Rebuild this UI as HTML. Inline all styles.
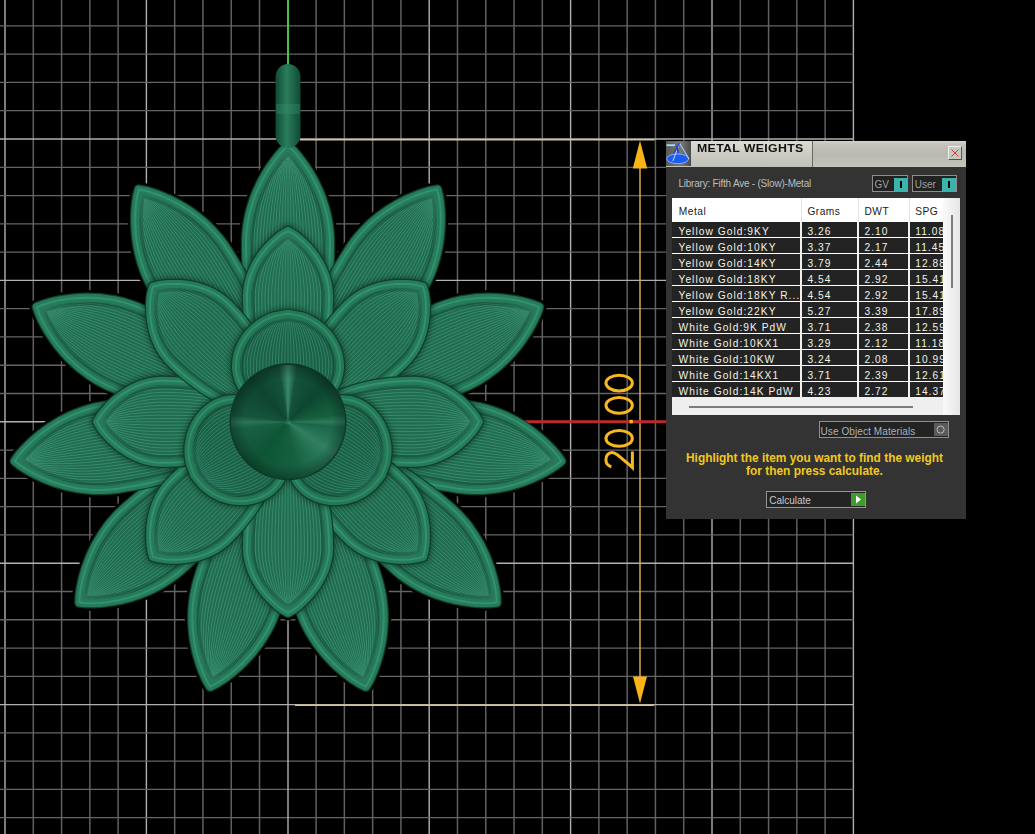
<!DOCTYPE html>
<html><head><meta charset="utf-8">
<style>
html,body{margin:0;padding:0;background:#000;width:1035px;height:834px;overflow:hidden;position:relative;font-family:"Liberation Sans",sans-serif;}
#scene{position:absolute;left:0;top:0;}
.dome{position:absolute;left:231px;top:364.8px;width:114px;height:114px;border-radius:50%;background:radial-gradient(circle at 50% 50%, rgba(120,200,160,0.35) 0, rgba(120,200,160,0) 4px, rgba(0,0,0,0) 44px, rgba(0,0,0,0.28) 57px),conic-gradient(from 0deg at 50% 50%, #3a8a6a 0deg, #15533b 10deg, #0d4630 45deg, #17603f 82deg, #2c7a5a 90deg, #1a6648 96deg, #2f7f60 125deg, #15603f 170deg, #0e5436 220deg, #185f43 262deg, #2a7356 270deg, #15543c 278deg, #0d4530 320deg, #14523a 350deg, #3a8a6a 360deg);}
.dlg{position:absolute;left:666px;top:141px;width:300px;height:377.5px;background:#333333;overflow:hidden;}
.dlg *{box-sizing:border-box;}
.tb{position:absolute;left:0;top:0;width:300px;height:25.5px;background:linear-gradient(#d4d4cc 0,#c4c4bc 3px,#b9b9b1 50%,#c3c3bb 100%);}
.ico{position:absolute;left:0;top:0;width:25px;height:25px;background:linear-gradient(90deg,#5a5a5a,#787878 60%,#4a4a4a);}
.ico svg{position:absolute;left:0;top:0}
.tab{position:absolute;left:25px;top:0;width:121.5px;height:25.5px;background:linear-gradient(#dcdcd4 0,#cfcfc7 40%,#c0c0b8 100%);border-right:1.5px solid #6a6a64;}
.ttl{position:absolute;left:5.5px;top:1.3px;font-weight:bold;font-size:11px;letter-spacing:0.3px;transform:scaleX(1.12);transform-origin:0 0;color:#111;line-height:13px}
.cls{position:absolute;left:282px;top:5px;width:14px;height:14px;background:#c8c8c0;border-top:1px solid #eee;border-left:1px solid #eee;border-right:1px solid #555;border-bottom:1px solid #555;}
.cls svg{position:absolute;left:-1px;top:-1px}
.lib{position:absolute;left:12.4px;top:36.5px;font-size:10px;color:#bdbdbd;line-height:12px;white-space:nowrap;letter-spacing:-0.22px}
.tg{position:absolute;border:1px solid #8e8e8e;background:#222;}
.tgt{position:absolute;left:1.5px;top:2.6px;font-size:10px;color:#a0a0a0;line-height:12px}
.teal{position:absolute;top:1.5px;width:13.2px;height:13.2px;background:#3cb4ae;}
.teal::after{content:"";position:absolute;left:5.5px;top:3px;width:2px;height:7px;background:#000;}
.tbl{position:absolute;left:6px;top:57px;width:287.5px;height:217.2px;background:#fff;}
.hdr{position:absolute;left:0;top:0;width:271px;height:24px;}
.hdr span{position:absolute;top:8px;font-size:10.2px;color:#1a1a1a;line-height:12px;letter-spacing:0.5px}
.h0{left:6.8px} .h1{left:135.4px} .h2{left:192.5px} .h3{left:243.2px}
.hdr::before{content:"";position:absolute;left:128.8px;top:0;width:1px;height:24px;background:#e4e4e4}
.hdr::after{content:"";position:absolute;left:185.7px;top:0;width:1px;height:24px;background:#e4e4e4}
.row{position:absolute;left:0;width:271px;height:14.8px;background:#232323;}
.row span{position:absolute;top:4px;font-size:10.2px;color:#f2f2ea;line-height:12px;letter-spacing:1.05px;white-space:nowrap}
.row .c0{left:6.5px} .row .c1{left:135.4px} .row .c2{left:192.5px} .row .c3{left:243.2px}
.row::before{content:"";position:absolute;left:128.3px;top:0;width:1.8px;height:14.8px;background:#f0f0f0}
.row::after{content:"";position:absolute;left:185.2px;top:0;width:1.8px;height:14.8px;background:#f0f0f0}
.c3{}
.row .sep{position:absolute;left:236.1px;top:0;width:1.8px;height:14.8px;background:#f0f0f0}
.hdr .sep{position:absolute;left:236.6px;top:0;width:1px;height:24px;background:#e4e4e4}
.vsb{position:absolute;left:271px;top:0;width:16.5px;height:217.2px;background:linear-gradient(90deg,#fafafa,#e6e6e6);}
.vsb::after{content:"";position:absolute;left:8px;top:17px;width:2px;height:73px;background:#7c7c7c}
.hsb{position:absolute;left:0;top:198.8px;width:271px;height:18.4px;background:#efefef;}
.hsb::after{content:"";position:absolute;left:16.5px;top:9.2px;width:224.5px;height:2px;background:#7c7c7c}
.uom{position:absolute;left:153px;top:280.3px;width:130px;height:16.5px;border:1px solid #8e8e8e;background:#232323;font-size:10px;color:#b0b0b0;line-height:12px;padding:3.5px 0 0 0.5px;white-space:nowrap;letter-spacing:0.1px}
.gbtn{position:absolute;left:114px;top:0.5px;width:13.5px;height:13.5px;background:#5a5a5a}
.gbtn svg{position:absolute;left:0;top:0}
.msg{position:absolute;left:-1.5px;top:311px;width:300px;text-align:center;font-weight:bold;font-size:11.9px;line-height:12.5px;color:#f2c81c;}
.calc{position:absolute;left:100.2px;top:350.3px;width:99.5px;height:16.7px;border:1px solid #959595;background:#232323;font-size:10px;color:#c8c8c8;line-height:12px;padding:2.5px 0 0 2px;letter-spacing:0px}
.gplay{position:absolute;left:84px;top:1px;width:13.5px;height:13px;background:#3f9c2a}
.gplay svg{position:absolute;left:0;top:0}
</style></head><body>
<svg id="scene" width="1035" height="834" viewBox="0 0 1035 834">
<defs><clipPath id="c1"><path d="M288.0,381.8 L276.9,376.9 L272.5,372.0 L269.1,367.1 L266.4,362.1 L264.1,357.2 L262.1,352.3 L260.3,347.4 L258.7,342.5 L257.2,337.6 L255.9,332.6 L254.7,327.7 L253.6,322.8 L252.6,317.9 L251.7,313.0 L250.9,308.1 L250.1,303.1 L249.4,298.2 L248.8,293.3 L248.3,288.4 L247.8,283.5 L247.4,278.6 L247.0,273.6 L246.7,268.7 L246.5,263.8 L246.3,258.9 L246.1,254.0 L246.0,249.1 L246.0,244.1 L246.1,239.2 L246.3,234.3 L246.8,229.4 L247.4,224.5 L248.3,219.6 L249.3,214.6 L250.5,209.7 L252.0,204.8 L253.6,199.9 L255.4,195.0 L257.5,190.1 L259.8,185.1 L262.2,180.2 L265.0,175.3 L267.9,170.4 L271.2,165.5 L274.7,160.6 L278.5,155.6 L282.8,150.7 L288.0,145.8 L288.0,145.8 L293.2,150.7 L297.5,155.6 L301.3,160.6 L304.8,165.5 L308.1,170.4 L311.0,175.3 L313.8,180.2 L316.2,185.1 L318.5,190.1 L320.6,195.0 L322.4,199.9 L324.0,204.8 L325.5,209.7 L326.7,214.6 L327.7,219.6 L328.6,224.5 L329.2,229.4 L329.7,234.3 L329.9,239.2 L330.0,244.1 L330.0,249.1 L329.9,254.0 L329.7,258.9 L329.5,263.8 L329.3,268.7 L329.0,273.6 L328.6,278.6 L328.2,283.5 L327.7,288.4 L327.2,293.3 L326.6,298.2 L325.9,303.1 L325.1,308.1 L324.3,313.0 L323.4,317.9 L322.4,322.8 L321.3,327.7 L320.1,332.6 L318.8,337.6 L317.3,342.5 L315.7,347.4 L313.9,352.3 L311.9,357.2 L309.6,362.1 L306.9,367.1 L303.5,372.0 L299.1,376.9 L288.0,381.8Z"/></clipPath><clipPath id="c2"><path d="M309.6,388.1 L302.9,378.0 L301.9,371.5 L301.7,365.5 L302.1,359.9 L302.8,354.6 L303.8,349.3 L304.9,344.2 L306.2,339.2 L307.7,334.3 L309.2,329.4 L310.8,324.6 L312.6,319.9 L314.4,315.2 L316.3,310.6 L318.3,306.0 L320.3,301.5 L322.4,297.0 L324.5,292.5 L326.7,288.1 L329.0,283.7 L331.3,279.3 L333.6,275.0 L336.0,270.7 L338.5,266.4 L341.0,262.2 L343.5,258.0 L346.1,253.8 L348.7,249.6 L351.4,245.5 L354.3,241.5 L357.4,237.6 L360.6,233.9 L363.9,230.2 L367.4,226.6 L371.1,223.1 L375.0,219.8 L379.0,216.5 L383.2,213.4 L387.6,210.3 L392.2,207.4 L396.9,204.6 L401.9,202.0 L407.0,199.4 L412.4,197.1 L418.0,194.8 L423.9,192.8 L430.2,190.9 L437.2,189.6 L437.2,189.6 L438.9,196.6 L439.9,203.0 L440.5,209.2 L440.8,215.3 L440.8,221.1 L440.6,226.9 L440.3,232.5 L439.7,238.0 L439.0,243.3 L438.0,248.6 L436.9,253.7 L435.6,258.7 L434.2,263.6 L432.6,268.4 L430.8,273.1 L428.8,277.7 L426.7,282.2 L424.4,286.6 L422.0,290.9 L419.4,295.0 L416.7,299.2 L414.0,303.3 L411.2,307.3 L408.4,311.3 L405.5,315.3 L402.6,319.3 L399.6,323.3 L396.6,327.2 L393.5,331.0 L390.4,334.9 L387.3,338.7 L384.0,342.5 L380.7,346.2 L377.4,349.9 L374.0,353.5 L370.5,357.1 L366.9,360.7 L363.2,364.1 L359.4,367.6 L355.6,370.9 L351.5,374.2 L347.4,377.3 L343.0,380.4 L338.4,383.3 L333.5,385.9 L328.0,388.3 L321.6,390.0 L309.6,388.1Z"/></clipPath><clipPath id="c3"><path d="M324.4,405.2 L324.2,393.0 L326.9,387.0 L330.0,381.9 L333.3,377.4 L336.8,373.2 L340.5,369.4 L344.2,365.7 L348.0,362.2 L351.8,358.8 L355.8,355.6 L359.7,352.4 L363.8,349.4 L367.8,346.4 L371.9,343.6 L376.0,340.8 L380.2,338.0 L384.4,335.4 L388.6,332.8 L392.9,330.2 L397.1,327.8 L401.4,325.3 L405.8,323.0 L410.1,320.6 L414.5,318.4 L418.9,316.2 L423.3,314.0 L427.7,311.9 L432.2,309.8 L436.7,307.8 L441.2,306.0 L445.9,304.4 L450.6,302.9 L455.5,301.6 L460.4,300.5 L465.4,299.6 L470.4,298.9 L475.6,298.3 L480.8,297.9 L486.1,297.8 L491.5,297.8 L497.1,298.0 L502.7,298.4 L508.4,299.1 L514.2,300.0 L520.1,301.1 L526.2,302.6 L532.4,304.5 L539.1,307.1 L539.1,307.1 L536.7,313.9 L534.1,319.9 L531.2,325.4 L528.2,330.6 L525.0,335.6 L521.8,340.4 L518.5,344.9 L515.0,349.2 L511.5,353.3 L507.9,357.2 L504.2,360.9 L500.4,364.4 L496.5,367.8 L492.5,370.9 L488.5,373.9 L484.4,376.7 L480.2,379.4 L475.9,381.8 L471.5,384.1 L467.1,386.2 L462.6,388.2 L458.1,390.2 L453.5,392.1 L449.0,394.0 L444.4,395.8 L439.8,397.5 L435.2,399.2 L430.5,400.9 L425.9,402.5 L421.2,404.1 L416.4,405.5 L411.7,407.0 L406.9,408.3 L402.1,409.6 L397.2,410.8 L392.3,412.0 L387.4,413.0 L382.4,414.0 L377.4,414.8 L372.3,415.5 L367.2,416.1 L362.0,416.5 L356.7,416.7 L351.2,416.6 L345.6,416.2 L339.8,415.2 L333.5,413.2 L324.4,405.2Z"/></clipPath><clipPath id="c4"><path d="M327.6,427.5 L334.0,417.2 L339.5,413.5 L344.9,410.9 L350.1,408.9 L355.3,407.3 L360.5,406.0 L365.6,405.0 L370.7,404.1 L375.8,403.3 L380.8,402.7 L385.9,402.2 L390.9,401.8 L395.9,401.6 L400.9,401.3 L405.9,401.2 L410.9,401.2 L415.8,401.2 L420.8,401.3 L425.7,401.5 L430.6,401.7 L435.6,402.0 L440.5,402.3 L445.4,402.7 L450.3,403.2 L455.2,403.7 L460.1,404.2 L465.0,404.8 L469.8,405.5 L474.7,406.3 L479.5,407.2 L484.3,408.4 L489.1,409.7 L493.8,411.3 L498.6,413.0 L503.3,414.9 L507.9,417.0 L512.6,419.3 L517.2,421.8 L521.7,424.6 L526.3,427.5 L530.8,430.7 L535.3,434.1 L539.7,437.7 L544.1,441.6 L548.5,445.8 L552.8,450.3 L557.1,455.2 L561.2,461.1 L561.2,461.1 L555.6,465.5 L550.1,469.1 L544.7,472.2 L539.3,475.0 L534.0,477.5 L528.7,479.7 L523.5,481.7 L518.2,483.4 L513.0,485.0 L507.9,486.3 L502.8,487.4 L497.7,488.4 L492.6,489.1 L487.6,489.6 L482.5,489.9 L477.6,490.0 L472.6,490.0 L467.7,489.7 L462.8,489.3 L457.9,488.7 L453.0,487.9 L448.2,487.1 L443.3,486.3 L438.5,485.4 L433.6,484.5 L428.8,483.5 L424.0,482.4 L419.2,481.3 L414.4,480.1 L409.6,478.9 L404.8,477.6 L400.1,476.2 L395.3,474.7 L390.6,473.2 L385.8,471.6 L381.1,469.9 L376.4,468.2 L371.7,466.3 L367.0,464.3 L362.4,462.1 L357.7,459.8 L353.1,457.3 L348.5,454.6 L344.0,451.7 L339.5,448.3 L335.1,444.3 L330.9,439.2 L327.6,427.5Z"/></clipPath><clipPath id="c5"><path d="M318.2,448.0 L329.2,442.8 L335.8,442.7 L341.7,443.4 L347.2,444.6 L352.5,446.0 L357.5,447.7 L362.4,449.6 L367.2,451.6 L371.8,453.7 L376.4,455.9 L380.9,458.2 L385.3,460.6 L389.7,463.1 L394.0,465.6 L398.3,468.2 L402.5,470.9 L406.7,473.6 L410.8,476.3 L414.8,479.2 L418.9,482.0 L422.9,484.9 L426.8,487.9 L430.7,490.8 L434.6,493.9 L438.5,496.9 L442.3,500.1 L446.0,503.2 L449.8,506.4 L453.4,509.7 L457.0,513.1 L460.4,516.7 L463.7,520.4 L466.9,524.2 L469.9,528.2 L472.8,532.4 L475.6,536.7 L478.2,541.1 L480.8,545.7 L483.1,550.5 L485.4,555.4 L487.4,560.5 L489.4,565.8 L491.2,571.3 L492.8,576.9 L494.2,582.8 L495.4,588.9 L496.3,595.4 L496.6,602.5 L496.6,602.5 L489.5,603.3 L482.9,603.3 L476.7,603.0 L470.7,602.4 L464.9,601.6 L459.2,600.6 L453.7,599.5 L448.4,598.1 L443.2,596.6 L438.1,595.0 L433.2,593.1 L428.4,591.1 L423.7,589.0 L419.2,586.7 L414.8,584.3 L410.6,581.7 L406.4,579.0 L402.4,576.1 L398.5,573.1 L394.8,569.9 L391.1,566.6 L387.4,563.4 L383.8,560.0 L380.2,556.7 L376.7,553.3 L373.1,549.8 L369.7,546.3 L366.2,542.8 L362.8,539.2 L359.5,535.6 L356.1,531.9 L352.9,528.1 L349.6,524.4 L346.5,520.5 L343.4,516.6 L340.3,512.6 L337.3,508.6 L334.4,504.5 L331.5,500.2 L328.7,495.9 L326.1,491.5 L323.6,486.9 L321.2,482.2 L319.0,477.2 L317.0,471.9 L315.5,466.2 L314.7,459.6 L318.2,448.0Z"/></clipPath><clipPath id="c6"><path d="M299.3,460.2 L311.3,461.8 L317.0,465.2 L321.5,469.0 L325.5,473.0 L329.1,477.0 L332.5,481.2 L335.6,485.4 L338.5,489.7 L341.3,494.0 L343.9,498.3 L346.5,502.7 L348.9,507.1 L351.2,511.5 L353.5,516.0 L355.7,520.5 L357.8,525.0 L359.8,529.5 L361.8,534.1 L363.7,538.6 L365.5,543.2 L367.3,547.8 L369.1,552.4 L370.7,557.0 L372.4,561.7 L373.9,566.4 L375.5,571.0 L376.9,575.7 L378.4,580.4 L379.7,585.2 L380.8,590.0 L381.8,594.8 L382.5,599.7 L383.1,604.7 L383.5,609.7 L383.7,614.7 L383.7,619.9 L383.5,625.0 L383.2,630.3 L382.6,635.6 L381.8,640.9 L380.8,646.3 L379.6,651.8 L378.1,657.4 L376.4,663.0 L374.4,668.7 L372.1,674.5 L369.4,680.4 L365.8,686.6 L365.8,686.6 L359.4,683.4 L353.9,679.9 L348.8,676.2 L344.1,672.5 L339.6,668.7 L335.3,664.8 L331.3,660.9 L327.6,656.8 L324.0,652.8 L320.7,648.6 L317.5,644.4 L314.6,640.2 L311.8,635.8 L309.2,631.5 L306.9,627.1 L304.7,622.6 L302.7,618.0 L300.8,613.4 L299.2,608.8 L297.8,604.1 L296.4,599.4 L295.1,594.6 L293.9,589.9 L292.7,585.1 L291.5,580.3 L290.4,575.5 L289.4,570.7 L288.4,565.9 L287.5,561.0 L286.6,556.1 L285.8,551.2 L285.1,546.3 L284.4,541.4 L283.8,536.5 L283.3,531.5 L282.9,526.5 L282.5,521.5 L282.3,516.4 L282.2,511.3 L282.2,506.2 L282.4,501.0 L282.7,495.8 L283.3,490.5 L284.1,485.1 L285.3,479.6 L287.1,474.0 L290.0,468.0 L299.3,460.2Z"/></clipPath><clipPath id="c7"><path d="M276.7,460.2 L286.0,468.0 L288.9,474.0 L290.7,479.6 L291.9,485.1 L292.7,490.5 L293.3,495.8 L293.6,501.0 L293.8,506.2 L293.8,511.3 L293.7,516.4 L293.5,521.5 L293.1,526.5 L292.7,531.5 L292.2,536.5 L291.6,541.4 L290.9,546.3 L290.2,551.2 L289.4,556.1 L288.5,561.0 L287.6,565.9 L286.6,570.7 L285.6,575.5 L284.5,580.3 L283.3,585.1 L282.1,589.9 L280.9,594.6 L279.6,599.4 L278.2,604.1 L276.8,608.8 L275.2,613.4 L273.3,618.0 L271.3,622.6 L269.1,627.1 L266.8,631.5 L264.2,635.8 L261.4,640.2 L258.5,644.4 L255.3,648.6 L252.0,652.8 L248.4,656.8 L244.7,660.9 L240.7,664.8 L236.4,668.7 L231.9,672.5 L227.2,676.2 L222.1,679.9 L216.6,683.4 L210.2,686.6 L210.2,686.6 L206.6,680.4 L203.9,674.5 L201.6,668.7 L199.6,663.0 L197.9,657.4 L196.4,651.8 L195.2,646.3 L194.2,640.9 L193.4,635.6 L192.8,630.3 L192.5,625.0 L192.3,619.9 L192.3,614.7 L192.5,609.7 L192.9,604.7 L193.5,599.7 L194.2,594.8 L195.2,590.0 L196.3,585.2 L197.6,580.4 L199.1,575.7 L200.5,571.0 L202.1,566.4 L203.6,561.7 L205.3,557.0 L206.9,552.4 L208.7,547.8 L210.5,543.2 L212.3,538.6 L214.2,534.1 L216.2,529.5 L218.2,525.0 L220.3,520.5 L222.5,516.0 L224.8,511.5 L227.1,507.1 L229.5,502.7 L232.1,498.3 L234.7,494.0 L237.5,489.7 L240.4,485.4 L243.5,481.2 L246.9,477.0 L250.5,473.0 L254.5,469.0 L259.0,465.2 L264.7,461.8 L276.7,460.2Z"/></clipPath><clipPath id="c8"><path d="M257.8,448.0 L261.3,459.6 L260.5,466.2 L259.0,471.9 L257.0,477.2 L254.8,482.2 L252.4,486.9 L249.9,491.5 L247.3,495.9 L244.5,500.2 L241.6,504.5 L238.7,508.6 L235.7,512.6 L232.6,516.6 L229.5,520.5 L226.4,524.4 L223.1,528.1 L219.9,531.9 L216.5,535.6 L213.2,539.2 L209.8,542.8 L206.3,546.3 L202.9,549.8 L199.3,553.3 L195.8,556.7 L192.2,560.0 L188.6,563.4 L184.9,566.6 L181.2,569.9 L177.5,573.1 L173.6,576.1 L169.6,579.0 L165.4,581.7 L161.2,584.3 L156.8,586.7 L152.3,589.0 L147.6,591.1 L142.8,593.1 L137.9,595.0 L132.8,596.6 L127.6,598.1 L122.3,599.5 L116.8,600.6 L111.1,601.6 L105.3,602.4 L99.3,603.0 L93.1,603.3 L86.5,603.3 L79.4,602.5 L79.4,602.5 L79.7,595.4 L80.6,588.9 L81.8,582.8 L83.2,576.9 L84.8,571.3 L86.6,565.8 L88.6,560.5 L90.6,555.4 L92.9,550.5 L95.2,545.7 L97.8,541.1 L100.4,536.7 L103.2,532.4 L106.1,528.2 L109.1,524.2 L112.3,520.4 L115.6,516.7 L119.0,513.1 L122.6,509.7 L126.2,506.4 L130.0,503.2 L133.7,500.1 L137.5,496.9 L141.4,493.9 L145.3,490.8 L149.2,487.9 L153.1,484.9 L157.1,482.0 L161.2,479.2 L165.2,476.3 L169.3,473.6 L173.5,470.9 L177.7,468.2 L182.0,465.6 L186.3,463.1 L190.7,460.6 L195.1,458.2 L199.6,455.9 L204.2,453.7 L208.8,451.6 L213.6,449.6 L218.5,447.7 L223.5,446.0 L228.8,444.6 L234.3,443.4 L240.2,442.7 L246.8,442.8 L257.8,448.0Z"/></clipPath><clipPath id="c9"><path d="M248.4,427.5 L245.1,439.2 L240.9,444.3 L236.5,448.3 L232.0,451.7 L227.5,454.6 L222.9,457.3 L218.3,459.8 L213.6,462.1 L209.0,464.3 L204.3,466.3 L199.6,468.2 L194.9,469.9 L190.2,471.6 L185.4,473.2 L180.7,474.7 L175.9,476.2 L171.2,477.6 L166.4,478.9 L161.6,480.1 L156.8,481.3 L152.0,482.4 L147.2,483.5 L142.4,484.5 L137.5,485.4 L132.7,486.3 L127.8,487.1 L123.0,487.9 L118.1,488.7 L113.2,489.3 L108.3,489.7 L103.4,490.0 L98.4,490.0 L93.5,489.9 L88.4,489.6 L83.4,489.1 L78.3,488.4 L73.2,487.4 L68.1,486.3 L63.0,485.0 L57.8,483.4 L52.5,481.7 L47.3,479.7 L42.0,477.5 L36.7,475.0 L31.3,472.2 L25.9,469.1 L20.4,465.5 L14.8,461.1 L14.8,461.1 L18.9,455.2 L23.2,450.3 L27.5,445.8 L31.9,441.6 L36.3,437.7 L40.7,434.1 L45.2,430.7 L49.7,427.5 L54.3,424.6 L58.8,421.8 L63.4,419.3 L68.1,417.0 L72.7,414.9 L77.4,413.0 L82.2,411.3 L86.9,409.7 L91.7,408.4 L96.5,407.2 L101.3,406.3 L106.2,405.5 L111.0,404.8 L115.9,404.2 L120.8,403.7 L125.7,403.2 L130.6,402.7 L135.5,402.3 L140.4,402.0 L145.4,401.7 L150.3,401.5 L155.2,401.3 L160.2,401.2 L165.1,401.2 L170.1,401.2 L175.1,401.3 L180.1,401.6 L185.1,401.8 L190.1,402.2 L195.2,402.7 L200.2,403.3 L205.3,404.1 L210.4,405.0 L215.5,406.0 L220.7,407.3 L225.9,408.9 L231.1,410.9 L236.5,413.5 L242.0,417.2 L248.4,427.5Z"/></clipPath><clipPath id="c10"><path d="M251.6,405.2 L242.5,413.2 L236.2,415.2 L230.4,416.2 L224.8,416.6 L219.3,416.7 L214.0,416.5 L208.8,416.1 L203.7,415.5 L198.6,414.8 L193.6,414.0 L188.6,413.0 L183.7,412.0 L178.8,410.8 L173.9,409.6 L169.1,408.3 L164.3,407.0 L159.6,405.5 L154.8,404.1 L150.1,402.5 L145.5,400.9 L140.8,399.2 L136.2,397.5 L131.6,395.8 L127.0,394.0 L122.5,392.1 L117.9,390.2 L113.4,388.2 L108.9,386.2 L104.5,384.1 L100.1,381.8 L95.8,379.4 L91.6,376.7 L87.5,373.9 L83.5,370.9 L79.5,367.8 L75.6,364.4 L71.8,360.9 L68.1,357.2 L64.5,353.3 L61.0,349.2 L57.5,344.9 L54.2,340.4 L51.0,335.6 L47.8,330.6 L44.8,325.4 L41.9,319.9 L39.3,313.9 L36.9,307.1 L36.9,307.1 L43.6,304.5 L49.8,302.6 L55.9,301.1 L61.8,300.0 L67.6,299.1 L73.3,298.4 L78.9,298.0 L84.5,297.8 L89.9,297.8 L95.2,297.9 L100.4,298.3 L105.6,298.9 L110.6,299.6 L115.6,300.5 L120.5,301.6 L125.4,302.9 L130.1,304.4 L134.8,306.0 L139.3,307.8 L143.8,309.8 L148.3,311.9 L152.7,314.0 L157.1,316.2 L161.5,318.4 L165.9,320.6 L170.2,323.0 L174.6,325.3 L178.9,327.8 L183.1,330.2 L187.4,332.8 L191.6,335.4 L195.8,338.0 L200.0,340.8 L204.1,343.6 L208.2,346.4 L212.2,349.4 L216.3,352.4 L220.2,355.6 L224.2,358.8 L228.0,362.2 L231.8,365.7 L235.5,369.4 L239.2,373.2 L242.7,377.4 L246.0,381.9 L249.1,387.0 L251.8,393.0 L251.6,405.2Z"/></clipPath><clipPath id="c11"><path d="M266.4,388.1 L254.4,390.0 L248.0,388.3 L242.5,385.9 L237.6,383.3 L233.0,380.4 L228.6,377.3 L224.5,374.2 L220.4,370.9 L216.6,367.6 L212.8,364.1 L209.1,360.7 L205.5,357.1 L202.0,353.5 L198.6,349.9 L195.3,346.2 L192.0,342.5 L188.7,338.7 L185.6,334.9 L182.5,331.0 L179.4,327.2 L176.4,323.3 L173.4,319.3 L170.5,315.3 L167.6,311.3 L164.8,307.3 L162.0,303.3 L159.3,299.2 L156.6,295.0 L154.0,290.9 L151.6,286.6 L149.3,282.2 L147.2,277.7 L145.2,273.1 L143.4,268.4 L141.8,263.6 L140.4,258.7 L139.1,253.7 L138.0,248.6 L137.0,243.3 L136.3,238.0 L135.7,232.5 L135.4,226.9 L135.2,221.1 L135.2,215.3 L135.5,209.2 L136.1,203.0 L137.1,196.6 L138.8,189.6 L138.8,189.6 L145.8,190.9 L152.1,192.8 L158.0,194.8 L163.6,197.1 L169.0,199.4 L174.1,202.0 L179.1,204.6 L183.8,207.4 L188.4,210.3 L192.8,213.4 L197.0,216.5 L201.0,219.8 L204.9,223.1 L208.6,226.6 L212.1,230.2 L215.4,233.9 L218.6,237.6 L221.7,241.5 L224.6,245.5 L227.3,249.6 L229.9,253.8 L232.5,258.0 L235.0,262.2 L237.5,266.4 L240.0,270.7 L242.4,275.0 L244.7,279.3 L247.0,283.7 L249.3,288.1 L251.5,292.5 L253.6,297.0 L255.7,301.5 L257.7,306.0 L259.7,310.6 L261.6,315.2 L263.4,319.9 L265.2,324.6 L266.8,329.4 L268.3,334.3 L269.8,339.2 L271.1,344.2 L272.2,349.3 L273.2,354.6 L273.9,359.9 L274.3,365.5 L274.1,371.5 L273.1,378.0 L266.4,388.1Z"/></clipPath><filter id="blur" x="-20%" y="-20%" width="140%" height="140%"><feGaussianBlur stdDeviation="3"/></filter><clipPath id="c12"><path d="M288.0,401.8 L279.9,398.2 L275.9,394.7 L272.7,391.1 L270.1,387.6 L267.7,384.0 L265.6,380.4 L263.7,376.9 L262.0,373.3 L260.4,369.7 L259.0,366.2 L257.7,362.6 L256.4,359.1 L255.3,355.5 L254.3,351.9 L253.3,348.4 L252.4,344.8 L251.6,341.2 L250.9,337.7 L250.2,334.1 L249.6,330.6 L249.1,327.0 L248.6,323.4 L248.2,319.9 L247.9,316.3 L247.6,312.7 L247.4,309.2 L247.2,305.6 L247.1,302.1 L247.0,298.5 L247.0,294.9 L247.2,291.4 L247.6,287.8 L248.2,284.2 L249.0,280.7 L250.0,277.1 L251.3,273.6 L252.7,270.0 L254.4,266.4 L256.3,262.9 L258.5,259.3 L260.8,255.7 L263.5,252.2 L266.4,248.6 L269.7,245.1 L273.3,241.5 L277.3,237.9 L281.9,234.4 L288.0,230.8 L288.0,230.8 L294.1,234.4 L298.7,237.9 L302.7,241.5 L306.3,245.1 L309.6,248.6 L312.5,252.2 L315.2,255.7 L317.5,259.3 L319.7,262.9 L321.6,266.4 L323.3,270.0 L324.7,273.6 L326.0,277.1 L327.0,280.7 L327.8,284.2 L328.4,287.8 L328.8,291.4 L329.0,294.9 L329.0,298.5 L328.9,302.1 L328.8,305.6 L328.6,309.2 L328.4,312.7 L328.1,316.3 L327.8,319.9 L327.4,323.4 L326.9,327.0 L326.4,330.6 L325.8,334.1 L325.1,337.7 L324.4,341.2 L323.6,344.8 L322.7,348.4 L321.7,351.9 L320.7,355.5 L319.6,359.1 L318.3,362.6 L317.0,366.2 L315.6,369.7 L314.0,373.3 L312.3,376.9 L310.4,380.4 L308.3,384.0 L305.9,387.6 L303.3,391.1 L300.1,394.7 L296.1,398.2 L288.0,401.8Z"/></clipPath><clipPath id="c13"><path d="M302.1,407.7 L299.0,399.4 L298.6,394.1 L298.9,389.3 L299.5,384.9 L300.4,380.7 L301.4,376.7 L302.6,372.9 L303.9,369.1 L305.3,365.5 L306.8,362.0 L308.4,358.5 L310.1,355.1 L311.8,351.8 L313.6,348.5 L315.4,345.3 L317.3,342.2 L319.2,339.1 L321.2,336.1 L323.3,333.1 L325.4,330.2 L327.5,327.3 L329.7,324.4 L332.0,321.6 L334.2,318.8 L336.5,316.1 L338.9,313.4 L341.3,310.8 L343.7,308.2 L346.2,305.6 L348.7,303.1 L351.4,300.7 L354.2,298.5 L357.1,296.4 L360.2,294.4 L363.5,292.6 L366.9,291.0 L370.4,289.5 L374.1,288.2 L378.0,287.0 L382.0,286.0 L386.2,285.2 L390.6,284.5 L395.2,284.1 L400.0,283.9 L405.1,283.9 L410.5,284.2 L416.2,285.0 L423.1,286.7 L423.1,286.7 L424.8,293.6 L425.6,299.3 L425.9,304.7 L425.9,309.8 L425.7,314.6 L425.3,319.2 L424.6,323.6 L423.8,327.8 L422.8,331.8 L421.6,335.7 L420.3,339.4 L418.8,342.9 L417.2,346.3 L415.4,349.6 L413.4,352.7 L411.3,355.6 L409.1,358.4 L406.7,361.1 L404.2,363.6 L401.6,366.1 L399.0,368.5 L396.4,370.9 L393.7,373.3 L391.0,375.6 L388.2,377.8 L385.4,380.1 L382.5,382.3 L379.6,384.4 L376.7,386.5 L373.7,388.6 L370.7,390.6 L367.6,392.5 L364.5,394.4 L361.3,396.2 L358.0,398.0 L354.7,399.7 L351.3,401.4 L347.8,403.0 L344.3,404.5 L340.7,405.9 L336.9,407.2 L333.1,408.4 L329.1,409.4 L324.9,410.3 L320.5,410.9 L315.7,411.2 L310.4,410.8 L302.1,407.7Z"/></clipPath><clipPath id="c14"><path d="M308.0,421.8 L311.6,413.7 L315.1,409.7 L318.7,406.5 L322.2,403.9 L325.8,401.5 L329.4,399.4 L332.9,397.5 L336.5,395.8 L340.1,394.2 L343.6,392.8 L347.2,391.5 L350.8,390.2 L354.3,389.1 L357.9,388.1 L361.4,387.1 L365.0,386.2 L368.6,385.4 L372.1,384.7 L375.7,384.0 L379.2,383.4 L382.8,382.9 L386.4,382.4 L389.9,382.0 L393.5,381.7 L397.1,381.4 L400.6,381.2 L404.2,381.0 L407.8,380.9 L411.3,380.8 L414.9,380.8 L418.4,381.0 L422.0,381.4 L425.6,382.0 L429.1,382.8 L432.7,383.8 L436.2,385.1 L439.8,386.5 L443.4,388.2 L446.9,390.1 L450.5,392.3 L454.1,394.6 L457.6,397.3 L461.2,400.2 L464.8,403.5 L468.3,407.1 L471.9,411.1 L475.4,415.7 L479.0,421.8 L479.0,421.8 L475.4,427.9 L471.9,432.5 L468.3,436.5 L464.8,440.1 L461.2,443.4 L457.6,446.3 L454.1,449.0 L450.5,451.3 L446.9,453.5 L443.4,455.4 L439.8,457.1 L436.2,458.5 L432.7,459.8 L429.1,460.8 L425.6,461.6 L422.0,462.2 L418.4,462.6 L414.9,462.8 L411.3,462.8 L407.8,462.7 L404.2,462.6 L400.6,462.4 L397.1,462.2 L393.5,461.9 L389.9,461.6 L386.4,461.2 L382.8,460.7 L379.2,460.2 L375.7,459.6 L372.1,458.9 L368.6,458.2 L365.0,457.4 L361.4,456.5 L357.9,455.5 L354.3,454.5 L350.8,453.4 L347.2,452.1 L343.6,450.8 L340.1,449.4 L336.5,447.8 L332.9,446.1 L329.4,444.2 L325.8,442.1 L322.2,439.7 L318.7,437.1 L315.1,433.9 L311.6,429.9 L308.0,421.8Z"/></clipPath><clipPath id="c15"><path d="M302.1,435.9 L310.4,432.8 L315.7,432.4 L320.5,432.7 L324.9,433.3 L329.1,434.2 L333.1,435.2 L336.9,436.4 L340.7,437.7 L344.3,439.1 L347.8,440.6 L351.3,442.2 L354.7,443.9 L358.0,445.6 L361.3,447.4 L364.5,449.2 L367.6,451.1 L370.7,453.0 L373.7,455.0 L376.7,457.1 L379.6,459.2 L382.5,461.3 L385.4,463.5 L388.2,465.8 L391.0,468.0 L393.7,470.3 L396.4,472.7 L399.0,475.1 L401.6,477.5 L404.2,480.0 L406.7,482.5 L409.1,485.2 L411.3,488.0 L413.4,490.9 L415.4,494.0 L417.2,497.3 L418.8,500.7 L420.3,504.2 L421.6,507.9 L422.8,511.8 L423.8,515.8 L424.6,520.0 L425.3,524.4 L425.7,529.0 L425.9,533.8 L425.9,538.9 L425.6,544.3 L424.8,550.0 L423.1,556.9 L423.1,556.9 L416.2,558.6 L410.5,559.4 L405.1,559.7 L400.0,559.7 L395.2,559.5 L390.6,559.1 L386.2,558.4 L382.0,557.6 L378.0,556.6 L374.1,555.4 L370.4,554.1 L366.9,552.6 L363.5,551.0 L360.2,549.2 L357.1,547.2 L354.2,545.1 L351.4,542.9 L348.7,540.5 L346.2,538.0 L343.7,535.4 L341.3,532.8 L338.9,530.2 L336.5,527.5 L334.2,524.8 L332.0,522.0 L329.7,519.2 L327.5,516.3 L325.4,513.4 L323.3,510.5 L321.2,507.5 L319.2,504.5 L317.3,501.4 L315.4,498.3 L313.6,495.1 L311.8,491.8 L310.1,488.5 L308.4,485.1 L306.8,481.6 L305.3,478.1 L303.9,474.5 L302.6,470.7 L301.4,466.9 L300.4,462.9 L299.5,458.7 L298.9,454.3 L298.6,449.5 L299.0,444.2 L302.1,435.9Z"/></clipPath><clipPath id="c16"><path d="M288.0,441.8 L296.1,445.4 L300.1,448.9 L303.3,452.5 L305.9,456.1 L308.3,459.6 L310.4,463.2 L312.3,466.7 L314.0,470.3 L315.6,473.9 L317.0,477.4 L318.3,481.0 L319.6,484.6 L320.7,488.1 L321.7,491.7 L322.7,495.2 L323.6,498.8 L324.4,502.4 L325.1,505.9 L325.8,509.5 L326.4,513.0 L326.9,516.6 L327.4,520.2 L327.8,523.7 L328.1,527.3 L328.4,530.9 L328.6,534.4 L328.8,538.0 L328.9,541.5 L329.0,545.1 L329.0,548.7 L328.8,552.2 L328.4,555.8 L327.8,559.4 L327.0,562.9 L326.0,566.5 L324.7,570.0 L323.3,573.6 L321.6,577.2 L319.7,580.7 L317.5,584.3 L315.2,587.9 L312.5,591.4 L309.6,595.0 L306.3,598.5 L302.7,602.1 L298.7,605.7 L294.1,609.2 L288.0,612.8 L288.0,612.8 L281.9,609.2 L277.3,605.7 L273.3,602.1 L269.7,598.5 L266.4,595.0 L263.5,591.4 L260.8,587.9 L258.5,584.3 L256.3,580.7 L254.4,577.2 L252.7,573.6 L251.3,570.0 L250.0,566.5 L249.0,562.9 L248.2,559.4 L247.6,555.8 L247.2,552.2 L247.0,548.7 L247.0,545.1 L247.1,541.5 L247.2,538.0 L247.4,534.4 L247.6,530.9 L247.9,527.3 L248.2,523.7 L248.6,520.2 L249.1,516.6 L249.6,513.0 L250.2,509.5 L250.9,505.9 L251.6,502.4 L252.4,498.8 L253.3,495.2 L254.3,491.7 L255.3,488.1 L256.4,484.6 L257.7,481.0 L259.0,477.4 L260.4,473.9 L262.0,470.3 L263.7,466.7 L265.6,463.2 L267.7,459.6 L270.1,456.1 L272.7,452.5 L275.9,448.9 L279.9,445.4 L288.0,441.8Z"/></clipPath><clipPath id="c17"><path d="M273.9,435.9 L277.0,444.2 L277.4,449.5 L277.1,454.3 L276.5,458.7 L275.6,462.9 L274.6,466.9 L273.4,470.7 L272.1,474.5 L270.7,478.1 L269.2,481.6 L267.6,485.1 L265.9,488.5 L264.2,491.8 L262.4,495.1 L260.6,498.3 L258.7,501.4 L256.8,504.5 L254.8,507.5 L252.7,510.5 L250.6,513.4 L248.5,516.3 L246.3,519.2 L244.0,522.0 L241.8,524.8 L239.5,527.5 L237.1,530.2 L234.7,532.8 L232.3,535.4 L229.8,538.0 L227.3,540.5 L224.6,542.9 L221.8,545.1 L218.9,547.2 L215.8,549.2 L212.5,551.0 L209.1,552.6 L205.6,554.1 L201.9,555.4 L198.0,556.6 L194.0,557.6 L189.8,558.4 L185.4,559.1 L180.8,559.5 L176.0,559.7 L170.9,559.7 L165.5,559.4 L159.8,558.6 L152.9,556.9 L152.9,556.9 L151.2,550.0 L150.4,544.3 L150.1,538.9 L150.1,533.8 L150.3,529.0 L150.7,524.4 L151.4,520.0 L152.2,515.8 L153.2,511.8 L154.4,507.9 L155.7,504.2 L157.2,500.7 L158.8,497.3 L160.6,494.0 L162.6,490.9 L164.7,488.0 L166.9,485.2 L169.3,482.5 L171.8,480.0 L174.4,477.5 L177.0,475.1 L179.6,472.7 L182.3,470.3 L185.0,468.0 L187.8,465.8 L190.6,463.5 L193.5,461.3 L196.4,459.2 L199.3,457.1 L202.3,455.0 L205.3,453.0 L208.4,451.1 L211.5,449.2 L214.7,447.4 L218.0,445.6 L221.3,443.9 L224.7,442.2 L228.2,440.6 L231.7,439.1 L235.3,437.7 L239.1,436.4 L242.9,435.2 L246.9,434.2 L251.1,433.3 L255.5,432.7 L260.3,432.4 L265.6,432.8 L273.9,435.9Z"/></clipPath><clipPath id="c18"><path d="M268.0,421.8 L264.4,429.9 L260.9,433.9 L257.3,437.1 L253.8,439.7 L250.2,442.1 L246.6,444.2 L243.1,446.1 L239.5,447.8 L235.9,449.4 L232.4,450.8 L228.8,452.1 L225.2,453.4 L221.7,454.5 L218.1,455.5 L214.6,456.5 L211.0,457.4 L207.4,458.2 L203.9,458.9 L200.3,459.6 L196.8,460.2 L193.2,460.7 L189.6,461.2 L186.1,461.6 L182.5,461.9 L178.9,462.2 L175.4,462.4 L171.8,462.6 L168.2,462.7 L164.7,462.8 L161.1,462.8 L157.6,462.6 L154.0,462.2 L150.4,461.6 L146.9,460.8 L143.3,459.8 L139.8,458.5 L136.2,457.1 L132.6,455.4 L129.1,453.5 L125.5,451.3 L121.9,449.0 L118.4,446.3 L114.8,443.4 L111.2,440.1 L107.7,436.5 L104.1,432.5 L100.6,427.9 L97.0,421.8 L97.0,421.8 L100.6,415.7 L104.1,411.1 L107.7,407.1 L111.2,403.5 L114.8,400.2 L118.4,397.3 L121.9,394.6 L125.5,392.3 L129.1,390.1 L132.6,388.2 L136.2,386.5 L139.8,385.1 L143.3,383.8 L146.9,382.8 L150.4,382.0 L154.0,381.4 L157.6,381.0 L161.1,380.8 L164.7,380.8 L168.2,380.9 L171.8,381.0 L175.4,381.2 L178.9,381.4 L182.5,381.7 L186.1,382.0 L189.6,382.4 L193.2,382.9 L196.8,383.4 L200.3,384.0 L203.9,384.7 L207.4,385.4 L211.0,386.2 L214.6,387.1 L218.1,388.1 L221.7,389.1 L225.2,390.2 L228.8,391.5 L232.4,392.8 L235.9,394.2 L239.5,395.8 L243.1,397.5 L246.6,399.4 L250.2,401.5 L253.8,403.9 L257.3,406.5 L260.9,409.7 L264.4,413.7 L268.0,421.8Z"/></clipPath><clipPath id="c19"><path d="M273.9,407.7 L265.6,410.8 L260.3,411.2 L255.5,410.9 L251.1,410.3 L246.9,409.4 L242.9,408.4 L239.1,407.2 L235.3,405.9 L231.7,404.5 L228.2,403.0 L224.7,401.4 L221.3,399.7 L218.0,398.0 L214.7,396.2 L211.5,394.4 L208.4,392.5 L205.3,390.6 L202.3,388.6 L199.3,386.5 L196.4,384.4 L193.5,382.3 L190.6,380.1 L187.8,377.8 L185.0,375.6 L182.3,373.3 L179.6,370.9 L177.0,368.5 L174.4,366.1 L171.8,363.6 L169.3,361.1 L166.9,358.4 L164.7,355.6 L162.6,352.7 L160.6,349.6 L158.8,346.3 L157.2,342.9 L155.7,339.4 L154.4,335.7 L153.2,331.8 L152.2,327.8 L151.4,323.6 L150.7,319.2 L150.3,314.6 L150.1,309.8 L150.1,304.7 L150.4,299.3 L151.2,293.6 L152.9,286.7 L152.9,286.7 L159.8,285.0 L165.5,284.2 L170.9,283.9 L176.0,283.9 L180.8,284.1 L185.4,284.5 L189.8,285.2 L194.0,286.0 L198.0,287.0 L201.9,288.2 L205.6,289.5 L209.1,291.0 L212.5,292.6 L215.8,294.4 L218.9,296.4 L221.8,298.5 L224.6,300.7 L227.3,303.1 L229.8,305.6 L232.3,308.2 L234.7,310.8 L237.1,313.4 L239.5,316.1 L241.8,318.8 L244.0,321.6 L246.3,324.4 L248.5,327.3 L250.6,330.2 L252.7,333.1 L254.8,336.1 L256.8,339.1 L258.7,342.2 L260.6,345.3 L262.4,348.5 L264.2,351.8 L265.9,355.1 L267.6,358.5 L269.2,362.0 L270.7,365.5 L272.1,369.1 L273.4,372.9 L274.6,376.7 L275.6,380.7 L276.5,384.9 L277.1,389.3 L277.4,394.1 L277.0,399.4 L273.9,407.7Z"/></clipPath><clipPath id="c20"><path d="M288.0,421.8 L281.1,419.6 L276.2,417.3 L272.0,415.1 L268.2,412.8 L264.8,410.6 L261.6,408.3 L258.7,406.1 L256.0,403.8 L253.6,401.6 L251.3,399.3 L249.2,397.1 L247.3,394.8 L245.5,392.6 L243.9,390.3 L242.5,388.1 L241.2,385.8 L240.0,383.6 L239.0,381.3 L238.2,379.1 L237.5,376.8 L236.9,374.6 L236.5,372.3 L236.2,370.1 L236.0,367.8 L236.0,365.6 L236.1,363.3 L236.3,361.1 L236.6,358.8 L237.0,356.6 L237.5,354.3 L238.2,352.1 L238.9,349.8 L239.8,347.6 L240.8,345.3 L241.9,343.1 L243.2,340.8 L244.6,338.6 L246.2,336.3 L248.0,334.1 L249.9,331.8 L252.1,329.6 L254.6,327.3 L257.4,325.1 L260.6,322.8 L264.3,320.6 L268.8,318.3 L274.7,316.1 L288.0,313.8 L288.0,313.8 L301.3,316.1 L307.2,318.3 L311.7,320.6 L315.4,322.8 L318.6,325.1 L321.4,327.3 L323.9,329.6 L326.1,331.8 L328.0,334.1 L329.8,336.3 L331.4,338.6 L332.8,340.8 L334.1,343.1 L335.2,345.3 L336.2,347.6 L337.1,349.8 L337.8,352.1 L338.5,354.3 L339.0,356.6 L339.4,358.8 L339.7,361.1 L339.9,363.3 L340.0,365.6 L340.0,367.8 L339.8,370.1 L339.5,372.3 L339.1,374.6 L338.5,376.8 L337.8,379.1 L337.0,381.3 L336.0,383.6 L334.8,385.8 L333.5,388.1 L332.1,390.3 L330.5,392.6 L328.7,394.8 L326.8,397.1 L324.7,399.3 L322.4,401.6 L320.0,403.8 L317.3,406.1 L314.4,408.3 L311.2,410.6 L307.8,412.8 L304.0,415.1 L299.8,417.3 L294.9,419.6 L288.0,421.8Z"/></clipPath><clipPath id="c21"><path d="M288.0,421.8 L293.4,417.0 L297.8,413.9 L301.8,411.3 L305.7,409.2 L309.3,407.3 L312.9,405.7 L316.3,404.3 L319.6,403.1 L322.8,402.1 L325.8,401.2 L328.8,400.6 L331.8,400.0 L334.6,399.6 L337.3,399.4 L340.0,399.2 L342.6,399.2 L345.1,399.4 L347.6,399.6 L349.9,400.0 L352.2,400.5 L354.5,401.2 L356.6,401.9 L358.7,402.8 L360.8,403.8 L362.7,404.9 L364.6,406.1 L366.5,407.4 L368.3,408.8 L370.0,410.3 L371.7,411.8 L373.3,413.5 L374.9,415.3 L376.4,417.2 L377.9,419.2 L379.2,421.3 L380.6,423.5 L381.8,425.8 L382.9,428.3 L384.0,431.0 L385.0,433.8 L385.8,436.9 L386.5,440.1 L387.1,443.6 L387.5,447.5 L387.6,451.9 L387.2,456.9 L386.2,463.2 L381.5,475.8 L381.5,475.8 L372.9,486.2 L368.0,490.2 L363.8,493.0 L360.0,495.1 L356.5,496.7 L353.1,498.0 L350.0,499.0 L346.9,499.8 L344.0,500.4 L341.1,500.8 L338.4,501.0 L335.7,501.1 L333.2,501.1 L330.6,500.9 L328.2,500.7 L325.8,500.3 L323.5,499.8 L321.2,499.3 L319.0,498.6 L316.9,497.8 L314.8,497.0 L312.7,496.0 L310.7,495.0 L308.8,493.8 L306.9,492.6 L305.1,491.2 L303.4,489.7 L301.7,488.1 L300.1,486.3 L298.6,484.5 L297.1,482.5 L295.8,480.4 L294.5,478.1 L293.2,475.7 L292.1,473.2 L291.0,470.6 L290.0,467.8 L289.1,464.9 L288.3,461.7 L287.6,458.5 L287.0,455.0 L286.5,451.4 L286.1,447.5 L285.9,443.4 L285.9,439.0 L286.0,434.2 L286.5,428.9 L288.0,421.8Z"/></clipPath><clipPath id="c22"><path d="M288.0,421.8 L289.5,428.9 L290.0,434.2 L290.1,439.0 L290.1,443.4 L289.9,447.5 L289.5,451.4 L289.0,455.0 L288.4,458.5 L287.7,461.7 L286.9,464.9 L286.0,467.8 L285.0,470.6 L283.9,473.2 L282.8,475.7 L281.5,478.1 L280.2,480.4 L278.9,482.5 L277.4,484.5 L275.9,486.3 L274.3,488.1 L272.6,489.7 L270.9,491.2 L269.1,492.6 L267.2,493.8 L265.3,495.0 L263.3,496.0 L261.2,497.0 L259.1,497.8 L257.0,498.6 L254.8,499.3 L252.5,499.8 L250.2,500.3 L247.8,500.7 L245.4,500.9 L242.8,501.1 L240.3,501.1 L237.6,501.0 L234.9,500.8 L232.0,500.4 L229.1,499.8 L226.0,499.0 L222.9,498.0 L219.5,496.7 L216.0,495.1 L212.2,493.0 L208.0,490.2 L203.1,486.2 L194.5,475.8 L194.5,475.8 L189.8,463.2 L188.8,456.9 L188.4,451.9 L188.5,447.5 L188.9,443.6 L189.5,440.1 L190.2,436.9 L191.0,433.8 L192.0,431.0 L193.1,428.3 L194.2,425.8 L195.4,423.5 L196.8,421.3 L198.1,419.2 L199.6,417.2 L201.1,415.3 L202.7,413.5 L204.3,411.8 L206.0,410.3 L207.7,408.8 L209.5,407.4 L211.4,406.1 L213.3,404.9 L215.2,403.8 L217.3,402.8 L219.4,401.9 L221.5,401.2 L223.8,400.5 L226.1,400.0 L228.4,399.6 L230.9,399.4 L233.4,399.2 L236.0,399.2 L238.7,399.4 L241.4,399.6 L244.2,400.0 L247.2,400.6 L250.2,401.2 L253.2,402.1 L256.4,403.1 L259.7,404.3 L263.1,405.7 L266.7,407.3 L270.3,409.2 L274.2,411.3 L278.2,413.9 L282.6,417.0 L288.0,421.8Z"/></clipPath><linearGradient id="dome" x1="0" y1="0" x2="0" y2="1"><stop offset="0" stop-color="#073524"/><stop offset="0.3" stop-color="#0f4b35"/><stop offset="0.47" stop-color="#1a6346"/><stop offset="0.5" stop-color="#2a7656"/><stop offset="0.53" stop-color="#15603f"/><stop offset="1" stop-color="#0b4e34"/></linearGradient><radialGradient id="domeR" cx="0.5" cy="0.5" r="0.5"><stop offset="0.8" stop-color="#000" stop-opacity="0"/><stop offset="1" stop-color="#000" stop-opacity="0.3"/></radialGradient><radialGradient id="spec" cx="0.5" cy="0.5" r="0.5"><stop offset="0" stop-color="#6fc0a0" stop-opacity="0.7"/><stop offset="1" stop-color="#6fc0a0" stop-opacity="0"/></radialGradient><linearGradient id="bail" x1="0" y1="0" x2="1" y2="0"><stop offset="0" stop-color="#0f4a34"/><stop offset="0.45" stop-color="#2a7d5c"/><stop offset="1" stop-color="#0f4a34"/></linearGradient></defs>
<line x1="5.00" y1="0" x2="5.00" y2="834" stroke="#b0b0b0" stroke-width="1.4"/>
<line x1="33.28" y1="0" x2="33.28" y2="834" stroke="#606060" stroke-width="1.5"/>
<line x1="61.56" y1="0" x2="61.56" y2="834" stroke="#606060" stroke-width="1.5"/>
<line x1="89.84" y1="0" x2="89.84" y2="834" stroke="#606060" stroke-width="1.5"/>
<line x1="118.12" y1="0" x2="118.12" y2="834" stroke="#606060" stroke-width="1.5"/>
<line x1="146.40" y1="0" x2="146.40" y2="834" stroke="#b0b0b0" stroke-width="1.4"/>
<line x1="174.68" y1="0" x2="174.68" y2="834" stroke="#606060" stroke-width="1.5"/>
<line x1="202.96" y1="0" x2="202.96" y2="834" stroke="#606060" stroke-width="1.5"/>
<line x1="231.24" y1="0" x2="231.24" y2="834" stroke="#606060" stroke-width="1.5"/>
<line x1="259.52" y1="0" x2="259.52" y2="834" stroke="#606060" stroke-width="1.5"/>
<line x1="316.08" y1="0" x2="316.08" y2="834" stroke="#606060" stroke-width="1.5"/>
<line x1="344.36" y1="0" x2="344.36" y2="834" stroke="#606060" stroke-width="1.5"/>
<line x1="372.64" y1="0" x2="372.64" y2="834" stroke="#606060" stroke-width="1.5"/>
<line x1="400.92" y1="0" x2="400.92" y2="834" stroke="#606060" stroke-width="1.5"/>
<line x1="429.20" y1="0" x2="429.20" y2="834" stroke="#b0b0b0" stroke-width="1.4"/>
<line x1="457.48" y1="0" x2="457.48" y2="834" stroke="#606060" stroke-width="1.5"/>
<line x1="485.76" y1="0" x2="485.76" y2="834" stroke="#606060" stroke-width="1.5"/>
<line x1="514.04" y1="0" x2="514.04" y2="834" stroke="#606060" stroke-width="1.5"/>
<line x1="542.32" y1="0" x2="542.32" y2="834" stroke="#606060" stroke-width="1.5"/>
<line x1="570.60" y1="0" x2="570.60" y2="834" stroke="#b0b0b0" stroke-width="1.4"/>
<line x1="598.88" y1="0" x2="598.88" y2="834" stroke="#606060" stroke-width="1.5"/>
<line x1="627.16" y1="0" x2="627.16" y2="834" stroke="#606060" stroke-width="1.5"/>
<line x1="655.44" y1="0" x2="655.44" y2="834" stroke="#606060" stroke-width="1.5"/>
<line x1="683.72" y1="0" x2="683.72" y2="834" stroke="#606060" stroke-width="1.5"/>
<line x1="712.00" y1="0" x2="712.00" y2="834" stroke="#b0b0b0" stroke-width="1.4"/>
<line x1="740.28" y1="0" x2="740.28" y2="834" stroke="#606060" stroke-width="1.5"/>
<line x1="768.56" y1="0" x2="768.56" y2="834" stroke="#606060" stroke-width="1.5"/>
<line x1="796.84" y1="0" x2="796.84" y2="834" stroke="#606060" stroke-width="1.5"/>
<line x1="825.12" y1="0" x2="825.12" y2="834" stroke="#606060" stroke-width="1.5"/>
<line x1="853.40" y1="0" x2="853.40" y2="834" stroke="#b0b0b0" stroke-width="1.4"/>
<line x1="0" y1="25.88" x2="853.4" y2="25.88" stroke="#646464" stroke-width="1.3"/>
<line x1="0" y1="54.16" x2="853.4" y2="54.16" stroke="#646464" stroke-width="1.3"/>
<line x1="0" y1="82.44" x2="853.4" y2="82.44" stroke="#646464" stroke-width="1.3"/>
<line x1="0" y1="110.72" x2="853.4" y2="110.72" stroke="#646464" stroke-width="1.3"/>
<line x1="0" y1="139.00" x2="853.4" y2="139.00" stroke="#b0b0b0" stroke-width="1.4"/>
<line x1="0" y1="167.28" x2="853.4" y2="167.28" stroke="#646464" stroke-width="1.3"/>
<line x1="0" y1="195.56" x2="853.4" y2="195.56" stroke="#646464" stroke-width="1.3"/>
<line x1="0" y1="223.84" x2="853.4" y2="223.84" stroke="#646464" stroke-width="1.3"/>
<line x1="0" y1="252.12" x2="853.4" y2="252.12" stroke="#646464" stroke-width="1.3"/>
<line x1="0" y1="280.40" x2="853.4" y2="280.40" stroke="#b0b0b0" stroke-width="1.4"/>
<line x1="0" y1="308.68" x2="853.4" y2="308.68" stroke="#646464" stroke-width="1.3"/>
<line x1="0" y1="336.96" x2="853.4" y2="336.96" stroke="#646464" stroke-width="1.3"/>
<line x1="0" y1="365.24" x2="853.4" y2="365.24" stroke="#646464" stroke-width="1.3"/>
<line x1="0" y1="393.52" x2="853.4" y2="393.52" stroke="#646464" stroke-width="1.3"/>
<line x1="0" y1="450.08" x2="853.4" y2="450.08" stroke="#646464" stroke-width="1.3"/>
<line x1="0" y1="478.36" x2="853.4" y2="478.36" stroke="#646464" stroke-width="1.3"/>
<line x1="0" y1="506.64" x2="853.4" y2="506.64" stroke="#646464" stroke-width="1.3"/>
<line x1="0" y1="534.92" x2="853.4" y2="534.92" stroke="#646464" stroke-width="1.3"/>
<line x1="0" y1="563.20" x2="853.4" y2="563.20" stroke="#b0b0b0" stroke-width="1.4"/>
<line x1="0" y1="591.48" x2="853.4" y2="591.48" stroke="#646464" stroke-width="1.3"/>
<line x1="0" y1="619.76" x2="853.4" y2="619.76" stroke="#646464" stroke-width="1.3"/>
<line x1="0" y1="648.04" x2="853.4" y2="648.04" stroke="#646464" stroke-width="1.3"/>
<line x1="0" y1="676.32" x2="853.4" y2="676.32" stroke="#646464" stroke-width="1.3"/>
<line x1="0" y1="704.60" x2="853.4" y2="704.60" stroke="#b0b0b0" stroke-width="1.4"/>
<line x1="0" y1="732.88" x2="853.4" y2="732.88" stroke="#646464" stroke-width="1.3"/>
<line x1="0" y1="761.16" x2="853.4" y2="761.16" stroke="#646464" stroke-width="1.3"/>
<line x1="0" y1="789.44" x2="853.4" y2="789.44" stroke="#646464" stroke-width="1.3"/>
<line x1="0" y1="817.72" x2="853.4" y2="817.72" stroke="#646464" stroke-width="1.3"/>
<line x1="288.0" y1="0" x2="288.0" y2="834" stroke="#b0b0b0" stroke-width="1.4"/>
<line x1="0" y1="421.8" x2="853.4" y2="421.8" stroke="#b0b0b0" stroke-width="1.4"/>
<line x1="288.0" y1="0" x2="288.0" y2="70" stroke="#3ad13a" stroke-width="1.6"/>

<line x1="300" y1="139.8" x2="654.5" y2="139.8" stroke="#dcc08c" stroke-width="1.6"/>
<line x1="295" y1="705.3" x2="654" y2="705.3" stroke="#dcc08c" stroke-width="1.6"/>
<line x1="640" y1="165" x2="640" y2="680" stroke="#d8a84c" stroke-width="1.5"/>
<polygon points="640,140.5 647.2,168.5 632.8,168.5" fill="#f8b418"/>
<polygon points="640,703.5 647,676.6 633,676.6" fill="#f8b418"/>
<g transform="translate(633.9,469.4) rotate(-90)" fill="none" stroke="#f8b820" stroke-width="3">
<path d="M2.6,-22.5 C3.5,-26.5 6.5,-28 9.8,-28 C13.6,-28 17,-25.5 17,-21.8 C17,-18.5 14,-15.5 1.8,-1.5 L18,-1.5"/>
<ellipse cx="31" cy="-14.75" rx="7.9" ry="13.2"/>
<ellipse cx="64.05" cy="-14.75" rx="7.9" ry="13.2"/>
<ellipse cx="86.35" cy="-14.75" rx="7.9" ry="13.2"/>
<rect x="46" y="-4.3" width="3.2" height="3.2" fill="#f8b820" stroke="none"/>
</g>
<path d="M288.0,381.8 L276.9,376.9 L272.5,372.0 L269.1,367.1 L266.4,362.1 L264.1,357.2 L262.1,352.3 L260.3,347.4 L258.7,342.5 L257.2,337.6 L255.9,332.6 L254.7,327.7 L253.6,322.8 L252.6,317.9 L251.7,313.0 L250.9,308.1 L250.1,303.1 L249.4,298.2 L248.8,293.3 L248.3,288.4 L247.8,283.5 L247.4,278.6 L247.0,273.6 L246.7,268.7 L246.5,263.8 L246.3,258.9 L246.1,254.0 L246.0,249.1 L246.0,244.1 L246.1,239.2 L246.3,234.3 L246.8,229.4 L247.4,224.5 L248.3,219.6 L249.3,214.6 L250.5,209.7 L252.0,204.8 L253.6,199.9 L255.4,195.0 L257.5,190.1 L259.8,185.1 L262.2,180.2 L265.0,175.3 L267.9,170.4 L271.2,165.5 L274.7,160.6 L278.5,155.6 L282.8,150.7 L288.0,145.8 L288.0,145.8 L293.2,150.7 L297.5,155.6 L301.3,160.6 L304.8,165.5 L308.1,170.4 L311.0,175.3 L313.8,180.2 L316.2,185.1 L318.5,190.1 L320.6,195.0 L322.4,199.9 L324.0,204.8 L325.5,209.7 L326.7,214.6 L327.7,219.6 L328.6,224.5 L329.2,229.4 L329.7,234.3 L329.9,239.2 L330.0,244.1 L330.0,249.1 L329.9,254.0 L329.7,258.9 L329.5,263.8 L329.3,268.7 L329.0,273.6 L328.6,278.6 L328.2,283.5 L327.7,288.4 L327.2,293.3 L326.6,298.2 L325.9,303.1 L325.1,308.1 L324.3,313.0 L323.4,317.9 L322.4,322.8 L321.3,327.7 L320.1,332.6 L318.8,337.6 L317.3,342.5 L315.7,347.4 L313.9,352.3 L311.9,357.2 L309.6,362.1 L306.9,367.1 L303.5,372.0 L299.1,376.9 L288.0,381.8Z" fill="#000" stroke="#000" stroke-width="15" stroke-linejoin="round"/><path d="M309.6,388.1 L302.9,378.0 L301.9,371.5 L301.7,365.5 L302.1,359.9 L302.8,354.6 L303.8,349.3 L304.9,344.2 L306.2,339.2 L307.7,334.3 L309.2,329.4 L310.8,324.6 L312.6,319.9 L314.4,315.2 L316.3,310.6 L318.3,306.0 L320.3,301.5 L322.4,297.0 L324.5,292.5 L326.7,288.1 L329.0,283.7 L331.3,279.3 L333.6,275.0 L336.0,270.7 L338.5,266.4 L341.0,262.2 L343.5,258.0 L346.1,253.8 L348.7,249.6 L351.4,245.5 L354.3,241.5 L357.4,237.6 L360.6,233.9 L363.9,230.2 L367.4,226.6 L371.1,223.1 L375.0,219.8 L379.0,216.5 L383.2,213.4 L387.6,210.3 L392.2,207.4 L396.9,204.6 L401.9,202.0 L407.0,199.4 L412.4,197.1 L418.0,194.8 L423.9,192.8 L430.2,190.9 L437.2,189.6 L437.2,189.6 L438.9,196.6 L439.9,203.0 L440.5,209.2 L440.8,215.3 L440.8,221.1 L440.6,226.9 L440.3,232.5 L439.7,238.0 L439.0,243.3 L438.0,248.6 L436.9,253.7 L435.6,258.7 L434.2,263.6 L432.6,268.4 L430.8,273.1 L428.8,277.7 L426.7,282.2 L424.4,286.6 L422.0,290.9 L419.4,295.0 L416.7,299.2 L414.0,303.3 L411.2,307.3 L408.4,311.3 L405.5,315.3 L402.6,319.3 L399.6,323.3 L396.6,327.2 L393.5,331.0 L390.4,334.9 L387.3,338.7 L384.0,342.5 L380.7,346.2 L377.4,349.9 L374.0,353.5 L370.5,357.1 L366.9,360.7 L363.2,364.1 L359.4,367.6 L355.6,370.9 L351.5,374.2 L347.4,377.3 L343.0,380.4 L338.4,383.3 L333.5,385.9 L328.0,388.3 L321.6,390.0 L309.6,388.1Z" fill="#000" stroke="#000" stroke-width="15" stroke-linejoin="round"/><path d="M324.4,405.2 L324.2,393.0 L326.9,387.0 L330.0,381.9 L333.3,377.4 L336.8,373.2 L340.5,369.4 L344.2,365.7 L348.0,362.2 L351.8,358.8 L355.8,355.6 L359.7,352.4 L363.8,349.4 L367.8,346.4 L371.9,343.6 L376.0,340.8 L380.2,338.0 L384.4,335.4 L388.6,332.8 L392.9,330.2 L397.1,327.8 L401.4,325.3 L405.8,323.0 L410.1,320.6 L414.5,318.4 L418.9,316.2 L423.3,314.0 L427.7,311.9 L432.2,309.8 L436.7,307.8 L441.2,306.0 L445.9,304.4 L450.6,302.9 L455.5,301.6 L460.4,300.5 L465.4,299.6 L470.4,298.9 L475.6,298.3 L480.8,297.9 L486.1,297.8 L491.5,297.8 L497.1,298.0 L502.7,298.4 L508.4,299.1 L514.2,300.0 L520.1,301.1 L526.2,302.6 L532.4,304.5 L539.1,307.1 L539.1,307.1 L536.7,313.9 L534.1,319.9 L531.2,325.4 L528.2,330.6 L525.0,335.6 L521.8,340.4 L518.5,344.9 L515.0,349.2 L511.5,353.3 L507.9,357.2 L504.2,360.9 L500.4,364.4 L496.5,367.8 L492.5,370.9 L488.5,373.9 L484.4,376.7 L480.2,379.4 L475.9,381.8 L471.5,384.1 L467.1,386.2 L462.6,388.2 L458.1,390.2 L453.5,392.1 L449.0,394.0 L444.4,395.8 L439.8,397.5 L435.2,399.2 L430.5,400.9 L425.9,402.5 L421.2,404.1 L416.4,405.5 L411.7,407.0 L406.9,408.3 L402.1,409.6 L397.2,410.8 L392.3,412.0 L387.4,413.0 L382.4,414.0 L377.4,414.8 L372.3,415.5 L367.2,416.1 L362.0,416.5 L356.7,416.7 L351.2,416.6 L345.6,416.2 L339.8,415.2 L333.5,413.2 L324.4,405.2Z" fill="#000" stroke="#000" stroke-width="15" stroke-linejoin="round"/><path d="M327.6,427.5 L334.0,417.2 L339.5,413.5 L344.9,410.9 L350.1,408.9 L355.3,407.3 L360.5,406.0 L365.6,405.0 L370.7,404.1 L375.8,403.3 L380.8,402.7 L385.9,402.2 L390.9,401.8 L395.9,401.6 L400.9,401.3 L405.9,401.2 L410.9,401.2 L415.8,401.2 L420.8,401.3 L425.7,401.5 L430.6,401.7 L435.6,402.0 L440.5,402.3 L445.4,402.7 L450.3,403.2 L455.2,403.7 L460.1,404.2 L465.0,404.8 L469.8,405.5 L474.7,406.3 L479.5,407.2 L484.3,408.4 L489.1,409.7 L493.8,411.3 L498.6,413.0 L503.3,414.9 L507.9,417.0 L512.6,419.3 L517.2,421.8 L521.7,424.6 L526.3,427.5 L530.8,430.7 L535.3,434.1 L539.7,437.7 L544.1,441.6 L548.5,445.8 L552.8,450.3 L557.1,455.2 L561.2,461.1 L561.2,461.1 L555.6,465.5 L550.1,469.1 L544.7,472.2 L539.3,475.0 L534.0,477.5 L528.7,479.7 L523.5,481.7 L518.2,483.4 L513.0,485.0 L507.9,486.3 L502.8,487.4 L497.7,488.4 L492.6,489.1 L487.6,489.6 L482.5,489.9 L477.6,490.0 L472.6,490.0 L467.7,489.7 L462.8,489.3 L457.9,488.7 L453.0,487.9 L448.2,487.1 L443.3,486.3 L438.5,485.4 L433.6,484.5 L428.8,483.5 L424.0,482.4 L419.2,481.3 L414.4,480.1 L409.6,478.9 L404.8,477.6 L400.1,476.2 L395.3,474.7 L390.6,473.2 L385.8,471.6 L381.1,469.9 L376.4,468.2 L371.7,466.3 L367.0,464.3 L362.4,462.1 L357.7,459.8 L353.1,457.3 L348.5,454.6 L344.0,451.7 L339.5,448.3 L335.1,444.3 L330.9,439.2 L327.6,427.5Z" fill="#000" stroke="#000" stroke-width="15" stroke-linejoin="round"/><path d="M318.2,448.0 L329.2,442.8 L335.8,442.7 L341.7,443.4 L347.2,444.6 L352.5,446.0 L357.5,447.7 L362.4,449.6 L367.2,451.6 L371.8,453.7 L376.4,455.9 L380.9,458.2 L385.3,460.6 L389.7,463.1 L394.0,465.6 L398.3,468.2 L402.5,470.9 L406.7,473.6 L410.8,476.3 L414.8,479.2 L418.9,482.0 L422.9,484.9 L426.8,487.9 L430.7,490.8 L434.6,493.9 L438.5,496.9 L442.3,500.1 L446.0,503.2 L449.8,506.4 L453.4,509.7 L457.0,513.1 L460.4,516.7 L463.7,520.4 L466.9,524.2 L469.9,528.2 L472.8,532.4 L475.6,536.7 L478.2,541.1 L480.8,545.7 L483.1,550.5 L485.4,555.4 L487.4,560.5 L489.4,565.8 L491.2,571.3 L492.8,576.9 L494.2,582.8 L495.4,588.9 L496.3,595.4 L496.6,602.5 L496.6,602.5 L489.5,603.3 L482.9,603.3 L476.7,603.0 L470.7,602.4 L464.9,601.6 L459.2,600.6 L453.7,599.5 L448.4,598.1 L443.2,596.6 L438.1,595.0 L433.2,593.1 L428.4,591.1 L423.7,589.0 L419.2,586.7 L414.8,584.3 L410.6,581.7 L406.4,579.0 L402.4,576.1 L398.5,573.1 L394.8,569.9 L391.1,566.6 L387.4,563.4 L383.8,560.0 L380.2,556.7 L376.7,553.3 L373.1,549.8 L369.7,546.3 L366.2,542.8 L362.8,539.2 L359.5,535.6 L356.1,531.9 L352.9,528.1 L349.6,524.4 L346.5,520.5 L343.4,516.6 L340.3,512.6 L337.3,508.6 L334.4,504.5 L331.5,500.2 L328.7,495.9 L326.1,491.5 L323.6,486.9 L321.2,482.2 L319.0,477.2 L317.0,471.9 L315.5,466.2 L314.7,459.6 L318.2,448.0Z" fill="#000" stroke="#000" stroke-width="15" stroke-linejoin="round"/><path d="M299.3,460.2 L311.3,461.8 L317.0,465.2 L321.5,469.0 L325.5,473.0 L329.1,477.0 L332.5,481.2 L335.6,485.4 L338.5,489.7 L341.3,494.0 L343.9,498.3 L346.5,502.7 L348.9,507.1 L351.2,511.5 L353.5,516.0 L355.7,520.5 L357.8,525.0 L359.8,529.5 L361.8,534.1 L363.7,538.6 L365.5,543.2 L367.3,547.8 L369.1,552.4 L370.7,557.0 L372.4,561.7 L373.9,566.4 L375.5,571.0 L376.9,575.7 L378.4,580.4 L379.7,585.2 L380.8,590.0 L381.8,594.8 L382.5,599.7 L383.1,604.7 L383.5,609.7 L383.7,614.7 L383.7,619.9 L383.5,625.0 L383.2,630.3 L382.6,635.6 L381.8,640.9 L380.8,646.3 L379.6,651.8 L378.1,657.4 L376.4,663.0 L374.4,668.7 L372.1,674.5 L369.4,680.4 L365.8,686.6 L365.8,686.6 L359.4,683.4 L353.9,679.9 L348.8,676.2 L344.1,672.5 L339.6,668.7 L335.3,664.8 L331.3,660.9 L327.6,656.8 L324.0,652.8 L320.7,648.6 L317.5,644.4 L314.6,640.2 L311.8,635.8 L309.2,631.5 L306.9,627.1 L304.7,622.6 L302.7,618.0 L300.8,613.4 L299.2,608.8 L297.8,604.1 L296.4,599.4 L295.1,594.6 L293.9,589.9 L292.7,585.1 L291.5,580.3 L290.4,575.5 L289.4,570.7 L288.4,565.9 L287.5,561.0 L286.6,556.1 L285.8,551.2 L285.1,546.3 L284.4,541.4 L283.8,536.5 L283.3,531.5 L282.9,526.5 L282.5,521.5 L282.3,516.4 L282.2,511.3 L282.2,506.2 L282.4,501.0 L282.7,495.8 L283.3,490.5 L284.1,485.1 L285.3,479.6 L287.1,474.0 L290.0,468.0 L299.3,460.2Z" fill="#000" stroke="#000" stroke-width="15" stroke-linejoin="round"/><path d="M276.7,460.2 L286.0,468.0 L288.9,474.0 L290.7,479.6 L291.9,485.1 L292.7,490.5 L293.3,495.8 L293.6,501.0 L293.8,506.2 L293.8,511.3 L293.7,516.4 L293.5,521.5 L293.1,526.5 L292.7,531.5 L292.2,536.5 L291.6,541.4 L290.9,546.3 L290.2,551.2 L289.4,556.1 L288.5,561.0 L287.6,565.9 L286.6,570.7 L285.6,575.5 L284.5,580.3 L283.3,585.1 L282.1,589.9 L280.9,594.6 L279.6,599.4 L278.2,604.1 L276.8,608.8 L275.2,613.4 L273.3,618.0 L271.3,622.6 L269.1,627.1 L266.8,631.5 L264.2,635.8 L261.4,640.2 L258.5,644.4 L255.3,648.6 L252.0,652.8 L248.4,656.8 L244.7,660.9 L240.7,664.8 L236.4,668.7 L231.9,672.5 L227.2,676.2 L222.1,679.9 L216.6,683.4 L210.2,686.6 L210.2,686.6 L206.6,680.4 L203.9,674.5 L201.6,668.7 L199.6,663.0 L197.9,657.4 L196.4,651.8 L195.2,646.3 L194.2,640.9 L193.4,635.6 L192.8,630.3 L192.5,625.0 L192.3,619.9 L192.3,614.7 L192.5,609.7 L192.9,604.7 L193.5,599.7 L194.2,594.8 L195.2,590.0 L196.3,585.2 L197.6,580.4 L199.1,575.7 L200.5,571.0 L202.1,566.4 L203.6,561.7 L205.3,557.0 L206.9,552.4 L208.7,547.8 L210.5,543.2 L212.3,538.6 L214.2,534.1 L216.2,529.5 L218.2,525.0 L220.3,520.5 L222.5,516.0 L224.8,511.5 L227.1,507.1 L229.5,502.7 L232.1,498.3 L234.7,494.0 L237.5,489.7 L240.4,485.4 L243.5,481.2 L246.9,477.0 L250.5,473.0 L254.5,469.0 L259.0,465.2 L264.7,461.8 L276.7,460.2Z" fill="#000" stroke="#000" stroke-width="15" stroke-linejoin="round"/><path d="M257.8,448.0 L261.3,459.6 L260.5,466.2 L259.0,471.9 L257.0,477.2 L254.8,482.2 L252.4,486.9 L249.9,491.5 L247.3,495.9 L244.5,500.2 L241.6,504.5 L238.7,508.6 L235.7,512.6 L232.6,516.6 L229.5,520.5 L226.4,524.4 L223.1,528.1 L219.9,531.9 L216.5,535.6 L213.2,539.2 L209.8,542.8 L206.3,546.3 L202.9,549.8 L199.3,553.3 L195.8,556.7 L192.2,560.0 L188.6,563.4 L184.9,566.6 L181.2,569.9 L177.5,573.1 L173.6,576.1 L169.6,579.0 L165.4,581.7 L161.2,584.3 L156.8,586.7 L152.3,589.0 L147.6,591.1 L142.8,593.1 L137.9,595.0 L132.8,596.6 L127.6,598.1 L122.3,599.5 L116.8,600.6 L111.1,601.6 L105.3,602.4 L99.3,603.0 L93.1,603.3 L86.5,603.3 L79.4,602.5 L79.4,602.5 L79.7,595.4 L80.6,588.9 L81.8,582.8 L83.2,576.9 L84.8,571.3 L86.6,565.8 L88.6,560.5 L90.6,555.4 L92.9,550.5 L95.2,545.7 L97.8,541.1 L100.4,536.7 L103.2,532.4 L106.1,528.2 L109.1,524.2 L112.3,520.4 L115.6,516.7 L119.0,513.1 L122.6,509.7 L126.2,506.4 L130.0,503.2 L133.7,500.1 L137.5,496.9 L141.4,493.9 L145.3,490.8 L149.2,487.9 L153.1,484.9 L157.1,482.0 L161.2,479.2 L165.2,476.3 L169.3,473.6 L173.5,470.9 L177.7,468.2 L182.0,465.6 L186.3,463.1 L190.7,460.6 L195.1,458.2 L199.6,455.9 L204.2,453.7 L208.8,451.6 L213.6,449.6 L218.5,447.7 L223.5,446.0 L228.8,444.6 L234.3,443.4 L240.2,442.7 L246.8,442.8 L257.8,448.0Z" fill="#000" stroke="#000" stroke-width="15" stroke-linejoin="round"/><path d="M248.4,427.5 L245.1,439.2 L240.9,444.3 L236.5,448.3 L232.0,451.7 L227.5,454.6 L222.9,457.3 L218.3,459.8 L213.6,462.1 L209.0,464.3 L204.3,466.3 L199.6,468.2 L194.9,469.9 L190.2,471.6 L185.4,473.2 L180.7,474.7 L175.9,476.2 L171.2,477.6 L166.4,478.9 L161.6,480.1 L156.8,481.3 L152.0,482.4 L147.2,483.5 L142.4,484.5 L137.5,485.4 L132.7,486.3 L127.8,487.1 L123.0,487.9 L118.1,488.7 L113.2,489.3 L108.3,489.7 L103.4,490.0 L98.4,490.0 L93.5,489.9 L88.4,489.6 L83.4,489.1 L78.3,488.4 L73.2,487.4 L68.1,486.3 L63.0,485.0 L57.8,483.4 L52.5,481.7 L47.3,479.7 L42.0,477.5 L36.7,475.0 L31.3,472.2 L25.9,469.1 L20.4,465.5 L14.8,461.1 L14.8,461.1 L18.9,455.2 L23.2,450.3 L27.5,445.8 L31.9,441.6 L36.3,437.7 L40.7,434.1 L45.2,430.7 L49.7,427.5 L54.3,424.6 L58.8,421.8 L63.4,419.3 L68.1,417.0 L72.7,414.9 L77.4,413.0 L82.2,411.3 L86.9,409.7 L91.7,408.4 L96.5,407.2 L101.3,406.3 L106.2,405.5 L111.0,404.8 L115.9,404.2 L120.8,403.7 L125.7,403.2 L130.6,402.7 L135.5,402.3 L140.4,402.0 L145.4,401.7 L150.3,401.5 L155.2,401.3 L160.2,401.2 L165.1,401.2 L170.1,401.2 L175.1,401.3 L180.1,401.6 L185.1,401.8 L190.1,402.2 L195.2,402.7 L200.2,403.3 L205.3,404.1 L210.4,405.0 L215.5,406.0 L220.7,407.3 L225.9,408.9 L231.1,410.9 L236.5,413.5 L242.0,417.2 L248.4,427.5Z" fill="#000" stroke="#000" stroke-width="15" stroke-linejoin="round"/><path d="M251.6,405.2 L242.5,413.2 L236.2,415.2 L230.4,416.2 L224.8,416.6 L219.3,416.7 L214.0,416.5 L208.8,416.1 L203.7,415.5 L198.6,414.8 L193.6,414.0 L188.6,413.0 L183.7,412.0 L178.8,410.8 L173.9,409.6 L169.1,408.3 L164.3,407.0 L159.6,405.5 L154.8,404.1 L150.1,402.5 L145.5,400.9 L140.8,399.2 L136.2,397.5 L131.6,395.8 L127.0,394.0 L122.5,392.1 L117.9,390.2 L113.4,388.2 L108.9,386.2 L104.5,384.1 L100.1,381.8 L95.8,379.4 L91.6,376.7 L87.5,373.9 L83.5,370.9 L79.5,367.8 L75.6,364.4 L71.8,360.9 L68.1,357.2 L64.5,353.3 L61.0,349.2 L57.5,344.9 L54.2,340.4 L51.0,335.6 L47.8,330.6 L44.8,325.4 L41.9,319.9 L39.3,313.9 L36.9,307.1 L36.9,307.1 L43.6,304.5 L49.8,302.6 L55.9,301.1 L61.8,300.0 L67.6,299.1 L73.3,298.4 L78.9,298.0 L84.5,297.8 L89.9,297.8 L95.2,297.9 L100.4,298.3 L105.6,298.9 L110.6,299.6 L115.6,300.5 L120.5,301.6 L125.4,302.9 L130.1,304.4 L134.8,306.0 L139.3,307.8 L143.8,309.8 L148.3,311.9 L152.7,314.0 L157.1,316.2 L161.5,318.4 L165.9,320.6 L170.2,323.0 L174.6,325.3 L178.9,327.8 L183.1,330.2 L187.4,332.8 L191.6,335.4 L195.8,338.0 L200.0,340.8 L204.1,343.6 L208.2,346.4 L212.2,349.4 L216.3,352.4 L220.2,355.6 L224.2,358.8 L228.0,362.2 L231.8,365.7 L235.5,369.4 L239.2,373.2 L242.7,377.4 L246.0,381.9 L249.1,387.0 L251.8,393.0 L251.6,405.2Z" fill="#000" stroke="#000" stroke-width="15" stroke-linejoin="round"/><path d="M266.4,388.1 L254.4,390.0 L248.0,388.3 L242.5,385.9 L237.6,383.3 L233.0,380.4 L228.6,377.3 L224.5,374.2 L220.4,370.9 L216.6,367.6 L212.8,364.1 L209.1,360.7 L205.5,357.1 L202.0,353.5 L198.6,349.9 L195.3,346.2 L192.0,342.5 L188.7,338.7 L185.6,334.9 L182.5,331.0 L179.4,327.2 L176.4,323.3 L173.4,319.3 L170.5,315.3 L167.6,311.3 L164.8,307.3 L162.0,303.3 L159.3,299.2 L156.6,295.0 L154.0,290.9 L151.6,286.6 L149.3,282.2 L147.2,277.7 L145.2,273.1 L143.4,268.4 L141.8,263.6 L140.4,258.7 L139.1,253.7 L138.0,248.6 L137.0,243.3 L136.3,238.0 L135.7,232.5 L135.4,226.9 L135.2,221.1 L135.2,215.3 L135.5,209.2 L136.1,203.0 L137.1,196.6 L138.8,189.6 L138.8,189.6 L145.8,190.9 L152.1,192.8 L158.0,194.8 L163.6,197.1 L169.0,199.4 L174.1,202.0 L179.1,204.6 L183.8,207.4 L188.4,210.3 L192.8,213.4 L197.0,216.5 L201.0,219.8 L204.9,223.1 L208.6,226.6 L212.1,230.2 L215.4,233.9 L218.6,237.6 L221.7,241.5 L224.6,245.5 L227.3,249.6 L229.9,253.8 L232.5,258.0 L235.0,262.2 L237.5,266.4 L240.0,270.7 L242.4,275.0 L244.7,279.3 L247.0,283.7 L249.3,288.1 L251.5,292.5 L253.6,297.0 L255.7,301.5 L257.7,306.0 L259.7,310.6 L261.6,315.2 L263.4,319.9 L265.2,324.6 L266.8,329.4 L268.3,334.3 L269.8,339.2 L271.1,344.2 L272.2,349.3 L273.2,354.6 L273.9,359.9 L274.3,365.5 L274.1,371.5 L273.1,378.0 L266.4,388.1Z" fill="#000" stroke="#000" stroke-width="15" stroke-linejoin="round"/><path d="M288.0,401.8 L279.9,398.2 L275.9,394.7 L272.7,391.1 L270.1,387.6 L267.7,384.0 L265.6,380.4 L263.7,376.9 L262.0,373.3 L260.4,369.7 L259.0,366.2 L257.7,362.6 L256.4,359.1 L255.3,355.5 L254.3,351.9 L253.3,348.4 L252.4,344.8 L251.6,341.2 L250.9,337.7 L250.2,334.1 L249.6,330.6 L249.1,327.0 L248.6,323.4 L248.2,319.9 L247.9,316.3 L247.6,312.7 L247.4,309.2 L247.2,305.6 L247.1,302.1 L247.0,298.5 L247.0,294.9 L247.2,291.4 L247.6,287.8 L248.2,284.2 L249.0,280.7 L250.0,277.1 L251.3,273.6 L252.7,270.0 L254.4,266.4 L256.3,262.9 L258.5,259.3 L260.8,255.7 L263.5,252.2 L266.4,248.6 L269.7,245.1 L273.3,241.5 L277.3,237.9 L281.9,234.4 L288.0,230.8 L288.0,230.8 L294.1,234.4 L298.7,237.9 L302.7,241.5 L306.3,245.1 L309.6,248.6 L312.5,252.2 L315.2,255.7 L317.5,259.3 L319.7,262.9 L321.6,266.4 L323.3,270.0 L324.7,273.6 L326.0,277.1 L327.0,280.7 L327.8,284.2 L328.4,287.8 L328.8,291.4 L329.0,294.9 L329.0,298.5 L328.9,302.1 L328.8,305.6 L328.6,309.2 L328.4,312.7 L328.1,316.3 L327.8,319.9 L327.4,323.4 L326.9,327.0 L326.4,330.6 L325.8,334.1 L325.1,337.7 L324.4,341.2 L323.6,344.8 L322.7,348.4 L321.7,351.9 L320.7,355.5 L319.6,359.1 L318.3,362.6 L317.0,366.2 L315.6,369.7 L314.0,373.3 L312.3,376.9 L310.4,380.4 L308.3,384.0 L305.9,387.6 L303.3,391.1 L300.1,394.7 L296.1,398.2 L288.0,401.8Z" fill="#000" stroke="#000" stroke-width="15" stroke-linejoin="round"/><path d="M302.1,407.7 L299.0,399.4 L298.6,394.1 L298.9,389.3 L299.5,384.9 L300.4,380.7 L301.4,376.7 L302.6,372.9 L303.9,369.1 L305.3,365.5 L306.8,362.0 L308.4,358.5 L310.1,355.1 L311.8,351.8 L313.6,348.5 L315.4,345.3 L317.3,342.2 L319.2,339.1 L321.2,336.1 L323.3,333.1 L325.4,330.2 L327.5,327.3 L329.7,324.4 L332.0,321.6 L334.2,318.8 L336.5,316.1 L338.9,313.4 L341.3,310.8 L343.7,308.2 L346.2,305.6 L348.7,303.1 L351.4,300.7 L354.2,298.5 L357.1,296.4 L360.2,294.4 L363.5,292.6 L366.9,291.0 L370.4,289.5 L374.1,288.2 L378.0,287.0 L382.0,286.0 L386.2,285.2 L390.6,284.5 L395.2,284.1 L400.0,283.9 L405.1,283.9 L410.5,284.2 L416.2,285.0 L423.1,286.7 L423.1,286.7 L424.8,293.6 L425.6,299.3 L425.9,304.7 L425.9,309.8 L425.7,314.6 L425.3,319.2 L424.6,323.6 L423.8,327.8 L422.8,331.8 L421.6,335.7 L420.3,339.4 L418.8,342.9 L417.2,346.3 L415.4,349.6 L413.4,352.7 L411.3,355.6 L409.1,358.4 L406.7,361.1 L404.2,363.6 L401.6,366.1 L399.0,368.5 L396.4,370.9 L393.7,373.3 L391.0,375.6 L388.2,377.8 L385.4,380.1 L382.5,382.3 L379.6,384.4 L376.7,386.5 L373.7,388.6 L370.7,390.6 L367.6,392.5 L364.5,394.4 L361.3,396.2 L358.0,398.0 L354.7,399.7 L351.3,401.4 L347.8,403.0 L344.3,404.5 L340.7,405.9 L336.9,407.2 L333.1,408.4 L329.1,409.4 L324.9,410.3 L320.5,410.9 L315.7,411.2 L310.4,410.8 L302.1,407.7Z" fill="#000" stroke="#000" stroke-width="15" stroke-linejoin="round"/><path d="M308.0,421.8 L311.6,413.7 L315.1,409.7 L318.7,406.5 L322.2,403.9 L325.8,401.5 L329.4,399.4 L332.9,397.5 L336.5,395.8 L340.1,394.2 L343.6,392.8 L347.2,391.5 L350.8,390.2 L354.3,389.1 L357.9,388.1 L361.4,387.1 L365.0,386.2 L368.6,385.4 L372.1,384.7 L375.7,384.0 L379.2,383.4 L382.8,382.9 L386.4,382.4 L389.9,382.0 L393.5,381.7 L397.1,381.4 L400.6,381.2 L404.2,381.0 L407.8,380.9 L411.3,380.8 L414.9,380.8 L418.4,381.0 L422.0,381.4 L425.6,382.0 L429.1,382.8 L432.7,383.8 L436.2,385.1 L439.8,386.5 L443.4,388.2 L446.9,390.1 L450.5,392.3 L454.1,394.6 L457.6,397.3 L461.2,400.2 L464.8,403.5 L468.3,407.1 L471.9,411.1 L475.4,415.7 L479.0,421.8 L479.0,421.8 L475.4,427.9 L471.9,432.5 L468.3,436.5 L464.8,440.1 L461.2,443.4 L457.6,446.3 L454.1,449.0 L450.5,451.3 L446.9,453.5 L443.4,455.4 L439.8,457.1 L436.2,458.5 L432.7,459.8 L429.1,460.8 L425.6,461.6 L422.0,462.2 L418.4,462.6 L414.9,462.8 L411.3,462.8 L407.8,462.7 L404.2,462.6 L400.6,462.4 L397.1,462.2 L393.5,461.9 L389.9,461.6 L386.4,461.2 L382.8,460.7 L379.2,460.2 L375.7,459.6 L372.1,458.9 L368.6,458.2 L365.0,457.4 L361.4,456.5 L357.9,455.5 L354.3,454.5 L350.8,453.4 L347.2,452.1 L343.6,450.8 L340.1,449.4 L336.5,447.8 L332.9,446.1 L329.4,444.2 L325.8,442.1 L322.2,439.7 L318.7,437.1 L315.1,433.9 L311.6,429.9 L308.0,421.8Z" fill="#000" stroke="#000" stroke-width="15" stroke-linejoin="round"/><path d="M302.1,435.9 L310.4,432.8 L315.7,432.4 L320.5,432.7 L324.9,433.3 L329.1,434.2 L333.1,435.2 L336.9,436.4 L340.7,437.7 L344.3,439.1 L347.8,440.6 L351.3,442.2 L354.7,443.9 L358.0,445.6 L361.3,447.4 L364.5,449.2 L367.6,451.1 L370.7,453.0 L373.7,455.0 L376.7,457.1 L379.6,459.2 L382.5,461.3 L385.4,463.5 L388.2,465.8 L391.0,468.0 L393.7,470.3 L396.4,472.7 L399.0,475.1 L401.6,477.5 L404.2,480.0 L406.7,482.5 L409.1,485.2 L411.3,488.0 L413.4,490.9 L415.4,494.0 L417.2,497.3 L418.8,500.7 L420.3,504.2 L421.6,507.9 L422.8,511.8 L423.8,515.8 L424.6,520.0 L425.3,524.4 L425.7,529.0 L425.9,533.8 L425.9,538.9 L425.6,544.3 L424.8,550.0 L423.1,556.9 L423.1,556.9 L416.2,558.6 L410.5,559.4 L405.1,559.7 L400.0,559.7 L395.2,559.5 L390.6,559.1 L386.2,558.4 L382.0,557.6 L378.0,556.6 L374.1,555.4 L370.4,554.1 L366.9,552.6 L363.5,551.0 L360.2,549.2 L357.1,547.2 L354.2,545.1 L351.4,542.9 L348.7,540.5 L346.2,538.0 L343.7,535.4 L341.3,532.8 L338.9,530.2 L336.5,527.5 L334.2,524.8 L332.0,522.0 L329.7,519.2 L327.5,516.3 L325.4,513.4 L323.3,510.5 L321.2,507.5 L319.2,504.5 L317.3,501.4 L315.4,498.3 L313.6,495.1 L311.8,491.8 L310.1,488.5 L308.4,485.1 L306.8,481.6 L305.3,478.1 L303.9,474.5 L302.6,470.7 L301.4,466.9 L300.4,462.9 L299.5,458.7 L298.9,454.3 L298.6,449.5 L299.0,444.2 L302.1,435.9Z" fill="#000" stroke="#000" stroke-width="15" stroke-linejoin="round"/><path d="M288.0,441.8 L296.1,445.4 L300.1,448.9 L303.3,452.5 L305.9,456.1 L308.3,459.6 L310.4,463.2 L312.3,466.7 L314.0,470.3 L315.6,473.9 L317.0,477.4 L318.3,481.0 L319.6,484.6 L320.7,488.1 L321.7,491.7 L322.7,495.2 L323.6,498.8 L324.4,502.4 L325.1,505.9 L325.8,509.5 L326.4,513.0 L326.9,516.6 L327.4,520.2 L327.8,523.7 L328.1,527.3 L328.4,530.9 L328.6,534.4 L328.8,538.0 L328.9,541.5 L329.0,545.1 L329.0,548.7 L328.8,552.2 L328.4,555.8 L327.8,559.4 L327.0,562.9 L326.0,566.5 L324.7,570.0 L323.3,573.6 L321.6,577.2 L319.7,580.7 L317.5,584.3 L315.2,587.9 L312.5,591.4 L309.6,595.0 L306.3,598.5 L302.7,602.1 L298.7,605.7 L294.1,609.2 L288.0,612.8 L288.0,612.8 L281.9,609.2 L277.3,605.7 L273.3,602.1 L269.7,598.5 L266.4,595.0 L263.5,591.4 L260.8,587.9 L258.5,584.3 L256.3,580.7 L254.4,577.2 L252.7,573.6 L251.3,570.0 L250.0,566.5 L249.0,562.9 L248.2,559.4 L247.6,555.8 L247.2,552.2 L247.0,548.7 L247.0,545.1 L247.1,541.5 L247.2,538.0 L247.4,534.4 L247.6,530.9 L247.9,527.3 L248.2,523.7 L248.6,520.2 L249.1,516.6 L249.6,513.0 L250.2,509.5 L250.9,505.9 L251.6,502.4 L252.4,498.8 L253.3,495.2 L254.3,491.7 L255.3,488.1 L256.4,484.6 L257.7,481.0 L259.0,477.4 L260.4,473.9 L262.0,470.3 L263.7,466.7 L265.6,463.2 L267.7,459.6 L270.1,456.1 L272.7,452.5 L275.9,448.9 L279.9,445.4 L288.0,441.8Z" fill="#000" stroke="#000" stroke-width="15" stroke-linejoin="round"/><path d="M273.9,435.9 L277.0,444.2 L277.4,449.5 L277.1,454.3 L276.5,458.7 L275.6,462.9 L274.6,466.9 L273.4,470.7 L272.1,474.5 L270.7,478.1 L269.2,481.6 L267.6,485.1 L265.9,488.5 L264.2,491.8 L262.4,495.1 L260.6,498.3 L258.7,501.4 L256.8,504.5 L254.8,507.5 L252.7,510.5 L250.6,513.4 L248.5,516.3 L246.3,519.2 L244.0,522.0 L241.8,524.8 L239.5,527.5 L237.1,530.2 L234.7,532.8 L232.3,535.4 L229.8,538.0 L227.3,540.5 L224.6,542.9 L221.8,545.1 L218.9,547.2 L215.8,549.2 L212.5,551.0 L209.1,552.6 L205.6,554.1 L201.9,555.4 L198.0,556.6 L194.0,557.6 L189.8,558.4 L185.4,559.1 L180.8,559.5 L176.0,559.7 L170.9,559.7 L165.5,559.4 L159.8,558.6 L152.9,556.9 L152.9,556.9 L151.2,550.0 L150.4,544.3 L150.1,538.9 L150.1,533.8 L150.3,529.0 L150.7,524.4 L151.4,520.0 L152.2,515.8 L153.2,511.8 L154.4,507.9 L155.7,504.2 L157.2,500.7 L158.8,497.3 L160.6,494.0 L162.6,490.9 L164.7,488.0 L166.9,485.2 L169.3,482.5 L171.8,480.0 L174.4,477.5 L177.0,475.1 L179.6,472.7 L182.3,470.3 L185.0,468.0 L187.8,465.8 L190.6,463.5 L193.5,461.3 L196.4,459.2 L199.3,457.1 L202.3,455.0 L205.3,453.0 L208.4,451.1 L211.5,449.2 L214.7,447.4 L218.0,445.6 L221.3,443.9 L224.7,442.2 L228.2,440.6 L231.7,439.1 L235.3,437.7 L239.1,436.4 L242.9,435.2 L246.9,434.2 L251.1,433.3 L255.5,432.7 L260.3,432.4 L265.6,432.8 L273.9,435.9Z" fill="#000" stroke="#000" stroke-width="15" stroke-linejoin="round"/><path d="M268.0,421.8 L264.4,429.9 L260.9,433.9 L257.3,437.1 L253.8,439.7 L250.2,442.1 L246.6,444.2 L243.1,446.1 L239.5,447.8 L235.9,449.4 L232.4,450.8 L228.8,452.1 L225.2,453.4 L221.7,454.5 L218.1,455.5 L214.6,456.5 L211.0,457.4 L207.4,458.2 L203.9,458.9 L200.3,459.6 L196.8,460.2 L193.2,460.7 L189.6,461.2 L186.1,461.6 L182.5,461.9 L178.9,462.2 L175.4,462.4 L171.8,462.6 L168.2,462.7 L164.7,462.8 L161.1,462.8 L157.6,462.6 L154.0,462.2 L150.4,461.6 L146.9,460.8 L143.3,459.8 L139.8,458.5 L136.2,457.1 L132.6,455.4 L129.1,453.5 L125.5,451.3 L121.9,449.0 L118.4,446.3 L114.8,443.4 L111.2,440.1 L107.7,436.5 L104.1,432.5 L100.6,427.9 L97.0,421.8 L97.0,421.8 L100.6,415.7 L104.1,411.1 L107.7,407.1 L111.2,403.5 L114.8,400.2 L118.4,397.3 L121.9,394.6 L125.5,392.3 L129.1,390.1 L132.6,388.2 L136.2,386.5 L139.8,385.1 L143.3,383.8 L146.9,382.8 L150.4,382.0 L154.0,381.4 L157.6,381.0 L161.1,380.8 L164.7,380.8 L168.2,380.9 L171.8,381.0 L175.4,381.2 L178.9,381.4 L182.5,381.7 L186.1,382.0 L189.6,382.4 L193.2,382.9 L196.8,383.4 L200.3,384.0 L203.9,384.7 L207.4,385.4 L211.0,386.2 L214.6,387.1 L218.1,388.1 L221.7,389.1 L225.2,390.2 L228.8,391.5 L232.4,392.8 L235.9,394.2 L239.5,395.8 L243.1,397.5 L246.6,399.4 L250.2,401.5 L253.8,403.9 L257.3,406.5 L260.9,409.7 L264.4,413.7 L268.0,421.8Z" fill="#000" stroke="#000" stroke-width="15" stroke-linejoin="round"/><path d="M273.9,407.7 L265.6,410.8 L260.3,411.2 L255.5,410.9 L251.1,410.3 L246.9,409.4 L242.9,408.4 L239.1,407.2 L235.3,405.9 L231.7,404.5 L228.2,403.0 L224.7,401.4 L221.3,399.7 L218.0,398.0 L214.7,396.2 L211.5,394.4 L208.4,392.5 L205.3,390.6 L202.3,388.6 L199.3,386.5 L196.4,384.4 L193.5,382.3 L190.6,380.1 L187.8,377.8 L185.0,375.6 L182.3,373.3 L179.6,370.9 L177.0,368.5 L174.4,366.1 L171.8,363.6 L169.3,361.1 L166.9,358.4 L164.7,355.6 L162.6,352.7 L160.6,349.6 L158.8,346.3 L157.2,342.9 L155.7,339.4 L154.4,335.7 L153.2,331.8 L152.2,327.8 L151.4,323.6 L150.7,319.2 L150.3,314.6 L150.1,309.8 L150.1,304.7 L150.4,299.3 L151.2,293.6 L152.9,286.7 L152.9,286.7 L159.8,285.0 L165.5,284.2 L170.9,283.9 L176.0,283.9 L180.8,284.1 L185.4,284.5 L189.8,285.2 L194.0,286.0 L198.0,287.0 L201.9,288.2 L205.6,289.5 L209.1,291.0 L212.5,292.6 L215.8,294.4 L218.9,296.4 L221.8,298.5 L224.6,300.7 L227.3,303.1 L229.8,305.6 L232.3,308.2 L234.7,310.8 L237.1,313.4 L239.5,316.1 L241.8,318.8 L244.0,321.6 L246.3,324.4 L248.5,327.3 L250.6,330.2 L252.7,333.1 L254.8,336.1 L256.8,339.1 L258.7,342.2 L260.6,345.3 L262.4,348.5 L264.2,351.8 L265.9,355.1 L267.6,358.5 L269.2,362.0 L270.7,365.5 L272.1,369.1 L273.4,372.9 L274.6,376.7 L275.6,380.7 L276.5,384.9 L277.1,389.3 L277.4,394.1 L277.0,399.4 L273.9,407.7Z" fill="#000" stroke="#000" stroke-width="15" stroke-linejoin="round"/>
<line x1="290" y1="421.8" x2="666" y2="421.8" stroke="#bb2a2a" stroke-width="2.9"/>
<rect x="629.6" y="419.8" width="3.2" height="3.2" fill="#f8b820"/>
<path d="M288.0,381.8 L276.9,376.9 L272.5,372.0 L269.1,367.1 L266.4,362.1 L264.1,357.2 L262.1,352.3 L260.3,347.4 L258.7,342.5 L257.2,337.6 L255.9,332.6 L254.7,327.7 L253.6,322.8 L252.6,317.9 L251.7,313.0 L250.9,308.1 L250.1,303.1 L249.4,298.2 L248.8,293.3 L248.3,288.4 L247.8,283.5 L247.4,278.6 L247.0,273.6 L246.7,268.7 L246.5,263.8 L246.3,258.9 L246.1,254.0 L246.0,249.1 L246.0,244.1 L246.1,239.2 L246.3,234.3 L246.8,229.4 L247.4,224.5 L248.3,219.6 L249.3,214.6 L250.5,209.7 L252.0,204.8 L253.6,199.9 L255.4,195.0 L257.5,190.1 L259.8,185.1 L262.2,180.2 L265.0,175.3 L267.9,170.4 L271.2,165.5 L274.7,160.6 L278.5,155.6 L282.8,150.7 L288.0,145.8 L288.0,145.8 L293.2,150.7 L297.5,155.6 L301.3,160.6 L304.8,165.5 L308.1,170.4 L311.0,175.3 L313.8,180.2 L316.2,185.1 L318.5,190.1 L320.6,195.0 L322.4,199.9 L324.0,204.8 L325.5,209.7 L326.7,214.6 L327.7,219.6 L328.6,224.5 L329.2,229.4 L329.7,234.3 L329.9,239.2 L330.0,244.1 L330.0,249.1 L329.9,254.0 L329.7,258.9 L329.5,263.8 L329.3,268.7 L329.0,273.6 L328.6,278.6 L328.2,283.5 L327.7,288.4 L327.2,293.3 L326.6,298.2 L325.9,303.1 L325.1,308.1 L324.3,313.0 L323.4,317.9 L322.4,322.8 L321.3,327.7 L320.1,332.6 L318.8,337.6 L317.3,342.5 L315.7,347.4 L313.9,352.3 L311.9,357.2 L309.6,362.1 L306.9,367.1 L303.5,372.0 L299.1,376.9 L288.0,381.8Z" fill="none" stroke="#0f3f2c" stroke-width="10.5" stroke-linejoin="round"/>
<path d="M288.0,381.8 L276.9,376.9 L272.5,372.0 L269.1,367.1 L266.4,362.1 L264.1,357.2 L262.1,352.3 L260.3,347.4 L258.7,342.5 L257.2,337.6 L255.9,332.6 L254.7,327.7 L253.6,322.8 L252.6,317.9 L251.7,313.0 L250.9,308.1 L250.1,303.1 L249.4,298.2 L248.8,293.3 L248.3,288.4 L247.8,283.5 L247.4,278.6 L247.0,273.6 L246.7,268.7 L246.5,263.8 L246.3,258.9 L246.1,254.0 L246.0,249.1 L246.0,244.1 L246.1,239.2 L246.3,234.3 L246.8,229.4 L247.4,224.5 L248.3,219.6 L249.3,214.6 L250.5,209.7 L252.0,204.8 L253.6,199.9 L255.4,195.0 L257.5,190.1 L259.8,185.1 L262.2,180.2 L265.0,175.3 L267.9,170.4 L271.2,165.5 L274.7,160.6 L278.5,155.6 L282.8,150.7 L288.0,145.8 L288.0,145.8 L293.2,150.7 L297.5,155.6 L301.3,160.6 L304.8,165.5 L308.1,170.4 L311.0,175.3 L313.8,180.2 L316.2,185.1 L318.5,190.1 L320.6,195.0 L322.4,199.9 L324.0,204.8 L325.5,209.7 L326.7,214.6 L327.7,219.6 L328.6,224.5 L329.2,229.4 L329.7,234.3 L329.9,239.2 L330.0,244.1 L330.0,249.1 L329.9,254.0 L329.7,258.9 L329.5,263.8 L329.3,268.7 L329.0,273.6 L328.6,278.6 L328.2,283.5 L327.7,288.4 L327.2,293.3 L326.6,298.2 L325.9,303.1 L325.1,308.1 L324.3,313.0 L323.4,317.9 L322.4,322.8 L321.3,327.7 L320.1,332.6 L318.8,337.6 L317.3,342.5 L315.7,347.4 L313.9,352.3 L311.9,357.2 L309.6,362.1 L306.9,367.1 L303.5,372.0 L299.1,376.9 L288.0,381.8Z" fill="#216c4f"/>
<path d="M288.0,381.8 L269.8,367.1 L263.0,352.3 L258.4,337.6 L254.9,322.8 L252.2,308.1 L250.3,293.3 L248.9,278.6 L248.0,263.8 L247.6,249.1 L247.9,234.3 L249.7,219.6 L253.3,204.8 L258.6,190.1 L265.8,175.3 L275.2,160.6 L288.0,145.8 L288.0,145.8 M288.0,381.8 L271.2,367.1 L265.0,352.3 L260.6,337.6 L257.4,322.8 L255.0,308.1 L253.2,293.3 L251.9,278.6 L251.1,263.8 L250.7,249.1 L251.0,234.3 L252.7,219.6 L256.0,204.8 L260.9,190.1 L267.5,175.3 L276.1,160.6 L288.0,145.8 L288.0,145.8 M288.0,381.8 L272.6,367.1 L266.9,352.3 L262.9,337.6 L260.0,322.8 L257.7,308.1 L256.1,293.3 L254.9,278.6 L254.2,263.8 L253.8,249.1 L254.0,234.3 L255.6,219.6 L258.6,204.8 L263.1,190.1 L269.2,175.3 L277.1,160.6 L288.0,145.8 L288.0,145.8 M288.0,381.8 L274.0,367.1 L268.8,352.3 L265.2,337.6 L262.5,322.8 L260.5,308.1 L259.0,293.3 L257.9,278.6 L257.2,263.8 L256.9,249.1 L257.1,234.3 L258.6,219.6 L261.3,204.8 L265.4,190.1 L270.9,175.3 L278.1,160.6 L288.0,145.8 L288.0,145.8 M288.0,381.8 L275.4,367.1 L270.7,352.3 L267.5,337.6 L265.1,322.8 L263.2,308.1 L261.9,293.3 L260.9,278.6 L260.3,263.8 L260.0,249.1 L260.2,234.3 L261.5,219.6 L264.0,204.8 L267.7,190.1 L272.6,175.3 L279.1,160.6 L288.0,145.8 L288.0,145.8 M288.0,381.8 L276.8,367.1 L272.6,352.3 L269.8,337.6 L267.6,322.8 L266.0,308.1 L264.8,293.3 L263.9,278.6 L263.4,263.8 L263.1,249.1 L263.3,234.3 L264.5,219.6 L266.6,204.8 L269.9,190.1 L274.3,175.3 L280.1,160.6 L288.0,145.8 L288.0,145.8 M288.0,381.8 L278.2,367.1 L274.6,352.3 L272.0,337.6 L270.2,322.8 L268.7,308.1 L267.7,293.3 L266.9,278.6 L266.5,263.8 L266.2,249.1 L266.4,234.3 L267.4,219.6 L269.3,204.8 L272.2,190.1 L276.1,175.3 L281.1,160.6 L288.0,145.8 L288.0,145.8 M288.0,381.8 L279.6,367.1 L276.5,352.3 L274.3,337.6 L272.7,322.8 L271.5,308.1 L270.6,293.3 L269.9,278.6 L269.5,263.8 L269.3,249.1 L269.5,234.3 L270.3,219.6 L272.0,204.8 L274.4,190.1 L277.8,175.3 L282.1,160.6 L288.0,145.8 L288.0,145.8 M288.0,381.8 L281.0,367.1 L278.4,352.3 L276.6,337.6 L275.3,322.8 L274.2,308.1 L273.5,293.3 L273.0,278.6 L272.6,263.8 L272.5,249.1 L272.6,234.3 L273.3,219.6 L274.7,204.8 L276.7,190.1 L279.5,175.3 L283.1,160.6 L288.0,145.8 L288.0,145.8 M288.0,381.8 L282.4,367.1 L280.3,352.3 L278.9,337.6 L277.8,322.8 L277.0,308.1 L276.4,293.3 L276.0,278.6 L275.7,263.8 L275.6,249.1 L275.7,234.3 L276.2,219.6 L277.3,204.8 L279.0,190.1 L281.2,175.3 L284.0,160.6 L288.0,145.8 L288.0,145.8 M288.0,381.8 L283.8,367.1 L282.2,352.3 L281.2,337.6 L280.4,322.8 L279.7,308.1 L279.3,293.3 L279.0,278.6 L278.8,263.8 L278.7,249.1 L278.7,234.3 L279.2,219.6 L280.0,204.8 L281.2,190.1 L282.9,175.3 L285.0,160.6 L288.0,145.8 L288.0,145.8 M288.0,381.8 L285.2,367.1 L284.2,352.3 L283.4,337.6 L282.9,322.8 L282.5,308.1 L282.2,293.3 L282.0,278.6 L281.8,263.8 L281.8,249.1 L281.8,234.3 L282.1,219.6 L282.7,204.8 L283.5,190.1 L284.6,175.3 L286.0,160.6 L288.0,145.8 L288.0,145.8 M288.0,381.8 L286.6,367.1 L286.1,352.3 L285.7,337.6 L285.5,322.8 L285.2,308.1 L285.1,293.3 L285.0,278.6 L284.9,263.8 L284.9,249.1 L284.9,234.3 L285.1,219.6 L285.3,204.8 L285.7,190.1 L286.3,175.3 L287.0,160.6 L288.0,145.8 L288.0,145.8 M288.0,381.8 L288.0,367.1 L288.0,352.3 L288.0,337.6 L288.0,322.8 L288.0,308.1 L288.0,293.3 L288.0,278.6 L288.0,263.8 L288.0,249.1 L288.0,234.3 L288.0,219.6 L288.0,204.8 L288.0,190.1 L288.0,175.3 L288.0,160.6 L288.0,145.8 L288.0,145.8 M288.0,381.8 L289.4,367.1 L289.9,352.3 L290.3,337.6 L290.5,322.8 L290.8,308.1 L290.9,293.3 L291.0,278.6 L291.1,263.8 L291.1,249.1 L291.1,234.3 L290.9,219.6 L290.7,204.8 L290.3,190.1 L289.7,175.3 L289.0,160.6 L288.0,145.8 L288.0,145.8 M288.0,381.8 L290.8,367.1 L291.8,352.3 L292.6,337.6 L293.1,322.8 L293.5,308.1 L293.8,293.3 L294.0,278.6 L294.2,263.8 L294.2,249.1 L294.2,234.3 L293.9,219.6 L293.3,204.8 L292.5,190.1 L291.4,175.3 L290.0,160.6 L288.0,145.8 L288.0,145.8 M288.0,381.8 L292.2,367.1 L293.8,352.3 L294.8,337.6 L295.6,322.8 L296.3,308.1 L296.7,293.3 L297.0,278.6 L297.2,263.8 L297.3,249.1 L297.3,234.3 L296.8,219.6 L296.0,204.8 L294.8,190.1 L293.1,175.3 L291.0,160.6 L288.0,145.8 L288.0,145.8 M288.0,381.8 L293.6,367.1 L295.7,352.3 L297.1,337.6 L298.2,322.8 L299.0,308.1 L299.6,293.3 L300.0,278.6 L300.3,263.8 L300.4,249.1 L300.3,234.3 L299.8,219.6 L298.7,204.8 L297.0,190.1 L294.8,175.3 L292.0,160.6 L288.0,145.8 L288.0,145.8 M288.0,381.8 L295.0,367.1 L297.6,352.3 L299.4,337.6 L300.7,322.8 L301.8,308.1 L302.5,293.3 L303.0,278.6 L303.4,263.8 L303.5,249.1 L303.4,234.3 L302.7,219.6 L301.3,204.8 L299.3,190.1 L296.5,175.3 L292.9,160.6 L288.0,145.8 L288.0,145.8 M288.0,381.8 L296.4,367.1 L299.5,352.3 L301.7,337.6 L303.3,322.8 L304.5,308.1 L305.4,293.3 L306.1,278.6 L306.5,263.8 L306.7,249.1 L306.5,234.3 L305.7,219.6 L304.0,204.8 L301.6,190.1 L298.2,175.3 L293.9,160.6 L288.0,145.8 L288.0,145.8 M288.0,381.8 L297.8,367.1 L301.4,352.3 L304.0,337.6 L305.8,322.8 L307.3,308.1 L308.3,293.3 L309.1,278.6 L309.5,263.8 L309.8,249.1 L309.6,234.3 L308.6,219.6 L306.7,204.8 L303.8,190.1 L299.9,175.3 L294.9,160.6 L288.0,145.8 L288.0,145.8 M288.0,381.8 L299.2,367.1 L303.4,352.3 L306.2,337.6 L308.4,322.8 L310.0,308.1 L311.2,293.3 L312.1,278.6 L312.6,263.8 L312.9,249.1 L312.7,234.3 L311.5,219.6 L309.4,204.8 L306.1,190.1 L301.7,175.3 L295.9,160.6 L288.0,145.8 L288.0,145.8 M288.0,381.8 L300.6,367.1 L305.3,352.3 L308.5,337.6 L310.9,322.8 L312.8,308.1 L314.1,293.3 L315.1,278.6 L315.7,263.8 L316.0,249.1 L315.8,234.3 L314.5,219.6 L312.0,204.8 L308.3,190.1 L303.4,175.3 L296.9,160.6 L288.0,145.8 L288.0,145.8 M288.0,381.8 L302.0,367.1 L307.2,352.3 L310.8,337.6 L313.5,322.8 L315.5,308.1 L317.0,293.3 L318.1,278.6 L318.8,263.8 L319.1,249.1 L318.9,234.3 L317.4,219.6 L314.7,204.8 L310.6,190.1 L305.1,175.3 L297.9,160.6 L288.0,145.8 L288.0,145.8 M288.0,381.8 L303.4,367.1 L309.1,352.3 L313.1,337.6 L316.0,322.8 L318.3,308.1 L319.9,293.3 L321.1,278.6 L321.8,263.8 L322.2,249.1 L322.0,234.3 L320.4,219.6 L317.4,204.8 L312.9,190.1 L306.8,175.3 L298.9,160.6 L288.0,145.8 L288.0,145.8 M288.0,381.8 L304.8,367.1 L311.0,352.3 L315.4,337.6 L318.6,322.8 L321.0,308.1 L322.8,293.3 L324.1,278.6 L324.9,263.8 L325.3,249.1 L325.0,234.3 L323.3,219.6 L320.0,204.8 L315.1,190.1 L308.5,175.3 L299.9,160.6 L288.0,145.8 L288.0,145.8 M288.0,381.8 L306.2,367.1 L313.0,352.3 L317.6,337.6 L321.1,322.8 L323.8,308.1 L325.7,293.3 L327.1,278.6 L328.0,263.8 L328.4,249.1 L328.1,234.3 L326.3,219.6 L322.7,204.8 L317.4,190.1 L310.2,175.3 L300.8,160.6 L288.0,145.8 L288.0,145.8" clip-path="url(#c1)" fill="none" stroke="#4aa686" stroke-width="0.7" stroke-opacity="0.8"/>
<path d="M288.0,381.8 L276.9,376.9 L272.5,372.0 L269.1,367.1 L266.4,362.1 L264.1,357.2 L262.1,352.3 L260.3,347.4 L258.7,342.5 L257.2,337.6 L255.9,332.6 L254.7,327.7 L253.6,322.8 L252.6,317.9 L251.7,313.0 L250.9,308.1 L250.1,303.1 L249.4,298.2 L248.8,293.3 L248.3,288.4 L247.8,283.5 L247.4,278.6 L247.0,273.6 L246.7,268.7 L246.5,263.8 L246.3,258.9 L246.1,254.0 L246.0,249.1 L246.0,244.1 L246.1,239.2 L246.3,234.3 L246.8,229.4 L247.4,224.5 L248.3,219.6 L249.3,214.6 L250.5,209.7 L252.0,204.8 L253.6,199.9 L255.4,195.0 L257.5,190.1 L259.8,185.1 L262.2,180.2 L265.0,175.3 L267.9,170.4 L271.2,165.5 L274.7,160.6 L278.5,155.6 L282.8,150.7 L288.0,145.8 L288.0,145.8 L293.2,150.7 L297.5,155.6 L301.3,160.6 L304.8,165.5 L308.1,170.4 L311.0,175.3 L313.8,180.2 L316.2,185.1 L318.5,190.1 L320.6,195.0 L322.4,199.9 L324.0,204.8 L325.5,209.7 L326.7,214.6 L327.7,219.6 L328.6,224.5 L329.2,229.4 L329.7,234.3 L329.9,239.2 L330.0,244.1 L330.0,249.1 L329.9,254.0 L329.7,258.9 L329.5,263.8 L329.3,268.7 L329.0,273.6 L328.6,278.6 L328.2,283.5 L327.7,288.4 L327.2,293.3 L326.6,298.2 L325.9,303.1 L325.1,308.1 L324.3,313.0 L323.4,317.9 L322.4,322.8 L321.3,327.7 L320.1,332.6 L318.8,337.6 L317.3,342.5 L315.7,347.4 L313.9,352.3 L311.9,357.2 L309.6,362.1 L306.9,367.1 L303.5,372.0 L299.1,376.9 L288.0,381.8Z" clip-path="url(#c1)" fill="none" stroke="#0c3a28" stroke-width="15" stroke-opacity="0.35" stroke-linejoin="round"/>
<path d="M288.0,381.8 L276.9,376.9 L272.5,372.0 L269.1,367.1 L266.4,362.1 L264.1,357.2 L262.1,352.3 L260.3,347.4 L258.7,342.5 L257.2,337.6 L255.9,332.6 L254.7,327.7 L253.6,322.8 L252.6,317.9 L251.7,313.0 L250.9,308.1 L250.1,303.1 L249.4,298.2 L248.8,293.3 L248.3,288.4 L247.8,283.5 L247.4,278.6 L247.0,273.6 L246.7,268.7 L246.5,263.8 L246.3,258.9 L246.1,254.0 L246.0,249.1 L246.0,244.1 L246.1,239.2 L246.3,234.3 L246.8,229.4 L247.4,224.5 L248.3,219.6 L249.3,214.6 L250.5,209.7 L252.0,204.8 L253.6,199.9 L255.4,195.0 L257.5,190.1 L259.8,185.1 L262.2,180.2 L265.0,175.3 L267.9,170.4 L271.2,165.5 L274.7,160.6 L278.5,155.6 L282.8,150.7 L288.0,145.8 L288.0,145.8 L293.2,150.7 L297.5,155.6 L301.3,160.6 L304.8,165.5 L308.1,170.4 L311.0,175.3 L313.8,180.2 L316.2,185.1 L318.5,190.1 L320.6,195.0 L322.4,199.9 L324.0,204.8 L325.5,209.7 L326.7,214.6 L327.7,219.6 L328.6,224.5 L329.2,229.4 L329.7,234.3 L329.9,239.2 L330.0,244.1 L330.0,249.1 L329.9,254.0 L329.7,258.9 L329.5,263.8 L329.3,268.7 L329.0,273.6 L328.6,278.6 L328.2,283.5 L327.7,288.4 L327.2,293.3 L326.6,298.2 L325.9,303.1 L325.1,308.1 L324.3,313.0 L323.4,317.9 L322.4,322.8 L321.3,327.7 L320.1,332.6 L318.8,337.6 L317.3,342.5 L315.7,347.4 L313.9,352.3 L311.9,357.2 L309.6,362.1 L306.9,367.1 L303.5,372.0 L299.1,376.9 L288.0,381.8Z" fill="none" stroke="#257c5b" stroke-width="8" stroke-linejoin="round"/>
<path d="M288.0,381.8 L276.9,376.9 L272.5,372.0 L269.1,367.1 L266.4,362.1 L264.1,357.2 L262.1,352.3 L260.3,347.4 L258.7,342.5 L257.2,337.6 L255.9,332.6 L254.7,327.7 L253.6,322.8 L252.6,317.9 L251.7,313.0 L250.9,308.1 L250.1,303.1 L249.4,298.2 L248.8,293.3 L248.3,288.4 L247.8,283.5 L247.4,278.6 L247.0,273.6 L246.7,268.7 L246.5,263.8 L246.3,258.9 L246.1,254.0 L246.0,249.1 L246.0,244.1 L246.1,239.2 L246.3,234.3 L246.8,229.4 L247.4,224.5 L248.3,219.6 L249.3,214.6 L250.5,209.7 L252.0,204.8 L253.6,199.9 L255.4,195.0 L257.5,190.1 L259.8,185.1 L262.2,180.2 L265.0,175.3 L267.9,170.4 L271.2,165.5 L274.7,160.6 L278.5,155.6 L282.8,150.7 L288.0,145.8 L288.0,145.8 L293.2,150.7 L297.5,155.6 L301.3,160.6 L304.8,165.5 L308.1,170.4 L311.0,175.3 L313.8,180.2 L316.2,185.1 L318.5,190.1 L320.6,195.0 L322.4,199.9 L324.0,204.8 L325.5,209.7 L326.7,214.6 L327.7,219.6 L328.6,224.5 L329.2,229.4 L329.7,234.3 L329.9,239.2 L330.0,244.1 L330.0,249.1 L329.9,254.0 L329.7,258.9 L329.5,263.8 L329.3,268.7 L329.0,273.6 L328.6,278.6 L328.2,283.5 L327.7,288.4 L327.2,293.3 L326.6,298.2 L325.9,303.1 L325.1,308.1 L324.3,313.0 L323.4,317.9 L322.4,322.8 L321.3,327.7 L320.1,332.6 L318.8,337.6 L317.3,342.5 L315.7,347.4 L313.9,352.3 L311.9,357.2 L309.6,362.1 L306.9,367.1 L303.5,372.0 L299.1,376.9 L288.0,381.8Z" fill="none" stroke="#42a07c" stroke-width="2" stroke-linejoin="round" opacity="0.55"/>
<path d="M309.6,388.1 L302.9,378.0 L301.9,371.5 L301.7,365.5 L302.1,359.9 L302.8,354.6 L303.8,349.3 L304.9,344.2 L306.2,339.2 L307.7,334.3 L309.2,329.4 L310.8,324.6 L312.6,319.9 L314.4,315.2 L316.3,310.6 L318.3,306.0 L320.3,301.5 L322.4,297.0 L324.5,292.5 L326.7,288.1 L329.0,283.7 L331.3,279.3 L333.6,275.0 L336.0,270.7 L338.5,266.4 L341.0,262.2 L343.5,258.0 L346.1,253.8 L348.7,249.6 L351.4,245.5 L354.3,241.5 L357.4,237.6 L360.6,233.9 L363.9,230.2 L367.4,226.6 L371.1,223.1 L375.0,219.8 L379.0,216.5 L383.2,213.4 L387.6,210.3 L392.2,207.4 L396.9,204.6 L401.9,202.0 L407.0,199.4 L412.4,197.1 L418.0,194.8 L423.9,192.8 L430.2,190.9 L437.2,189.6 L437.2,189.6 L438.9,196.6 L439.9,203.0 L440.5,209.2 L440.8,215.3 L440.8,221.1 L440.6,226.9 L440.3,232.5 L439.7,238.0 L439.0,243.3 L438.0,248.6 L436.9,253.7 L435.6,258.7 L434.2,263.6 L432.6,268.4 L430.8,273.1 L428.8,277.7 L426.7,282.2 L424.4,286.6 L422.0,290.9 L419.4,295.0 L416.7,299.2 L414.0,303.3 L411.2,307.3 L408.4,311.3 L405.5,315.3 L402.6,319.3 L399.6,323.3 L396.6,327.2 L393.5,331.0 L390.4,334.9 L387.3,338.7 L384.0,342.5 L380.7,346.2 L377.4,349.9 L374.0,353.5 L370.5,357.1 L366.9,360.7 L363.2,364.1 L359.4,367.6 L355.6,370.9 L351.5,374.2 L347.4,377.3 L343.0,380.4 L338.4,383.3 L333.5,385.9 L328.0,388.3 L321.6,390.0 L309.6,388.1Z" fill="none" stroke="#0f3f2c" stroke-width="10.5" stroke-linejoin="round"/>
<path d="M309.6,388.1 L302.9,378.0 L301.9,371.5 L301.7,365.5 L302.1,359.9 L302.8,354.6 L303.8,349.3 L304.9,344.2 L306.2,339.2 L307.7,334.3 L309.2,329.4 L310.8,324.6 L312.6,319.9 L314.4,315.2 L316.3,310.6 L318.3,306.0 L320.3,301.5 L322.4,297.0 L324.5,292.5 L326.7,288.1 L329.0,283.7 L331.3,279.3 L333.6,275.0 L336.0,270.7 L338.5,266.4 L341.0,262.2 L343.5,258.0 L346.1,253.8 L348.7,249.6 L351.4,245.5 L354.3,241.5 L357.4,237.6 L360.6,233.9 L363.9,230.2 L367.4,226.6 L371.1,223.1 L375.0,219.8 L379.0,216.5 L383.2,213.4 L387.6,210.3 L392.2,207.4 L396.9,204.6 L401.9,202.0 L407.0,199.4 L412.4,197.1 L418.0,194.8 L423.9,192.8 L430.2,190.9 L437.2,189.6 L437.2,189.6 L438.9,196.6 L439.9,203.0 L440.5,209.2 L440.8,215.3 L440.8,221.1 L440.6,226.9 L440.3,232.5 L439.7,238.0 L439.0,243.3 L438.0,248.6 L436.9,253.7 L435.6,258.7 L434.2,263.6 L432.6,268.4 L430.8,273.1 L428.8,277.7 L426.7,282.2 L424.4,286.6 L422.0,290.9 L419.4,295.0 L416.7,299.2 L414.0,303.3 L411.2,307.3 L408.4,311.3 L405.5,315.3 L402.6,319.3 L399.6,323.3 L396.6,327.2 L393.5,331.0 L390.4,334.9 L387.3,338.7 L384.0,342.5 L380.7,346.2 L377.4,349.9 L374.0,353.5 L370.5,357.1 L366.9,360.7 L363.2,364.1 L359.4,367.6 L355.6,370.9 L351.5,374.2 L347.4,377.3 L343.0,380.4 L338.4,383.3 L333.5,385.9 L328.0,388.3 L321.6,390.0 L309.6,388.1Z" fill="#216c4f"/>
<path d="M309.6,388.1 L302.3,365.9 L304.6,349.8 L308.6,334.9 L313.7,320.6 L319.4,306.8 L325.7,293.3 L332.5,280.1 L339.8,267.3 L347.4,254.6 L355.6,242.4 L365.2,231.0 L376.1,220.5 L388.6,211.0 L402.6,202.4 L418.4,195.1 L437.2,189.6 L437.2,189.6 M309.6,388.1 L303.5,366.7 L306.2,350.9 L310.5,336.1 L315.8,322.0 L321.7,308.3 L328.2,294.9 L335.1,281.8 L342.4,268.9 L350.0,256.3 L358.2,244.0 L367.6,232.6 L378.4,221.9 L390.5,212.2 L404.0,203.4 L419.3,195.6 L437.2,189.6 L437.2,189.6 M309.6,388.1 L304.7,367.4 L307.8,351.9 L312.4,337.4 L317.9,323.4 L324.0,309.7 L330.6,296.4 L337.6,283.4 L344.9,270.6 L352.6,258.0 L360.8,245.7 L370.1,234.2 L380.6,223.4 L392.4,213.4 L405.5,204.3 L420.1,196.1 L437.2,189.6 L437.2,189.6 M309.6,388.1 L305.8,368.2 L309.4,353.0 L314.4,338.6 L320.1,324.7 L326.4,311.2 L333.1,298.0 L340.1,285.0 L347.5,272.2 L355.2,259.7 L363.4,247.4 L372.6,235.7 L382.9,224.8 L394.3,214.6 L406.9,205.2 L420.9,196.7 L437.2,189.6 L437.2,189.6 M309.6,388.1 L307.0,368.9 L311.0,354.0 L316.3,339.8 L322.2,326.1 L328.7,312.7 L335.5,299.6 L342.7,286.6 L350.1,273.9 L357.9,261.3 L366.0,249.0 L375.1,237.3 L385.1,226.3 L396.2,215.8 L408.3,206.1 L421.8,197.2 L437.2,189.6 L437.2,189.6 M309.6,388.1 L308.2,369.7 L312.7,355.0 L318.2,341.1 L324.4,327.5 L331.0,314.2 L337.9,301.1 L345.2,288.3 L352.7,275.6 L360.5,263.0 L368.6,250.7 L377.5,238.9 L387.4,227.7 L398.1,217.1 L409.8,207.0 L422.6,197.8 L437.2,189.6 L437.2,189.6 M309.6,388.1 L309.4,370.5 L314.3,356.1 L320.1,342.3 L326.5,328.9 L333.3,315.7 L340.4,302.7 L347.7,289.9 L355.3,277.2 L363.1,264.7 L371.2,252.4 L380.0,240.5 L389.6,229.1 L400.0,218.3 L411.2,208.0 L423.4,198.3 L437.2,189.6 L437.2,189.6 M309.6,388.1 L310.5,371.2 L315.9,357.1 L322.0,343.5 L328.7,330.2 L335.6,317.2 L342.8,304.3 L350.3,291.5 L357.9,278.9 L365.7,266.4 L373.8,254.1 L382.5,242.1 L391.8,230.6 L401.9,219.5 L412.7,208.9 L424.3,198.8 L437.2,189.6 L437.2,189.6 M309.6,388.1 L311.7,372.0 L317.5,358.1 L324.0,344.8 L330.8,331.6 L337.9,318.7 L345.3,305.9 L352.8,293.2 L360.5,280.6 L368.3,268.1 L376.4,255.7 L385.0,243.7 L394.1,232.0 L403.8,220.7 L414.1,209.8 L425.1,199.4 L437.2,189.6 L437.2,189.6 M309.6,388.1 L312.9,372.7 L319.1,359.2 L325.9,346.0 L332.9,333.0 L340.2,320.2 L347.7,307.4 L355.3,294.8 L363.1,282.2 L370.9,269.8 L379.0,257.4 L387.4,245.3 L396.3,233.5 L405.7,222.0 L415.5,210.7 L425.9,199.9 L437.2,189.6 L437.2,189.6 M309.6,388.1 L314.1,373.5 L320.7,360.2 L327.8,347.2 L335.1,334.4 L342.6,321.6 L350.1,309.0 L357.9,296.4 L365.7,283.9 L373.6,271.4 L381.6,259.1 L389.9,246.9 L398.6,234.9 L407.6,223.2 L417.0,211.7 L426.8,200.4 L437.2,189.6 L437.2,189.6 M309.6,388.1 L315.2,374.2 L322.3,361.3 L329.7,348.5 L337.2,335.8 L344.9,323.1 L352.6,310.6 L360.4,298.0 L368.2,285.6 L376.2,273.1 L384.2,260.7 L392.4,248.5 L400.8,236.4 L409.5,224.4 L418.4,212.6 L427.6,201.0 L437.2,189.6 L437.2,189.6 M309.6,388.1 L316.4,375.0 L324.0,362.3 L331.6,349.7 L339.4,337.1 L347.2,324.6 L355.0,312.1 L362.9,299.7 L370.8,287.2 L378.8,274.8 L386.8,262.4 L394.9,250.1 L403.1,237.8 L411.4,225.6 L419.8,213.5 L428.4,201.5 L437.2,189.6 L437.2,189.6 M309.6,388.1 L317.6,375.7 L325.6,363.3 L333.5,350.9 L341.5,338.5 L349.5,326.1 L357.5,313.7 L365.4,301.3 L373.4,288.9 L381.4,276.5 L389.4,264.1 L397.3,251.7 L405.3,239.2 L413.3,226.8 L421.3,214.4 L429.2,202.0 L437.2,189.6 L437.2,189.6 M309.6,388.1 L318.8,376.5 L327.2,364.4 L335.5,352.2 L343.7,339.9 L351.8,327.6 L359.9,315.3 L368.0,302.9 L376.0,290.5 L384.0,278.2 L392.0,265.7 L399.8,253.2 L407.6,240.7 L415.2,228.1 L422.7,215.4 L430.1,202.6 L437.2,189.6 L437.2,189.6 M309.6,388.1 L320.0,377.3 L328.8,365.4 L337.4,353.4 L345.8,341.3 L354.1,329.1 L362.4,316.8 L370.5,304.5 L378.6,292.2 L386.6,279.8 L394.6,267.4 L402.3,254.8 L409.8,242.1 L417.1,229.3 L424.1,216.3 L430.9,203.1 L437.2,189.6 L437.2,189.6 M309.6,388.1 L321.1,378.0 L330.4,366.4 L339.3,354.6 L348.0,342.6 L356.4,330.6 L364.8,318.4 L373.0,306.2 L381.2,293.9 L389.2,281.5 L397.2,269.1 L404.8,256.4 L412.1,243.6 L419.0,230.5 L425.6,217.2 L431.7,203.6 L437.2,189.6 L437.2,189.6 M309.6,388.1 L322.3,378.8 L332.0,367.5 L341.2,355.9 L350.1,344.0 L358.8,332.1 L367.2,320.0 L375.6,307.8 L383.8,295.5 L391.9,283.2 L399.8,270.7 L407.2,258.0 L414.3,245.0 L420.9,231.7 L427.0,218.1 L432.6,204.2 L437.2,189.6 L437.2,189.6 M309.6,388.1 L323.5,379.5 L333.7,368.5 L343.1,357.1 L352.2,345.4 L361.1,333.5 L369.7,321.5 L378.1,309.4 L386.4,297.2 L394.5,284.9 L402.4,272.4 L409.7,259.6 L416.5,246.5 L422.8,232.9 L428.4,219.0 L433.4,204.7 L437.2,189.6 L437.2,189.6 M309.6,388.1 L324.7,380.3 L335.3,369.6 L345.1,358.3 L354.4,346.8 L363.4,335.0 L372.1,323.1 L380.6,311.1 L389.0,298.9 L397.1,286.6 L405.0,274.1 L412.2,261.2 L418.8,247.9 L424.7,234.2 L429.9,220.0 L434.2,205.2 L437.2,189.6 L437.2,189.6 M309.6,388.1 L325.8,381.0 L336.9,370.6 L347.0,359.6 L356.5,348.2 L365.7,336.5 L374.6,324.7 L383.2,312.7 L391.5,300.5 L399.7,288.2 L407.5,275.7 L414.7,262.8 L421.0,249.4 L426.6,235.4 L431.3,220.9 L435.1,205.8 L437.2,189.6 L437.2,189.6 M309.6,388.1 L327.0,381.8 L338.5,371.6 L348.9,360.8 L358.7,349.5 L368.0,338.0 L377.0,326.2 L385.7,314.3 L394.1,302.2 L402.3,289.9 L410.1,277.4 L417.2,264.4 L423.3,250.8 L428.5,236.6 L432.8,221.8 L435.9,206.3 L437.2,189.6 L437.2,189.6 M309.6,388.1 L328.2,382.5 L340.1,372.7 L350.8,362.0 L360.8,350.9 L370.3,339.5 L379.4,327.8 L388.2,315.9 L396.7,303.9 L404.9,291.6 L412.7,279.1 L419.6,266.0 L425.5,252.2 L430.4,237.8 L434.2,222.7 L436.7,206.8 L437.2,189.6 L437.2,189.6 M309.6,388.1 L329.4,383.3 L341.7,373.7 L352.7,363.3 L363.0,352.3 L372.6,341.0 L381.9,329.4 L390.8,317.6 L399.3,305.5 L407.5,293.3 L415.3,280.8 L422.1,267.6 L427.8,253.7 L432.3,239.1 L435.6,223.7 L437.5,207.4 L437.2,189.6 L437.2,189.6 M309.6,388.1 L330.5,384.1 L343.3,374.8 L354.7,364.5 L365.1,353.7 L375.0,342.5 L384.3,331.0 L393.3,319.2 L401.9,307.2 L410.2,295.0 L417.9,282.4 L424.6,269.2 L430.0,255.1 L434.2,240.3 L437.1,224.6 L438.4,207.9 L437.2,189.6 L437.2,189.6 M309.6,388.1 L331.7,384.8 L345.0,375.8 L356.6,365.7 L367.2,355.0 L377.3,344.0 L386.8,332.5 L395.8,320.8 L404.5,308.8 L412.8,296.6 L420.5,284.1 L427.1,270.8 L432.3,256.6 L436.1,241.5 L438.5,225.5 L439.2,208.4 L437.2,189.6 L437.2,189.6 M309.6,388.1 L332.9,385.6 L346.6,376.8 L358.5,367.0 L369.4,356.4 L379.6,345.4 L389.2,334.1 L398.4,322.4 L407.1,310.5 L415.4,298.3 L423.1,285.8 L429.5,272.3 L434.5,258.0 L438.0,242.7 L439.9,226.4 L440.0,209.0 L437.2,189.6 L437.2,189.6" clip-path="url(#c2)" fill="none" stroke="#4aa686" stroke-width="0.7" stroke-opacity="0.8"/>
<path d="M309.6,388.1 L302.9,378.0 L301.9,371.5 L301.7,365.5 L302.1,359.9 L302.8,354.6 L303.8,349.3 L304.9,344.2 L306.2,339.2 L307.7,334.3 L309.2,329.4 L310.8,324.6 L312.6,319.9 L314.4,315.2 L316.3,310.6 L318.3,306.0 L320.3,301.5 L322.4,297.0 L324.5,292.5 L326.7,288.1 L329.0,283.7 L331.3,279.3 L333.6,275.0 L336.0,270.7 L338.5,266.4 L341.0,262.2 L343.5,258.0 L346.1,253.8 L348.7,249.6 L351.4,245.5 L354.3,241.5 L357.4,237.6 L360.6,233.9 L363.9,230.2 L367.4,226.6 L371.1,223.1 L375.0,219.8 L379.0,216.5 L383.2,213.4 L387.6,210.3 L392.2,207.4 L396.9,204.6 L401.9,202.0 L407.0,199.4 L412.4,197.1 L418.0,194.8 L423.9,192.8 L430.2,190.9 L437.2,189.6 L437.2,189.6 L438.9,196.6 L439.9,203.0 L440.5,209.2 L440.8,215.3 L440.8,221.1 L440.6,226.9 L440.3,232.5 L439.7,238.0 L439.0,243.3 L438.0,248.6 L436.9,253.7 L435.6,258.7 L434.2,263.6 L432.6,268.4 L430.8,273.1 L428.8,277.7 L426.7,282.2 L424.4,286.6 L422.0,290.9 L419.4,295.0 L416.7,299.2 L414.0,303.3 L411.2,307.3 L408.4,311.3 L405.5,315.3 L402.6,319.3 L399.6,323.3 L396.6,327.2 L393.5,331.0 L390.4,334.9 L387.3,338.7 L384.0,342.5 L380.7,346.2 L377.4,349.9 L374.0,353.5 L370.5,357.1 L366.9,360.7 L363.2,364.1 L359.4,367.6 L355.6,370.9 L351.5,374.2 L347.4,377.3 L343.0,380.4 L338.4,383.3 L333.5,385.9 L328.0,388.3 L321.6,390.0 L309.6,388.1Z" clip-path="url(#c2)" fill="none" stroke="#0c3a28" stroke-width="15" stroke-opacity="0.35" stroke-linejoin="round"/>
<path d="M309.6,388.1 L302.9,378.0 L301.9,371.5 L301.7,365.5 L302.1,359.9 L302.8,354.6 L303.8,349.3 L304.9,344.2 L306.2,339.2 L307.7,334.3 L309.2,329.4 L310.8,324.6 L312.6,319.9 L314.4,315.2 L316.3,310.6 L318.3,306.0 L320.3,301.5 L322.4,297.0 L324.5,292.5 L326.7,288.1 L329.0,283.7 L331.3,279.3 L333.6,275.0 L336.0,270.7 L338.5,266.4 L341.0,262.2 L343.5,258.0 L346.1,253.8 L348.7,249.6 L351.4,245.5 L354.3,241.5 L357.4,237.6 L360.6,233.9 L363.9,230.2 L367.4,226.6 L371.1,223.1 L375.0,219.8 L379.0,216.5 L383.2,213.4 L387.6,210.3 L392.2,207.4 L396.9,204.6 L401.9,202.0 L407.0,199.4 L412.4,197.1 L418.0,194.8 L423.9,192.8 L430.2,190.9 L437.2,189.6 L437.2,189.6 L438.9,196.6 L439.9,203.0 L440.5,209.2 L440.8,215.3 L440.8,221.1 L440.6,226.9 L440.3,232.5 L439.7,238.0 L439.0,243.3 L438.0,248.6 L436.9,253.7 L435.6,258.7 L434.2,263.6 L432.6,268.4 L430.8,273.1 L428.8,277.7 L426.7,282.2 L424.4,286.6 L422.0,290.9 L419.4,295.0 L416.7,299.2 L414.0,303.3 L411.2,307.3 L408.4,311.3 L405.5,315.3 L402.6,319.3 L399.6,323.3 L396.6,327.2 L393.5,331.0 L390.4,334.9 L387.3,338.7 L384.0,342.5 L380.7,346.2 L377.4,349.9 L374.0,353.5 L370.5,357.1 L366.9,360.7 L363.2,364.1 L359.4,367.6 L355.6,370.9 L351.5,374.2 L347.4,377.3 L343.0,380.4 L338.4,383.3 L333.5,385.9 L328.0,388.3 L321.6,390.0 L309.6,388.1Z" fill="none" stroke="#257c5b" stroke-width="8" stroke-linejoin="round"/>
<path d="M309.6,388.1 L302.9,378.0 L301.9,371.5 L301.7,365.5 L302.1,359.9 L302.8,354.6 L303.8,349.3 L304.9,344.2 L306.2,339.2 L307.7,334.3 L309.2,329.4 L310.8,324.6 L312.6,319.9 L314.4,315.2 L316.3,310.6 L318.3,306.0 L320.3,301.5 L322.4,297.0 L324.5,292.5 L326.7,288.1 L329.0,283.7 L331.3,279.3 L333.6,275.0 L336.0,270.7 L338.5,266.4 L341.0,262.2 L343.5,258.0 L346.1,253.8 L348.7,249.6 L351.4,245.5 L354.3,241.5 L357.4,237.6 L360.6,233.9 L363.9,230.2 L367.4,226.6 L371.1,223.1 L375.0,219.8 L379.0,216.5 L383.2,213.4 L387.6,210.3 L392.2,207.4 L396.9,204.6 L401.9,202.0 L407.0,199.4 L412.4,197.1 L418.0,194.8 L423.9,192.8 L430.2,190.9 L437.2,189.6 L437.2,189.6 L438.9,196.6 L439.9,203.0 L440.5,209.2 L440.8,215.3 L440.8,221.1 L440.6,226.9 L440.3,232.5 L439.7,238.0 L439.0,243.3 L438.0,248.6 L436.9,253.7 L435.6,258.7 L434.2,263.6 L432.6,268.4 L430.8,273.1 L428.8,277.7 L426.7,282.2 L424.4,286.6 L422.0,290.9 L419.4,295.0 L416.7,299.2 L414.0,303.3 L411.2,307.3 L408.4,311.3 L405.5,315.3 L402.6,319.3 L399.6,323.3 L396.6,327.2 L393.5,331.0 L390.4,334.9 L387.3,338.7 L384.0,342.5 L380.7,346.2 L377.4,349.9 L374.0,353.5 L370.5,357.1 L366.9,360.7 L363.2,364.1 L359.4,367.6 L355.6,370.9 L351.5,374.2 L347.4,377.3 L343.0,380.4 L338.4,383.3 L333.5,385.9 L328.0,388.3 L321.6,390.0 L309.6,388.1Z" fill="none" stroke="#42a07c" stroke-width="2" stroke-linejoin="round" opacity="0.55"/>
<path d="M324.4,405.2 L324.2,393.0 L326.9,387.0 L330.0,381.9 L333.3,377.4 L336.8,373.2 L340.5,369.4 L344.2,365.7 L348.0,362.2 L351.8,358.8 L355.8,355.6 L359.7,352.4 L363.8,349.4 L367.8,346.4 L371.9,343.6 L376.0,340.8 L380.2,338.0 L384.4,335.4 L388.6,332.8 L392.9,330.2 L397.1,327.8 L401.4,325.3 L405.8,323.0 L410.1,320.6 L414.5,318.4 L418.9,316.2 L423.3,314.0 L427.7,311.9 L432.2,309.8 L436.7,307.8 L441.2,306.0 L445.9,304.4 L450.6,302.9 L455.5,301.6 L460.4,300.5 L465.4,299.6 L470.4,298.9 L475.6,298.3 L480.8,297.9 L486.1,297.8 L491.5,297.8 L497.1,298.0 L502.7,298.4 L508.4,299.1 L514.2,300.0 L520.1,301.1 L526.2,302.6 L532.4,304.5 L539.1,307.1 L539.1,307.1 L536.7,313.9 L534.1,319.9 L531.2,325.4 L528.2,330.6 L525.0,335.6 L521.8,340.4 L518.5,344.9 L515.0,349.2 L511.5,353.3 L507.9,357.2 L504.2,360.9 L500.4,364.4 L496.5,367.8 L492.5,370.9 L488.5,373.9 L484.4,376.7 L480.2,379.4 L475.9,381.8 L471.5,384.1 L467.1,386.2 L462.6,388.2 L458.1,390.2 L453.5,392.1 L449.0,394.0 L444.4,395.8 L439.8,397.5 L435.2,399.2 L430.5,400.9 L425.9,402.5 L421.2,404.1 L416.4,405.5 L411.7,407.0 L406.9,408.3 L402.1,409.6 L397.2,410.8 L392.3,412.0 L387.4,413.0 L382.4,414.0 L377.4,414.8 L372.3,415.5 L367.2,416.1 L362.0,416.5 L356.7,416.7 L351.2,416.6 L345.6,416.2 L339.8,415.2 L333.5,413.2 L324.4,405.2Z" fill="none" stroke="#0f3f2c" stroke-width="10.5" stroke-linejoin="round"/>
<path d="M324.4,405.2 L324.2,393.0 L326.9,387.0 L330.0,381.9 L333.3,377.4 L336.8,373.2 L340.5,369.4 L344.2,365.7 L348.0,362.2 L351.8,358.8 L355.8,355.6 L359.7,352.4 L363.8,349.4 L367.8,346.4 L371.9,343.6 L376.0,340.8 L380.2,338.0 L384.4,335.4 L388.6,332.8 L392.9,330.2 L397.1,327.8 L401.4,325.3 L405.8,323.0 L410.1,320.6 L414.5,318.4 L418.9,316.2 L423.3,314.0 L427.7,311.9 L432.2,309.8 L436.7,307.8 L441.2,306.0 L445.9,304.4 L450.6,302.9 L455.5,301.6 L460.4,300.5 L465.4,299.6 L470.4,298.9 L475.6,298.3 L480.8,297.9 L486.1,297.8 L491.5,297.8 L497.1,298.0 L502.7,298.4 L508.4,299.1 L514.2,300.0 L520.1,301.1 L526.2,302.6 L532.4,304.5 L539.1,307.1 L539.1,307.1 L536.7,313.9 L534.1,319.9 L531.2,325.4 L528.2,330.6 L525.0,335.6 L521.8,340.4 L518.5,344.9 L515.0,349.2 L511.5,353.3 L507.9,357.2 L504.2,360.9 L500.4,364.4 L496.5,367.8 L492.5,370.9 L488.5,373.9 L484.4,376.7 L480.2,379.4 L475.9,381.8 L471.5,384.1 L467.1,386.2 L462.6,388.2 L458.1,390.2 L453.5,392.1 L449.0,394.0 L444.4,395.8 L439.8,397.5 L435.2,399.2 L430.5,400.9 L425.9,402.5 L421.2,404.1 L416.4,405.5 L411.7,407.0 L406.9,408.3 L402.1,409.6 L397.2,410.8 L392.3,412.0 L387.4,413.0 L382.4,414.0 L377.4,414.8 L372.3,415.5 L367.2,416.1 L362.0,416.5 L356.7,416.7 L351.2,416.6 L345.6,416.2 L339.8,415.2 L333.5,413.2 L324.4,405.2Z" fill="#216c4f"/>
<path d="M324.4,405.2 L330.3,382.5 L340.9,370.2 L352.3,359.8 L364.3,350.5 L376.6,342.0 L389.2,334.1 L402.1,326.7 L415.1,319.8 L428.4,313.3 L441.9,307.4 L456.1,303.0 L471.0,300.1 L486.6,298.8 L503.0,299.2 L520.3,301.6 L539.1,307.1 L539.1,307.1 M324.4,405.2 L330.8,383.8 L341.6,372.0 L353.3,361.9 L365.4,352.9 L377.8,344.5 L390.4,336.7 L403.3,329.4 L416.4,322.6 L429.6,316.1 L443.2,310.2 L457.3,305.7 L472.1,302.5 L487.5,300.9 L503.7,300.8 L520.7,302.5 L539.1,307.1 L539.1,307.1 M324.4,405.2 L331.4,385.1 L342.4,373.7 L354.2,364.0 L366.4,355.2 L378.9,347.0 L391.6,339.4 L404.6,332.2 L417.7,325.4 L430.9,318.9 L444.5,313.0 L458.5,308.3 L473.2,304.9 L488.5,302.9 L504.4,302.3 L521.1,303.4 L539.1,307.1 L539.1,307.1 M324.4,405.2 L332.0,386.3 L343.2,375.5 L355.2,366.1 L367.5,357.5 L380.0,349.5 L392.8,342.0 L405.8,334.9 L418.9,328.2 L432.2,321.8 L445.7,315.8 L459.7,311.0 L474.3,307.4 L489.4,305.0 L505.1,303.9 L521.5,304.3 L539.1,307.1 L539.1,307.1 M324.4,405.2 L332.6,387.6 L344.0,377.2 L356.1,368.1 L368.5,359.8 L381.2,352.0 L394.0,344.7 L407.1,337.7 L420.2,331.0 L433.5,324.6 L447.0,318.6 L461.0,313.7 L475.4,309.8 L490.4,307.0 L505.8,305.4 L521.9,305.2 L539.1,307.1 L539.1,307.1 M324.4,405.2 L333.2,388.9 L344.8,379.0 L357.1,370.2 L369.6,362.1 L382.3,354.5 L395.2,347.3 L408.3,340.4 L421.5,333.8 L434.8,327.4 L448.3,321.4 L462.2,316.4 L476.5,312.2 L491.3,309.1 L506.6,307.0 L522.4,306.1 L539.1,307.1 L539.1,307.1 M324.4,405.2 L333.7,390.2 L345.6,380.7 L358.0,372.3 L370.6,364.4 L383.5,357.0 L396.4,349.9 L409.6,343.1 L422.8,336.6 L436.1,330.2 L449.6,324.3 L463.4,319.0 L477.6,314.7 L492.2,311.1 L507.3,308.5 L522.8,307.0 L539.1,307.1 L539.1,307.1 M324.4,405.2 L334.3,391.4 L346.4,382.4 L359.0,374.4 L371.7,366.8 L384.6,359.5 L397.7,352.6 L410.8,345.9 L424.1,339.4 L437.4,333.1 L450.9,327.1 L464.6,321.7 L478.7,317.1 L493.2,313.2 L508.0,310.1 L523.2,307.9 L539.1,307.1 L539.1,307.1 M324.4,405.2 L334.9,392.7 L347.2,384.2 L359.9,376.4 L372.8,369.1 L385.8,362.0 L398.9,355.2 L412.1,348.6 L425.3,342.2 L438.7,335.9 L452.1,329.9 L465.9,324.4 L479.8,319.5 L494.1,315.2 L508.7,311.6 L523.6,308.8 L539.1,307.1 L539.1,307.1 M324.4,405.2 L335.5,394.0 L348.0,385.9 L360.8,378.5 L373.8,371.4 L386.9,364.5 L400.1,357.9 L413.3,351.3 L426.6,345.0 L440.0,338.7 L453.4,332.7 L467.1,327.1 L481.0,321.9 L495.1,317.3 L509.4,313.2 L524.0,309.7 L539.1,307.1 L539.1,307.1 M324.4,405.2 L336.1,395.2 L348.8,387.7 L361.8,380.6 L374.9,373.7 L388.0,367.0 L401.3,360.5 L414.6,354.1 L427.9,347.8 L441.3,341.6 L454.7,335.5 L468.3,329.8 L482.1,324.4 L496.0,319.4 L510.1,314.7 L524.4,310.6 L539.1,307.1 L539.1,307.1 M324.4,405.2 L336.6,396.5 L349.6,389.4 L362.7,382.7 L375.9,376.0 L389.2,369.5 L402.5,363.1 L415.8,356.8 L429.2,350.6 L442.6,344.4 L456.0,338.3 L469.5,332.4 L483.2,326.8 L496.9,321.4 L510.8,316.3 L524.8,311.5 L539.1,307.1 L539.1,307.1 M324.4,405.2 L337.2,397.8 L350.4,391.2 L363.7,384.7 L377.0,378.4 L390.3,372.0 L403.7,365.8 L417.1,359.6 L430.4,353.4 L443.8,347.2 L457.3,341.1 L470.8,335.1 L484.3,329.2 L497.9,323.5 L511.5,317.8 L525.2,312.4 L539.1,307.1 L539.1,307.1 M324.4,405.2 L337.8,399.1 L351.2,392.9 L364.6,386.8 L378.1,380.7 L391.5,374.5 L404.9,368.4 L418.3,362.3 L431.7,356.2 L445.1,350.0 L458.6,343.9 L472.0,337.8 L485.4,331.7 L498.8,325.5 L512.2,319.4 L525.6,313.3 L539.1,307.1 L539.1,307.1 M324.4,405.2 L338.4,400.3 L352.0,394.7 L365.6,388.9 L379.1,383.0 L392.6,377.0 L406.1,371.1 L419.6,365.0 L433.0,359.0 L446.4,352.9 L459.8,346.7 L473.2,340.5 L486.5,334.1 L499.7,327.6 L512.9,321.0 L526.1,314.2 L539.1,307.1 L539.1,307.1 M324.4,405.2 L339.0,401.6 L352.8,396.4 L366.5,390.9 L380.2,385.3 L393.8,379.6 L407.3,373.7 L420.8,367.8 L434.3,361.8 L447.7,355.7 L461.1,349.5 L474.4,343.1 L487.6,336.5 L500.7,329.6 L513.6,322.5 L526.5,315.1 L539.1,307.1 L539.1,307.1 M324.4,405.2 L339.5,402.9 L353.6,398.2 L367.5,393.0 L381.2,387.6 L394.9,382.1 L408.5,376.3 L422.1,370.5 L435.6,364.6 L449.0,358.5 L462.4,352.3 L475.6,345.8 L488.7,338.9 L501.6,331.7 L514.4,324.1 L526.9,316.0 L539.1,307.1 L539.1,307.1 M324.4,405.2 L340.1,404.1 L354.4,399.9 L368.4,395.1 L382.3,389.9 L396.0,384.6 L409.7,379.0 L423.3,373.2 L436.8,367.4 L450.3,361.3 L463.7,355.1 L476.9,348.5 L489.8,341.4 L502.6,333.8 L515.1,325.6 L527.3,316.9 L539.1,307.1 L539.1,307.1 M324.4,405.2 L340.7,405.4 L355.2,401.7 L369.4,397.2 L383.3,392.3 L397.2,387.1 L410.9,381.6 L424.6,376.0 L438.1,370.2 L451.6,364.2 L465.0,357.9 L478.1,351.2 L490.9,343.8 L503.5,335.8 L515.8,327.2 L527.7,317.8 L539.1,307.1 L539.1,307.1 M324.4,405.2 L341.3,406.7 L356.0,403.4 L370.3,399.2 L384.4,394.6 L398.3,389.6 L412.1,384.3 L425.8,378.7 L439.4,373.0 L452.9,367.0 L466.2,360.8 L479.3,353.8 L492.0,346.2 L504.4,337.9 L516.5,328.7 L528.1,318.7 L539.1,307.1 L539.1,307.1 M324.4,405.2 L341.9,408.0 L356.8,405.2 L371.3,401.3 L385.5,396.9 L399.5,392.1 L413.3,386.9 L427.1,381.5 L440.7,375.8 L454.2,369.8 L467.5,363.6 L480.5,356.5 L493.2,348.7 L505.4,339.9 L517.2,330.3 L528.5,319.6 L539.1,307.1 L539.1,307.1 M324.4,405.2 L342.4,409.2 L357.6,406.9 L372.2,403.4 L386.5,399.2 L400.6,394.6 L414.5,389.5 L428.3,384.2 L441.9,378.6 L455.5,372.7 L468.8,366.4 L481.8,359.2 L494.3,351.1 L506.3,342.0 L517.9,331.8 L528.9,320.5 L539.1,307.1 L539.1,307.1 M324.4,405.2 L343.0,410.5 L358.4,408.6 L373.2,405.5 L387.6,401.5 L401.8,397.1 L415.7,392.2 L429.6,386.9 L443.2,381.4 L456.8,375.5 L470.1,369.2 L483.0,361.9 L495.4,353.5 L507.3,344.0 L518.6,333.4 L529.3,321.4 L539.1,307.1 L539.1,307.1 M324.4,405.2 L343.6,411.8 L359.2,410.4 L374.1,407.5 L388.6,403.9 L402.9,399.6 L416.9,394.8 L430.8,389.7 L444.5,384.2 L458.1,378.3 L471.4,372.0 L484.2,364.6 L496.5,355.9 L508.2,346.1 L519.3,334.9 L529.7,322.3 L539.1,307.1 L539.1,307.1 M324.4,405.2 L344.2,413.0 L360.0,412.1 L375.1,409.6 L389.7,406.2 L404.0,402.1 L418.1,397.5 L432.1,392.4 L445.8,387.0 L459.3,381.1 L472.7,374.8 L485.4,367.2 L497.6,358.4 L509.1,348.1 L520.0,336.5 L530.2,323.2 L539.1,307.1 L539.1,307.1 M324.4,405.2 L344.8,414.3 L360.8,413.9 L376.0,411.7 L390.8,408.5 L405.2,404.6 L419.4,400.1 L433.3,395.1 L447.1,389.8 L460.6,384.0 L473.9,377.6 L486.6,369.9 L498.7,360.8 L510.1,350.2 L520.7,338.0 L530.6,324.1 L539.1,307.1 L539.1,307.1 M324.4,405.2 L345.3,415.6 L361.6,415.6 L377.0,413.8 L391.8,410.8 L406.3,407.1 L420.6,402.7 L434.6,397.9 L448.3,392.6 L461.9,386.8 L475.2,380.4 L487.9,372.6 L499.8,363.2 L511.0,352.3 L521.4,339.6 L531.0,325.0 L539.1,307.1 L539.1,307.1" clip-path="url(#c3)" fill="none" stroke="#4aa686" stroke-width="0.7" stroke-opacity="0.8"/>
<path d="M324.4,405.2 L324.2,393.0 L326.9,387.0 L330.0,381.9 L333.3,377.4 L336.8,373.2 L340.5,369.4 L344.2,365.7 L348.0,362.2 L351.8,358.8 L355.8,355.6 L359.7,352.4 L363.8,349.4 L367.8,346.4 L371.9,343.6 L376.0,340.8 L380.2,338.0 L384.4,335.4 L388.6,332.8 L392.9,330.2 L397.1,327.8 L401.4,325.3 L405.8,323.0 L410.1,320.6 L414.5,318.4 L418.9,316.2 L423.3,314.0 L427.7,311.9 L432.2,309.8 L436.7,307.8 L441.2,306.0 L445.9,304.4 L450.6,302.9 L455.5,301.6 L460.4,300.5 L465.4,299.6 L470.4,298.9 L475.6,298.3 L480.8,297.9 L486.1,297.8 L491.5,297.8 L497.1,298.0 L502.7,298.4 L508.4,299.1 L514.2,300.0 L520.1,301.1 L526.2,302.6 L532.4,304.5 L539.1,307.1 L539.1,307.1 L536.7,313.9 L534.1,319.9 L531.2,325.4 L528.2,330.6 L525.0,335.6 L521.8,340.4 L518.5,344.9 L515.0,349.2 L511.5,353.3 L507.9,357.2 L504.2,360.9 L500.4,364.4 L496.5,367.8 L492.5,370.9 L488.5,373.9 L484.4,376.7 L480.2,379.4 L475.9,381.8 L471.5,384.1 L467.1,386.2 L462.6,388.2 L458.1,390.2 L453.5,392.1 L449.0,394.0 L444.4,395.8 L439.8,397.5 L435.2,399.2 L430.5,400.9 L425.9,402.5 L421.2,404.1 L416.4,405.5 L411.7,407.0 L406.9,408.3 L402.1,409.6 L397.2,410.8 L392.3,412.0 L387.4,413.0 L382.4,414.0 L377.4,414.8 L372.3,415.5 L367.2,416.1 L362.0,416.5 L356.7,416.7 L351.2,416.6 L345.6,416.2 L339.8,415.2 L333.5,413.2 L324.4,405.2Z" clip-path="url(#c3)" fill="none" stroke="#0c3a28" stroke-width="15" stroke-opacity="0.35" stroke-linejoin="round"/>
<path d="M324.4,405.2 L324.2,393.0 L326.9,387.0 L330.0,381.9 L333.3,377.4 L336.8,373.2 L340.5,369.4 L344.2,365.7 L348.0,362.2 L351.8,358.8 L355.8,355.6 L359.7,352.4 L363.8,349.4 L367.8,346.4 L371.9,343.6 L376.0,340.8 L380.2,338.0 L384.4,335.4 L388.6,332.8 L392.9,330.2 L397.1,327.8 L401.4,325.3 L405.8,323.0 L410.1,320.6 L414.5,318.4 L418.9,316.2 L423.3,314.0 L427.7,311.9 L432.2,309.8 L436.7,307.8 L441.2,306.0 L445.9,304.4 L450.6,302.9 L455.5,301.6 L460.4,300.5 L465.4,299.6 L470.4,298.9 L475.6,298.3 L480.8,297.9 L486.1,297.8 L491.5,297.8 L497.1,298.0 L502.7,298.4 L508.4,299.1 L514.2,300.0 L520.1,301.1 L526.2,302.6 L532.4,304.5 L539.1,307.1 L539.1,307.1 L536.7,313.9 L534.1,319.9 L531.2,325.4 L528.2,330.6 L525.0,335.6 L521.8,340.4 L518.5,344.9 L515.0,349.2 L511.5,353.3 L507.9,357.2 L504.2,360.9 L500.4,364.4 L496.5,367.8 L492.5,370.9 L488.5,373.9 L484.4,376.7 L480.2,379.4 L475.9,381.8 L471.5,384.1 L467.1,386.2 L462.6,388.2 L458.1,390.2 L453.5,392.1 L449.0,394.0 L444.4,395.8 L439.8,397.5 L435.2,399.2 L430.5,400.9 L425.9,402.5 L421.2,404.1 L416.4,405.5 L411.7,407.0 L406.9,408.3 L402.1,409.6 L397.2,410.8 L392.3,412.0 L387.4,413.0 L382.4,414.0 L377.4,414.8 L372.3,415.5 L367.2,416.1 L362.0,416.5 L356.7,416.7 L351.2,416.6 L345.6,416.2 L339.8,415.2 L333.5,413.2 L324.4,405.2Z" fill="none" stroke="#257c5b" stroke-width="8" stroke-linejoin="round"/>
<path d="M324.4,405.2 L324.2,393.0 L326.9,387.0 L330.0,381.9 L333.3,377.4 L336.8,373.2 L340.5,369.4 L344.2,365.7 L348.0,362.2 L351.8,358.8 L355.8,355.6 L359.7,352.4 L363.8,349.4 L367.8,346.4 L371.9,343.6 L376.0,340.8 L380.2,338.0 L384.4,335.4 L388.6,332.8 L392.9,330.2 L397.1,327.8 L401.4,325.3 L405.8,323.0 L410.1,320.6 L414.5,318.4 L418.9,316.2 L423.3,314.0 L427.7,311.9 L432.2,309.8 L436.7,307.8 L441.2,306.0 L445.9,304.4 L450.6,302.9 L455.5,301.6 L460.4,300.5 L465.4,299.6 L470.4,298.9 L475.6,298.3 L480.8,297.9 L486.1,297.8 L491.5,297.8 L497.1,298.0 L502.7,298.4 L508.4,299.1 L514.2,300.0 L520.1,301.1 L526.2,302.6 L532.4,304.5 L539.1,307.1 L539.1,307.1 L536.7,313.9 L534.1,319.9 L531.2,325.4 L528.2,330.6 L525.0,335.6 L521.8,340.4 L518.5,344.9 L515.0,349.2 L511.5,353.3 L507.9,357.2 L504.2,360.9 L500.4,364.4 L496.5,367.8 L492.5,370.9 L488.5,373.9 L484.4,376.7 L480.2,379.4 L475.9,381.8 L471.5,384.1 L467.1,386.2 L462.6,388.2 L458.1,390.2 L453.5,392.1 L449.0,394.0 L444.4,395.8 L439.8,397.5 L435.2,399.2 L430.5,400.9 L425.9,402.5 L421.2,404.1 L416.4,405.5 L411.7,407.0 L406.9,408.3 L402.1,409.6 L397.2,410.8 L392.3,412.0 L387.4,413.0 L382.4,414.0 L377.4,414.8 L372.3,415.5 L367.2,416.1 L362.0,416.5 L356.7,416.7 L351.2,416.6 L345.6,416.2 L339.8,415.2 L333.5,413.2 L324.4,405.2Z" fill="none" stroke="#42a07c" stroke-width="2" stroke-linejoin="round" opacity="0.55"/>
<path d="M327.6,427.5 L334.0,417.2 L339.5,413.5 L344.9,410.9 L350.1,408.9 L355.3,407.3 L360.5,406.0 L365.6,405.0 L370.7,404.1 L375.8,403.3 L380.8,402.7 L385.9,402.2 L390.9,401.8 L395.9,401.6 L400.9,401.3 L405.9,401.2 L410.9,401.2 L415.8,401.2 L420.8,401.3 L425.7,401.5 L430.6,401.7 L435.6,402.0 L440.5,402.3 L445.4,402.7 L450.3,403.2 L455.2,403.7 L460.1,404.2 L465.0,404.8 L469.8,405.5 L474.7,406.3 L479.5,407.2 L484.3,408.4 L489.1,409.7 L493.8,411.3 L498.6,413.0 L503.3,414.9 L507.9,417.0 L512.6,419.3 L517.2,421.8 L521.7,424.6 L526.3,427.5 L530.8,430.7 L535.3,434.1 L539.7,437.7 L544.1,441.6 L548.5,445.8 L552.8,450.3 L557.1,455.2 L561.2,461.1 L561.2,461.1 L555.6,465.5 L550.1,469.1 L544.7,472.2 L539.3,475.0 L534.0,477.5 L528.7,479.7 L523.5,481.7 L518.2,483.4 L513.0,485.0 L507.9,486.3 L502.8,487.4 L497.7,488.4 L492.6,489.1 L487.6,489.6 L482.5,489.9 L477.6,490.0 L472.6,490.0 L467.7,489.7 L462.8,489.3 L457.9,488.7 L453.0,487.9 L448.2,487.1 L443.3,486.3 L438.5,485.4 L433.6,484.5 L428.8,483.5 L424.0,482.4 L419.2,481.3 L414.4,480.1 L409.6,478.9 L404.8,477.6 L400.1,476.2 L395.3,474.7 L390.6,473.2 L385.8,471.6 L381.1,469.9 L376.4,468.2 L371.7,466.3 L367.0,464.3 L362.4,462.1 L357.7,459.8 L353.1,457.3 L348.5,454.6 L344.0,451.7 L339.5,448.3 L335.1,444.3 L330.9,439.2 L327.6,427.5Z" fill="none" stroke="#0f3f2c" stroke-width="10.5" stroke-linejoin="round"/>
<path d="M327.6,427.5 L334.0,417.2 L339.5,413.5 L344.9,410.9 L350.1,408.9 L355.3,407.3 L360.5,406.0 L365.6,405.0 L370.7,404.1 L375.8,403.3 L380.8,402.7 L385.9,402.2 L390.9,401.8 L395.9,401.6 L400.9,401.3 L405.9,401.2 L410.9,401.2 L415.8,401.2 L420.8,401.3 L425.7,401.5 L430.6,401.7 L435.6,402.0 L440.5,402.3 L445.4,402.7 L450.3,403.2 L455.2,403.7 L460.1,404.2 L465.0,404.8 L469.8,405.5 L474.7,406.3 L479.5,407.2 L484.3,408.4 L489.1,409.7 L493.8,411.3 L498.6,413.0 L503.3,414.9 L507.9,417.0 L512.6,419.3 L517.2,421.8 L521.7,424.6 L526.3,427.5 L530.8,430.7 L535.3,434.1 L539.7,437.7 L544.1,441.6 L548.5,445.8 L552.8,450.3 L557.1,455.2 L561.2,461.1 L561.2,461.1 L555.6,465.5 L550.1,469.1 L544.7,472.2 L539.3,475.0 L534.0,477.5 L528.7,479.7 L523.5,481.7 L518.2,483.4 L513.0,485.0 L507.9,486.3 L502.8,487.4 L497.7,488.4 L492.6,489.1 L487.6,489.6 L482.5,489.9 L477.6,490.0 L472.6,490.0 L467.7,489.7 L462.8,489.3 L457.9,488.7 L453.0,487.9 L448.2,487.1 L443.3,486.3 L438.5,485.4 L433.6,484.5 L428.8,483.5 L424.0,482.4 L419.2,481.3 L414.4,480.1 L409.6,478.9 L404.8,477.6 L400.1,476.2 L395.3,474.7 L390.6,473.2 L385.8,471.6 L381.1,469.9 L376.4,468.2 L371.7,466.3 L367.0,464.3 L362.4,462.1 L357.7,459.8 L353.1,457.3 L348.5,454.6 L344.0,451.7 L339.5,448.3 L335.1,444.3 L330.9,439.2 L327.6,427.5Z" fill="#216c4f"/>
<path d="M327.6,427.5 L344.8,411.6 L360.3,407.0 L375.6,404.4 L390.7,403.1 L405.7,402.6 L420.6,402.7 L435.4,403.5 L450.1,404.7 L464.7,406.4 L479.3,408.8 L493.6,412.7 L507.7,418.3 L521.6,425.7 L535.1,434.9 L548.4,446.3 L561.2,461.1 L561.2,461.1 M327.6,427.5 L344.6,413.0 L360.1,408.9 L375.3,406.7 L390.3,405.6 L405.3,405.3 L420.1,405.6 L434.9,406.4 L449.6,407.7 L464.3,409.5 L478.9,411.8 L493.2,415.6 L507.4,421.0 L521.3,427.9 L534.9,436.6 L548.3,447.3 L561.2,461.1 L561.2,461.1 M327.6,427.5 L344.4,414.4 L359.8,410.8 L375.0,409.0 L390.0,408.1 L404.9,408.0 L419.7,408.5 L434.5,409.4 L449.2,410.8 L463.9,412.5 L478.4,414.9 L492.8,418.5 L507.0,423.6 L520.9,430.2 L534.7,438.3 L548.1,448.2 L561.2,461.1 L561.2,461.1 M327.6,427.5 L344.2,415.8 L359.5,412.7 L374.6,411.2 L389.6,410.7 L404.5,410.8 L419.3,411.4 L434.1,412.4 L448.8,413.8 L463.4,415.6 L478.0,417.9 L492.4,421.4 L506.6,426.3 L520.6,432.4 L534.4,440.0 L548.0,449.2 L561.2,461.1 L561.2,461.1 M327.6,427.5 L344.0,417.1 L359.3,414.6 L374.3,413.5 L389.3,413.2 L404.1,413.5 L418.9,414.2 L433.6,415.4 L448.3,416.9 L463.0,418.7 L477.5,421.0 L492.0,424.4 L506.2,428.9 L520.3,434.6 L534.2,441.7 L547.9,450.2 L561.2,461.1 L561.2,461.1 M327.6,427.5 L343.8,418.5 L359.0,416.5 L374.0,415.7 L388.9,415.7 L403.7,416.2 L418.5,417.1 L433.2,418.4 L447.9,419.9 L462.5,421.8 L477.1,424.0 L491.5,427.3 L505.8,431.5 L520.0,436.9 L533.9,443.4 L547.7,451.2 L561.2,461.1 L561.2,461.1 M327.6,427.5 L343.6,419.9 L358.7,418.4 L373.7,418.0 L388.5,418.2 L403.3,418.9 L418.1,420.0 L432.8,421.3 L447.5,423.0 L462.1,424.8 L476.7,427.1 L491.1,430.2 L505.5,434.2 L519.6,439.1 L533.7,445.1 L547.6,452.1 L561.2,461.1 L561.2,461.1 M327.6,427.5 L343.4,421.3 L358.4,420.3 L373.3,420.2 L388.2,420.8 L402.9,421.7 L417.7,422.9 L432.4,424.3 L447.0,426.0 L461.6,427.9 L476.2,430.2 L490.7,433.1 L505.1,436.8 L519.3,441.4 L533.4,446.7 L547.4,453.1 L561.2,461.1 L561.2,461.1 M327.6,427.5 L343.2,422.7 L358.2,422.2 L373.0,422.5 L387.8,423.3 L402.5,424.4 L417.3,425.7 L431.9,427.3 L446.6,429.1 L461.2,431.0 L475.8,433.2 L490.3,436.0 L504.7,439.5 L519.0,443.6 L533.2,448.4 L547.3,454.1 L561.2,461.1 L561.2,461.1 M327.6,427.5 L343.0,424.1 L357.9,424.1 L372.7,424.8 L387.4,425.8 L402.2,427.1 L416.8,428.6 L431.5,430.3 L446.1,432.1 L460.8,434.1 L475.3,436.3 L489.9,438.9 L504.3,442.1 L518.7,445.8 L533.0,450.1 L547.2,455.1 L561.2,461.1 L561.2,461.1 M327.6,427.5 L342.8,425.4 L357.6,426.0 L372.4,427.0 L387.1,428.3 L401.8,429.8 L416.4,431.5 L431.1,433.3 L445.7,435.1 L460.3,437.2 L474.9,439.3 L489.4,441.8 L503.9,444.8 L518.4,448.1 L532.7,451.8 L547.0,456.0 L561.2,461.1 L561.2,461.1 M327.6,427.5 L342.6,426.8 L357.3,427.9 L372.0,429.3 L386.7,430.8 L401.4,432.5 L416.0,434.3 L430.6,436.2 L445.3,438.2 L459.9,440.2 L474.5,442.4 L489.0,444.8 L503.6,447.4 L518.0,450.3 L532.5,453.5 L546.9,457.0 L561.2,461.1 L561.2,461.1 M327.6,427.5 L342.4,428.2 L357.1,429.8 L371.7,431.5 L386.4,433.4 L401.0,435.3 L415.6,437.2 L430.2,439.2 L444.8,441.2 L459.4,443.3 L474.0,445.4 L488.6,447.7 L503.2,450.0 L517.7,452.5 L532.2,455.2 L546.7,458.0 L561.2,461.1 L561.2,461.1 M327.6,427.5 L342.2,429.6 L356.8,431.7 L371.4,433.8 L386.0,435.9 L400.6,438.0 L415.2,440.1 L429.8,442.2 L444.4,444.3 L459.0,446.4 L473.6,448.5 L488.2,450.6 L502.8,452.7 L517.4,454.8 L532.0,456.9 L546.6,459.0 L561.2,461.1 L561.2,461.1 M327.6,427.5 L342.0,431.0 L356.5,433.6 L371.1,436.0 L385.6,438.4 L400.2,440.7 L414.8,443.0 L429.4,445.2 L444.0,447.3 L458.5,449.5 L473.2,451.5 L487.8,453.5 L502.4,455.3 L517.1,457.0 L531.7,458.6 L546.5,460.0 L561.2,461.1 L561.2,461.1 M327.6,427.5 L341.8,432.4 L356.2,435.5 L370.7,438.3 L385.3,440.9 L399.8,443.4 L414.4,445.8 L428.9,448.1 L443.5,450.4 L458.1,452.5 L472.7,454.6 L487.4,456.4 L502.0,458.0 L516.7,459.3 L531.5,460.3 L546.3,460.9 L561.2,461.1 L561.2,461.1 M327.6,427.5 L341.6,433.7 L356.0,437.4 L370.4,440.6 L384.9,443.5 L399.4,446.2 L414.0,448.7 L428.5,451.1 L443.1,453.4 L457.7,455.6 L472.3,457.7 L486.9,459.3 L501.7,460.6 L516.4,461.5 L531.3,461.9 L546.2,461.9 L561.2,461.1 L561.2,461.1 M327.6,427.5 L341.4,435.1 L355.7,439.3 L370.1,442.8 L384.5,446.0 L399.0,448.9 L413.5,451.6 L428.1,454.1 L442.6,456.5 L457.2,458.7 L471.8,460.7 L486.5,462.2 L501.3,463.3 L516.1,463.7 L531.0,463.6 L546.0,462.9 L561.2,461.1 L561.2,461.1 M327.6,427.5 L341.2,436.5 L355.4,441.2 L369.8,445.1 L384.2,448.5 L398.6,451.6 L413.1,454.4 L427.7,457.1 L442.2,459.5 L456.8,461.8 L471.4,463.8 L486.1,465.2 L500.9,465.9 L515.8,466.0 L530.8,465.3 L545.9,463.9 L561.2,461.1 L561.2,461.1 M327.6,427.5 L341.0,437.9 L355.2,443.1 L369.4,447.3 L383.8,451.0 L398.2,454.3 L412.7,457.3 L427.2,460.1 L441.8,462.6 L456.3,464.8 L471.0,466.8 L485.7,468.1 L500.5,468.5 L515.5,468.2 L530.5,467.0 L545.7,464.8 L561.2,461.1 L561.2,461.1 M327.6,427.5 L340.8,439.3 L354.9,445.0 L369.1,449.6 L383.5,453.5 L397.9,457.0 L412.3,460.2 L426.8,463.0 L441.3,465.6 L455.9,467.9 L470.5,469.9 L485.3,471.0 L500.1,471.2 L515.1,470.4 L530.3,468.7 L545.6,465.8 L561.2,461.1 L561.2,461.1 M327.6,427.5 L340.6,440.7 L354.6,446.9 L368.8,451.8 L383.1,456.1 L397.5,459.8 L411.9,463.1 L426.4,466.0 L440.9,468.7 L455.5,471.0 L470.1,472.9 L484.8,473.9 L499.8,473.8 L514.8,472.7 L530.0,470.4 L545.5,466.8 L561.2,461.1 L561.2,461.1 M327.6,427.5 L340.4,442.0 L354.3,448.8 L368.5,454.1 L382.7,458.6 L397.1,462.5 L411.5,465.9 L425.9,469.0 L440.5,471.7 L455.0,474.1 L469.6,476.0 L484.4,476.8 L499.4,476.5 L514.5,474.9 L529.8,472.1 L545.3,467.8 L561.2,461.1 L561.2,461.1 M327.6,427.5 L340.2,443.4 L354.1,450.7 L368.1,456.4 L382.4,461.1 L396.7,465.2 L411.1,468.8 L425.5,472.0 L440.0,474.7 L454.6,477.2 L469.2,479.0 L484.0,479.7 L499.0,479.1 L514.2,477.2 L529.6,473.8 L545.2,468.8 L561.2,461.1 L561.2,461.1 M327.6,427.5 L340.0,444.8 L353.8,452.6 L367.8,458.6 L382.0,463.6 L396.3,467.9 L410.6,471.7 L425.1,474.9 L439.6,477.8 L454.1,480.2 L468.8,482.1 L483.6,482.6 L498.6,481.7 L513.9,479.4 L529.3,475.5 L545.0,469.7 L561.2,461.1 L561.2,461.1 M327.6,427.5 L339.8,446.2 L353.5,454.5 L367.5,460.9 L381.6,466.2 L395.9,470.7 L410.2,474.6 L424.7,477.9 L439.1,480.8 L453.7,483.3 L468.3,485.1 L483.2,485.5 L498.2,484.4 L513.5,481.6 L529.1,477.2 L544.9,470.7 L561.2,461.1 L561.2,461.1 M327.6,427.5 L339.6,447.6 L353.2,456.4 L367.2,463.1 L381.3,468.7 L395.5,473.4 L409.8,477.4 L424.2,480.9 L438.7,483.9 L453.2,486.4 L467.9,488.2 L482.7,488.5 L497.9,487.0 L513.2,483.9 L528.8,478.8 L544.8,471.7 L561.2,461.1 L561.2,461.1" clip-path="url(#c4)" fill="none" stroke="#4aa686" stroke-width="0.7" stroke-opacity="0.8"/>
<path d="M327.6,427.5 L334.0,417.2 L339.5,413.5 L344.9,410.9 L350.1,408.9 L355.3,407.3 L360.5,406.0 L365.6,405.0 L370.7,404.1 L375.8,403.3 L380.8,402.7 L385.9,402.2 L390.9,401.8 L395.9,401.6 L400.9,401.3 L405.9,401.2 L410.9,401.2 L415.8,401.2 L420.8,401.3 L425.7,401.5 L430.6,401.7 L435.6,402.0 L440.5,402.3 L445.4,402.7 L450.3,403.2 L455.2,403.7 L460.1,404.2 L465.0,404.8 L469.8,405.5 L474.7,406.3 L479.5,407.2 L484.3,408.4 L489.1,409.7 L493.8,411.3 L498.6,413.0 L503.3,414.9 L507.9,417.0 L512.6,419.3 L517.2,421.8 L521.7,424.6 L526.3,427.5 L530.8,430.7 L535.3,434.1 L539.7,437.7 L544.1,441.6 L548.5,445.8 L552.8,450.3 L557.1,455.2 L561.2,461.1 L561.2,461.1 L555.6,465.5 L550.1,469.1 L544.7,472.2 L539.3,475.0 L534.0,477.5 L528.7,479.7 L523.5,481.7 L518.2,483.4 L513.0,485.0 L507.9,486.3 L502.8,487.4 L497.7,488.4 L492.6,489.1 L487.6,489.6 L482.5,489.9 L477.6,490.0 L472.6,490.0 L467.7,489.7 L462.8,489.3 L457.9,488.7 L453.0,487.9 L448.2,487.1 L443.3,486.3 L438.5,485.4 L433.6,484.5 L428.8,483.5 L424.0,482.4 L419.2,481.3 L414.4,480.1 L409.6,478.9 L404.8,477.6 L400.1,476.2 L395.3,474.7 L390.6,473.2 L385.8,471.6 L381.1,469.9 L376.4,468.2 L371.7,466.3 L367.0,464.3 L362.4,462.1 L357.7,459.8 L353.1,457.3 L348.5,454.6 L344.0,451.7 L339.5,448.3 L335.1,444.3 L330.9,439.2 L327.6,427.5Z" clip-path="url(#c4)" fill="none" stroke="#0c3a28" stroke-width="15" stroke-opacity="0.35" stroke-linejoin="round"/>
<path d="M327.6,427.5 L334.0,417.2 L339.5,413.5 L344.9,410.9 L350.1,408.9 L355.3,407.3 L360.5,406.0 L365.6,405.0 L370.7,404.1 L375.8,403.3 L380.8,402.7 L385.9,402.2 L390.9,401.8 L395.9,401.6 L400.9,401.3 L405.9,401.2 L410.9,401.2 L415.8,401.2 L420.8,401.3 L425.7,401.5 L430.6,401.7 L435.6,402.0 L440.5,402.3 L445.4,402.7 L450.3,403.2 L455.2,403.7 L460.1,404.2 L465.0,404.8 L469.8,405.5 L474.7,406.3 L479.5,407.2 L484.3,408.4 L489.1,409.7 L493.8,411.3 L498.6,413.0 L503.3,414.9 L507.9,417.0 L512.6,419.3 L517.2,421.8 L521.7,424.6 L526.3,427.5 L530.8,430.7 L535.3,434.1 L539.7,437.7 L544.1,441.6 L548.5,445.8 L552.8,450.3 L557.1,455.2 L561.2,461.1 L561.2,461.1 L555.6,465.5 L550.1,469.1 L544.7,472.2 L539.3,475.0 L534.0,477.5 L528.7,479.7 L523.5,481.7 L518.2,483.4 L513.0,485.0 L507.9,486.3 L502.8,487.4 L497.7,488.4 L492.6,489.1 L487.6,489.6 L482.5,489.9 L477.6,490.0 L472.6,490.0 L467.7,489.7 L462.8,489.3 L457.9,488.7 L453.0,487.9 L448.2,487.1 L443.3,486.3 L438.5,485.4 L433.6,484.5 L428.8,483.5 L424.0,482.4 L419.2,481.3 L414.4,480.1 L409.6,478.9 L404.8,477.6 L400.1,476.2 L395.3,474.7 L390.6,473.2 L385.8,471.6 L381.1,469.9 L376.4,468.2 L371.7,466.3 L367.0,464.3 L362.4,462.1 L357.7,459.8 L353.1,457.3 L348.5,454.6 L344.0,451.7 L339.5,448.3 L335.1,444.3 L330.9,439.2 L327.6,427.5Z" fill="none" stroke="#257c5b" stroke-width="8" stroke-linejoin="round"/>
<path d="M327.6,427.5 L334.0,417.2 L339.5,413.5 L344.9,410.9 L350.1,408.9 L355.3,407.3 L360.5,406.0 L365.6,405.0 L370.7,404.1 L375.8,403.3 L380.8,402.7 L385.9,402.2 L390.9,401.8 L395.9,401.6 L400.9,401.3 L405.9,401.2 L410.9,401.2 L415.8,401.2 L420.8,401.3 L425.7,401.5 L430.6,401.7 L435.6,402.0 L440.5,402.3 L445.4,402.7 L450.3,403.2 L455.2,403.7 L460.1,404.2 L465.0,404.8 L469.8,405.5 L474.7,406.3 L479.5,407.2 L484.3,408.4 L489.1,409.7 L493.8,411.3 L498.6,413.0 L503.3,414.9 L507.9,417.0 L512.6,419.3 L517.2,421.8 L521.7,424.6 L526.3,427.5 L530.8,430.7 L535.3,434.1 L539.7,437.7 L544.1,441.6 L548.5,445.8 L552.8,450.3 L557.1,455.2 L561.2,461.1 L561.2,461.1 L555.6,465.5 L550.1,469.1 L544.7,472.2 L539.3,475.0 L534.0,477.5 L528.7,479.7 L523.5,481.7 L518.2,483.4 L513.0,485.0 L507.9,486.3 L502.8,487.4 L497.7,488.4 L492.6,489.1 L487.6,489.6 L482.5,489.9 L477.6,490.0 L472.6,490.0 L467.7,489.7 L462.8,489.3 L457.9,488.7 L453.0,487.9 L448.2,487.1 L443.3,486.3 L438.5,485.4 L433.6,484.5 L428.8,483.5 L424.0,482.4 L419.2,481.3 L414.4,480.1 L409.6,478.9 L404.8,477.6 L400.1,476.2 L395.3,474.7 L390.6,473.2 L385.8,471.6 L381.1,469.9 L376.4,468.2 L371.7,466.3 L367.0,464.3 L362.4,462.1 L357.7,459.8 L353.1,457.3 L348.5,454.6 L344.0,451.7 L339.5,448.3 L335.1,444.3 L330.9,439.2 L327.6,427.5Z" fill="none" stroke="#42a07c" stroke-width="2" stroke-linejoin="round" opacity="0.55"/>
<path d="M318.2,448.0 L329.2,442.8 L335.8,442.7 L341.7,443.4 L347.2,444.6 L352.5,446.0 L357.5,447.7 L362.4,449.6 L367.2,451.6 L371.8,453.7 L376.4,455.9 L380.9,458.2 L385.3,460.6 L389.7,463.1 L394.0,465.6 L398.3,468.2 L402.5,470.9 L406.7,473.6 L410.8,476.3 L414.8,479.2 L418.9,482.0 L422.9,484.9 L426.8,487.9 L430.7,490.8 L434.6,493.9 L438.5,496.9 L442.3,500.1 L446.0,503.2 L449.8,506.4 L453.4,509.7 L457.0,513.1 L460.4,516.7 L463.7,520.4 L466.9,524.2 L469.9,528.2 L472.8,532.4 L475.6,536.7 L478.2,541.1 L480.8,545.7 L483.1,550.5 L485.4,555.4 L487.4,560.5 L489.4,565.8 L491.2,571.3 L492.8,576.9 L494.2,582.8 L495.4,588.9 L496.3,595.4 L496.6,602.5 L496.6,602.5 L489.5,603.3 L482.9,603.3 L476.7,603.0 L470.7,602.4 L464.9,601.6 L459.2,600.6 L453.7,599.5 L448.4,598.1 L443.2,596.6 L438.1,595.0 L433.2,593.1 L428.4,591.1 L423.7,589.0 L419.2,586.7 L414.8,584.3 L410.6,581.7 L406.4,579.0 L402.4,576.1 L398.5,573.1 L394.8,569.9 L391.1,566.6 L387.4,563.4 L383.8,560.0 L380.2,556.7 L376.7,553.3 L373.1,549.8 L369.7,546.3 L366.2,542.8 L362.8,539.2 L359.5,535.6 L356.1,531.9 L352.9,528.1 L349.6,524.4 L346.5,520.5 L343.4,516.6 L340.3,512.6 L337.3,508.6 L334.4,504.5 L331.5,500.2 L328.7,495.9 L326.1,491.5 L323.6,486.9 L321.2,482.2 L319.0,477.2 L317.0,471.9 L315.5,466.2 L314.7,459.6 L318.2,448.0Z" fill="none" stroke="#0f3f2c" stroke-width="10.5" stroke-linejoin="round"/>
<path d="M318.2,448.0 L329.2,442.8 L335.8,442.7 L341.7,443.4 L347.2,444.6 L352.5,446.0 L357.5,447.7 L362.4,449.6 L367.2,451.6 L371.8,453.7 L376.4,455.9 L380.9,458.2 L385.3,460.6 L389.7,463.1 L394.0,465.6 L398.3,468.2 L402.5,470.9 L406.7,473.6 L410.8,476.3 L414.8,479.2 L418.9,482.0 L422.9,484.9 L426.8,487.9 L430.7,490.8 L434.6,493.9 L438.5,496.9 L442.3,500.1 L446.0,503.2 L449.8,506.4 L453.4,509.7 L457.0,513.1 L460.4,516.7 L463.7,520.4 L466.9,524.2 L469.9,528.2 L472.8,532.4 L475.6,536.7 L478.2,541.1 L480.8,545.7 L483.1,550.5 L485.4,555.4 L487.4,560.5 L489.4,565.8 L491.2,571.3 L492.8,576.9 L494.2,582.8 L495.4,588.9 L496.3,595.4 L496.6,602.5 L496.6,602.5 L489.5,603.3 L482.9,603.3 L476.7,603.0 L470.7,602.4 L464.9,601.6 L459.2,600.6 L453.7,599.5 L448.4,598.1 L443.2,596.6 L438.1,595.0 L433.2,593.1 L428.4,591.1 L423.7,589.0 L419.2,586.7 L414.8,584.3 L410.6,581.7 L406.4,579.0 L402.4,576.1 L398.5,573.1 L394.8,569.9 L391.1,566.6 L387.4,563.4 L383.8,560.0 L380.2,556.7 L376.7,553.3 L373.1,549.8 L369.7,546.3 L366.2,542.8 L362.8,539.2 L359.5,535.6 L356.1,531.9 L352.9,528.1 L349.6,524.4 L346.5,520.5 L343.4,516.6 L340.3,512.6 L337.3,508.6 L334.4,504.5 L331.5,500.2 L328.7,495.9 L326.1,491.5 L323.6,486.9 L321.2,482.2 L319.0,477.2 L317.0,471.9 L315.5,466.2 L314.7,459.6 L318.2,448.0Z" fill="#216c4f"/>
<path d="M318.2,448.0 L341.3,443.9 L356.9,448.4 L371.1,454.6 L384.5,461.6 L397.4,469.3 L409.8,477.4 L421.9,486.0 L433.6,495.0 L445.0,504.4 L456.0,514.3 L465.9,525.3 L474.7,537.7 L482.4,551.4 L488.8,566.5 L493.8,583.2 L496.6,602.5 L496.6,602.5 M318.2,448.0 L340.4,445.0 L355.6,449.9 L369.6,456.3 L382.8,463.5 L395.6,471.3 L407.9,479.6 L419.9,488.3 L431.6,497.4 L443.0,506.7 L454.0,516.6 L464.0,527.6 L473.0,539.7 L480.9,553.1 L487.7,567.7 L493.2,583.9 L496.6,602.5 L496.6,602.5 M318.2,448.0 L339.4,446.0 L354.4,451.4 L368.1,458.0 L381.2,465.4 L393.8,473.4 L406.0,481.8 L417.9,490.6 L429.6,499.7 L440.9,509.1 L451.9,518.9 L462.1,529.8 L471.2,541.7 L479.4,554.8 L486.6,569.0 L492.6,584.7 L496.6,602.5 L496.6,602.5 M318.2,448.0 L338.5,447.1 L353.1,452.8 L366.6,459.7 L379.5,467.4 L392.0,475.5 L404.1,484.0 L416.0,492.9 L427.6,502.0 L438.9,511.4 L449.9,521.3 L460.1,532.0 L469.5,543.7 L477.9,556.5 L485.5,570.3 L491.9,585.4 L496.6,602.5 L496.6,602.5 M318.2,448.0 L337.6,448.1 L351.8,454.3 L365.1,461.5 L377.8,469.3 L390.2,477.6 L402.2,486.2 L414.0,495.1 L425.5,504.3 L436.9,513.8 L447.9,523.6 L458.2,534.2 L467.7,545.7 L476.5,558.2 L484.4,571.6 L491.3,586.2 L496.6,602.5 L496.6,602.5 M318.2,448.0 L336.7,449.2 L350.6,455.7 L363.6,463.2 L376.2,471.2 L388.4,479.7 L400.3,488.4 L412.0,497.4 L423.5,506.7 L434.8,516.1 L445.9,525.9 L456.3,536.4 L466.0,547.8 L475.0,559.9 L483.2,572.9 L490.6,586.9 L496.6,602.5 L496.6,602.5 M318.2,448.0 L335.8,450.3 L349.3,457.2 L362.1,464.9 L374.5,473.2 L386.6,481.7 L398.4,490.6 L410.1,499.7 L421.5,509.0 L432.8,518.5 L443.9,528.3 L454.3,538.7 L464.2,549.8 L473.5,561.6 L482.1,574.2 L490.0,587.7 L496.6,602.5 L496.6,602.5 M318.2,448.0 L334.9,451.3 L348.1,458.6 L360.6,466.6 L372.8,475.1 L384.8,483.8 L396.5,492.8 L408.1,502.0 L419.5,511.3 L430.8,520.8 L441.8,530.6 L452.4,540.9 L462.5,551.8 L472.0,563.3 L481.0,575.5 L489.3,588.4 L496.6,602.5 L496.6,602.5 M318.2,448.0 L334.0,452.4 L346.8,460.1 L359.1,468.4 L371.2,477.0 L383.0,485.9 L394.6,495.0 L406.1,504.2 L417.5,513.6 L428.7,523.2 L439.8,532.9 L450.5,543.1 L460.7,553.8 L470.5,565.0 L479.9,576.8 L488.7,589.2 L496.6,602.5 L496.6,602.5 M318.2,448.0 L333.0,453.4 L345.6,461.5 L357.6,470.1 L369.5,478.9 L381.2,488.0 L392.7,497.2 L404.1,506.5 L415.5,516.0 L426.7,525.5 L437.8,535.3 L448.6,545.3 L459.0,555.8 L469.1,566.7 L478.8,578.1 L488.0,589.9 L496.6,602.5 L496.6,602.5 M318.2,448.0 L332.1,454.5 L344.3,463.0 L356.2,471.8 L367.8,480.9 L379.4,490.1 L390.8,499.4 L402.2,508.8 L413.5,518.3 L424.7,527.9 L435.8,537.6 L446.6,547.6 L457.2,557.9 L467.6,568.4 L477.6,579.4 L487.4,590.6 L496.6,602.5 L496.6,602.5 M318.2,448.0 L331.2,455.5 L343.0,464.4 L354.7,473.5 L366.2,482.8 L377.6,492.1 L388.9,501.6 L400.2,511.1 L411.4,520.6 L422.6,530.2 L433.7,539.9 L444.7,549.8 L455.5,559.9 L466.1,570.1 L476.5,580.6 L486.7,591.4 L496.6,602.5 L496.6,602.5 M318.2,448.0 L330.3,456.6 L341.8,465.9 L353.2,475.2 L364.5,484.7 L375.8,494.2 L387.0,503.8 L398.2,513.3 L409.4,522.9 L420.6,532.6 L431.7,542.3 L442.8,552.0 L453.7,561.9 L464.6,571.9 L475.4,581.9 L486.1,592.1 L496.6,602.5 L496.6,602.5 M318.2,448.0 L329.4,457.7 L340.5,467.3 L351.7,477.0 L362.8,486.6 L374.0,496.3 L385.1,505.9 L396.3,515.6 L407.4,525.3 L418.6,534.9 L429.7,544.6 L440.9,554.2 L452.0,563.9 L463.1,573.6 L474.3,583.2 L485.4,592.9 L496.6,602.5 L496.6,602.5 M318.2,448.0 L328.5,458.7 L339.3,468.8 L350.2,478.7 L361.2,488.6 L372.2,498.4 L383.2,508.1 L394.3,517.9 L405.4,527.6 L416.5,537.3 L427.7,546.9 L438.9,556.5 L450.2,565.9 L461.7,575.3 L473.2,584.5 L484.8,593.6 L496.6,602.5 L496.6,602.5 M318.2,448.0 L327.5,459.8 L338.0,470.2 L348.7,480.4 L359.5,490.5 L370.4,500.4 L381.3,510.3 L392.3,520.2 L403.4,529.9 L414.5,539.6 L425.7,549.3 L437.0,558.7 L448.5,567.9 L460.2,577.0 L472.1,585.8 L484.1,594.4 L496.6,602.5 L496.6,602.5 M318.2,448.0 L326.6,460.8 L336.8,471.7 L347.2,482.1 L357.8,492.4 L368.6,502.5 L379.4,512.5 L390.3,522.4 L401.4,532.2 L412.4,542.0 L423.6,551.6 L435.1,560.9 L446.8,570.0 L458.7,578.7 L470.9,587.1 L483.5,595.1 L496.6,602.5 L496.6,602.5 M318.2,448.0 L325.7,461.9 L335.5,473.1 L345.7,483.9 L356.1,494.3 L366.8,504.6 L377.5,514.7 L388.4,524.7 L399.3,534.6 L410.4,544.3 L421.6,553.9 L433.1,563.1 L445.0,572.0 L457.2,580.4 L469.8,588.4 L482.9,595.9 L496.6,602.5 L496.6,602.5 M318.2,448.0 L324.8,462.9 L334.2,474.6 L344.2,485.6 L354.5,496.3 L365.0,506.7 L375.6,516.9 L386.4,527.0 L397.3,536.9 L408.4,546.7 L419.6,556.3 L431.2,565.4 L443.3,574.0 L455.7,582.1 L468.7,589.7 L482.2,596.6 L496.6,602.5 L496.6,602.5 M318.2,448.0 L323.9,464.0 L333.0,476.0 L342.7,487.3 L352.8,498.2 L363.2,508.8 L373.7,519.1 L384.4,529.3 L395.3,539.2 L406.3,549.0 L417.6,558.6 L429.3,567.6 L441.5,576.0 L454.3,583.8 L467.6,591.0 L481.6,597.4 L496.6,602.5 L496.6,602.5 M318.2,448.0 L323.0,465.0 L331.7,477.5 L341.2,489.0 L351.1,500.1 L361.4,510.8 L371.8,521.3 L382.5,531.5 L393.3,541.5 L404.3,551.4 L415.6,560.9 L427.4,569.8 L439.8,578.0 L452.8,585.5 L466.5,592.3 L480.9,598.1 L496.6,602.5 L496.6,602.5 M318.2,448.0 L322.1,466.1 L330.5,478.9 L339.7,490.8 L349.5,502.0 L359.6,512.9 L369.9,523.5 L380.5,533.8 L391.3,543.9 L402.3,553.7 L413.5,563.2 L425.4,572.0 L438.0,580.0 L451.3,587.2 L465.4,593.5 L480.3,598.9 L496.6,602.5 L496.6,602.5 M318.2,448.0 L321.1,467.2 L329.2,480.4 L338.2,492.5 L347.8,504.0 L357.8,515.0 L368.0,525.7 L378.5,536.1 L389.3,546.2 L400.2,556.1 L411.5,565.6 L423.5,574.3 L436.3,582.1 L449.8,588.9 L464.2,594.8 L479.6,599.6 L496.6,602.5 L496.6,602.5 M318.2,448.0 L320.2,468.2 L328.0,481.8 L336.7,494.2 L346.1,505.9 L356.0,517.1 L366.1,527.9 L376.6,538.4 L387.3,548.5 L398.2,558.4 L409.5,567.9 L421.6,576.5 L434.5,584.1 L448.3,590.6 L463.1,596.1 L479.0,600.3 L496.6,602.5 L496.6,602.5 M318.2,448.0 L319.3,469.3 L326.7,483.3 L335.2,495.9 L344.5,507.8 L354.2,519.2 L364.2,530.1 L374.6,540.6 L385.2,550.8 L396.2,560.8 L407.5,570.2 L419.6,578.7 L432.8,586.1 L446.9,592.4 L462.0,597.4 L478.3,601.1 L496.6,602.5 L496.6,602.5 M318.2,448.0 L318.4,470.3 L325.4,484.7 L333.8,497.7 L342.8,509.7 L352.3,521.2 L362.3,532.3 L372.6,542.9 L383.2,553.2 L394.1,563.1 L405.4,572.6 L417.7,580.9 L431.0,588.1 L445.4,594.1 L460.9,598.7 L477.7,601.8 L496.6,602.5 L496.6,602.5 M318.2,448.0 L317.5,471.4 L324.2,486.2 L332.3,499.4 L341.1,511.7 L350.5,523.3 L360.4,534.5 L370.6,545.2 L381.2,555.5 L392.1,565.5 L403.4,574.9 L415.8,583.2 L429.3,590.1 L443.9,595.8 L459.8,600.0 L477.0,602.6 L496.6,602.5 L496.6,602.5" clip-path="url(#c5)" fill="none" stroke="#4aa686" stroke-width="0.7" stroke-opacity="0.8"/>
<path d="M318.2,448.0 L329.2,442.8 L335.8,442.7 L341.7,443.4 L347.2,444.6 L352.5,446.0 L357.5,447.7 L362.4,449.6 L367.2,451.6 L371.8,453.7 L376.4,455.9 L380.9,458.2 L385.3,460.6 L389.7,463.1 L394.0,465.6 L398.3,468.2 L402.5,470.9 L406.7,473.6 L410.8,476.3 L414.8,479.2 L418.9,482.0 L422.9,484.9 L426.8,487.9 L430.7,490.8 L434.6,493.9 L438.5,496.9 L442.3,500.1 L446.0,503.2 L449.8,506.4 L453.4,509.7 L457.0,513.1 L460.4,516.7 L463.7,520.4 L466.9,524.2 L469.9,528.2 L472.8,532.4 L475.6,536.7 L478.2,541.1 L480.8,545.7 L483.1,550.5 L485.4,555.4 L487.4,560.5 L489.4,565.8 L491.2,571.3 L492.8,576.9 L494.2,582.8 L495.4,588.9 L496.3,595.4 L496.6,602.5 L496.6,602.5 L489.5,603.3 L482.9,603.3 L476.7,603.0 L470.7,602.4 L464.9,601.6 L459.2,600.6 L453.7,599.5 L448.4,598.1 L443.2,596.6 L438.1,595.0 L433.2,593.1 L428.4,591.1 L423.7,589.0 L419.2,586.7 L414.8,584.3 L410.6,581.7 L406.4,579.0 L402.4,576.1 L398.5,573.1 L394.8,569.9 L391.1,566.6 L387.4,563.4 L383.8,560.0 L380.2,556.7 L376.7,553.3 L373.1,549.8 L369.7,546.3 L366.2,542.8 L362.8,539.2 L359.5,535.6 L356.1,531.9 L352.9,528.1 L349.6,524.4 L346.5,520.5 L343.4,516.6 L340.3,512.6 L337.3,508.6 L334.4,504.5 L331.5,500.2 L328.7,495.9 L326.1,491.5 L323.6,486.9 L321.2,482.2 L319.0,477.2 L317.0,471.9 L315.5,466.2 L314.7,459.6 L318.2,448.0Z" clip-path="url(#c5)" fill="none" stroke="#0c3a28" stroke-width="15" stroke-opacity="0.35" stroke-linejoin="round"/>
<path d="M318.2,448.0 L329.2,442.8 L335.8,442.7 L341.7,443.4 L347.2,444.6 L352.5,446.0 L357.5,447.7 L362.4,449.6 L367.2,451.6 L371.8,453.7 L376.4,455.9 L380.9,458.2 L385.3,460.6 L389.7,463.1 L394.0,465.6 L398.3,468.2 L402.5,470.9 L406.7,473.6 L410.8,476.3 L414.8,479.2 L418.9,482.0 L422.9,484.9 L426.8,487.9 L430.7,490.8 L434.6,493.9 L438.5,496.9 L442.3,500.1 L446.0,503.2 L449.8,506.4 L453.4,509.7 L457.0,513.1 L460.4,516.7 L463.7,520.4 L466.9,524.2 L469.9,528.2 L472.8,532.4 L475.6,536.7 L478.2,541.1 L480.8,545.7 L483.1,550.5 L485.4,555.4 L487.4,560.5 L489.4,565.8 L491.2,571.3 L492.8,576.9 L494.2,582.8 L495.4,588.9 L496.3,595.4 L496.6,602.5 L496.6,602.5 L489.5,603.3 L482.9,603.3 L476.7,603.0 L470.7,602.4 L464.9,601.6 L459.2,600.6 L453.7,599.5 L448.4,598.1 L443.2,596.6 L438.1,595.0 L433.2,593.1 L428.4,591.1 L423.7,589.0 L419.2,586.7 L414.8,584.3 L410.6,581.7 L406.4,579.0 L402.4,576.1 L398.5,573.1 L394.8,569.9 L391.1,566.6 L387.4,563.4 L383.8,560.0 L380.2,556.7 L376.7,553.3 L373.1,549.8 L369.7,546.3 L366.2,542.8 L362.8,539.2 L359.5,535.6 L356.1,531.9 L352.9,528.1 L349.6,524.4 L346.5,520.5 L343.4,516.6 L340.3,512.6 L337.3,508.6 L334.4,504.5 L331.5,500.2 L328.7,495.9 L326.1,491.5 L323.6,486.9 L321.2,482.2 L319.0,477.2 L317.0,471.9 L315.5,466.2 L314.7,459.6 L318.2,448.0Z" fill="none" stroke="#257c5b" stroke-width="8" stroke-linejoin="round"/>
<path d="M318.2,448.0 L329.2,442.8 L335.8,442.7 L341.7,443.4 L347.2,444.6 L352.5,446.0 L357.5,447.7 L362.4,449.6 L367.2,451.6 L371.8,453.7 L376.4,455.9 L380.9,458.2 L385.3,460.6 L389.7,463.1 L394.0,465.6 L398.3,468.2 L402.5,470.9 L406.7,473.6 L410.8,476.3 L414.8,479.2 L418.9,482.0 L422.9,484.9 L426.8,487.9 L430.7,490.8 L434.6,493.9 L438.5,496.9 L442.3,500.1 L446.0,503.2 L449.8,506.4 L453.4,509.7 L457.0,513.1 L460.4,516.7 L463.7,520.4 L466.9,524.2 L469.9,528.2 L472.8,532.4 L475.6,536.7 L478.2,541.1 L480.8,545.7 L483.1,550.5 L485.4,555.4 L487.4,560.5 L489.4,565.8 L491.2,571.3 L492.8,576.9 L494.2,582.8 L495.4,588.9 L496.3,595.4 L496.6,602.5 L496.6,602.5 L489.5,603.3 L482.9,603.3 L476.7,603.0 L470.7,602.4 L464.9,601.6 L459.2,600.6 L453.7,599.5 L448.4,598.1 L443.2,596.6 L438.1,595.0 L433.2,593.1 L428.4,591.1 L423.7,589.0 L419.2,586.7 L414.8,584.3 L410.6,581.7 L406.4,579.0 L402.4,576.1 L398.5,573.1 L394.8,569.9 L391.1,566.6 L387.4,563.4 L383.8,560.0 L380.2,556.7 L376.7,553.3 L373.1,549.8 L369.7,546.3 L366.2,542.8 L362.8,539.2 L359.5,535.6 L356.1,531.9 L352.9,528.1 L349.6,524.4 L346.5,520.5 L343.4,516.6 L340.3,512.6 L337.3,508.6 L334.4,504.5 L331.5,500.2 L328.7,495.9 L326.1,491.5 L323.6,486.9 L321.2,482.2 L319.0,477.2 L317.0,471.9 L315.5,466.2 L314.7,459.6 L318.2,448.0Z" fill="none" stroke="#42a07c" stroke-width="2" stroke-linejoin="round" opacity="0.55"/>
<path d="M299.3,460.2 L311.3,461.8 L317.0,465.2 L321.5,469.0 L325.5,473.0 L329.1,477.0 L332.5,481.2 L335.6,485.4 L338.5,489.7 L341.3,494.0 L343.9,498.3 L346.5,502.7 L348.9,507.1 L351.2,511.5 L353.5,516.0 L355.7,520.5 L357.8,525.0 L359.8,529.5 L361.8,534.1 L363.7,538.6 L365.5,543.2 L367.3,547.8 L369.1,552.4 L370.7,557.0 L372.4,561.7 L373.9,566.4 L375.5,571.0 L376.9,575.7 L378.4,580.4 L379.7,585.2 L380.8,590.0 L381.8,594.8 L382.5,599.7 L383.1,604.7 L383.5,609.7 L383.7,614.7 L383.7,619.9 L383.5,625.0 L383.2,630.3 L382.6,635.6 L381.8,640.9 L380.8,646.3 L379.6,651.8 L378.1,657.4 L376.4,663.0 L374.4,668.7 L372.1,674.5 L369.4,680.4 L365.8,686.6 L365.8,686.6 L359.4,683.4 L353.9,679.9 L348.8,676.2 L344.1,672.5 L339.6,668.7 L335.3,664.8 L331.3,660.9 L327.6,656.8 L324.0,652.8 L320.7,648.6 L317.5,644.4 L314.6,640.2 L311.8,635.8 L309.2,631.5 L306.9,627.1 L304.7,622.6 L302.7,618.0 L300.8,613.4 L299.2,608.8 L297.8,604.1 L296.4,599.4 L295.1,594.6 L293.9,589.9 L292.7,585.1 L291.5,580.3 L290.4,575.5 L289.4,570.7 L288.4,565.9 L287.5,561.0 L286.6,556.1 L285.8,551.2 L285.1,546.3 L284.4,541.4 L283.8,536.5 L283.3,531.5 L282.9,526.5 L282.5,521.5 L282.3,516.4 L282.2,511.3 L282.2,506.2 L282.4,501.0 L282.7,495.8 L283.3,490.5 L284.1,485.1 L285.3,479.6 L287.1,474.0 L290.0,468.0 L299.3,460.2Z" fill="none" stroke="#0f3f2c" stroke-width="10.5" stroke-linejoin="round"/>
<path d="M299.3,460.2 L311.3,461.8 L317.0,465.2 L321.5,469.0 L325.5,473.0 L329.1,477.0 L332.5,481.2 L335.6,485.4 L338.5,489.7 L341.3,494.0 L343.9,498.3 L346.5,502.7 L348.9,507.1 L351.2,511.5 L353.5,516.0 L355.7,520.5 L357.8,525.0 L359.8,529.5 L361.8,534.1 L363.7,538.6 L365.5,543.2 L367.3,547.8 L369.1,552.4 L370.7,557.0 L372.4,561.7 L373.9,566.4 L375.5,571.0 L376.9,575.7 L378.4,580.4 L379.7,585.2 L380.8,590.0 L381.8,594.8 L382.5,599.7 L383.1,604.7 L383.5,609.7 L383.7,614.7 L383.7,619.9 L383.5,625.0 L383.2,630.3 L382.6,635.6 L381.8,640.9 L380.8,646.3 L379.6,651.8 L378.1,657.4 L376.4,663.0 L374.4,668.7 L372.1,674.5 L369.4,680.4 L365.8,686.6 L365.8,686.6 L359.4,683.4 L353.9,679.9 L348.8,676.2 L344.1,672.5 L339.6,668.7 L335.3,664.8 L331.3,660.9 L327.6,656.8 L324.0,652.8 L320.7,648.6 L317.5,644.4 L314.6,640.2 L311.8,635.8 L309.2,631.5 L306.9,627.1 L304.7,622.6 L302.7,618.0 L300.8,613.4 L299.2,608.8 L297.8,604.1 L296.4,599.4 L295.1,594.6 L293.9,589.9 L292.7,585.1 L291.5,580.3 L290.4,575.5 L289.4,570.7 L288.4,565.9 L287.5,561.0 L286.6,556.1 L285.8,551.2 L285.1,546.3 L284.4,541.4 L283.8,536.5 L283.3,531.5 L282.9,526.5 L282.5,521.5 L282.3,516.4 L282.2,511.3 L282.2,506.2 L282.4,501.0 L282.7,495.8 L283.3,490.5 L284.1,485.1 L285.3,479.6 L287.1,474.0 L290.0,468.0 L299.3,460.2Z" fill="#216c4f"/>
<path d="M299.3,460.2 L320.9,469.2 L331.5,481.5 L340.2,494.3 L347.7,507.5 L354.4,520.9 L360.4,534.5 L365.9,548.2 L370.9,562.1 L375.4,576.2 L379.3,590.4 L381.7,605.1 L382.4,620.2 L381.5,635.9 L378.7,652.1 L373.9,668.9 L365.8,686.6 L365.8,686.6 M299.3,460.2 L319.5,469.6 L329.7,482.0 L338.0,494.9 L345.2,508.2 L351.7,521.6 L357.6,535.3 L363.0,549.1 L367.9,563.0 L372.5,577.0 L376.4,591.3 L378.9,605.9 L379.9,621.0 L379.3,636.5 L377.1,652.5 L373.0,669.1 L365.8,686.6 L365.8,686.6 M299.3,460.2 L318.2,470.0 L327.8,482.5 L335.8,495.6 L342.8,508.9 L349.1,522.4 L354.8,536.1 L360.1,549.9 L365.0,563.9 L369.5,577.9 L373.4,592.1 L376.0,606.7 L377.3,621.7 L377.1,637.2 L375.5,653.0 L372.0,669.4 L365.8,686.6 L365.8,686.6 M299.3,460.2 L316.8,470.4 L326.0,483.1 L333.6,496.2 L340.3,509.6 L346.4,523.2 L352.0,536.9 L357.2,550.8 L362.0,564.7 L366.5,578.8 L370.4,593.0 L373.2,607.6 L374.7,622.5 L375.0,637.8 L373.8,653.5 L371.1,669.7 L365.8,686.6 L365.8,686.6 M299.3,460.2 L315.5,470.8 L324.2,483.6 L331.4,496.9 L337.9,510.3 L343.8,524.0 L349.3,537.7 L354.3,551.6 L359.1,565.6 L363.5,579.7 L367.5,593.9 L370.4,608.4 L372.2,623.2 L372.8,638.4 L372.2,654.0 L370.1,670.0 L365.8,686.6 L365.8,686.6 M299.3,460.2 L314.2,471.2 L322.3,484.2 L329.2,497.5 L335.5,511.0 L341.2,524.7 L346.5,538.6 L351.5,552.5 L356.1,566.5 L360.5,580.5 L364.5,594.7 L367.6,609.2 L369.6,624.0 L370.6,639.1 L370.5,654.5 L369.2,670.2 L365.8,686.6 L365.8,686.6 M299.3,460.2 L312.8,471.6 L320.5,484.7 L327.1,498.1 L333.0,511.8 L338.5,525.5 L343.7,539.4 L348.6,553.3 L353.2,567.3 L357.5,581.4 L361.6,595.6 L364.7,610.1 L367.1,624.7 L368.5,639.7 L368.9,654.9 L368.2,670.5 L365.8,686.6 L365.8,686.6 M299.3,460.2 L311.5,472.0 L318.6,485.2 L324.9,498.8 L330.6,512.5 L335.9,526.3 L340.9,540.2 L345.7,554.2 L350.2,568.2 L354.6,582.3 L358.6,596.5 L361.9,610.9 L364.5,625.5 L366.3,640.3 L367.3,655.4 L367.3,670.8 L365.8,686.6 L365.8,686.6 M299.3,460.2 L310.1,472.4 L316.8,485.8 L322.7,499.4 L328.1,513.2 L333.2,527.1 L338.1,541.0 L342.8,555.0 L347.3,569.1 L351.6,583.2 L355.6,597.4 L359.1,611.7 L361.9,626.2 L364.1,641.0 L365.6,655.9 L366.3,671.1 L365.8,686.6 L365.8,686.6 M299.3,460.2 L308.8,472.8 L314.9,486.3 L320.5,500.1 L325.7,513.9 L330.6,527.8 L335.3,541.8 L339.9,555.9 L344.3,569.9 L348.6,584.0 L352.7,598.2 L356.3,612.5 L359.4,627.0 L362.0,641.6 L364.0,656.4 L365.4,671.4 L365.8,686.6 L365.8,686.6 M299.3,460.2 L307.4,473.2 L313.1,486.9 L318.3,500.7 L323.2,514.6 L328.0,528.6 L332.6,542.6 L337.0,556.7 L341.4,570.8 L345.6,584.9 L349.7,599.1 L353.5,613.4 L356.8,627.8 L359.8,642.3 L362.4,656.9 L364.4,671.6 L365.8,686.6 L365.8,686.6 M299.3,460.2 L306.1,473.5 L311.3,487.4 L316.1,501.4 L320.8,515.4 L325.3,529.4 L329.8,543.5 L334.1,557.6 L338.4,571.7 L342.6,585.8 L346.7,600.0 L350.6,614.2 L354.3,628.5 L357.6,642.9 L360.7,657.4 L363.5,671.9 L365.8,686.6 L365.8,686.6 M299.3,460.2 L304.8,473.9 L309.4,487.9 L313.9,502.0 L318.3,516.1 L322.7,530.2 L327.0,544.3 L331.2,558.4 L335.5,572.5 L339.7,586.7 L343.8,600.8 L347.8,615.0 L351.7,629.3 L355.5,643.5 L359.1,657.8 L362.6,672.2 L365.8,686.6 L365.8,686.6 M299.3,460.2 L303.4,474.3 L307.6,488.5 L311.7,502.6 L315.9,516.8 L320.0,530.9 L324.2,545.1 L328.4,559.2 L332.5,573.4 L336.7,587.6 L340.8,601.7 L345.0,615.9 L349.1,630.0 L353.3,644.2 L357.4,658.3 L361.6,672.5 L365.8,686.6 L365.8,686.6 M299.3,460.2 L302.1,474.7 L305.7,489.0 L309.5,503.3 L313.4,517.5 L317.4,531.7 L321.4,545.9 L325.5,560.1 L329.6,574.3 L333.7,588.4 L337.9,602.6 L342.2,616.7 L346.6,630.8 L351.1,644.8 L355.8,658.8 L360.7,672.7 L365.8,686.6 L365.8,686.6 M299.3,460.2 L300.7,475.1 L303.9,489.6 L307.4,503.9 L311.0,518.2 L314.8,532.5 L318.6,546.7 L322.6,560.9 L326.6,575.1 L330.7,589.3 L334.9,603.4 L339.3,617.5 L344.0,631.5 L349.0,645.4 L354.2,659.3 L359.7,673.0 L365.8,686.6 L365.8,686.6 M299.3,460.2 L299.4,475.5 L302.1,490.1 L305.2,504.6 L308.6,518.9 L312.1,533.3 L315.8,547.5 L319.7,561.8 L323.7,576.0 L327.7,590.2 L331.9,604.3 L336.5,618.3 L341.5,632.3 L346.8,646.1 L352.5,659.8 L358.8,673.3 L365.8,686.6 L365.8,686.6 M299.3,460.2 L298.1,475.9 L300.2,490.6 L303.0,505.2 L306.1,519.7 L309.5,534.0 L313.1,548.4 L316.8,562.6 L320.7,576.9 L324.7,591.1 L329.0,605.2 L333.7,619.2 L338.9,633.0 L344.6,646.7 L350.9,660.2 L357.8,673.6 L365.8,686.6 L365.8,686.6 M299.3,460.2 L296.7,476.3 L298.4,491.2 L300.8,505.8 L303.7,520.4 L306.9,534.8 L310.3,549.2 L313.9,563.5 L317.8,577.7 L321.8,591.9 L326.0,606.1 L330.9,620.0 L336.3,633.8 L342.4,647.3 L349.3,660.7 L356.9,673.9 L365.8,686.6 L365.8,686.6 M299.3,460.2 L295.4,476.7 L296.5,491.7 L298.6,506.5 L301.2,521.1 L304.2,535.6 L307.5,550.0 L311.0,564.3 L314.8,578.6 L318.8,592.8 L323.1,606.9 L328.0,620.8 L333.8,634.5 L340.3,648.0 L347.6,661.2 L355.9,674.1 L365.8,686.6 L365.8,686.6 M299.3,460.2 L294.0,477.1 L294.7,492.3 L296.4,507.1 L298.8,521.8 L301.6,536.4 L304.7,550.8 L308.1,565.2 L311.8,579.5 L315.8,593.7 L320.1,607.8 L325.2,621.7 L331.2,635.3 L338.1,648.6 L346.0,661.7 L355.0,674.4 L365.8,686.6 L365.8,686.6 M299.3,460.2 L292.7,477.5 L292.8,492.8 L294.2,507.8 L296.3,522.5 L298.9,537.1 L301.9,551.6 L305.3,566.0 L308.9,580.3 L312.8,594.6 L317.1,608.7 L322.4,622.5 L328.6,636.0 L335.9,649.3 L344.3,662.2 L354.0,674.7 L365.8,686.6 L365.8,686.6 M299.3,460.2 L291.4,477.9 L291.0,493.4 L292.0,508.4 L293.9,523.3 L296.3,537.9 L299.1,552.5 L302.4,566.9 L305.9,581.2 L309.8,595.4 L314.2,609.5 L319.6,623.3 L326.1,636.8 L333.8,649.9 L342.7,662.6 L353.1,675.0 L365.8,686.6 L365.8,686.6 M299.3,460.2 L290.0,478.3 L289.2,493.9 L289.9,509.1 L291.4,524.0 L293.7,538.7 L296.4,553.3 L299.5,567.7 L303.0,582.1 L306.8,596.3 L311.2,610.4 L316.7,624.1 L323.5,637.5 L331.6,650.5 L341.1,663.1 L352.1,675.2 L365.8,686.6 L365.8,686.6 M299.3,460.2 L288.7,478.7 L287.3,494.4 L287.7,509.7 L289.0,524.7 L291.0,539.5 L293.6,554.1 L296.6,568.6 L300.0,582.9 L303.9,597.2 L308.2,611.3 L313.9,625.0 L321.0,638.3 L329.4,651.2 L339.4,663.6 L351.2,675.5 L365.8,686.6 L365.8,686.6 M299.3,460.2 L287.3,479.1 L285.5,495.0 L285.5,510.3 L286.6,525.4 L288.4,540.2 L290.8,554.9 L293.7,569.4 L297.1,583.8 L300.9,598.1 L305.3,612.1 L311.1,625.8 L318.4,639.0 L327.3,651.8 L337.8,664.1 L350.2,675.8 L365.8,686.6 L365.8,686.6 M299.3,460.2 L286.0,479.5 L283.6,495.5 L283.3,511.0 L284.1,526.1 L285.7,541.0 L288.0,555.7 L290.8,570.3 L294.1,584.7 L297.9,598.9 L302.3,613.0 L308.3,626.6 L315.8,639.8 L325.1,652.4 L336.2,664.6 L349.3,676.1 L365.8,686.6 L365.8,686.6" clip-path="url(#c6)" fill="none" stroke="#4aa686" stroke-width="0.7" stroke-opacity="0.8"/>
<path d="M299.3,460.2 L311.3,461.8 L317.0,465.2 L321.5,469.0 L325.5,473.0 L329.1,477.0 L332.5,481.2 L335.6,485.4 L338.5,489.7 L341.3,494.0 L343.9,498.3 L346.5,502.7 L348.9,507.1 L351.2,511.5 L353.5,516.0 L355.7,520.5 L357.8,525.0 L359.8,529.5 L361.8,534.1 L363.7,538.6 L365.5,543.2 L367.3,547.8 L369.1,552.4 L370.7,557.0 L372.4,561.7 L373.9,566.4 L375.5,571.0 L376.9,575.7 L378.4,580.4 L379.7,585.2 L380.8,590.0 L381.8,594.8 L382.5,599.7 L383.1,604.7 L383.5,609.7 L383.7,614.7 L383.7,619.9 L383.5,625.0 L383.2,630.3 L382.6,635.6 L381.8,640.9 L380.8,646.3 L379.6,651.8 L378.1,657.4 L376.4,663.0 L374.4,668.7 L372.1,674.5 L369.4,680.4 L365.8,686.6 L365.8,686.6 L359.4,683.4 L353.9,679.9 L348.8,676.2 L344.1,672.5 L339.6,668.7 L335.3,664.8 L331.3,660.9 L327.6,656.8 L324.0,652.8 L320.7,648.6 L317.5,644.4 L314.6,640.2 L311.8,635.8 L309.2,631.5 L306.9,627.1 L304.7,622.6 L302.7,618.0 L300.8,613.4 L299.2,608.8 L297.8,604.1 L296.4,599.4 L295.1,594.6 L293.9,589.9 L292.7,585.1 L291.5,580.3 L290.4,575.5 L289.4,570.7 L288.4,565.9 L287.5,561.0 L286.6,556.1 L285.8,551.2 L285.1,546.3 L284.4,541.4 L283.8,536.5 L283.3,531.5 L282.9,526.5 L282.5,521.5 L282.3,516.4 L282.2,511.3 L282.2,506.2 L282.4,501.0 L282.7,495.8 L283.3,490.5 L284.1,485.1 L285.3,479.6 L287.1,474.0 L290.0,468.0 L299.3,460.2Z" clip-path="url(#c6)" fill="none" stroke="#0c3a28" stroke-width="15" stroke-opacity="0.35" stroke-linejoin="round"/>
<path d="M299.3,460.2 L311.3,461.8 L317.0,465.2 L321.5,469.0 L325.5,473.0 L329.1,477.0 L332.5,481.2 L335.6,485.4 L338.5,489.7 L341.3,494.0 L343.9,498.3 L346.5,502.7 L348.9,507.1 L351.2,511.5 L353.5,516.0 L355.7,520.5 L357.8,525.0 L359.8,529.5 L361.8,534.1 L363.7,538.6 L365.5,543.2 L367.3,547.8 L369.1,552.4 L370.7,557.0 L372.4,561.7 L373.9,566.4 L375.5,571.0 L376.9,575.7 L378.4,580.4 L379.7,585.2 L380.8,590.0 L381.8,594.8 L382.5,599.7 L383.1,604.7 L383.5,609.7 L383.7,614.7 L383.7,619.9 L383.5,625.0 L383.2,630.3 L382.6,635.6 L381.8,640.9 L380.8,646.3 L379.6,651.8 L378.1,657.4 L376.4,663.0 L374.4,668.7 L372.1,674.5 L369.4,680.4 L365.8,686.6 L365.8,686.6 L359.4,683.4 L353.9,679.9 L348.8,676.2 L344.1,672.5 L339.6,668.7 L335.3,664.8 L331.3,660.9 L327.6,656.8 L324.0,652.8 L320.7,648.6 L317.5,644.4 L314.6,640.2 L311.8,635.8 L309.2,631.5 L306.9,627.1 L304.7,622.6 L302.7,618.0 L300.8,613.4 L299.2,608.8 L297.8,604.1 L296.4,599.4 L295.1,594.6 L293.9,589.9 L292.7,585.1 L291.5,580.3 L290.4,575.5 L289.4,570.7 L288.4,565.9 L287.5,561.0 L286.6,556.1 L285.8,551.2 L285.1,546.3 L284.4,541.4 L283.8,536.5 L283.3,531.5 L282.9,526.5 L282.5,521.5 L282.3,516.4 L282.2,511.3 L282.2,506.2 L282.4,501.0 L282.7,495.8 L283.3,490.5 L284.1,485.1 L285.3,479.6 L287.1,474.0 L290.0,468.0 L299.3,460.2Z" fill="none" stroke="#257c5b" stroke-width="8" stroke-linejoin="round"/>
<path d="M299.3,460.2 L311.3,461.8 L317.0,465.2 L321.5,469.0 L325.5,473.0 L329.1,477.0 L332.5,481.2 L335.6,485.4 L338.5,489.7 L341.3,494.0 L343.9,498.3 L346.5,502.7 L348.9,507.1 L351.2,511.5 L353.5,516.0 L355.7,520.5 L357.8,525.0 L359.8,529.5 L361.8,534.1 L363.7,538.6 L365.5,543.2 L367.3,547.8 L369.1,552.4 L370.7,557.0 L372.4,561.7 L373.9,566.4 L375.5,571.0 L376.9,575.7 L378.4,580.4 L379.7,585.2 L380.8,590.0 L381.8,594.8 L382.5,599.7 L383.1,604.7 L383.5,609.7 L383.7,614.7 L383.7,619.9 L383.5,625.0 L383.2,630.3 L382.6,635.6 L381.8,640.9 L380.8,646.3 L379.6,651.8 L378.1,657.4 L376.4,663.0 L374.4,668.7 L372.1,674.5 L369.4,680.4 L365.8,686.6 L365.8,686.6 L359.4,683.4 L353.9,679.9 L348.8,676.2 L344.1,672.5 L339.6,668.7 L335.3,664.8 L331.3,660.9 L327.6,656.8 L324.0,652.8 L320.7,648.6 L317.5,644.4 L314.6,640.2 L311.8,635.8 L309.2,631.5 L306.9,627.1 L304.7,622.6 L302.7,618.0 L300.8,613.4 L299.2,608.8 L297.8,604.1 L296.4,599.4 L295.1,594.6 L293.9,589.9 L292.7,585.1 L291.5,580.3 L290.4,575.5 L289.4,570.7 L288.4,565.9 L287.5,561.0 L286.6,556.1 L285.8,551.2 L285.1,546.3 L284.4,541.4 L283.8,536.5 L283.3,531.5 L282.9,526.5 L282.5,521.5 L282.3,516.4 L282.2,511.3 L282.2,506.2 L282.4,501.0 L282.7,495.8 L283.3,490.5 L284.1,485.1 L285.3,479.6 L287.1,474.0 L290.0,468.0 L299.3,460.2Z" fill="none" stroke="#42a07c" stroke-width="2" stroke-linejoin="round" opacity="0.55"/>
<path d="M276.7,460.2 L286.0,468.0 L288.9,474.0 L290.7,479.6 L291.9,485.1 L292.7,490.5 L293.3,495.8 L293.6,501.0 L293.8,506.2 L293.8,511.3 L293.7,516.4 L293.5,521.5 L293.1,526.5 L292.7,531.5 L292.2,536.5 L291.6,541.4 L290.9,546.3 L290.2,551.2 L289.4,556.1 L288.5,561.0 L287.6,565.9 L286.6,570.7 L285.6,575.5 L284.5,580.3 L283.3,585.1 L282.1,589.9 L280.9,594.6 L279.6,599.4 L278.2,604.1 L276.8,608.8 L275.2,613.4 L273.3,618.0 L271.3,622.6 L269.1,627.1 L266.8,631.5 L264.2,635.8 L261.4,640.2 L258.5,644.4 L255.3,648.6 L252.0,652.8 L248.4,656.8 L244.7,660.9 L240.7,664.8 L236.4,668.7 L231.9,672.5 L227.2,676.2 L222.1,679.9 L216.6,683.4 L210.2,686.6 L210.2,686.6 L206.6,680.4 L203.9,674.5 L201.6,668.7 L199.6,663.0 L197.9,657.4 L196.4,651.8 L195.2,646.3 L194.2,640.9 L193.4,635.6 L192.8,630.3 L192.5,625.0 L192.3,619.9 L192.3,614.7 L192.5,609.7 L192.9,604.7 L193.5,599.7 L194.2,594.8 L195.2,590.0 L196.3,585.2 L197.6,580.4 L199.1,575.7 L200.5,571.0 L202.1,566.4 L203.6,561.7 L205.3,557.0 L206.9,552.4 L208.7,547.8 L210.5,543.2 L212.3,538.6 L214.2,534.1 L216.2,529.5 L218.2,525.0 L220.3,520.5 L222.5,516.0 L224.8,511.5 L227.1,507.1 L229.5,502.7 L232.1,498.3 L234.7,494.0 L237.5,489.7 L240.4,485.4 L243.5,481.2 L246.9,477.0 L250.5,473.0 L254.5,469.0 L259.0,465.2 L264.7,461.8 L276.7,460.2Z" fill="none" stroke="#0f3f2c" stroke-width="10.5" stroke-linejoin="round"/>
<path d="M276.7,460.2 L286.0,468.0 L288.9,474.0 L290.7,479.6 L291.9,485.1 L292.7,490.5 L293.3,495.8 L293.6,501.0 L293.8,506.2 L293.8,511.3 L293.7,516.4 L293.5,521.5 L293.1,526.5 L292.7,531.5 L292.2,536.5 L291.6,541.4 L290.9,546.3 L290.2,551.2 L289.4,556.1 L288.5,561.0 L287.6,565.9 L286.6,570.7 L285.6,575.5 L284.5,580.3 L283.3,585.1 L282.1,589.9 L280.9,594.6 L279.6,599.4 L278.2,604.1 L276.8,608.8 L275.2,613.4 L273.3,618.0 L271.3,622.6 L269.1,627.1 L266.8,631.5 L264.2,635.8 L261.4,640.2 L258.5,644.4 L255.3,648.6 L252.0,652.8 L248.4,656.8 L244.7,660.9 L240.7,664.8 L236.4,668.7 L231.9,672.5 L227.2,676.2 L222.1,679.9 L216.6,683.4 L210.2,686.6 L210.2,686.6 L206.6,680.4 L203.9,674.5 L201.6,668.7 L199.6,663.0 L197.9,657.4 L196.4,651.8 L195.2,646.3 L194.2,640.9 L193.4,635.6 L192.8,630.3 L192.5,625.0 L192.3,619.9 L192.3,614.7 L192.5,609.7 L192.9,604.7 L193.5,599.7 L194.2,594.8 L195.2,590.0 L196.3,585.2 L197.6,580.4 L199.1,575.7 L200.5,571.0 L202.1,566.4 L203.6,561.7 L205.3,557.0 L206.9,552.4 L208.7,547.8 L210.5,543.2 L212.3,538.6 L214.2,534.1 L216.2,529.5 L218.2,525.0 L220.3,520.5 L222.5,516.0 L224.8,511.5 L227.1,507.1 L229.5,502.7 L232.1,498.3 L234.7,494.0 L237.5,489.7 L240.4,485.4 L243.5,481.2 L246.9,477.0 L250.5,473.0 L254.5,469.0 L259.0,465.2 L264.7,461.8 L276.7,460.2Z" fill="#216c4f"/>
<path d="M276.7,460.2 L290.0,479.5 L292.4,495.5 L292.7,511.0 L291.9,526.1 L290.3,541.0 L288.0,555.7 L285.2,570.3 L281.9,584.7 L278.1,598.9 L273.7,613.0 L267.7,626.6 L260.2,639.8 L250.9,652.4 L239.8,664.6 L226.7,676.1 L210.2,686.6 L210.2,686.6 M276.7,460.2 L288.7,479.1 L290.5,495.0 L290.5,510.3 L289.4,525.4 L287.6,540.2 L285.2,554.9 L282.3,569.4 L278.9,583.8 L275.1,598.1 L270.7,612.1 L264.9,625.8 L257.6,639.0 L248.7,651.8 L238.2,664.1 L225.8,675.8 L210.2,686.6 L210.2,686.6 M276.7,460.2 L287.3,478.7 L288.7,494.4 L288.3,509.7 L287.0,524.7 L285.0,539.5 L282.4,554.1 L279.4,568.6 L276.0,582.9 L272.1,597.2 L267.8,611.3 L262.1,625.0 L255.0,638.3 L246.6,651.2 L236.6,663.6 L224.8,675.5 L210.2,686.6 L210.2,686.6 M276.7,460.2 L286.0,478.3 L286.8,493.9 L286.1,509.1 L284.6,524.0 L282.3,538.7 L279.6,553.3 L276.5,567.7 L273.0,582.1 L269.2,596.3 L264.8,610.4 L259.3,624.1 L252.5,637.5 L244.4,650.5 L234.9,663.1 L223.9,675.2 L210.2,686.6 L210.2,686.6 M276.7,460.2 L284.6,477.9 L285.0,493.4 L284.0,508.4 L282.1,523.3 L279.7,537.9 L276.9,552.5 L273.6,566.9 L270.1,581.2 L266.2,595.4 L261.8,609.5 L256.4,623.3 L249.9,636.8 L242.2,649.9 L233.3,662.6 L222.9,675.0 L210.2,686.6 L210.2,686.6 M276.7,460.2 L283.3,477.5 L283.2,492.8 L281.8,507.8 L279.7,522.5 L277.1,537.1 L274.1,551.6 L270.7,566.0 L267.1,580.3 L263.2,594.6 L258.9,608.7 L253.6,622.5 L247.4,636.0 L240.1,649.3 L231.7,662.2 L222.0,674.7 L210.2,686.6 L210.2,686.6 M276.7,460.2 L282.0,477.1 L281.3,492.3 L279.6,507.1 L277.2,521.8 L274.4,536.4 L271.3,550.8 L267.9,565.2 L264.2,579.5 L260.2,593.7 L255.9,607.8 L250.8,621.7 L244.8,635.3 L237.9,648.6 L230.0,661.7 L221.0,674.4 L210.2,686.6 L210.2,686.6 M276.7,460.2 L280.6,476.7 L279.5,491.7 L277.4,506.5 L274.8,521.1 L271.8,535.6 L268.5,550.0 L265.0,564.3 L261.2,578.6 L257.2,592.8 L252.9,606.9 L248.0,620.8 L242.2,634.5 L235.7,648.0 L228.4,661.2 L220.1,674.1 L210.2,686.6 L210.2,686.6 M276.7,460.2 L279.3,476.3 L277.6,491.2 L275.2,505.8 L272.3,520.4 L269.1,534.8 L265.7,549.2 L262.1,563.5 L258.2,577.7 L254.2,591.9 L250.0,606.1 L245.1,620.0 L239.7,633.8 L233.6,647.3 L226.7,660.7 L219.1,673.9 L210.2,686.6 L210.2,686.6 M276.7,460.2 L277.9,475.9 L275.8,490.6 L273.0,505.2 L269.9,519.7 L266.5,534.0 L262.9,548.4 L259.2,562.6 L255.3,576.9 L251.3,591.1 L247.0,605.2 L242.3,619.2 L237.1,633.0 L231.4,646.7 L225.1,660.2 L218.2,673.6 L210.2,686.6 L210.2,686.6 M276.7,460.2 L276.6,475.5 L273.9,490.1 L270.8,504.6 L267.4,518.9 L263.9,533.3 L260.2,547.5 L256.3,561.8 L252.3,576.0 L248.3,590.2 L244.1,604.3 L239.5,618.3 L234.5,632.3 L229.2,646.1 L223.5,659.8 L217.2,673.3 L210.2,686.6 L210.2,686.6 M276.7,460.2 L275.3,475.1 L272.1,489.6 L268.6,503.9 L265.0,518.2 L261.2,532.5 L257.4,546.7 L253.4,560.9 L249.4,575.1 L245.3,589.3 L241.1,603.4 L236.7,617.5 L232.0,631.5 L227.0,645.4 L221.8,659.3 L216.3,673.0 L210.2,686.6 L210.2,686.6 M276.7,460.2 L273.9,474.7 L270.3,489.0 L266.5,503.3 L262.6,517.5 L258.6,531.7 L254.6,545.9 L250.5,560.1 L246.4,574.3 L242.3,588.4 L238.1,602.6 L233.8,616.7 L229.4,630.8 L224.9,644.8 L220.2,658.8 L215.3,672.7 L210.2,686.6 L210.2,686.6 M276.7,460.2 L272.6,474.3 L268.4,488.5 L264.3,502.6 L260.1,516.8 L256.0,530.9 L251.8,545.1 L247.6,559.2 L243.5,573.4 L239.3,587.6 L235.2,601.7 L231.0,615.9 L226.9,630.0 L222.7,644.2 L218.6,658.3 L214.4,672.5 L210.2,686.6 L210.2,686.6 M276.7,460.2 L271.2,473.9 L266.6,487.9 L262.1,502.0 L257.7,516.1 L253.3,530.2 L249.0,544.3 L244.8,558.4 L240.5,572.5 L236.3,586.7 L232.2,600.8 L228.2,615.0 L224.3,629.3 L220.5,643.5 L216.9,657.8 L213.4,672.2 L210.2,686.6 L210.2,686.6 M276.7,460.2 L269.9,473.5 L264.7,487.4 L259.9,501.4 L255.2,515.4 L250.7,529.4 L246.2,543.5 L241.9,557.6 L237.6,571.7 L233.4,585.8 L229.3,600.0 L225.4,614.2 L221.7,628.5 L218.4,642.9 L215.3,657.4 L212.5,671.9 L210.2,686.6 L210.2,686.6 M276.7,460.2 L268.6,473.2 L262.9,486.9 L257.7,500.7 L252.8,514.6 L248.0,528.6 L243.4,542.6 L239.0,556.7 L234.6,570.8 L230.4,584.9 L226.3,599.1 L222.5,613.4 L219.2,627.8 L216.2,642.3 L213.6,656.9 L211.6,671.6 L210.2,686.6 L210.2,686.6 M276.7,460.2 L267.2,472.8 L261.1,486.3 L255.5,500.1 L250.3,513.9 L245.4,527.8 L240.7,541.8 L236.1,555.9 L231.7,569.9 L227.4,584.0 L223.3,598.2 L219.7,612.5 L216.6,627.0 L214.0,641.6 L212.0,656.4 L210.6,671.4 L210.2,686.6 L210.2,686.6 M276.7,460.2 L265.9,472.4 L259.2,485.8 L253.3,499.4 L247.9,513.2 L242.8,527.1 L237.9,541.0 L233.2,555.0 L228.7,569.1 L224.4,583.2 L220.4,597.4 L216.9,611.7 L214.1,626.2 L211.9,641.0 L210.4,655.9 L209.7,671.1 L210.2,686.6 L210.2,686.6 M276.7,460.2 L264.5,472.0 L257.4,485.2 L251.1,498.8 L245.4,512.5 L240.1,526.3 L235.1,540.2 L230.3,554.2 L225.8,568.2 L221.4,582.3 L217.4,596.5 L214.1,610.9 L211.5,625.5 L209.7,640.3 L208.7,655.4 L208.7,670.8 L210.2,686.6 L210.2,686.6 M276.7,460.2 L263.2,471.6 L255.5,484.7 L248.9,498.1 L243.0,511.8 L237.5,525.5 L232.3,539.4 L227.4,553.3 L222.8,567.3 L218.5,581.4 L214.4,595.6 L211.3,610.1 L208.9,624.7 L207.5,639.7 L207.1,654.9 L207.8,670.5 L210.2,686.6 L210.2,686.6 M276.7,460.2 L261.8,471.2 L253.7,484.2 L246.8,497.5 L240.5,511.0 L234.8,524.7 L229.5,538.6 L224.5,552.5 L219.9,566.5 L215.5,580.5 L211.5,594.7 L208.4,609.2 L206.4,624.0 L205.4,639.1 L205.5,654.5 L206.8,670.2 L210.2,686.6 L210.2,686.6 M276.7,460.2 L260.5,470.8 L251.8,483.6 L244.6,496.9 L238.1,510.3 L232.2,524.0 L226.7,537.7 L221.7,551.6 L216.9,565.6 L212.5,579.7 L208.5,593.9 L205.6,608.4 L203.8,623.2 L203.2,638.4 L203.8,654.0 L205.9,670.0 L210.2,686.6 L210.2,686.6 M276.7,460.2 L259.2,470.4 L250.0,483.1 L242.4,496.2 L235.7,509.6 L229.6,523.2 L224.0,536.9 L218.8,550.8 L214.0,564.7 L209.5,578.8 L205.6,593.0 L202.8,607.6 L201.3,622.5 L201.0,637.8 L202.2,653.5 L204.9,669.7 L210.2,686.6 L210.2,686.6 M276.7,460.2 L257.8,470.0 L248.2,482.5 L240.2,495.6 L233.2,508.9 L226.9,522.4 L221.2,536.1 L215.9,549.9 L211.0,563.9 L206.5,577.9 L202.6,592.1 L200.0,606.7 L198.7,621.7 L198.9,637.2 L200.5,653.0 L204.0,669.4 L210.2,686.6 L210.2,686.6 M276.7,460.2 L256.5,469.6 L246.3,482.0 L238.0,494.9 L230.8,508.2 L224.3,521.6 L218.4,535.3 L213.0,549.1 L208.1,563.0 L203.5,577.0 L199.6,591.3 L197.1,605.9 L196.1,621.0 L196.7,636.5 L198.9,652.5 L203.0,669.1 L210.2,686.6 L210.2,686.6 M276.7,460.2 L255.1,469.2 L244.5,481.5 L235.8,494.3 L228.3,507.5 L221.6,520.9 L215.6,534.5 L210.1,548.2 L205.1,562.1 L200.6,576.2 L196.7,590.4 L194.3,605.1 L193.6,620.2 L194.5,635.9 L197.3,652.1 L202.1,668.9 L210.2,686.6 L210.2,686.6" clip-path="url(#c7)" fill="none" stroke="#4aa686" stroke-width="0.7" stroke-opacity="0.8"/>
<path d="M276.7,460.2 L286.0,468.0 L288.9,474.0 L290.7,479.6 L291.9,485.1 L292.7,490.5 L293.3,495.8 L293.6,501.0 L293.8,506.2 L293.8,511.3 L293.7,516.4 L293.5,521.5 L293.1,526.5 L292.7,531.5 L292.2,536.5 L291.6,541.4 L290.9,546.3 L290.2,551.2 L289.4,556.1 L288.5,561.0 L287.6,565.9 L286.6,570.7 L285.6,575.5 L284.5,580.3 L283.3,585.1 L282.1,589.9 L280.9,594.6 L279.6,599.4 L278.2,604.1 L276.8,608.8 L275.2,613.4 L273.3,618.0 L271.3,622.6 L269.1,627.1 L266.8,631.5 L264.2,635.8 L261.4,640.2 L258.5,644.4 L255.3,648.6 L252.0,652.8 L248.4,656.8 L244.7,660.9 L240.7,664.8 L236.4,668.7 L231.9,672.5 L227.2,676.2 L222.1,679.9 L216.6,683.4 L210.2,686.6 L210.2,686.6 L206.6,680.4 L203.9,674.5 L201.6,668.7 L199.6,663.0 L197.9,657.4 L196.4,651.8 L195.2,646.3 L194.2,640.9 L193.4,635.6 L192.8,630.3 L192.5,625.0 L192.3,619.9 L192.3,614.7 L192.5,609.7 L192.9,604.7 L193.5,599.7 L194.2,594.8 L195.2,590.0 L196.3,585.2 L197.6,580.4 L199.1,575.7 L200.5,571.0 L202.1,566.4 L203.6,561.7 L205.3,557.0 L206.9,552.4 L208.7,547.8 L210.5,543.2 L212.3,538.6 L214.2,534.1 L216.2,529.5 L218.2,525.0 L220.3,520.5 L222.5,516.0 L224.8,511.5 L227.1,507.1 L229.5,502.7 L232.1,498.3 L234.7,494.0 L237.5,489.7 L240.4,485.4 L243.5,481.2 L246.9,477.0 L250.5,473.0 L254.5,469.0 L259.0,465.2 L264.7,461.8 L276.7,460.2Z" clip-path="url(#c7)" fill="none" stroke="#0c3a28" stroke-width="15" stroke-opacity="0.35" stroke-linejoin="round"/>
<path d="M276.7,460.2 L286.0,468.0 L288.9,474.0 L290.7,479.6 L291.9,485.1 L292.7,490.5 L293.3,495.8 L293.6,501.0 L293.8,506.2 L293.8,511.3 L293.7,516.4 L293.5,521.5 L293.1,526.5 L292.7,531.5 L292.2,536.5 L291.6,541.4 L290.9,546.3 L290.2,551.2 L289.4,556.1 L288.5,561.0 L287.6,565.9 L286.6,570.7 L285.6,575.5 L284.5,580.3 L283.3,585.1 L282.1,589.9 L280.9,594.6 L279.6,599.4 L278.2,604.1 L276.8,608.8 L275.2,613.4 L273.3,618.0 L271.3,622.6 L269.1,627.1 L266.8,631.5 L264.2,635.8 L261.4,640.2 L258.5,644.4 L255.3,648.6 L252.0,652.8 L248.4,656.8 L244.7,660.9 L240.7,664.8 L236.4,668.7 L231.9,672.5 L227.2,676.2 L222.1,679.9 L216.6,683.4 L210.2,686.6 L210.2,686.6 L206.6,680.4 L203.9,674.5 L201.6,668.7 L199.6,663.0 L197.9,657.4 L196.4,651.8 L195.2,646.3 L194.2,640.9 L193.4,635.6 L192.8,630.3 L192.5,625.0 L192.3,619.9 L192.3,614.7 L192.5,609.7 L192.9,604.7 L193.5,599.7 L194.2,594.8 L195.2,590.0 L196.3,585.2 L197.6,580.4 L199.1,575.7 L200.5,571.0 L202.1,566.4 L203.6,561.7 L205.3,557.0 L206.9,552.4 L208.7,547.8 L210.5,543.2 L212.3,538.6 L214.2,534.1 L216.2,529.5 L218.2,525.0 L220.3,520.5 L222.5,516.0 L224.8,511.5 L227.1,507.1 L229.5,502.7 L232.1,498.3 L234.7,494.0 L237.5,489.7 L240.4,485.4 L243.5,481.2 L246.9,477.0 L250.5,473.0 L254.5,469.0 L259.0,465.2 L264.7,461.8 L276.7,460.2Z" fill="none" stroke="#257c5b" stroke-width="8" stroke-linejoin="round"/>
<path d="M276.7,460.2 L286.0,468.0 L288.9,474.0 L290.7,479.6 L291.9,485.1 L292.7,490.5 L293.3,495.8 L293.6,501.0 L293.8,506.2 L293.8,511.3 L293.7,516.4 L293.5,521.5 L293.1,526.5 L292.7,531.5 L292.2,536.5 L291.6,541.4 L290.9,546.3 L290.2,551.2 L289.4,556.1 L288.5,561.0 L287.6,565.9 L286.6,570.7 L285.6,575.5 L284.5,580.3 L283.3,585.1 L282.1,589.9 L280.9,594.6 L279.6,599.4 L278.2,604.1 L276.8,608.8 L275.2,613.4 L273.3,618.0 L271.3,622.6 L269.1,627.1 L266.8,631.5 L264.2,635.8 L261.4,640.2 L258.5,644.4 L255.3,648.6 L252.0,652.8 L248.4,656.8 L244.7,660.9 L240.7,664.8 L236.4,668.7 L231.9,672.5 L227.2,676.2 L222.1,679.9 L216.6,683.4 L210.2,686.6 L210.2,686.6 L206.6,680.4 L203.9,674.5 L201.6,668.7 L199.6,663.0 L197.9,657.4 L196.4,651.8 L195.2,646.3 L194.2,640.9 L193.4,635.6 L192.8,630.3 L192.5,625.0 L192.3,619.9 L192.3,614.7 L192.5,609.7 L192.9,604.7 L193.5,599.7 L194.2,594.8 L195.2,590.0 L196.3,585.2 L197.6,580.4 L199.1,575.7 L200.5,571.0 L202.1,566.4 L203.6,561.7 L205.3,557.0 L206.9,552.4 L208.7,547.8 L210.5,543.2 L212.3,538.6 L214.2,534.1 L216.2,529.5 L218.2,525.0 L220.3,520.5 L222.5,516.0 L224.8,511.5 L227.1,507.1 L229.5,502.7 L232.1,498.3 L234.7,494.0 L237.5,489.7 L240.4,485.4 L243.5,481.2 L246.9,477.0 L250.5,473.0 L254.5,469.0 L259.0,465.2 L264.7,461.8 L276.7,460.2Z" fill="none" stroke="#42a07c" stroke-width="2" stroke-linejoin="round" opacity="0.55"/>
<path d="M257.8,448.0 L261.3,459.6 L260.5,466.2 L259.0,471.9 L257.0,477.2 L254.8,482.2 L252.4,486.9 L249.9,491.5 L247.3,495.9 L244.5,500.2 L241.6,504.5 L238.7,508.6 L235.7,512.6 L232.6,516.6 L229.5,520.5 L226.4,524.4 L223.1,528.1 L219.9,531.9 L216.5,535.6 L213.2,539.2 L209.8,542.8 L206.3,546.3 L202.9,549.8 L199.3,553.3 L195.8,556.7 L192.2,560.0 L188.6,563.4 L184.9,566.6 L181.2,569.9 L177.5,573.1 L173.6,576.1 L169.6,579.0 L165.4,581.7 L161.2,584.3 L156.8,586.7 L152.3,589.0 L147.6,591.1 L142.8,593.1 L137.9,595.0 L132.8,596.6 L127.6,598.1 L122.3,599.5 L116.8,600.6 L111.1,601.6 L105.3,602.4 L99.3,603.0 L93.1,603.3 L86.5,603.3 L79.4,602.5 L79.4,602.5 L79.7,595.4 L80.6,588.9 L81.8,582.8 L83.2,576.9 L84.8,571.3 L86.6,565.8 L88.6,560.5 L90.6,555.4 L92.9,550.5 L95.2,545.7 L97.8,541.1 L100.4,536.7 L103.2,532.4 L106.1,528.2 L109.1,524.2 L112.3,520.4 L115.6,516.7 L119.0,513.1 L122.6,509.7 L126.2,506.4 L130.0,503.2 L133.7,500.1 L137.5,496.9 L141.4,493.9 L145.3,490.8 L149.2,487.9 L153.1,484.9 L157.1,482.0 L161.2,479.2 L165.2,476.3 L169.3,473.6 L173.5,470.9 L177.7,468.2 L182.0,465.6 L186.3,463.1 L190.7,460.6 L195.1,458.2 L199.6,455.9 L204.2,453.7 L208.8,451.6 L213.6,449.6 L218.5,447.7 L223.5,446.0 L228.8,444.6 L234.3,443.4 L240.2,442.7 L246.8,442.8 L257.8,448.0Z" fill="none" stroke="#0f3f2c" stroke-width="10.5" stroke-linejoin="round"/>
<path d="M257.8,448.0 L261.3,459.6 L260.5,466.2 L259.0,471.9 L257.0,477.2 L254.8,482.2 L252.4,486.9 L249.9,491.5 L247.3,495.9 L244.5,500.2 L241.6,504.5 L238.7,508.6 L235.7,512.6 L232.6,516.6 L229.5,520.5 L226.4,524.4 L223.1,528.1 L219.9,531.9 L216.5,535.6 L213.2,539.2 L209.8,542.8 L206.3,546.3 L202.9,549.8 L199.3,553.3 L195.8,556.7 L192.2,560.0 L188.6,563.4 L184.9,566.6 L181.2,569.9 L177.5,573.1 L173.6,576.1 L169.6,579.0 L165.4,581.7 L161.2,584.3 L156.8,586.7 L152.3,589.0 L147.6,591.1 L142.8,593.1 L137.9,595.0 L132.8,596.6 L127.6,598.1 L122.3,599.5 L116.8,600.6 L111.1,601.6 L105.3,602.4 L99.3,603.0 L93.1,603.3 L86.5,603.3 L79.4,602.5 L79.4,602.5 L79.7,595.4 L80.6,588.9 L81.8,582.8 L83.2,576.9 L84.8,571.3 L86.6,565.8 L88.6,560.5 L90.6,555.4 L92.9,550.5 L95.2,545.7 L97.8,541.1 L100.4,536.7 L103.2,532.4 L106.1,528.2 L109.1,524.2 L112.3,520.4 L115.6,516.7 L119.0,513.1 L122.6,509.7 L126.2,506.4 L130.0,503.2 L133.7,500.1 L137.5,496.9 L141.4,493.9 L145.3,490.8 L149.2,487.9 L153.1,484.9 L157.1,482.0 L161.2,479.2 L165.2,476.3 L169.3,473.6 L173.5,470.9 L177.7,468.2 L182.0,465.6 L186.3,463.1 L190.7,460.6 L195.1,458.2 L199.6,455.9 L204.2,453.7 L208.8,451.6 L213.6,449.6 L218.5,447.7 L223.5,446.0 L228.8,444.6 L234.3,443.4 L240.2,442.7 L246.8,442.8 L257.8,448.0Z" fill="#216c4f"/>
<path d="M257.8,448.0 L258.5,471.4 L251.8,486.2 L243.7,499.4 L234.9,511.7 L225.5,523.3 L215.6,534.5 L205.4,545.2 L194.8,555.5 L183.9,565.5 L172.6,574.9 L160.2,583.2 L146.7,590.1 L132.1,595.8 L116.2,600.0 L99.0,602.6 L79.4,602.5 L79.4,602.5 M257.8,448.0 L257.6,470.3 L250.6,484.7 L242.2,497.7 L233.2,509.7 L223.7,521.2 L213.7,532.3 L203.4,542.9 L192.8,553.2 L181.9,563.1 L170.6,572.6 L158.3,580.9 L145.0,588.1 L130.6,594.1 L115.1,598.7 L98.3,601.8 L79.4,602.5 L79.4,602.5 M257.8,448.0 L256.7,469.3 L249.3,483.3 L240.8,495.9 L231.5,507.8 L221.8,519.2 L211.8,530.1 L201.4,540.6 L190.8,550.8 L179.8,560.8 L168.5,570.2 L156.4,578.7 L143.2,586.1 L129.1,592.4 L114.0,597.4 L97.7,601.1 L79.4,602.5 L79.4,602.5 M257.8,448.0 L255.8,468.2 L248.0,481.8 L239.3,494.2 L229.9,505.9 L220.0,517.1 L209.9,527.9 L199.4,538.4 L188.7,548.5 L177.8,558.4 L166.5,567.9 L154.4,576.5 L141.5,584.1 L127.7,590.6 L112.9,596.1 L97.0,600.3 L79.4,602.5 L79.4,602.5 M257.8,448.0 L254.9,467.2 L246.8,480.4 L237.8,492.5 L228.2,504.0 L218.2,515.0 L208.0,525.7 L197.5,536.1 L186.7,546.2 L175.8,556.1 L164.5,565.6 L152.5,574.3 L139.7,582.1 L126.2,588.9 L111.8,594.8 L96.4,599.6 L79.4,602.5 L79.4,602.5 M257.8,448.0 L253.9,466.1 L245.5,478.9 L236.3,490.8 L226.5,502.0 L216.4,512.9 L206.1,523.5 L195.5,533.8 L184.7,543.9 L173.7,553.7 L162.5,563.2 L150.6,572.0 L138.0,580.0 L124.7,587.2 L110.6,593.5 L95.7,598.9 L79.4,602.5 L79.4,602.5 M257.8,448.0 L253.0,465.0 L244.3,477.5 L234.8,489.0 L224.9,500.1 L214.6,510.8 L204.2,521.3 L193.5,531.5 L182.7,541.5 L171.7,551.4 L160.4,560.9 L148.6,569.8 L136.2,578.0 L123.2,585.5 L109.5,592.3 L95.1,598.1 L79.4,602.5 L79.4,602.5 M257.8,448.0 L252.1,464.0 L243.0,476.0 L233.3,487.3 L223.2,498.2 L212.8,508.8 L202.3,519.1 L191.6,529.3 L180.7,539.2 L169.7,549.0 L158.4,558.6 L146.7,567.6 L134.5,576.0 L121.7,583.8 L108.4,591.0 L94.4,597.4 L79.4,602.5 L79.4,602.5 M257.8,448.0 L251.2,462.9 L241.8,474.6 L231.8,485.6 L221.5,496.3 L211.0,506.7 L200.4,516.9 L189.6,527.0 L178.7,536.9 L167.6,546.7 L156.4,556.3 L144.8,565.4 L132.7,574.0 L120.3,582.1 L107.3,589.7 L93.8,596.6 L79.4,602.5 L79.4,602.5 M257.8,448.0 L250.3,461.9 L240.5,473.1 L230.3,483.9 L219.9,494.3 L209.2,504.6 L198.5,514.7 L187.6,524.7 L176.7,534.6 L165.6,544.3 L154.4,553.9 L142.9,563.1 L131.0,572.0 L118.8,580.4 L106.2,588.4 L93.1,595.9 L79.4,602.5 L79.4,602.5 M257.8,448.0 L249.4,460.8 L239.2,471.7 L228.8,482.1 L218.2,492.4 L207.4,502.5 L196.6,512.5 L185.7,522.4 L174.6,532.2 L163.6,542.0 L152.4,551.6 L140.9,560.9 L129.2,570.0 L117.3,578.7 L105.1,587.1 L92.5,595.1 L79.4,602.5 L79.4,602.5 M257.8,448.0 L248.5,459.8 L238.0,470.2 L227.3,480.4 L216.5,490.5 L205.6,500.4 L194.7,510.3 L183.7,520.2 L172.6,529.9 L161.5,539.6 L150.3,549.3 L139.0,558.7 L127.5,567.9 L115.8,577.0 L103.9,585.8 L91.9,594.4 L79.4,602.5 L79.4,602.5 M257.8,448.0 L247.5,458.7 L236.7,468.8 L225.8,478.7 L214.8,488.6 L203.8,498.4 L192.8,508.1 L181.7,517.9 L170.6,527.6 L159.5,537.3 L148.3,546.9 L137.1,556.5 L125.8,565.9 L114.3,575.3 L102.8,584.5 L91.2,593.6 L79.4,602.5 L79.4,602.5 M257.8,448.0 L246.6,457.7 L235.5,467.3 L224.3,477.0 L213.2,486.6 L202.0,496.3 L190.9,505.9 L179.7,515.6 L168.6,525.3 L157.4,534.9 L146.3,544.6 L135.1,554.2 L124.0,563.9 L112.9,573.6 L101.7,583.2 L90.6,592.9 L79.4,602.5 L79.4,602.5 M257.8,448.0 L245.7,456.6 L234.2,465.9 L222.8,475.2 L211.5,484.7 L200.2,494.2 L189.0,503.8 L177.8,513.3 L166.6,522.9 L155.4,532.6 L144.3,542.3 L133.2,552.0 L122.3,561.9 L111.4,571.9 L100.6,581.9 L89.9,592.1 L79.4,602.5 L79.4,602.5 M257.8,448.0 L244.8,455.5 L233.0,464.4 L221.3,473.5 L209.8,482.8 L198.4,492.1 L187.1,501.6 L175.8,511.1 L164.6,520.6 L153.4,530.2 L142.3,539.9 L131.3,549.8 L120.5,559.9 L109.9,570.1 L99.5,580.6 L89.3,591.4 L79.4,602.5 L79.4,602.5 M257.8,448.0 L243.9,454.5 L231.7,463.0 L219.8,471.8 L208.2,480.9 L196.6,490.1 L185.2,499.4 L173.8,508.8 L162.5,518.3 L151.3,527.9 L140.2,537.6 L129.4,547.6 L118.8,557.9 L108.4,568.4 L98.4,579.4 L88.6,590.6 L79.4,602.5 L79.4,602.5 M257.8,448.0 L243.0,453.4 L230.4,461.5 L218.4,470.1 L206.5,478.9 L194.8,488.0 L183.3,497.2 L171.9,506.5 L160.5,516.0 L149.3,525.5 L138.2,535.3 L127.4,545.3 L117.0,555.8 L106.9,566.7 L97.2,578.1 L88.0,589.9 L79.4,602.5 L79.4,602.5 M257.8,448.0 L242.0,452.4 L229.2,460.1 L216.9,468.4 L204.8,477.0 L193.0,485.9 L181.4,495.0 L169.9,504.2 L158.5,513.6 L147.3,523.2 L136.2,532.9 L125.5,543.1 L115.3,553.8 L105.5,565.0 L96.1,576.8 L87.3,589.2 L79.4,602.5 L79.4,602.5 M257.8,448.0 L241.1,451.3 L227.9,458.6 L215.4,466.6 L203.2,475.1 L191.2,483.8 L179.5,492.8 L167.9,502.0 L156.5,511.3 L145.2,520.8 L134.2,530.6 L123.6,540.9 L113.5,551.8 L104.0,563.3 L95.0,575.5 L86.7,588.4 L79.4,602.5 L79.4,602.5 M257.8,448.0 L240.2,450.3 L226.7,457.2 L213.9,464.9 L201.5,473.2 L189.4,481.7 L177.6,490.6 L165.9,499.7 L154.5,509.0 L143.2,518.5 L132.1,528.3 L121.7,538.7 L111.8,549.8 L102.5,561.6 L93.9,574.2 L86.0,587.7 L79.4,602.5 L79.4,602.5 M257.8,448.0 L239.3,449.2 L225.4,455.7 L212.4,463.2 L199.8,471.2 L187.6,479.7 L175.7,488.4 L164.0,497.4 L152.5,506.7 L141.2,516.1 L130.1,525.9 L119.7,536.4 L110.0,547.8 L101.0,559.9 L92.8,572.9 L85.4,586.9 L79.4,602.5 L79.4,602.5 M257.8,448.0 L238.4,448.1 L224.2,454.3 L210.9,461.5 L198.2,469.3 L185.8,477.6 L173.8,486.2 L162.0,495.1 L150.5,504.3 L139.1,513.8 L128.1,523.6 L117.8,534.2 L108.3,545.7 L99.5,558.2 L91.6,571.6 L84.7,586.2 L79.4,602.5 L79.4,602.5 M257.8,448.0 L237.5,447.1 L222.9,452.8 L209.4,459.7 L196.5,467.4 L184.0,475.5 L171.9,484.0 L160.0,492.9 L148.4,502.0 L137.1,511.4 L126.1,521.3 L115.9,532.0 L106.5,543.7 L98.1,556.5 L90.5,570.3 L84.1,585.4 L79.4,602.5 L79.4,602.5 M257.8,448.0 L236.6,446.0 L221.6,451.4 L207.9,458.0 L194.8,465.4 L182.2,473.4 L170.0,481.8 L158.1,490.6 L146.4,499.7 L135.1,509.1 L124.1,518.9 L113.9,529.8 L104.8,541.7 L96.6,554.8 L89.4,569.0 L83.4,584.7 L79.4,602.5 L79.4,602.5 M257.8,448.0 L235.6,445.0 L220.4,449.9 L206.4,456.3 L193.2,463.5 L180.4,471.3 L168.1,479.6 L156.1,488.3 L144.4,497.4 L133.0,506.7 L122.0,516.6 L112.0,527.6 L103.0,539.7 L95.1,553.1 L88.3,567.7 L82.8,583.9 L79.4,602.5 L79.4,602.5 M257.8,448.0 L234.7,443.9 L219.1,448.4 L204.9,454.6 L191.5,461.6 L178.6,469.3 L166.2,477.4 L154.1,486.0 L142.4,495.0 L131.0,504.4 L120.0,514.3 L110.1,525.3 L101.3,537.7 L93.6,551.4 L87.2,566.5 L82.2,583.2 L79.4,602.5 L79.4,602.5" clip-path="url(#c8)" fill="none" stroke="#4aa686" stroke-width="0.7" stroke-opacity="0.8"/>
<path d="M257.8,448.0 L261.3,459.6 L260.5,466.2 L259.0,471.9 L257.0,477.2 L254.8,482.2 L252.4,486.9 L249.9,491.5 L247.3,495.9 L244.5,500.2 L241.6,504.5 L238.7,508.6 L235.7,512.6 L232.6,516.6 L229.5,520.5 L226.4,524.4 L223.1,528.1 L219.9,531.9 L216.5,535.6 L213.2,539.2 L209.8,542.8 L206.3,546.3 L202.9,549.8 L199.3,553.3 L195.8,556.7 L192.2,560.0 L188.6,563.4 L184.9,566.6 L181.2,569.9 L177.5,573.1 L173.6,576.1 L169.6,579.0 L165.4,581.7 L161.2,584.3 L156.8,586.7 L152.3,589.0 L147.6,591.1 L142.8,593.1 L137.9,595.0 L132.8,596.6 L127.6,598.1 L122.3,599.5 L116.8,600.6 L111.1,601.6 L105.3,602.4 L99.3,603.0 L93.1,603.3 L86.5,603.3 L79.4,602.5 L79.4,602.5 L79.7,595.4 L80.6,588.9 L81.8,582.8 L83.2,576.9 L84.8,571.3 L86.6,565.8 L88.6,560.5 L90.6,555.4 L92.9,550.5 L95.2,545.7 L97.8,541.1 L100.4,536.7 L103.2,532.4 L106.1,528.2 L109.1,524.2 L112.3,520.4 L115.6,516.7 L119.0,513.1 L122.6,509.7 L126.2,506.4 L130.0,503.2 L133.7,500.1 L137.5,496.9 L141.4,493.9 L145.3,490.8 L149.2,487.9 L153.1,484.9 L157.1,482.0 L161.2,479.2 L165.2,476.3 L169.3,473.6 L173.5,470.9 L177.7,468.2 L182.0,465.6 L186.3,463.1 L190.7,460.6 L195.1,458.2 L199.6,455.9 L204.2,453.7 L208.8,451.6 L213.6,449.6 L218.5,447.7 L223.5,446.0 L228.8,444.6 L234.3,443.4 L240.2,442.7 L246.8,442.8 L257.8,448.0Z" clip-path="url(#c8)" fill="none" stroke="#0c3a28" stroke-width="15" stroke-opacity="0.35" stroke-linejoin="round"/>
<path d="M257.8,448.0 L261.3,459.6 L260.5,466.2 L259.0,471.9 L257.0,477.2 L254.8,482.2 L252.4,486.9 L249.9,491.5 L247.3,495.9 L244.5,500.2 L241.6,504.5 L238.7,508.6 L235.7,512.6 L232.6,516.6 L229.5,520.5 L226.4,524.4 L223.1,528.1 L219.9,531.9 L216.5,535.6 L213.2,539.2 L209.8,542.8 L206.3,546.3 L202.9,549.8 L199.3,553.3 L195.8,556.7 L192.2,560.0 L188.6,563.4 L184.9,566.6 L181.2,569.9 L177.5,573.1 L173.6,576.1 L169.6,579.0 L165.4,581.7 L161.2,584.3 L156.8,586.7 L152.3,589.0 L147.6,591.1 L142.8,593.1 L137.9,595.0 L132.8,596.6 L127.6,598.1 L122.3,599.5 L116.8,600.6 L111.1,601.6 L105.3,602.4 L99.3,603.0 L93.1,603.3 L86.5,603.3 L79.4,602.5 L79.4,602.5 L79.7,595.4 L80.6,588.9 L81.8,582.8 L83.2,576.9 L84.8,571.3 L86.6,565.8 L88.6,560.5 L90.6,555.4 L92.9,550.5 L95.2,545.7 L97.8,541.1 L100.4,536.7 L103.2,532.4 L106.1,528.2 L109.1,524.2 L112.3,520.4 L115.6,516.7 L119.0,513.1 L122.6,509.7 L126.2,506.4 L130.0,503.2 L133.7,500.1 L137.5,496.9 L141.4,493.9 L145.3,490.8 L149.2,487.9 L153.1,484.9 L157.1,482.0 L161.2,479.2 L165.2,476.3 L169.3,473.6 L173.5,470.9 L177.7,468.2 L182.0,465.6 L186.3,463.1 L190.7,460.6 L195.1,458.2 L199.6,455.9 L204.2,453.7 L208.8,451.6 L213.6,449.6 L218.5,447.7 L223.5,446.0 L228.8,444.6 L234.3,443.4 L240.2,442.7 L246.8,442.8 L257.8,448.0Z" fill="none" stroke="#257c5b" stroke-width="8" stroke-linejoin="round"/>
<path d="M257.8,448.0 L261.3,459.6 L260.5,466.2 L259.0,471.9 L257.0,477.2 L254.8,482.2 L252.4,486.9 L249.9,491.5 L247.3,495.9 L244.5,500.2 L241.6,504.5 L238.7,508.6 L235.7,512.6 L232.6,516.6 L229.5,520.5 L226.4,524.4 L223.1,528.1 L219.9,531.9 L216.5,535.6 L213.2,539.2 L209.8,542.8 L206.3,546.3 L202.9,549.8 L199.3,553.3 L195.8,556.7 L192.2,560.0 L188.6,563.4 L184.9,566.6 L181.2,569.9 L177.5,573.1 L173.6,576.1 L169.6,579.0 L165.4,581.7 L161.2,584.3 L156.8,586.7 L152.3,589.0 L147.6,591.1 L142.8,593.1 L137.9,595.0 L132.8,596.6 L127.6,598.1 L122.3,599.5 L116.8,600.6 L111.1,601.6 L105.3,602.4 L99.3,603.0 L93.1,603.3 L86.5,603.3 L79.4,602.5 L79.4,602.5 L79.7,595.4 L80.6,588.9 L81.8,582.8 L83.2,576.9 L84.8,571.3 L86.6,565.8 L88.6,560.5 L90.6,555.4 L92.9,550.5 L95.2,545.7 L97.8,541.1 L100.4,536.7 L103.2,532.4 L106.1,528.2 L109.1,524.2 L112.3,520.4 L115.6,516.7 L119.0,513.1 L122.6,509.7 L126.2,506.4 L130.0,503.2 L133.7,500.1 L137.5,496.9 L141.4,493.9 L145.3,490.8 L149.2,487.9 L153.1,484.9 L157.1,482.0 L161.2,479.2 L165.2,476.3 L169.3,473.6 L173.5,470.9 L177.7,468.2 L182.0,465.6 L186.3,463.1 L190.7,460.6 L195.1,458.2 L199.6,455.9 L204.2,453.7 L208.8,451.6 L213.6,449.6 L218.5,447.7 L223.5,446.0 L228.8,444.6 L234.3,443.4 L240.2,442.7 L246.8,442.8 L257.8,448.0Z" fill="none" stroke="#42a07c" stroke-width="2" stroke-linejoin="round" opacity="0.55"/>
<path d="M248.4,427.5 L245.1,439.2 L240.9,444.3 L236.5,448.3 L232.0,451.7 L227.5,454.6 L222.9,457.3 L218.3,459.8 L213.6,462.1 L209.0,464.3 L204.3,466.3 L199.6,468.2 L194.9,469.9 L190.2,471.6 L185.4,473.2 L180.7,474.7 L175.9,476.2 L171.2,477.6 L166.4,478.9 L161.6,480.1 L156.8,481.3 L152.0,482.4 L147.2,483.5 L142.4,484.5 L137.5,485.4 L132.7,486.3 L127.8,487.1 L123.0,487.9 L118.1,488.7 L113.2,489.3 L108.3,489.7 L103.4,490.0 L98.4,490.0 L93.5,489.9 L88.4,489.6 L83.4,489.1 L78.3,488.4 L73.2,487.4 L68.1,486.3 L63.0,485.0 L57.8,483.4 L52.5,481.7 L47.3,479.7 L42.0,477.5 L36.7,475.0 L31.3,472.2 L25.9,469.1 L20.4,465.5 L14.8,461.1 L14.8,461.1 L18.9,455.2 L23.2,450.3 L27.5,445.8 L31.9,441.6 L36.3,437.7 L40.7,434.1 L45.2,430.7 L49.7,427.5 L54.3,424.6 L58.8,421.8 L63.4,419.3 L68.1,417.0 L72.7,414.9 L77.4,413.0 L82.2,411.3 L86.9,409.7 L91.7,408.4 L96.5,407.2 L101.3,406.3 L106.2,405.5 L111.0,404.8 L115.9,404.2 L120.8,403.7 L125.7,403.2 L130.6,402.7 L135.5,402.3 L140.4,402.0 L145.4,401.7 L150.3,401.5 L155.2,401.3 L160.2,401.2 L165.1,401.2 L170.1,401.2 L175.1,401.3 L180.1,401.6 L185.1,401.8 L190.1,402.2 L195.2,402.7 L200.2,403.3 L205.3,404.1 L210.4,405.0 L215.5,406.0 L220.7,407.3 L225.9,408.9 L231.1,410.9 L236.5,413.5 L242.0,417.2 L248.4,427.5Z" fill="none" stroke="#0f3f2c" stroke-width="10.5" stroke-linejoin="round"/>
<path d="M248.4,427.5 L245.1,439.2 L240.9,444.3 L236.5,448.3 L232.0,451.7 L227.5,454.6 L222.9,457.3 L218.3,459.8 L213.6,462.1 L209.0,464.3 L204.3,466.3 L199.6,468.2 L194.9,469.9 L190.2,471.6 L185.4,473.2 L180.7,474.7 L175.9,476.2 L171.2,477.6 L166.4,478.9 L161.6,480.1 L156.8,481.3 L152.0,482.4 L147.2,483.5 L142.4,484.5 L137.5,485.4 L132.7,486.3 L127.8,487.1 L123.0,487.9 L118.1,488.7 L113.2,489.3 L108.3,489.7 L103.4,490.0 L98.4,490.0 L93.5,489.9 L88.4,489.6 L83.4,489.1 L78.3,488.4 L73.2,487.4 L68.1,486.3 L63.0,485.0 L57.8,483.4 L52.5,481.7 L47.3,479.7 L42.0,477.5 L36.7,475.0 L31.3,472.2 L25.9,469.1 L20.4,465.5 L14.8,461.1 L14.8,461.1 L18.9,455.2 L23.2,450.3 L27.5,445.8 L31.9,441.6 L36.3,437.7 L40.7,434.1 L45.2,430.7 L49.7,427.5 L54.3,424.6 L58.8,421.8 L63.4,419.3 L68.1,417.0 L72.7,414.9 L77.4,413.0 L82.2,411.3 L86.9,409.7 L91.7,408.4 L96.5,407.2 L101.3,406.3 L106.2,405.5 L111.0,404.8 L115.9,404.2 L120.8,403.7 L125.7,403.2 L130.6,402.7 L135.5,402.3 L140.4,402.0 L145.4,401.7 L150.3,401.5 L155.2,401.3 L160.2,401.2 L165.1,401.2 L170.1,401.2 L175.1,401.3 L180.1,401.6 L185.1,401.8 L190.1,402.2 L195.2,402.7 L200.2,403.3 L205.3,404.1 L210.4,405.0 L215.5,406.0 L220.7,407.3 L225.9,408.9 L231.1,410.9 L236.5,413.5 L242.0,417.2 L248.4,427.5Z" fill="#216c4f"/>
<path d="M248.4,427.5 L236.4,447.6 L222.8,456.4 L208.8,463.1 L194.7,468.7 L180.5,473.4 L166.2,477.4 L151.8,480.9 L137.3,483.9 L122.8,486.4 L108.1,488.2 L93.3,488.5 L78.1,487.0 L62.8,483.9 L47.2,478.8 L31.2,471.7 L14.8,461.1 L14.8,461.1 M248.4,427.5 L236.2,446.2 L222.5,454.5 L208.5,460.9 L194.4,466.2 L180.1,470.7 L165.8,474.6 L151.3,477.9 L136.9,480.8 L122.3,483.3 L107.7,485.1 L92.8,485.5 L77.8,484.4 L62.5,481.6 L46.9,477.2 L31.1,470.7 L14.8,461.1 L14.8,461.1 M248.4,427.5 L236.0,444.8 L222.2,452.6 L208.2,458.6 L194.0,463.6 L179.7,467.9 L165.4,471.7 L150.9,474.9 L136.4,477.8 L121.9,480.2 L107.2,482.1 L92.4,482.6 L77.4,481.7 L62.1,479.4 L46.7,475.5 L31.0,469.7 L14.8,461.1 L14.8,461.1 M248.4,427.5 L235.8,443.4 L221.9,450.7 L207.9,456.4 L193.6,461.1 L179.3,465.2 L164.9,468.8 L150.5,472.0 L136.0,474.7 L121.4,477.2 L106.8,479.0 L92.0,479.7 L77.0,479.1 L61.8,477.2 L46.4,473.8 L30.8,468.8 L14.8,461.1 L14.8,461.1 M248.4,427.5 L235.6,442.0 L221.7,448.8 L207.5,454.1 L193.3,458.6 L178.9,462.5 L164.5,465.9 L150.1,469.0 L135.5,471.7 L121.0,474.1 L106.4,476.0 L91.6,476.8 L76.6,476.5 L61.5,474.9 L46.2,472.1 L30.7,467.8 L14.8,461.1 L14.8,461.1 M248.4,427.5 L235.4,440.7 L221.4,446.9 L207.2,451.8 L192.9,456.1 L178.5,459.8 L164.1,463.1 L149.6,466.0 L135.1,468.7 L120.5,471.0 L105.9,472.9 L91.2,473.9 L76.2,473.8 L61.2,472.7 L46.0,470.4 L30.5,466.8 L14.8,461.1 L14.8,461.1 M248.4,427.5 L235.2,439.3 L221.1,445.0 L206.9,449.6 L192.5,453.5 L178.1,457.0 L163.7,460.2 L149.2,463.0 L134.7,465.6 L120.1,467.9 L105.5,469.9 L90.7,471.0 L75.9,471.2 L60.9,470.4 L45.7,468.7 L30.4,465.8 L14.8,461.1 L14.8,461.1 M248.4,427.5 L235.0,437.9 L220.8,443.1 L206.6,447.3 L192.2,451.0 L177.8,454.3 L163.3,457.3 L148.8,460.1 L134.2,462.6 L119.7,464.8 L105.0,466.8 L90.3,468.1 L75.5,468.5 L60.5,468.2 L45.5,467.0 L30.3,464.8 L14.8,461.1 L14.8,461.1 M248.4,427.5 L234.8,436.5 L220.6,441.2 L206.2,445.1 L191.8,448.5 L177.4,451.6 L162.9,454.4 L148.3,457.1 L133.8,459.5 L119.2,461.8 L104.6,463.8 L89.9,465.2 L75.1,465.9 L60.2,466.0 L45.2,465.3 L30.1,463.9 L14.8,461.1 L14.8,461.1 M248.4,427.5 L234.6,435.1 L220.3,439.3 L205.9,442.8 L191.5,446.0 L177.0,448.9 L162.5,451.6 L147.9,454.1 L133.4,456.5 L118.8,458.7 L104.2,460.7 L89.5,462.2 L74.7,463.3 L59.9,463.7 L45.0,463.6 L30.0,462.9 L14.8,461.1 L14.8,461.1 M248.4,427.5 L234.4,433.7 L220.0,437.4 L205.6,440.6 L191.1,443.5 L176.6,446.2 L162.0,448.7 L147.5,451.1 L132.9,453.4 L118.3,455.6 L103.7,457.7 L89.1,459.3 L74.3,460.6 L59.6,461.5 L44.7,461.9 L29.8,461.9 L14.8,461.1 L14.8,461.1 M248.4,427.5 L234.2,432.4 L219.8,435.5 L205.3,438.3 L190.7,440.9 L176.2,443.4 L161.6,445.8 L147.1,448.1 L132.5,450.4 L117.9,452.5 L103.3,454.6 L88.6,456.4 L74.0,458.0 L59.3,459.3 L44.5,460.3 L29.7,460.9 L14.8,461.1 L14.8,461.1 M248.4,427.5 L234.0,431.0 L219.5,433.6 L204.9,436.0 L190.4,438.4 L175.8,440.7 L161.2,443.0 L146.6,445.2 L132.0,447.3 L117.5,449.5 L102.8,451.5 L88.2,453.5 L73.6,455.3 L58.9,457.0 L44.3,458.6 L29.5,460.0 L14.8,461.1 L14.8,461.1 M248.4,427.5 L233.8,429.6 L219.2,431.7 L204.6,433.8 L190.0,435.9 L175.4,438.0 L160.8,440.1 L146.2,442.2 L131.6,444.3 L117.0,446.4 L102.4,448.5 L87.8,450.6 L73.2,452.7 L58.6,454.8 L44.0,456.9 L29.4,459.0 L14.8,461.1 L14.8,461.1 M248.4,427.5 L233.6,428.2 L218.9,429.8 L204.3,431.5 L189.6,433.4 L175.0,435.3 L160.4,437.2 L145.8,439.2 L131.2,441.2 L116.6,443.3 L102.0,445.4 L87.4,447.7 L72.8,450.0 L58.3,452.5 L43.8,455.2 L29.3,458.0 L14.8,461.1 L14.8,461.1 M248.4,427.5 L233.4,426.8 L218.7,427.9 L204.0,429.3 L189.3,430.8 L174.6,432.5 L160.0,434.3 L145.4,436.2 L130.7,438.2 L116.1,440.2 L101.5,442.4 L87.0,444.8 L72.4,447.4 L58.0,450.3 L43.5,453.5 L29.1,457.0 L14.8,461.1 L14.8,461.1 M248.4,427.5 L233.2,425.4 L218.4,426.0 L203.6,427.0 L188.9,428.3 L174.2,429.8 L159.6,431.5 L144.9,433.3 L130.3,435.1 L115.7,437.2 L101.1,439.3 L86.6,441.8 L72.1,444.8 L57.6,448.1 L43.3,451.8 L29.0,456.0 L14.8,461.1 L14.8,461.1 M248.4,427.5 L233.0,424.1 L218.1,424.1 L203.3,424.8 L188.6,425.8 L173.8,427.1 L159.2,428.6 L144.5,430.3 L129.9,432.1 L115.2,434.1 L100.7,436.3 L86.1,438.9 L71.7,442.1 L57.3,445.8 L43.0,450.1 L28.8,455.1 L14.8,461.1 L14.8,461.1 M248.4,427.5 L232.8,422.7 L217.8,422.2 L203.0,422.5 L188.2,423.3 L173.5,424.4 L158.7,425.7 L144.1,427.3 L129.4,429.1 L114.8,431.0 L100.2,433.2 L85.7,436.0 L71.3,439.5 L57.0,443.6 L42.8,448.4 L28.7,454.1 L14.8,461.1 L14.8,461.1 M248.4,427.5 L232.6,421.3 L217.6,420.3 L202.7,420.2 L187.8,420.8 L173.1,421.7 L158.3,422.9 L143.6,424.3 L129.0,426.0 L114.4,427.9 L99.8,430.2 L85.3,433.1 L70.9,436.8 L56.7,441.4 L42.6,446.7 L28.6,453.1 L14.8,461.1 L14.8,461.1 M248.4,427.5 L232.4,419.9 L217.3,418.4 L202.3,418.0 L187.5,418.2 L172.7,418.9 L157.9,420.0 L143.2,421.3 L128.5,423.0 L113.9,424.8 L99.3,427.1 L84.9,430.2 L70.5,434.2 L56.4,439.1 L42.3,445.1 L28.4,452.1 L14.8,461.1 L14.8,461.1 M248.4,427.5 L232.2,418.5 L217.0,416.5 L202.0,415.7 L187.1,415.7 L172.3,416.2 L157.5,417.1 L142.8,418.4 L128.1,419.9 L113.5,421.8 L98.9,424.0 L84.5,427.3 L70.2,431.5 L56.0,436.9 L42.1,443.4 L28.3,451.2 L14.8,461.1 L14.8,461.1 M248.4,427.5 L232.0,417.1 L216.7,414.6 L201.7,413.5 L186.7,413.2 L171.9,413.5 L157.1,414.2 L142.4,415.4 L127.7,416.9 L113.0,418.7 L98.5,421.0 L84.0,424.4 L69.8,428.9 L55.7,434.6 L41.8,441.7 L28.1,450.2 L14.8,461.1 L14.8,461.1 M248.4,427.5 L231.8,415.8 L216.5,412.7 L201.4,411.2 L186.4,410.7 L171.5,410.8 L156.7,411.4 L141.9,412.4 L127.2,413.8 L112.6,415.6 L98.0,417.9 L83.6,421.4 L69.4,426.3 L55.4,432.4 L41.6,440.0 L28.0,449.2 L14.8,461.1 L14.8,461.1 M248.4,427.5 L231.6,414.4 L216.2,410.8 L201.0,409.0 L186.0,408.1 L171.1,408.0 L156.3,408.5 L141.5,409.4 L126.8,410.8 L112.1,412.5 L97.6,414.9 L83.2,418.5 L69.0,423.6 L55.1,430.2 L41.3,438.3 L27.9,448.2 L14.8,461.1 L14.8,461.1 M248.4,427.5 L231.4,413.0 L215.9,408.9 L200.7,406.7 L185.7,405.6 L170.7,405.3 L155.9,405.6 L141.1,406.4 L126.4,407.7 L111.7,409.5 L97.1,411.8 L82.8,415.6 L68.6,421.0 L54.7,427.9 L41.1,436.6 L27.7,447.3 L14.8,461.1 L14.8,461.1 M248.4,427.5 L231.2,411.6 L215.7,407.0 L200.4,404.4 L185.3,403.1 L170.3,402.6 L155.4,402.7 L140.6,403.5 L125.9,404.7 L111.3,406.4 L96.7,408.8 L82.4,412.7 L68.3,418.3 L54.4,425.7 L40.9,434.9 L27.6,446.3 L14.8,461.1 L14.8,461.1" clip-path="url(#c9)" fill="none" stroke="#4aa686" stroke-width="0.7" stroke-opacity="0.8"/>
<path d="M248.4,427.5 L245.1,439.2 L240.9,444.3 L236.5,448.3 L232.0,451.7 L227.5,454.6 L222.9,457.3 L218.3,459.8 L213.6,462.1 L209.0,464.3 L204.3,466.3 L199.6,468.2 L194.9,469.9 L190.2,471.6 L185.4,473.2 L180.7,474.7 L175.9,476.2 L171.2,477.6 L166.4,478.9 L161.6,480.1 L156.8,481.3 L152.0,482.4 L147.2,483.5 L142.4,484.5 L137.5,485.4 L132.7,486.3 L127.8,487.1 L123.0,487.9 L118.1,488.7 L113.2,489.3 L108.3,489.7 L103.4,490.0 L98.4,490.0 L93.5,489.9 L88.4,489.6 L83.4,489.1 L78.3,488.4 L73.2,487.4 L68.1,486.3 L63.0,485.0 L57.8,483.4 L52.5,481.7 L47.3,479.7 L42.0,477.5 L36.7,475.0 L31.3,472.2 L25.9,469.1 L20.4,465.5 L14.8,461.1 L14.8,461.1 L18.9,455.2 L23.2,450.3 L27.5,445.8 L31.9,441.6 L36.3,437.7 L40.7,434.1 L45.2,430.7 L49.7,427.5 L54.3,424.6 L58.8,421.8 L63.4,419.3 L68.1,417.0 L72.7,414.9 L77.4,413.0 L82.2,411.3 L86.9,409.7 L91.7,408.4 L96.5,407.2 L101.3,406.3 L106.2,405.5 L111.0,404.8 L115.9,404.2 L120.8,403.7 L125.7,403.2 L130.6,402.7 L135.5,402.3 L140.4,402.0 L145.4,401.7 L150.3,401.5 L155.2,401.3 L160.2,401.2 L165.1,401.2 L170.1,401.2 L175.1,401.3 L180.1,401.6 L185.1,401.8 L190.1,402.2 L195.2,402.7 L200.2,403.3 L205.3,404.1 L210.4,405.0 L215.5,406.0 L220.7,407.3 L225.9,408.9 L231.1,410.9 L236.5,413.5 L242.0,417.2 L248.4,427.5Z" clip-path="url(#c9)" fill="none" stroke="#0c3a28" stroke-width="15" stroke-opacity="0.35" stroke-linejoin="round"/>
<path d="M248.4,427.5 L245.1,439.2 L240.9,444.3 L236.5,448.3 L232.0,451.7 L227.5,454.6 L222.9,457.3 L218.3,459.8 L213.6,462.1 L209.0,464.3 L204.3,466.3 L199.6,468.2 L194.9,469.9 L190.2,471.6 L185.4,473.2 L180.7,474.7 L175.9,476.2 L171.2,477.6 L166.4,478.9 L161.6,480.1 L156.8,481.3 L152.0,482.4 L147.2,483.5 L142.4,484.5 L137.5,485.4 L132.7,486.3 L127.8,487.1 L123.0,487.9 L118.1,488.7 L113.2,489.3 L108.3,489.7 L103.4,490.0 L98.4,490.0 L93.5,489.9 L88.4,489.6 L83.4,489.1 L78.3,488.4 L73.2,487.4 L68.1,486.3 L63.0,485.0 L57.8,483.4 L52.5,481.7 L47.3,479.7 L42.0,477.5 L36.7,475.0 L31.3,472.2 L25.9,469.1 L20.4,465.5 L14.8,461.1 L14.8,461.1 L18.9,455.2 L23.2,450.3 L27.5,445.8 L31.9,441.6 L36.3,437.7 L40.7,434.1 L45.2,430.7 L49.7,427.5 L54.3,424.6 L58.8,421.8 L63.4,419.3 L68.1,417.0 L72.7,414.9 L77.4,413.0 L82.2,411.3 L86.9,409.7 L91.7,408.4 L96.5,407.2 L101.3,406.3 L106.2,405.5 L111.0,404.8 L115.9,404.2 L120.8,403.7 L125.7,403.2 L130.6,402.7 L135.5,402.3 L140.4,402.0 L145.4,401.7 L150.3,401.5 L155.2,401.3 L160.2,401.2 L165.1,401.2 L170.1,401.2 L175.1,401.3 L180.1,401.6 L185.1,401.8 L190.1,402.2 L195.2,402.7 L200.2,403.3 L205.3,404.1 L210.4,405.0 L215.5,406.0 L220.7,407.3 L225.9,408.9 L231.1,410.9 L236.5,413.5 L242.0,417.2 L248.4,427.5Z" fill="none" stroke="#257c5b" stroke-width="8" stroke-linejoin="round"/>
<path d="M248.4,427.5 L245.1,439.2 L240.9,444.3 L236.5,448.3 L232.0,451.7 L227.5,454.6 L222.9,457.3 L218.3,459.8 L213.6,462.1 L209.0,464.3 L204.3,466.3 L199.6,468.2 L194.9,469.9 L190.2,471.6 L185.4,473.2 L180.7,474.7 L175.9,476.2 L171.2,477.6 L166.4,478.9 L161.6,480.1 L156.8,481.3 L152.0,482.4 L147.2,483.5 L142.4,484.5 L137.5,485.4 L132.7,486.3 L127.8,487.1 L123.0,487.9 L118.1,488.7 L113.2,489.3 L108.3,489.7 L103.4,490.0 L98.4,490.0 L93.5,489.9 L88.4,489.6 L83.4,489.1 L78.3,488.4 L73.2,487.4 L68.1,486.3 L63.0,485.0 L57.8,483.4 L52.5,481.7 L47.3,479.7 L42.0,477.5 L36.7,475.0 L31.3,472.2 L25.9,469.1 L20.4,465.5 L14.8,461.1 L14.8,461.1 L18.9,455.2 L23.2,450.3 L27.5,445.8 L31.9,441.6 L36.3,437.7 L40.7,434.1 L45.2,430.7 L49.7,427.5 L54.3,424.6 L58.8,421.8 L63.4,419.3 L68.1,417.0 L72.7,414.9 L77.4,413.0 L82.2,411.3 L86.9,409.7 L91.7,408.4 L96.5,407.2 L101.3,406.3 L106.2,405.5 L111.0,404.8 L115.9,404.2 L120.8,403.7 L125.7,403.2 L130.6,402.7 L135.5,402.3 L140.4,402.0 L145.4,401.7 L150.3,401.5 L155.2,401.3 L160.2,401.2 L165.1,401.2 L170.1,401.2 L175.1,401.3 L180.1,401.6 L185.1,401.8 L190.1,402.2 L195.2,402.7 L200.2,403.3 L205.3,404.1 L210.4,405.0 L215.5,406.0 L220.7,407.3 L225.9,408.9 L231.1,410.9 L236.5,413.5 L242.0,417.2 L248.4,427.5Z" fill="none" stroke="#42a07c" stroke-width="2" stroke-linejoin="round" opacity="0.55"/>
<path d="M251.6,405.2 L242.5,413.2 L236.2,415.2 L230.4,416.2 L224.8,416.6 L219.3,416.7 L214.0,416.5 L208.8,416.1 L203.7,415.5 L198.6,414.8 L193.6,414.0 L188.6,413.0 L183.7,412.0 L178.8,410.8 L173.9,409.6 L169.1,408.3 L164.3,407.0 L159.6,405.5 L154.8,404.1 L150.1,402.5 L145.5,400.9 L140.8,399.2 L136.2,397.5 L131.6,395.8 L127.0,394.0 L122.5,392.1 L117.9,390.2 L113.4,388.2 L108.9,386.2 L104.5,384.1 L100.1,381.8 L95.8,379.4 L91.6,376.7 L87.5,373.9 L83.5,370.9 L79.5,367.8 L75.6,364.4 L71.8,360.9 L68.1,357.2 L64.5,353.3 L61.0,349.2 L57.5,344.9 L54.2,340.4 L51.0,335.6 L47.8,330.6 L44.8,325.4 L41.9,319.9 L39.3,313.9 L36.9,307.1 L36.9,307.1 L43.6,304.5 L49.8,302.6 L55.9,301.1 L61.8,300.0 L67.6,299.1 L73.3,298.4 L78.9,298.0 L84.5,297.8 L89.9,297.8 L95.2,297.9 L100.4,298.3 L105.6,298.9 L110.6,299.6 L115.6,300.5 L120.5,301.6 L125.4,302.9 L130.1,304.4 L134.8,306.0 L139.3,307.8 L143.8,309.8 L148.3,311.9 L152.7,314.0 L157.1,316.2 L161.5,318.4 L165.9,320.6 L170.2,323.0 L174.6,325.3 L178.9,327.8 L183.1,330.2 L187.4,332.8 L191.6,335.4 L195.8,338.0 L200.0,340.8 L204.1,343.6 L208.2,346.4 L212.2,349.4 L216.3,352.4 L220.2,355.6 L224.2,358.8 L228.0,362.2 L231.8,365.7 L235.5,369.4 L239.2,373.2 L242.7,377.4 L246.0,381.9 L249.1,387.0 L251.8,393.0 L251.6,405.2Z" fill="none" stroke="#0f3f2c" stroke-width="10.5" stroke-linejoin="round"/>
<path d="M251.6,405.2 L242.5,413.2 L236.2,415.2 L230.4,416.2 L224.8,416.6 L219.3,416.7 L214.0,416.5 L208.8,416.1 L203.7,415.5 L198.6,414.8 L193.6,414.0 L188.6,413.0 L183.7,412.0 L178.8,410.8 L173.9,409.6 L169.1,408.3 L164.3,407.0 L159.6,405.5 L154.8,404.1 L150.1,402.5 L145.5,400.9 L140.8,399.2 L136.2,397.5 L131.6,395.8 L127.0,394.0 L122.5,392.1 L117.9,390.2 L113.4,388.2 L108.9,386.2 L104.5,384.1 L100.1,381.8 L95.8,379.4 L91.6,376.7 L87.5,373.9 L83.5,370.9 L79.5,367.8 L75.6,364.4 L71.8,360.9 L68.1,357.2 L64.5,353.3 L61.0,349.2 L57.5,344.9 L54.2,340.4 L51.0,335.6 L47.8,330.6 L44.8,325.4 L41.9,319.9 L39.3,313.9 L36.9,307.1 L36.9,307.1 L43.6,304.5 L49.8,302.6 L55.9,301.1 L61.8,300.0 L67.6,299.1 L73.3,298.4 L78.9,298.0 L84.5,297.8 L89.9,297.8 L95.2,297.9 L100.4,298.3 L105.6,298.9 L110.6,299.6 L115.6,300.5 L120.5,301.6 L125.4,302.9 L130.1,304.4 L134.8,306.0 L139.3,307.8 L143.8,309.8 L148.3,311.9 L152.7,314.0 L157.1,316.2 L161.5,318.4 L165.9,320.6 L170.2,323.0 L174.6,325.3 L178.9,327.8 L183.1,330.2 L187.4,332.8 L191.6,335.4 L195.8,338.0 L200.0,340.8 L204.1,343.6 L208.2,346.4 L212.2,349.4 L216.3,352.4 L220.2,355.6 L224.2,358.8 L228.0,362.2 L231.8,365.7 L235.5,369.4 L239.2,373.2 L242.7,377.4 L246.0,381.9 L249.1,387.0 L251.8,393.0 L251.6,405.2Z" fill="#216c4f"/>
<path d="M251.6,405.2 L230.7,415.6 L214.4,415.6 L199.0,413.8 L184.2,410.8 L169.7,407.1 L155.4,402.7 L141.4,397.9 L127.7,392.6 L114.1,386.8 L100.8,380.4 L88.1,372.6 L76.2,363.2 L65.0,352.3 L54.6,339.6 L45.0,325.0 L36.9,307.1 L36.9,307.1 M251.6,405.2 L231.2,414.3 L215.2,413.9 L200.0,411.7 L185.2,408.5 L170.8,404.6 L156.6,400.1 L142.7,395.1 L128.9,389.8 L115.4,384.0 L102.1,377.6 L89.4,369.9 L77.3,360.8 L65.9,350.2 L55.3,338.0 L45.4,324.1 L36.9,307.1 L36.9,307.1 M251.6,405.2 L231.8,413.0 L216.0,412.1 L200.9,409.6 L186.3,406.2 L172.0,402.1 L157.9,397.5 L143.9,392.4 L130.2,387.0 L116.7,381.1 L103.3,374.8 L90.6,367.2 L78.4,358.4 L66.9,348.1 L56.0,336.5 L45.8,323.2 L36.9,307.1 L36.9,307.1 M251.6,405.2 L232.4,411.8 L216.8,410.4 L201.9,407.5 L187.4,403.9 L173.1,399.6 L159.1,394.8 L145.2,389.7 L131.5,384.2 L117.9,378.3 L104.6,372.0 L91.8,364.6 L79.5,355.9 L67.8,346.1 L56.7,334.9 L46.3,322.3 L36.9,307.1 L36.9,307.1 M251.6,405.2 L233.0,410.5 L217.6,408.6 L202.8,405.5 L188.4,401.5 L174.2,397.1 L160.3,392.2 L146.4,386.9 L132.8,381.4 L119.2,375.5 L105.9,369.2 L93.0,361.9 L80.6,353.5 L68.7,344.0 L57.4,333.4 L46.7,321.4 L36.9,307.1 L36.9,307.1 M251.6,405.2 L233.6,409.2 L218.4,406.9 L203.8,403.4 L189.5,399.2 L175.4,394.6 L161.5,389.5 L147.7,384.2 L134.1,378.6 L120.5,372.7 L107.2,366.4 L94.2,359.2 L81.7,351.1 L69.7,342.0 L58.1,331.8 L47.1,320.5 L36.9,307.1 L36.9,307.1 M251.6,405.2 L234.1,408.0 L219.2,405.2 L204.7,401.3 L190.5,396.9 L176.5,392.1 L162.7,386.9 L148.9,381.5 L135.3,375.8 L121.8,369.8 L108.5,363.6 L95.5,356.5 L82.8,348.7 L70.6,339.9 L58.8,330.3 L47.5,319.6 L36.9,307.1 L36.9,307.1 M251.6,405.2 L234.7,406.7 L220.0,403.4 L205.7,399.2 L191.6,394.6 L177.7,389.6 L163.9,384.3 L150.2,378.7 L136.6,373.0 L123.1,367.0 L109.8,360.8 L96.7,353.8 L84.0,346.2 L71.6,337.9 L59.5,328.7 L47.9,318.7 L36.9,307.1 L36.9,307.1 M251.6,405.2 L235.3,405.4 L220.8,401.7 L206.6,397.2 L192.7,392.3 L178.8,387.1 L165.1,381.6 L151.4,376.0 L137.9,370.2 L124.4,364.2 L111.0,357.9 L97.9,351.2 L85.1,343.8 L72.5,335.8 L60.2,327.2 L48.3,317.8 L36.9,307.1 L36.9,307.1 M251.6,405.2 L235.9,404.1 L221.6,399.9 L207.6,395.1 L193.7,389.9 L180.0,384.6 L166.3,379.0 L152.7,373.2 L139.2,367.4 L125.7,361.3 L112.3,355.1 L99.1,348.5 L86.2,341.4 L73.4,333.8 L60.9,325.6 L48.7,316.9 L36.9,307.1 L36.9,307.1 M251.6,405.2 L236.5,402.9 L222.4,398.2 L208.5,393.0 L194.8,387.6 L181.1,382.1 L167.5,376.3 L153.9,370.5 L140.4,364.6 L127.0,358.5 L113.6,352.3 L100.4,345.8 L87.3,338.9 L74.4,331.7 L61.6,324.1 L49.1,316.0 L36.9,307.1 L36.9,307.1 M251.6,405.2 L237.0,401.6 L223.2,396.4 L209.5,390.9 L195.8,385.3 L182.2,379.6 L168.7,373.7 L155.2,367.8 L141.7,361.8 L128.3,355.7 L114.9,349.5 L101.6,343.1 L88.4,336.5 L75.3,329.6 L62.4,322.5 L49.5,315.1 L36.9,307.1 L36.9,307.1 M251.6,405.2 L237.6,400.3 L224.0,394.7 L210.4,388.9 L196.9,383.0 L183.4,377.0 L169.9,371.1 L156.4,365.0 L143.0,359.0 L129.6,352.9 L116.2,346.7 L102.8,340.5 L89.5,334.1 L76.3,327.6 L63.1,321.0 L49.9,314.2 L36.9,307.1 L36.9,307.1 M251.6,405.2 L238.2,399.1 L224.8,392.9 L211.4,386.8 L197.9,380.7 L184.5,374.5 L171.1,368.4 L157.7,362.3 L144.3,356.2 L130.9,350.0 L117.4,343.9 L104.0,337.8 L90.6,331.7 L77.2,325.5 L63.8,319.4 L50.4,313.3 L36.9,307.1 L36.9,307.1 M251.6,405.2 L238.8,397.8 L225.6,391.2 L212.3,384.7 L199.0,378.4 L185.7,372.0 L172.3,365.8 L158.9,359.6 L145.6,353.4 L132.2,347.2 L118.7,341.1 L105.2,335.1 L91.7,329.2 L78.1,323.5 L64.5,317.8 L50.8,312.4 L36.9,307.1 L36.9,307.1 M251.6,405.2 L239.4,396.5 L226.4,389.4 L213.3,382.7 L200.1,376.0 L186.8,369.5 L173.5,363.1 L160.2,356.8 L146.8,350.6 L133.4,344.4 L120.0,338.3 L106.5,332.4 L92.8,326.8 L79.1,321.4 L65.2,316.3 L51.2,311.5 L36.9,307.1 L36.9,307.1 M251.6,405.2 L239.9,395.2 L227.2,387.7 L214.2,380.6 L201.1,373.7 L188.0,367.0 L174.7,360.5 L161.4,354.1 L148.1,347.8 L134.7,341.6 L121.3,335.5 L107.7,329.8 L93.9,324.4 L80.0,319.4 L65.9,314.7 L51.6,310.6 L36.9,307.1 L36.9,307.1 M251.6,405.2 L240.5,394.0 L228.0,385.9 L215.2,378.5 L202.2,371.4 L189.1,364.5 L175.9,357.9 L162.7,351.3 L149.4,345.0 L136.0,338.7 L122.6,332.7 L108.9,327.1 L95.0,321.9 L80.9,317.3 L66.6,313.2 L52.0,309.7 L36.9,307.1 L36.9,307.1 M251.6,405.2 L241.1,392.7 L228.8,384.2 L216.1,376.4 L203.2,369.1 L190.2,362.0 L177.1,355.2 L163.9,348.6 L150.7,342.2 L137.3,335.9 L123.9,329.9 L110.1,324.4 L96.2,319.5 L81.9,315.2 L67.3,311.6 L52.4,308.8 L36.9,307.1 L36.9,307.1 M251.6,405.2 L241.7,391.4 L229.6,382.4 L217.0,374.4 L204.3,366.8 L191.4,359.5 L178.3,352.6 L165.2,345.9 L151.9,339.4 L138.6,333.1 L125.1,327.1 L111.4,321.7 L97.3,317.1 L82.8,313.2 L68.0,310.1 L52.8,307.9 L36.9,307.1 L36.9,307.1 M251.6,405.2 L242.3,390.2 L230.4,380.7 L218.0,372.3 L205.4,364.4 L192.5,357.0 L179.6,349.9 L166.4,343.1 L153.2,336.6 L139.9,330.2 L126.4,324.3 L112.6,319.0 L98.4,314.7 L83.8,311.1 L68.7,308.5 L53.2,307.0 L36.9,307.1 L36.9,307.1 M251.6,405.2 L242.8,388.9 L231.2,379.0 L218.9,370.2 L206.4,362.1 L193.7,354.5 L180.8,347.3 L167.7,340.4 L154.5,333.8 L141.2,327.4 L127.7,321.4 L113.8,316.4 L99.5,312.2 L84.7,309.1 L69.4,307.0 L53.6,306.1 L36.9,307.1 L36.9,307.1 M251.6,405.2 L243.4,387.6 L232.0,377.2 L219.9,368.1 L207.5,359.8 L194.8,352.0 L182.0,344.7 L168.9,337.7 L155.8,331.0 L142.5,324.6 L129.0,318.6 L115.0,313.7 L100.6,309.8 L85.6,307.0 L70.2,305.4 L54.1,305.2 L36.9,307.1 L36.9,307.1 M251.6,405.2 L244.0,386.3 L232.8,375.5 L220.8,366.1 L208.5,357.5 L196.0,349.5 L183.2,342.0 L170.2,334.9 L157.1,328.2 L143.8,321.8 L130.3,315.8 L116.3,311.0 L101.7,307.4 L86.6,305.0 L70.9,303.9 L54.5,304.3 L36.9,307.1 L36.9,307.1 M251.6,405.2 L244.6,385.1 L233.6,373.7 L221.8,364.0 L209.6,355.2 L197.1,347.0 L184.4,339.4 L171.4,332.2 L158.3,325.4 L145.1,318.9 L131.5,313.0 L117.5,308.3 L102.8,304.9 L87.5,302.9 L71.6,302.3 L54.9,303.4 L36.9,307.1 L36.9,307.1 M251.6,405.2 L245.2,383.8 L234.4,372.0 L222.7,361.9 L210.6,352.9 L198.2,344.5 L185.6,336.7 L172.7,329.4 L159.6,322.6 L146.4,316.1 L132.8,310.2 L118.7,305.7 L103.9,302.5 L88.5,300.9 L72.3,300.8 L55.3,302.5 L36.9,307.1 L36.9,307.1 M251.6,405.2 L245.7,382.5 L235.1,370.2 L223.7,359.8 L211.7,350.5 L199.4,342.0 L186.8,334.1 L173.9,326.7 L160.9,319.8 L147.6,313.3 L134.1,307.4 L119.9,303.0 L105.0,300.1 L89.4,298.8 L73.0,299.2 L55.7,301.6 L36.9,307.1 L36.9,307.1" clip-path="url(#c10)" fill="none" stroke="#4aa686" stroke-width="0.7" stroke-opacity="0.8"/>
<path d="M251.6,405.2 L242.5,413.2 L236.2,415.2 L230.4,416.2 L224.8,416.6 L219.3,416.7 L214.0,416.5 L208.8,416.1 L203.7,415.5 L198.6,414.8 L193.6,414.0 L188.6,413.0 L183.7,412.0 L178.8,410.8 L173.9,409.6 L169.1,408.3 L164.3,407.0 L159.6,405.5 L154.8,404.1 L150.1,402.5 L145.5,400.9 L140.8,399.2 L136.2,397.5 L131.6,395.8 L127.0,394.0 L122.5,392.1 L117.9,390.2 L113.4,388.2 L108.9,386.2 L104.5,384.1 L100.1,381.8 L95.8,379.4 L91.6,376.7 L87.5,373.9 L83.5,370.9 L79.5,367.8 L75.6,364.4 L71.8,360.9 L68.1,357.2 L64.5,353.3 L61.0,349.2 L57.5,344.9 L54.2,340.4 L51.0,335.6 L47.8,330.6 L44.8,325.4 L41.9,319.9 L39.3,313.9 L36.9,307.1 L36.9,307.1 L43.6,304.5 L49.8,302.6 L55.9,301.1 L61.8,300.0 L67.6,299.1 L73.3,298.4 L78.9,298.0 L84.5,297.8 L89.9,297.8 L95.2,297.9 L100.4,298.3 L105.6,298.9 L110.6,299.6 L115.6,300.5 L120.5,301.6 L125.4,302.9 L130.1,304.4 L134.8,306.0 L139.3,307.8 L143.8,309.8 L148.3,311.9 L152.7,314.0 L157.1,316.2 L161.5,318.4 L165.9,320.6 L170.2,323.0 L174.6,325.3 L178.9,327.8 L183.1,330.2 L187.4,332.8 L191.6,335.4 L195.8,338.0 L200.0,340.8 L204.1,343.6 L208.2,346.4 L212.2,349.4 L216.3,352.4 L220.2,355.6 L224.2,358.8 L228.0,362.2 L231.8,365.7 L235.5,369.4 L239.2,373.2 L242.7,377.4 L246.0,381.9 L249.1,387.0 L251.8,393.0 L251.6,405.2Z" clip-path="url(#c10)" fill="none" stroke="#0c3a28" stroke-width="15" stroke-opacity="0.35" stroke-linejoin="round"/>
<path d="M251.6,405.2 L242.5,413.2 L236.2,415.2 L230.4,416.2 L224.8,416.6 L219.3,416.7 L214.0,416.5 L208.8,416.1 L203.7,415.5 L198.6,414.8 L193.6,414.0 L188.6,413.0 L183.7,412.0 L178.8,410.8 L173.9,409.6 L169.1,408.3 L164.3,407.0 L159.6,405.5 L154.8,404.1 L150.1,402.5 L145.5,400.9 L140.8,399.2 L136.2,397.5 L131.6,395.8 L127.0,394.0 L122.5,392.1 L117.9,390.2 L113.4,388.2 L108.9,386.2 L104.5,384.1 L100.1,381.8 L95.8,379.4 L91.6,376.7 L87.5,373.9 L83.5,370.9 L79.5,367.8 L75.6,364.4 L71.8,360.9 L68.1,357.2 L64.5,353.3 L61.0,349.2 L57.5,344.9 L54.2,340.4 L51.0,335.6 L47.8,330.6 L44.8,325.4 L41.9,319.9 L39.3,313.9 L36.9,307.1 L36.9,307.1 L43.6,304.5 L49.8,302.6 L55.9,301.1 L61.8,300.0 L67.6,299.1 L73.3,298.4 L78.9,298.0 L84.5,297.8 L89.9,297.8 L95.2,297.9 L100.4,298.3 L105.6,298.9 L110.6,299.6 L115.6,300.5 L120.5,301.6 L125.4,302.9 L130.1,304.4 L134.8,306.0 L139.3,307.8 L143.8,309.8 L148.3,311.9 L152.7,314.0 L157.1,316.2 L161.5,318.4 L165.9,320.6 L170.2,323.0 L174.6,325.3 L178.9,327.8 L183.1,330.2 L187.4,332.8 L191.6,335.4 L195.8,338.0 L200.0,340.8 L204.1,343.6 L208.2,346.4 L212.2,349.4 L216.3,352.4 L220.2,355.6 L224.2,358.8 L228.0,362.2 L231.8,365.7 L235.5,369.4 L239.2,373.2 L242.7,377.4 L246.0,381.9 L249.1,387.0 L251.8,393.0 L251.6,405.2Z" fill="none" stroke="#257c5b" stroke-width="8" stroke-linejoin="round"/>
<path d="M251.6,405.2 L242.5,413.2 L236.2,415.2 L230.4,416.2 L224.8,416.6 L219.3,416.7 L214.0,416.5 L208.8,416.1 L203.7,415.5 L198.6,414.8 L193.6,414.0 L188.6,413.0 L183.7,412.0 L178.8,410.8 L173.9,409.6 L169.1,408.3 L164.3,407.0 L159.6,405.5 L154.8,404.1 L150.1,402.5 L145.5,400.9 L140.8,399.2 L136.2,397.5 L131.6,395.8 L127.0,394.0 L122.5,392.1 L117.9,390.2 L113.4,388.2 L108.9,386.2 L104.5,384.1 L100.1,381.8 L95.8,379.4 L91.6,376.7 L87.5,373.9 L83.5,370.9 L79.5,367.8 L75.6,364.4 L71.8,360.9 L68.1,357.2 L64.5,353.3 L61.0,349.2 L57.5,344.9 L54.2,340.4 L51.0,335.6 L47.8,330.6 L44.8,325.4 L41.9,319.9 L39.3,313.9 L36.9,307.1 L36.9,307.1 L43.6,304.5 L49.8,302.6 L55.9,301.1 L61.8,300.0 L67.6,299.1 L73.3,298.4 L78.9,298.0 L84.5,297.8 L89.9,297.8 L95.2,297.9 L100.4,298.3 L105.6,298.9 L110.6,299.6 L115.6,300.5 L120.5,301.6 L125.4,302.9 L130.1,304.4 L134.8,306.0 L139.3,307.8 L143.8,309.8 L148.3,311.9 L152.7,314.0 L157.1,316.2 L161.5,318.4 L165.9,320.6 L170.2,323.0 L174.6,325.3 L178.9,327.8 L183.1,330.2 L187.4,332.8 L191.6,335.4 L195.8,338.0 L200.0,340.8 L204.1,343.6 L208.2,346.4 L212.2,349.4 L216.3,352.4 L220.2,355.6 L224.2,358.8 L228.0,362.2 L231.8,365.7 L235.5,369.4 L239.2,373.2 L242.7,377.4 L246.0,381.9 L249.1,387.0 L251.8,393.0 L251.6,405.2Z" fill="none" stroke="#42a07c" stroke-width="2" stroke-linejoin="round" opacity="0.55"/>
<path d="M266.4,388.1 L254.4,390.0 L248.0,388.3 L242.5,385.9 L237.6,383.3 L233.0,380.4 L228.6,377.3 L224.5,374.2 L220.4,370.9 L216.6,367.6 L212.8,364.1 L209.1,360.7 L205.5,357.1 L202.0,353.5 L198.6,349.9 L195.3,346.2 L192.0,342.5 L188.7,338.7 L185.6,334.9 L182.5,331.0 L179.4,327.2 L176.4,323.3 L173.4,319.3 L170.5,315.3 L167.6,311.3 L164.8,307.3 L162.0,303.3 L159.3,299.2 L156.6,295.0 L154.0,290.9 L151.6,286.6 L149.3,282.2 L147.2,277.7 L145.2,273.1 L143.4,268.4 L141.8,263.6 L140.4,258.7 L139.1,253.7 L138.0,248.6 L137.0,243.3 L136.3,238.0 L135.7,232.5 L135.4,226.9 L135.2,221.1 L135.2,215.3 L135.5,209.2 L136.1,203.0 L137.1,196.6 L138.8,189.6 L138.8,189.6 L145.8,190.9 L152.1,192.8 L158.0,194.8 L163.6,197.1 L169.0,199.4 L174.1,202.0 L179.1,204.6 L183.8,207.4 L188.4,210.3 L192.8,213.4 L197.0,216.5 L201.0,219.8 L204.9,223.1 L208.6,226.6 L212.1,230.2 L215.4,233.9 L218.6,237.6 L221.7,241.5 L224.6,245.5 L227.3,249.6 L229.9,253.8 L232.5,258.0 L235.0,262.2 L237.5,266.4 L240.0,270.7 L242.4,275.0 L244.7,279.3 L247.0,283.7 L249.3,288.1 L251.5,292.5 L253.6,297.0 L255.7,301.5 L257.7,306.0 L259.7,310.6 L261.6,315.2 L263.4,319.9 L265.2,324.6 L266.8,329.4 L268.3,334.3 L269.8,339.2 L271.1,344.2 L272.2,349.3 L273.2,354.6 L273.9,359.9 L274.3,365.5 L274.1,371.5 L273.1,378.0 L266.4,388.1Z" fill="none" stroke="#0f3f2c" stroke-width="10.5" stroke-linejoin="round"/>
<path d="M266.4,388.1 L254.4,390.0 L248.0,388.3 L242.5,385.9 L237.6,383.3 L233.0,380.4 L228.6,377.3 L224.5,374.2 L220.4,370.9 L216.6,367.6 L212.8,364.1 L209.1,360.7 L205.5,357.1 L202.0,353.5 L198.6,349.9 L195.3,346.2 L192.0,342.5 L188.7,338.7 L185.6,334.9 L182.5,331.0 L179.4,327.2 L176.4,323.3 L173.4,319.3 L170.5,315.3 L167.6,311.3 L164.8,307.3 L162.0,303.3 L159.3,299.2 L156.6,295.0 L154.0,290.9 L151.6,286.6 L149.3,282.2 L147.2,277.7 L145.2,273.1 L143.4,268.4 L141.8,263.6 L140.4,258.7 L139.1,253.7 L138.0,248.6 L137.0,243.3 L136.3,238.0 L135.7,232.5 L135.4,226.9 L135.2,221.1 L135.2,215.3 L135.5,209.2 L136.1,203.0 L137.1,196.6 L138.8,189.6 L138.8,189.6 L145.8,190.9 L152.1,192.8 L158.0,194.8 L163.6,197.1 L169.0,199.4 L174.1,202.0 L179.1,204.6 L183.8,207.4 L188.4,210.3 L192.8,213.4 L197.0,216.5 L201.0,219.8 L204.9,223.1 L208.6,226.6 L212.1,230.2 L215.4,233.9 L218.6,237.6 L221.7,241.5 L224.6,245.5 L227.3,249.6 L229.9,253.8 L232.5,258.0 L235.0,262.2 L237.5,266.4 L240.0,270.7 L242.4,275.0 L244.7,279.3 L247.0,283.7 L249.3,288.1 L251.5,292.5 L253.6,297.0 L255.7,301.5 L257.7,306.0 L259.7,310.6 L261.6,315.2 L263.4,319.9 L265.2,324.6 L266.8,329.4 L268.3,334.3 L269.8,339.2 L271.1,344.2 L272.2,349.3 L273.2,354.6 L273.9,359.9 L274.3,365.5 L274.1,371.5 L273.1,378.0 L266.4,388.1Z" fill="#216c4f"/>
<path d="M266.4,388.1 L243.1,385.6 L229.4,376.8 L217.5,367.0 L206.6,356.4 L196.4,345.4 L186.8,334.1 L177.6,322.4 L168.9,310.5 L160.6,298.3 L152.9,285.8 L146.5,272.3 L141.5,258.0 L138.0,242.7 L136.1,226.4 L136.0,209.0 L138.8,189.6 L138.8,189.6 M266.4,388.1 L244.3,384.8 L231.0,375.8 L219.4,365.7 L208.8,355.0 L198.7,344.0 L189.2,332.5 L180.2,320.8 L171.5,308.8 L163.2,296.6 L155.5,284.1 L148.9,270.8 L143.7,256.6 L139.9,241.5 L137.5,225.5 L136.8,208.4 L138.8,189.6 L138.8,189.6 M266.4,388.1 L245.5,384.1 L232.7,374.8 L221.3,364.5 L210.9,353.7 L201.0,342.5 L191.7,331.0 L182.7,319.2 L174.1,307.2 L165.8,295.0 L158.1,282.4 L151.4,269.2 L146.0,255.1 L141.8,240.3 L138.9,224.6 L137.6,207.9 L138.8,189.6 L138.8,189.6 M266.4,388.1 L246.6,383.3 L234.3,373.7 L223.3,363.3 L213.0,352.3 L203.4,341.0 L194.1,329.4 L185.2,317.6 L176.7,305.5 L168.5,293.3 L160.7,280.8 L153.9,267.6 L148.2,253.7 L143.7,239.1 L140.4,223.7 L138.5,207.4 L138.8,189.6 L138.8,189.6 M266.4,388.1 L247.8,382.5 L235.9,372.7 L225.2,362.0 L215.2,350.9 L205.7,339.5 L196.6,327.8 L187.8,315.9 L179.3,303.9 L171.1,291.6 L163.3,279.1 L156.4,266.0 L150.5,252.2 L145.6,237.8 L141.8,222.7 L139.3,206.8 L138.8,189.6 L138.8,189.6 M266.4,388.1 L249.0,381.8 L237.5,371.6 L227.1,360.8 L217.3,349.5 L208.0,338.0 L199.0,326.2 L190.3,314.3 L181.9,302.2 L173.7,289.9 L165.9,277.4 L158.8,264.4 L152.7,250.8 L147.5,236.6 L143.2,221.8 L140.1,206.3 L138.8,189.6 L138.8,189.6 M266.4,388.1 L250.2,381.0 L239.1,370.6 L229.0,359.6 L219.5,348.2 L210.3,336.5 L201.4,324.7 L192.8,312.7 L184.5,300.5 L176.3,288.2 L168.5,275.7 L161.3,262.8 L155.0,249.4 L149.4,235.4 L144.7,220.9 L140.9,205.8 L138.8,189.6 L138.8,189.6 M266.4,388.1 L251.3,380.3 L240.7,369.6 L230.9,358.3 L221.6,346.8 L212.6,335.0 L203.9,323.1 L195.4,311.1 L187.0,298.9 L178.9,286.6 L171.0,274.1 L163.8,261.2 L157.2,247.9 L151.3,234.2 L146.1,220.0 L141.8,205.2 L138.8,189.6 L138.8,189.6 M266.4,388.1 L252.5,379.5 L242.3,368.5 L232.9,357.1 L223.8,345.4 L214.9,333.5 L206.3,321.5 L197.9,309.4 L189.6,297.2 L181.5,284.9 L173.6,272.4 L166.3,259.6 L159.5,246.5 L153.2,232.9 L147.6,219.0 L142.6,204.7 L138.8,189.6 L138.8,189.6 M266.4,388.1 L253.7,378.8 L244.0,367.5 L234.8,355.9 L225.9,344.0 L217.2,332.1 L208.8,320.0 L200.4,307.8 L192.2,295.5 L184.1,283.2 L176.2,270.7 L168.8,258.0 L161.7,245.0 L155.1,231.7 L149.0,218.1 L143.4,204.2 L138.8,189.6 L138.8,189.6 M266.4,388.1 L254.9,378.0 L245.6,366.4 L236.7,354.6 L228.0,342.6 L219.6,330.6 L211.2,318.4 L203.0,306.2 L194.8,293.9 L186.8,281.5 L178.8,269.1 L171.2,256.4 L163.9,243.6 L157.0,230.5 L150.4,217.2 L144.3,203.6 L138.8,189.6 L138.8,189.6 M266.4,388.1 L256.0,377.3 L247.2,365.4 L238.6,353.4 L230.2,341.3 L221.9,329.1 L213.6,316.8 L205.5,304.5 L197.4,292.2 L189.4,279.8 L181.4,267.4 L173.7,254.8 L166.2,242.1 L158.9,229.3 L151.9,216.3 L145.1,203.1 L138.8,189.6 L138.8,189.6 M266.4,388.1 L257.2,376.5 L248.8,364.4 L240.5,352.2 L232.3,339.9 L224.2,327.6 L216.1,315.3 L208.0,302.9 L200.0,290.5 L192.0,278.2 L184.0,265.7 L176.2,253.2 L168.4,240.7 L160.8,228.1 L153.3,215.4 L145.9,202.6 L138.8,189.6 L138.8,189.6 M266.4,388.1 L258.4,375.7 L250.4,363.3 L242.5,350.9 L234.5,338.5 L226.5,326.1 L218.5,313.7 L210.6,301.3 L202.6,288.9 L194.6,276.5 L186.6,264.1 L178.7,251.7 L170.7,239.2 L162.7,226.8 L154.7,214.4 L146.8,202.0 L138.8,189.6 L138.8,189.6 M266.4,388.1 L259.6,375.0 L252.0,362.3 L244.4,349.7 L236.6,337.1 L228.8,324.6 L221.0,312.1 L213.1,299.7 L205.2,287.2 L197.2,274.8 L189.2,262.4 L181.1,250.1 L172.9,237.8 L164.6,225.6 L156.2,213.5 L147.6,201.5 L138.8,189.6 L138.8,189.6 M266.4,388.1 L260.8,374.2 L253.7,361.3 L246.3,348.5 L238.8,335.8 L231.1,323.1 L223.4,310.6 L215.6,298.0 L207.8,285.6 L199.8,273.1 L191.8,260.7 L183.6,248.5 L175.2,236.4 L166.5,224.4 L157.6,212.6 L148.4,201.0 L138.8,189.6 L138.8,189.6 M266.4,388.1 L261.9,373.5 L255.3,360.2 L248.2,347.2 L240.9,334.4 L233.4,321.6 L225.9,309.0 L218.1,296.4 L210.3,283.9 L202.4,271.4 L194.4,259.1 L186.1,246.9 L177.4,234.9 L168.4,223.2 L159.0,211.7 L149.2,200.4 L138.8,189.6 L138.8,189.6 M266.4,388.1 L263.1,372.7 L256.9,359.2 L250.1,346.0 L243.1,333.0 L235.8,320.2 L228.3,307.4 L220.7,294.8 L212.9,282.2 L205.1,269.8 L197.0,257.4 L188.6,245.3 L179.7,233.5 L170.3,222.0 L160.5,210.7 L150.1,199.9 L138.8,189.6 L138.8,189.6 M266.4,388.1 L264.3,372.0 L258.5,358.1 L252.0,344.8 L245.2,331.6 L238.1,318.7 L230.7,305.9 L223.2,293.2 L215.5,280.6 L207.7,268.1 L199.6,255.7 L191.0,243.7 L181.9,232.0 L172.2,220.7 L161.9,209.8 L150.9,199.4 L138.8,189.6 L138.8,189.6 M266.4,388.1 L265.5,371.2 L260.1,357.1 L254.0,343.5 L247.3,330.2 L240.4,317.2 L233.2,304.3 L225.7,291.5 L218.1,278.9 L210.3,266.4 L202.2,254.1 L193.5,242.1 L184.2,230.6 L174.1,219.5 L163.3,208.9 L151.7,198.8 L138.8,189.6 L138.8,189.6 M266.4,388.1 L266.6,370.5 L261.7,356.1 L255.9,342.3 L249.5,328.9 L242.7,315.7 L235.6,302.7 L228.3,289.9 L220.7,277.2 L212.9,264.7 L204.8,252.4 L196.0,240.5 L186.4,229.1 L176.0,218.3 L164.8,208.0 L152.6,198.3 L138.8,189.6 L138.8,189.6 M266.4,388.1 L267.8,369.7 L263.3,355.0 L257.8,341.1 L251.6,327.5 L245.0,314.2 L238.1,301.1 L230.8,288.3 L223.3,275.6 L215.5,263.0 L207.4,250.7 L198.5,238.9 L188.6,227.7 L177.9,217.1 L166.2,207.0 L153.4,197.8 L138.8,189.6 L138.8,189.6 M266.4,388.1 L269.0,368.9 L265.0,354.0 L259.7,339.8 L253.8,326.1 L247.3,312.7 L240.5,299.6 L233.3,286.6 L225.9,273.9 L218.1,261.3 L210.0,249.0 L200.9,237.3 L190.9,226.3 L179.8,215.8 L167.7,206.1 L154.2,197.2 L138.8,189.6 L138.8,189.6 M266.4,388.1 L270.2,368.2 L266.6,353.0 L261.6,338.6 L255.9,324.7 L249.6,311.2 L242.9,298.0 L235.9,285.0 L228.5,272.2 L220.8,259.7 L212.6,247.4 L203.4,235.7 L193.1,224.8 L181.7,214.6 L169.1,205.2 L155.1,196.7 L138.8,189.6 L138.8,189.6 M266.4,388.1 L271.3,367.4 L268.2,351.9 L263.6,337.4 L258.1,323.4 L252.0,309.7 L245.4,296.4 L238.4,283.4 L231.1,270.6 L223.4,258.0 L215.2,245.7 L205.9,234.2 L195.4,223.4 L183.6,213.4 L170.5,204.3 L155.9,196.1 L138.8,189.6 L138.8,189.6 M266.4,388.1 L272.5,366.7 L269.8,350.9 L265.5,336.1 L260.2,322.0 L254.3,308.3 L247.8,294.9 L240.9,281.8 L233.6,268.9 L226.0,256.3 L217.8,244.0 L208.4,232.6 L197.6,221.9 L185.5,212.2 L172.0,203.4 L156.7,195.6 L138.8,189.6 L138.8,189.6 M266.4,388.1 L273.7,365.9 L271.4,349.8 L267.4,334.9 L262.3,320.6 L256.6,306.8 L250.3,293.3 L243.5,280.1 L236.2,267.3 L228.6,254.6 L220.4,242.4 L210.8,231.0 L199.9,220.5 L187.4,211.0 L173.4,202.4 L157.6,195.1 L138.8,189.6 L138.8,189.6" clip-path="url(#c11)" fill="none" stroke="#4aa686" stroke-width="0.7" stroke-opacity="0.8"/>
<path d="M266.4,388.1 L254.4,390.0 L248.0,388.3 L242.5,385.9 L237.6,383.3 L233.0,380.4 L228.6,377.3 L224.5,374.2 L220.4,370.9 L216.6,367.6 L212.8,364.1 L209.1,360.7 L205.5,357.1 L202.0,353.5 L198.6,349.9 L195.3,346.2 L192.0,342.5 L188.7,338.7 L185.6,334.9 L182.5,331.0 L179.4,327.2 L176.4,323.3 L173.4,319.3 L170.5,315.3 L167.6,311.3 L164.8,307.3 L162.0,303.3 L159.3,299.2 L156.6,295.0 L154.0,290.9 L151.6,286.6 L149.3,282.2 L147.2,277.7 L145.2,273.1 L143.4,268.4 L141.8,263.6 L140.4,258.7 L139.1,253.7 L138.0,248.6 L137.0,243.3 L136.3,238.0 L135.7,232.5 L135.4,226.9 L135.2,221.1 L135.2,215.3 L135.5,209.2 L136.1,203.0 L137.1,196.6 L138.8,189.6 L138.8,189.6 L145.8,190.9 L152.1,192.8 L158.0,194.8 L163.6,197.1 L169.0,199.4 L174.1,202.0 L179.1,204.6 L183.8,207.4 L188.4,210.3 L192.8,213.4 L197.0,216.5 L201.0,219.8 L204.9,223.1 L208.6,226.6 L212.1,230.2 L215.4,233.9 L218.6,237.6 L221.7,241.5 L224.6,245.5 L227.3,249.6 L229.9,253.8 L232.5,258.0 L235.0,262.2 L237.5,266.4 L240.0,270.7 L242.4,275.0 L244.7,279.3 L247.0,283.7 L249.3,288.1 L251.5,292.5 L253.6,297.0 L255.7,301.5 L257.7,306.0 L259.7,310.6 L261.6,315.2 L263.4,319.9 L265.2,324.6 L266.8,329.4 L268.3,334.3 L269.8,339.2 L271.1,344.2 L272.2,349.3 L273.2,354.6 L273.9,359.9 L274.3,365.5 L274.1,371.5 L273.1,378.0 L266.4,388.1Z" clip-path="url(#c11)" fill="none" stroke="#0c3a28" stroke-width="15" stroke-opacity="0.35" stroke-linejoin="round"/>
<path d="M266.4,388.1 L254.4,390.0 L248.0,388.3 L242.5,385.9 L237.6,383.3 L233.0,380.4 L228.6,377.3 L224.5,374.2 L220.4,370.9 L216.6,367.6 L212.8,364.1 L209.1,360.7 L205.5,357.1 L202.0,353.5 L198.6,349.9 L195.3,346.2 L192.0,342.5 L188.7,338.7 L185.6,334.9 L182.5,331.0 L179.4,327.2 L176.4,323.3 L173.4,319.3 L170.5,315.3 L167.6,311.3 L164.8,307.3 L162.0,303.3 L159.3,299.2 L156.6,295.0 L154.0,290.9 L151.6,286.6 L149.3,282.2 L147.2,277.7 L145.2,273.1 L143.4,268.4 L141.8,263.6 L140.4,258.7 L139.1,253.7 L138.0,248.6 L137.0,243.3 L136.3,238.0 L135.7,232.5 L135.4,226.9 L135.2,221.1 L135.2,215.3 L135.5,209.2 L136.1,203.0 L137.1,196.6 L138.8,189.6 L138.8,189.6 L145.8,190.9 L152.1,192.8 L158.0,194.8 L163.6,197.1 L169.0,199.4 L174.1,202.0 L179.1,204.6 L183.8,207.4 L188.4,210.3 L192.8,213.4 L197.0,216.5 L201.0,219.8 L204.9,223.1 L208.6,226.6 L212.1,230.2 L215.4,233.9 L218.6,237.6 L221.7,241.5 L224.6,245.5 L227.3,249.6 L229.9,253.8 L232.5,258.0 L235.0,262.2 L237.5,266.4 L240.0,270.7 L242.4,275.0 L244.7,279.3 L247.0,283.7 L249.3,288.1 L251.5,292.5 L253.6,297.0 L255.7,301.5 L257.7,306.0 L259.7,310.6 L261.6,315.2 L263.4,319.9 L265.2,324.6 L266.8,329.4 L268.3,334.3 L269.8,339.2 L271.1,344.2 L272.2,349.3 L273.2,354.6 L273.9,359.9 L274.3,365.5 L274.1,371.5 L273.1,378.0 L266.4,388.1Z" fill="none" stroke="#257c5b" stroke-width="8" stroke-linejoin="round"/>
<path d="M266.4,388.1 L254.4,390.0 L248.0,388.3 L242.5,385.9 L237.6,383.3 L233.0,380.4 L228.6,377.3 L224.5,374.2 L220.4,370.9 L216.6,367.6 L212.8,364.1 L209.1,360.7 L205.5,357.1 L202.0,353.5 L198.6,349.9 L195.3,346.2 L192.0,342.5 L188.7,338.7 L185.6,334.9 L182.5,331.0 L179.4,327.2 L176.4,323.3 L173.4,319.3 L170.5,315.3 L167.6,311.3 L164.8,307.3 L162.0,303.3 L159.3,299.2 L156.6,295.0 L154.0,290.9 L151.6,286.6 L149.3,282.2 L147.2,277.7 L145.2,273.1 L143.4,268.4 L141.8,263.6 L140.4,258.7 L139.1,253.7 L138.0,248.6 L137.0,243.3 L136.3,238.0 L135.7,232.5 L135.4,226.9 L135.2,221.1 L135.2,215.3 L135.5,209.2 L136.1,203.0 L137.1,196.6 L138.8,189.6 L138.8,189.6 L145.8,190.9 L152.1,192.8 L158.0,194.8 L163.6,197.1 L169.0,199.4 L174.1,202.0 L179.1,204.6 L183.8,207.4 L188.4,210.3 L192.8,213.4 L197.0,216.5 L201.0,219.8 L204.9,223.1 L208.6,226.6 L212.1,230.2 L215.4,233.9 L218.6,237.6 L221.7,241.5 L224.6,245.5 L227.3,249.6 L229.9,253.8 L232.5,258.0 L235.0,262.2 L237.5,266.4 L240.0,270.7 L242.4,275.0 L244.7,279.3 L247.0,283.7 L249.3,288.1 L251.5,292.5 L253.6,297.0 L255.7,301.5 L257.7,306.0 L259.7,310.6 L261.6,315.2 L263.4,319.9 L265.2,324.6 L266.8,329.4 L268.3,334.3 L269.8,339.2 L271.1,344.2 L272.2,349.3 L273.2,354.6 L273.9,359.9 L274.3,365.5 L274.1,371.5 L273.1,378.0 L266.4,388.1Z" fill="none" stroke="#42a07c" stroke-width="2" stroke-linejoin="round" opacity="0.55"/>
<g filter="url(#blur)" opacity="0.45"><path d="M288.0,401.8 L279.9,398.2 L275.9,394.7 L272.7,391.1 L270.1,387.6 L267.7,384.0 L265.6,380.4 L263.7,376.9 L262.0,373.3 L260.4,369.7 L259.0,366.2 L257.7,362.6 L256.4,359.1 L255.3,355.5 L254.3,351.9 L253.3,348.4 L252.4,344.8 L251.6,341.2 L250.9,337.7 L250.2,334.1 L249.6,330.6 L249.1,327.0 L248.6,323.4 L248.2,319.9 L247.9,316.3 L247.6,312.7 L247.4,309.2 L247.2,305.6 L247.1,302.1 L247.0,298.5 L247.0,294.9 L247.2,291.4 L247.6,287.8 L248.2,284.2 L249.0,280.7 L250.0,277.1 L251.3,273.6 L252.7,270.0 L254.4,266.4 L256.3,262.9 L258.5,259.3 L260.8,255.7 L263.5,252.2 L266.4,248.6 L269.7,245.1 L273.3,241.5 L277.3,237.9 L281.9,234.4 L288.0,230.8 L288.0,230.8 L294.1,234.4 L298.7,237.9 L302.7,241.5 L306.3,245.1 L309.6,248.6 L312.5,252.2 L315.2,255.7 L317.5,259.3 L319.7,262.9 L321.6,266.4 L323.3,270.0 L324.7,273.6 L326.0,277.1 L327.0,280.7 L327.8,284.2 L328.4,287.8 L328.8,291.4 L329.0,294.9 L329.0,298.5 L328.9,302.1 L328.8,305.6 L328.6,309.2 L328.4,312.7 L328.1,316.3 L327.8,319.9 L327.4,323.4 L326.9,327.0 L326.4,330.6 L325.8,334.1 L325.1,337.7 L324.4,341.2 L323.6,344.8 L322.7,348.4 L321.7,351.9 L320.7,355.5 L319.6,359.1 L318.3,362.6 L317.0,366.2 L315.6,369.7 L314.0,373.3 L312.3,376.9 L310.4,380.4 L308.3,384.0 L305.9,387.6 L303.3,391.1 L300.1,394.7 L296.1,398.2 L288.0,401.8Z" fill="#000" stroke="#000" stroke-width="12"/><path d="M302.1,407.7 L299.0,399.4 L298.6,394.1 L298.9,389.3 L299.5,384.9 L300.4,380.7 L301.4,376.7 L302.6,372.9 L303.9,369.1 L305.3,365.5 L306.8,362.0 L308.4,358.5 L310.1,355.1 L311.8,351.8 L313.6,348.5 L315.4,345.3 L317.3,342.2 L319.2,339.1 L321.2,336.1 L323.3,333.1 L325.4,330.2 L327.5,327.3 L329.7,324.4 L332.0,321.6 L334.2,318.8 L336.5,316.1 L338.9,313.4 L341.3,310.8 L343.7,308.2 L346.2,305.6 L348.7,303.1 L351.4,300.7 L354.2,298.5 L357.1,296.4 L360.2,294.4 L363.5,292.6 L366.9,291.0 L370.4,289.5 L374.1,288.2 L378.0,287.0 L382.0,286.0 L386.2,285.2 L390.6,284.5 L395.2,284.1 L400.0,283.9 L405.1,283.9 L410.5,284.2 L416.2,285.0 L423.1,286.7 L423.1,286.7 L424.8,293.6 L425.6,299.3 L425.9,304.7 L425.9,309.8 L425.7,314.6 L425.3,319.2 L424.6,323.6 L423.8,327.8 L422.8,331.8 L421.6,335.7 L420.3,339.4 L418.8,342.9 L417.2,346.3 L415.4,349.6 L413.4,352.7 L411.3,355.6 L409.1,358.4 L406.7,361.1 L404.2,363.6 L401.6,366.1 L399.0,368.5 L396.4,370.9 L393.7,373.3 L391.0,375.6 L388.2,377.8 L385.4,380.1 L382.5,382.3 L379.6,384.4 L376.7,386.5 L373.7,388.6 L370.7,390.6 L367.6,392.5 L364.5,394.4 L361.3,396.2 L358.0,398.0 L354.7,399.7 L351.3,401.4 L347.8,403.0 L344.3,404.5 L340.7,405.9 L336.9,407.2 L333.1,408.4 L329.1,409.4 L324.9,410.3 L320.5,410.9 L315.7,411.2 L310.4,410.8 L302.1,407.7Z" fill="#000" stroke="#000" stroke-width="12"/><path d="M308.0,421.8 L311.6,413.7 L315.1,409.7 L318.7,406.5 L322.2,403.9 L325.8,401.5 L329.4,399.4 L332.9,397.5 L336.5,395.8 L340.1,394.2 L343.6,392.8 L347.2,391.5 L350.8,390.2 L354.3,389.1 L357.9,388.1 L361.4,387.1 L365.0,386.2 L368.6,385.4 L372.1,384.7 L375.7,384.0 L379.2,383.4 L382.8,382.9 L386.4,382.4 L389.9,382.0 L393.5,381.7 L397.1,381.4 L400.6,381.2 L404.2,381.0 L407.8,380.9 L411.3,380.8 L414.9,380.8 L418.4,381.0 L422.0,381.4 L425.6,382.0 L429.1,382.8 L432.7,383.8 L436.2,385.1 L439.8,386.5 L443.4,388.2 L446.9,390.1 L450.5,392.3 L454.1,394.6 L457.6,397.3 L461.2,400.2 L464.8,403.5 L468.3,407.1 L471.9,411.1 L475.4,415.7 L479.0,421.8 L479.0,421.8 L475.4,427.9 L471.9,432.5 L468.3,436.5 L464.8,440.1 L461.2,443.4 L457.6,446.3 L454.1,449.0 L450.5,451.3 L446.9,453.5 L443.4,455.4 L439.8,457.1 L436.2,458.5 L432.7,459.8 L429.1,460.8 L425.6,461.6 L422.0,462.2 L418.4,462.6 L414.9,462.8 L411.3,462.8 L407.8,462.7 L404.2,462.6 L400.6,462.4 L397.1,462.2 L393.5,461.9 L389.9,461.6 L386.4,461.2 L382.8,460.7 L379.2,460.2 L375.7,459.6 L372.1,458.9 L368.6,458.2 L365.0,457.4 L361.4,456.5 L357.9,455.5 L354.3,454.5 L350.8,453.4 L347.2,452.1 L343.6,450.8 L340.1,449.4 L336.5,447.8 L332.9,446.1 L329.4,444.2 L325.8,442.1 L322.2,439.7 L318.7,437.1 L315.1,433.9 L311.6,429.9 L308.0,421.8Z" fill="#000" stroke="#000" stroke-width="12"/><path d="M302.1,435.9 L310.4,432.8 L315.7,432.4 L320.5,432.7 L324.9,433.3 L329.1,434.2 L333.1,435.2 L336.9,436.4 L340.7,437.7 L344.3,439.1 L347.8,440.6 L351.3,442.2 L354.7,443.9 L358.0,445.6 L361.3,447.4 L364.5,449.2 L367.6,451.1 L370.7,453.0 L373.7,455.0 L376.7,457.1 L379.6,459.2 L382.5,461.3 L385.4,463.5 L388.2,465.8 L391.0,468.0 L393.7,470.3 L396.4,472.7 L399.0,475.1 L401.6,477.5 L404.2,480.0 L406.7,482.5 L409.1,485.2 L411.3,488.0 L413.4,490.9 L415.4,494.0 L417.2,497.3 L418.8,500.7 L420.3,504.2 L421.6,507.9 L422.8,511.8 L423.8,515.8 L424.6,520.0 L425.3,524.4 L425.7,529.0 L425.9,533.8 L425.9,538.9 L425.6,544.3 L424.8,550.0 L423.1,556.9 L423.1,556.9 L416.2,558.6 L410.5,559.4 L405.1,559.7 L400.0,559.7 L395.2,559.5 L390.6,559.1 L386.2,558.4 L382.0,557.6 L378.0,556.6 L374.1,555.4 L370.4,554.1 L366.9,552.6 L363.5,551.0 L360.2,549.2 L357.1,547.2 L354.2,545.1 L351.4,542.9 L348.7,540.5 L346.2,538.0 L343.7,535.4 L341.3,532.8 L338.9,530.2 L336.5,527.5 L334.2,524.8 L332.0,522.0 L329.7,519.2 L327.5,516.3 L325.4,513.4 L323.3,510.5 L321.2,507.5 L319.2,504.5 L317.3,501.4 L315.4,498.3 L313.6,495.1 L311.8,491.8 L310.1,488.5 L308.4,485.1 L306.8,481.6 L305.3,478.1 L303.9,474.5 L302.6,470.7 L301.4,466.9 L300.4,462.9 L299.5,458.7 L298.9,454.3 L298.6,449.5 L299.0,444.2 L302.1,435.9Z" fill="#000" stroke="#000" stroke-width="12"/><path d="M288.0,441.8 L296.1,445.4 L300.1,448.9 L303.3,452.5 L305.9,456.1 L308.3,459.6 L310.4,463.2 L312.3,466.7 L314.0,470.3 L315.6,473.9 L317.0,477.4 L318.3,481.0 L319.6,484.6 L320.7,488.1 L321.7,491.7 L322.7,495.2 L323.6,498.8 L324.4,502.4 L325.1,505.9 L325.8,509.5 L326.4,513.0 L326.9,516.6 L327.4,520.2 L327.8,523.7 L328.1,527.3 L328.4,530.9 L328.6,534.4 L328.8,538.0 L328.9,541.5 L329.0,545.1 L329.0,548.7 L328.8,552.2 L328.4,555.8 L327.8,559.4 L327.0,562.9 L326.0,566.5 L324.7,570.0 L323.3,573.6 L321.6,577.2 L319.7,580.7 L317.5,584.3 L315.2,587.9 L312.5,591.4 L309.6,595.0 L306.3,598.5 L302.7,602.1 L298.7,605.7 L294.1,609.2 L288.0,612.8 L288.0,612.8 L281.9,609.2 L277.3,605.7 L273.3,602.1 L269.7,598.5 L266.4,595.0 L263.5,591.4 L260.8,587.9 L258.5,584.3 L256.3,580.7 L254.4,577.2 L252.7,573.6 L251.3,570.0 L250.0,566.5 L249.0,562.9 L248.2,559.4 L247.6,555.8 L247.2,552.2 L247.0,548.7 L247.0,545.1 L247.1,541.5 L247.2,538.0 L247.4,534.4 L247.6,530.9 L247.9,527.3 L248.2,523.7 L248.6,520.2 L249.1,516.6 L249.6,513.0 L250.2,509.5 L250.9,505.9 L251.6,502.4 L252.4,498.8 L253.3,495.2 L254.3,491.7 L255.3,488.1 L256.4,484.6 L257.7,481.0 L259.0,477.4 L260.4,473.9 L262.0,470.3 L263.7,466.7 L265.6,463.2 L267.7,459.6 L270.1,456.1 L272.7,452.5 L275.9,448.9 L279.9,445.4 L288.0,441.8Z" fill="#000" stroke="#000" stroke-width="12"/><path d="M273.9,435.9 L277.0,444.2 L277.4,449.5 L277.1,454.3 L276.5,458.7 L275.6,462.9 L274.6,466.9 L273.4,470.7 L272.1,474.5 L270.7,478.1 L269.2,481.6 L267.6,485.1 L265.9,488.5 L264.2,491.8 L262.4,495.1 L260.6,498.3 L258.7,501.4 L256.8,504.5 L254.8,507.5 L252.7,510.5 L250.6,513.4 L248.5,516.3 L246.3,519.2 L244.0,522.0 L241.8,524.8 L239.5,527.5 L237.1,530.2 L234.7,532.8 L232.3,535.4 L229.8,538.0 L227.3,540.5 L224.6,542.9 L221.8,545.1 L218.9,547.2 L215.8,549.2 L212.5,551.0 L209.1,552.6 L205.6,554.1 L201.9,555.4 L198.0,556.6 L194.0,557.6 L189.8,558.4 L185.4,559.1 L180.8,559.5 L176.0,559.7 L170.9,559.7 L165.5,559.4 L159.8,558.6 L152.9,556.9 L152.9,556.9 L151.2,550.0 L150.4,544.3 L150.1,538.9 L150.1,533.8 L150.3,529.0 L150.7,524.4 L151.4,520.0 L152.2,515.8 L153.2,511.8 L154.4,507.9 L155.7,504.2 L157.2,500.7 L158.8,497.3 L160.6,494.0 L162.6,490.9 L164.7,488.0 L166.9,485.2 L169.3,482.5 L171.8,480.0 L174.4,477.5 L177.0,475.1 L179.6,472.7 L182.3,470.3 L185.0,468.0 L187.8,465.8 L190.6,463.5 L193.5,461.3 L196.4,459.2 L199.3,457.1 L202.3,455.0 L205.3,453.0 L208.4,451.1 L211.5,449.2 L214.7,447.4 L218.0,445.6 L221.3,443.9 L224.7,442.2 L228.2,440.6 L231.7,439.1 L235.3,437.7 L239.1,436.4 L242.9,435.2 L246.9,434.2 L251.1,433.3 L255.5,432.7 L260.3,432.4 L265.6,432.8 L273.9,435.9Z" fill="#000" stroke="#000" stroke-width="12"/><path d="M268.0,421.8 L264.4,429.9 L260.9,433.9 L257.3,437.1 L253.8,439.7 L250.2,442.1 L246.6,444.2 L243.1,446.1 L239.5,447.8 L235.9,449.4 L232.4,450.8 L228.8,452.1 L225.2,453.4 L221.7,454.5 L218.1,455.5 L214.6,456.5 L211.0,457.4 L207.4,458.2 L203.9,458.9 L200.3,459.6 L196.8,460.2 L193.2,460.7 L189.6,461.2 L186.1,461.6 L182.5,461.9 L178.9,462.2 L175.4,462.4 L171.8,462.6 L168.2,462.7 L164.7,462.8 L161.1,462.8 L157.6,462.6 L154.0,462.2 L150.4,461.6 L146.9,460.8 L143.3,459.8 L139.8,458.5 L136.2,457.1 L132.6,455.4 L129.1,453.5 L125.5,451.3 L121.9,449.0 L118.4,446.3 L114.8,443.4 L111.2,440.1 L107.7,436.5 L104.1,432.5 L100.6,427.9 L97.0,421.8 L97.0,421.8 L100.6,415.7 L104.1,411.1 L107.7,407.1 L111.2,403.5 L114.8,400.2 L118.4,397.3 L121.9,394.6 L125.5,392.3 L129.1,390.1 L132.6,388.2 L136.2,386.5 L139.8,385.1 L143.3,383.8 L146.9,382.8 L150.4,382.0 L154.0,381.4 L157.6,381.0 L161.1,380.8 L164.7,380.8 L168.2,380.9 L171.8,381.0 L175.4,381.2 L178.9,381.4 L182.5,381.7 L186.1,382.0 L189.6,382.4 L193.2,382.9 L196.8,383.4 L200.3,384.0 L203.9,384.7 L207.4,385.4 L211.0,386.2 L214.6,387.1 L218.1,388.1 L221.7,389.1 L225.2,390.2 L228.8,391.5 L232.4,392.8 L235.9,394.2 L239.5,395.8 L243.1,397.5 L246.6,399.4 L250.2,401.5 L253.8,403.9 L257.3,406.5 L260.9,409.7 L264.4,413.7 L268.0,421.8Z" fill="#000" stroke="#000" stroke-width="12"/><path d="M273.9,407.7 L265.6,410.8 L260.3,411.2 L255.5,410.9 L251.1,410.3 L246.9,409.4 L242.9,408.4 L239.1,407.2 L235.3,405.9 L231.7,404.5 L228.2,403.0 L224.7,401.4 L221.3,399.7 L218.0,398.0 L214.7,396.2 L211.5,394.4 L208.4,392.5 L205.3,390.6 L202.3,388.6 L199.3,386.5 L196.4,384.4 L193.5,382.3 L190.6,380.1 L187.8,377.8 L185.0,375.6 L182.3,373.3 L179.6,370.9 L177.0,368.5 L174.4,366.1 L171.8,363.6 L169.3,361.1 L166.9,358.4 L164.7,355.6 L162.6,352.7 L160.6,349.6 L158.8,346.3 L157.2,342.9 L155.7,339.4 L154.4,335.7 L153.2,331.8 L152.2,327.8 L151.4,323.6 L150.7,319.2 L150.3,314.6 L150.1,309.8 L150.1,304.7 L150.4,299.3 L151.2,293.6 L152.9,286.7 L152.9,286.7 L159.8,285.0 L165.5,284.2 L170.9,283.9 L176.0,283.9 L180.8,284.1 L185.4,284.5 L189.8,285.2 L194.0,286.0 L198.0,287.0 L201.9,288.2 L205.6,289.5 L209.1,291.0 L212.5,292.6 L215.8,294.4 L218.9,296.4 L221.8,298.5 L224.6,300.7 L227.3,303.1 L229.8,305.6 L232.3,308.2 L234.7,310.8 L237.1,313.4 L239.5,316.1 L241.8,318.8 L244.0,321.6 L246.3,324.4 L248.5,327.3 L250.6,330.2 L252.7,333.1 L254.8,336.1 L256.8,339.1 L258.7,342.2 L260.6,345.3 L262.4,348.5 L264.2,351.8 L265.9,355.1 L267.6,358.5 L269.2,362.0 L270.7,365.5 L272.1,369.1 L273.4,372.9 L274.6,376.7 L275.6,380.7 L276.5,384.9 L277.1,389.3 L277.4,394.1 L277.0,399.4 L273.9,407.7Z" fill="#000" stroke="#000" stroke-width="12"/></g>
<path d="M288.0,401.8 L279.9,398.2 L275.9,394.7 L272.7,391.1 L270.1,387.6 L267.7,384.0 L265.6,380.4 L263.7,376.9 L262.0,373.3 L260.4,369.7 L259.0,366.2 L257.7,362.6 L256.4,359.1 L255.3,355.5 L254.3,351.9 L253.3,348.4 L252.4,344.8 L251.6,341.2 L250.9,337.7 L250.2,334.1 L249.6,330.6 L249.1,327.0 L248.6,323.4 L248.2,319.9 L247.9,316.3 L247.6,312.7 L247.4,309.2 L247.2,305.6 L247.1,302.1 L247.0,298.5 L247.0,294.9 L247.2,291.4 L247.6,287.8 L248.2,284.2 L249.0,280.7 L250.0,277.1 L251.3,273.6 L252.7,270.0 L254.4,266.4 L256.3,262.9 L258.5,259.3 L260.8,255.7 L263.5,252.2 L266.4,248.6 L269.7,245.1 L273.3,241.5 L277.3,237.9 L281.9,234.4 L288.0,230.8 L288.0,230.8 L294.1,234.4 L298.7,237.9 L302.7,241.5 L306.3,245.1 L309.6,248.6 L312.5,252.2 L315.2,255.7 L317.5,259.3 L319.7,262.9 L321.6,266.4 L323.3,270.0 L324.7,273.6 L326.0,277.1 L327.0,280.7 L327.8,284.2 L328.4,287.8 L328.8,291.4 L329.0,294.9 L329.0,298.5 L328.9,302.1 L328.8,305.6 L328.6,309.2 L328.4,312.7 L328.1,316.3 L327.8,319.9 L327.4,323.4 L326.9,327.0 L326.4,330.6 L325.8,334.1 L325.1,337.7 L324.4,341.2 L323.6,344.8 L322.7,348.4 L321.7,351.9 L320.7,355.5 L319.6,359.1 L318.3,362.6 L317.0,366.2 L315.6,369.7 L314.0,373.3 L312.3,376.9 L310.4,380.4 L308.3,384.0 L305.9,387.6 L303.3,391.1 L300.1,394.7 L296.1,398.2 L288.0,401.8Z" fill="none" stroke="#0f3f2c" stroke-width="10.5" stroke-linejoin="round"/>
<path d="M288.0,401.8 L279.9,398.2 L275.9,394.7 L272.7,391.1 L270.1,387.6 L267.7,384.0 L265.6,380.4 L263.7,376.9 L262.0,373.3 L260.4,369.7 L259.0,366.2 L257.7,362.6 L256.4,359.1 L255.3,355.5 L254.3,351.9 L253.3,348.4 L252.4,344.8 L251.6,341.2 L250.9,337.7 L250.2,334.1 L249.6,330.6 L249.1,327.0 L248.6,323.4 L248.2,319.9 L247.9,316.3 L247.6,312.7 L247.4,309.2 L247.2,305.6 L247.1,302.1 L247.0,298.5 L247.0,294.9 L247.2,291.4 L247.6,287.8 L248.2,284.2 L249.0,280.7 L250.0,277.1 L251.3,273.6 L252.7,270.0 L254.4,266.4 L256.3,262.9 L258.5,259.3 L260.8,255.7 L263.5,252.2 L266.4,248.6 L269.7,245.1 L273.3,241.5 L277.3,237.9 L281.9,234.4 L288.0,230.8 L288.0,230.8 L294.1,234.4 L298.7,237.9 L302.7,241.5 L306.3,245.1 L309.6,248.6 L312.5,252.2 L315.2,255.7 L317.5,259.3 L319.7,262.9 L321.6,266.4 L323.3,270.0 L324.7,273.6 L326.0,277.1 L327.0,280.7 L327.8,284.2 L328.4,287.8 L328.8,291.4 L329.0,294.9 L329.0,298.5 L328.9,302.1 L328.8,305.6 L328.6,309.2 L328.4,312.7 L328.1,316.3 L327.8,319.9 L327.4,323.4 L326.9,327.0 L326.4,330.6 L325.8,334.1 L325.1,337.7 L324.4,341.2 L323.6,344.8 L322.7,348.4 L321.7,351.9 L320.7,355.5 L319.6,359.1 L318.3,362.6 L317.0,366.2 L315.6,369.7 L314.0,373.3 L312.3,376.9 L310.4,380.4 L308.3,384.0 L305.9,387.6 L303.3,391.1 L300.1,394.7 L296.1,398.2 L288.0,401.8Z" fill="#216c4f"/>
<path d="M288.0,401.8 L273.4,391.1 L266.5,380.4 L261.5,369.7 L257.7,359.1 L254.7,348.4 L252.4,337.7 L250.7,327.0 L249.5,316.3 L248.8,305.6 L248.7,294.9 L249.8,284.2 L252.7,273.6 L257.6,262.9 L264.5,252.2 L273.9,241.5 L288.0,230.8 L288.0,230.8 M288.0,401.8 L274.6,391.1 L268.3,380.4 L263.7,369.7 L260.2,359.1 L257.5,348.4 L255.3,337.7 L253.8,327.0 L252.7,316.3 L252.1,305.6 L251.9,294.9 L253.0,284.2 L255.7,273.6 L260.1,262.9 L266.4,252.2 L275.1,241.5 L288.0,230.8 L288.0,230.8 M288.0,401.8 L275.8,391.1 L270.1,380.4 L266.0,369.7 L262.7,359.1 L260.2,348.4 L258.3,337.7 L256.9,327.0 L255.9,316.3 L255.4,305.6 L255.2,294.9 L256.2,284.2 L258.6,273.6 L262.6,262.9 L268.4,252.2 L276.2,241.5 L288.0,230.8 L288.0,230.8 M288.0,401.8 L277.0,391.1 L271.9,380.4 L268.2,369.7 L265.3,359.1 L263.0,348.4 L261.3,337.7 L260.0,327.0 L259.1,316.3 L258.6,305.6 L258.5,294.9 L259.3,284.2 L261.6,273.6 L265.2,262.9 L270.4,252.2 L277.4,241.5 L288.0,230.8 L288.0,230.8 M288.0,401.8 L278.2,391.1 L273.7,380.4 L270.4,369.7 L267.8,359.1 L265.8,348.4 L264.3,337.7 L263.1,327.0 L262.3,316.3 L261.9,305.6 L261.8,294.9 L262.5,284.2 L264.5,273.6 L267.7,262.9 L272.3,252.2 L278.6,241.5 L288.0,230.8 L288.0,230.8 M288.0,401.8 L279.5,391.1 L275.5,380.4 L272.6,369.7 L270.3,359.1 L268.6,348.4 L267.2,337.7 L266.2,327.0 L265.5,316.3 L265.1,305.6 L265.0,294.9 L265.7,284.2 L267.4,273.6 L270.3,262.9 L274.3,252.2 L279.8,241.5 L288.0,230.8 L288.0,230.8 M288.0,401.8 L280.7,391.1 L277.3,380.4 L274.8,369.7 L272.8,359.1 L271.3,348.4 L270.2,337.7 L269.3,327.0 L268.7,316.3 L268.4,305.6 L268.3,294.9 L268.9,284.2 L270.4,273.6 L272.8,262.9 L276.2,252.2 L280.9,241.5 L288.0,230.8 L288.0,230.8 M288.0,401.8 L281.9,391.1 L279.0,380.4 L277.0,369.7 L275.4,359.1 L274.1,348.4 L273.2,337.7 L272.4,327.0 L272.0,316.3 L271.7,305.6 L271.6,294.9 L272.1,284.2 L273.3,273.6 L275.3,262.9 L278.2,252.2 L282.1,241.5 L288.0,230.8 L288.0,230.8 M288.0,401.8 L283.1,391.1 L280.8,380.4 L279.2,369.7 L277.9,359.1 L276.9,348.4 L276.1,337.7 L275.6,327.0 L275.2,316.3 L274.9,305.6 L274.9,294.9 L275.3,284.2 L276.2,273.6 L277.9,262.9 L280.2,252.2 L283.3,241.5 L288.0,230.8 L288.0,230.8 M288.0,401.8 L284.3,391.1 L282.6,380.4 L281.4,369.7 L280.4,359.1 L279.7,348.4 L279.1,337.7 L278.7,327.0 L278.4,316.3 L278.2,305.6 L278.2,294.9 L278.4,284.2 L279.2,273.6 L280.4,262.9 L282.1,252.2 L284.5,241.5 L288.0,230.8 L288.0,230.8 M288.0,401.8 L285.6,391.1 L284.4,380.4 L283.6,369.7 L282.9,359.1 L282.4,348.4 L282.1,337.7 L281.8,327.0 L281.6,316.3 L281.5,305.6 L281.4,294.9 L281.6,284.2 L282.1,273.6 L282.9,262.9 L284.1,252.2 L285.6,241.5 L288.0,230.8 L288.0,230.8 M288.0,401.8 L286.8,391.1 L286.2,380.4 L285.8,369.7 L285.5,359.1 L285.2,348.4 L285.0,337.7 L284.9,327.0 L284.8,316.3 L284.7,305.6 L284.7,294.9 L284.8,284.2 L285.1,273.6 L285.5,262.9 L286.0,252.2 L286.8,241.5 L288.0,230.8 L288.0,230.8 M288.0,401.8 L288.0,391.1 L288.0,380.4 L288.0,369.7 L288.0,359.1 L288.0,348.4 L288.0,337.7 L288.0,327.0 L288.0,316.3 L288.0,305.6 L288.0,294.9 L288.0,284.2 L288.0,273.6 L288.0,262.9 L288.0,252.2 L288.0,241.5 L288.0,230.8 L288.0,230.8 M288.0,401.8 L289.2,391.1 L289.8,380.4 L290.2,369.7 L290.5,359.1 L290.8,348.4 L291.0,337.7 L291.1,327.0 L291.2,316.3 L291.3,305.6 L291.3,294.9 L291.2,284.2 L290.9,273.6 L290.5,262.9 L290.0,252.2 L289.2,241.5 L288.0,230.8 L288.0,230.8 M288.0,401.8 L290.4,391.1 L291.6,380.4 L292.4,369.7 L293.1,359.1 L293.6,348.4 L293.9,337.7 L294.2,327.0 L294.4,316.3 L294.5,305.6 L294.6,294.9 L294.4,284.2 L293.9,273.6 L293.1,262.9 L291.9,252.2 L290.4,241.5 L288.0,230.8 L288.0,230.8 M288.0,401.8 L291.7,391.1 L293.4,380.4 L294.6,369.7 L295.6,359.1 L296.3,348.4 L296.9,337.7 L297.3,327.0 L297.6,316.3 L297.8,305.6 L297.8,294.9 L297.6,284.2 L296.8,273.6 L295.6,262.9 L293.9,252.2 L291.5,241.5 L288.0,230.8 L288.0,230.8 M288.0,401.8 L292.9,391.1 L295.2,380.4 L296.8,369.7 L298.1,359.1 L299.1,348.4 L299.9,337.7 L300.4,327.0 L300.8,316.3 L301.1,305.6 L301.1,294.9 L300.7,284.2 L299.8,273.6 L298.1,262.9 L295.8,252.2 L292.7,241.5 L288.0,230.8 L288.0,230.8 M288.0,401.8 L294.1,391.1 L297.0,380.4 L299.0,369.7 L300.6,359.1 L301.9,348.4 L302.8,337.7 L303.6,327.0 L304.0,316.3 L304.3,305.6 L304.4,294.9 L303.9,284.2 L302.7,273.6 L300.7,262.9 L297.8,252.2 L293.9,241.5 L288.0,230.8 L288.0,230.8 M288.0,401.8 L295.3,391.1 L298.7,380.4 L301.2,369.7 L303.2,359.1 L304.7,348.4 L305.8,337.7 L306.7,327.0 L307.3,316.3 L307.6,305.6 L307.7,294.9 L307.1,284.2 L305.6,273.6 L303.2,262.9 L299.8,252.2 L295.1,241.5 L288.0,230.8 L288.0,230.8 M288.0,401.8 L296.5,391.1 L300.5,380.4 L303.4,369.7 L305.7,359.1 L307.4,348.4 L308.8,337.7 L309.8,327.0 L310.5,316.3 L310.9,305.6 L311.0,294.9 L310.3,284.2 L308.6,273.6 L305.7,262.9 L301.7,252.2 L296.2,241.5 L288.0,230.8 L288.0,230.8 M288.0,401.8 L297.8,391.1 L302.3,380.4 L305.6,369.7 L308.2,359.1 L310.2,348.4 L311.7,337.7 L312.9,327.0 L313.7,316.3 L314.1,305.6 L314.2,294.9 L313.5,284.2 L311.5,273.6 L308.3,262.9 L303.7,252.2 L297.4,241.5 L288.0,230.8 L288.0,230.8 M288.0,401.8 L299.0,391.1 L304.1,380.4 L307.8,369.7 L310.7,359.1 L313.0,348.4 L314.7,337.7 L316.0,327.0 L316.9,316.3 L317.4,305.6 L317.5,294.9 L316.7,284.2 L314.4,273.6 L310.8,262.9 L305.6,252.2 L298.6,241.5 L288.0,230.8 L288.0,230.8 M288.0,401.8 L300.2,391.1 L305.9,380.4 L310.0,369.7 L313.3,359.1 L315.8,348.4 L317.7,337.7 L319.1,327.0 L320.1,316.3 L320.6,305.6 L320.8,294.9 L319.8,284.2 L317.4,273.6 L313.4,262.9 L307.6,252.2 L299.8,241.5 L288.0,230.8 L288.0,230.8 M288.0,401.8 L301.4,391.1 L307.7,380.4 L312.3,369.7 L315.8,359.1 L318.5,348.4 L320.7,337.7 L322.2,327.0 L323.3,316.3 L323.9,305.6 L324.1,294.9 L323.0,284.2 L320.3,273.6 L315.9,262.9 L309.6,252.2 L300.9,241.5 L288.0,230.8 L288.0,230.8 M288.0,401.8 L302.6,391.1 L309.5,380.4 L314.5,369.7 L318.3,359.1 L321.3,348.4 L323.6,337.7 L325.3,327.0 L326.5,316.3 L327.2,305.6 L327.3,294.9 L326.2,284.2 L323.3,273.6 L318.4,262.9 L311.5,252.2 L302.1,241.5 L288.0,230.8 L288.0,230.8" clip-path="url(#c12)" fill="none" stroke="#4aa686" stroke-width="0.7" stroke-opacity="0.8"/>
<path d="M288.0,401.8 L279.9,398.2 L275.9,394.7 L272.7,391.1 L270.1,387.6 L267.7,384.0 L265.6,380.4 L263.7,376.9 L262.0,373.3 L260.4,369.7 L259.0,366.2 L257.7,362.6 L256.4,359.1 L255.3,355.5 L254.3,351.9 L253.3,348.4 L252.4,344.8 L251.6,341.2 L250.9,337.7 L250.2,334.1 L249.6,330.6 L249.1,327.0 L248.6,323.4 L248.2,319.9 L247.9,316.3 L247.6,312.7 L247.4,309.2 L247.2,305.6 L247.1,302.1 L247.0,298.5 L247.0,294.9 L247.2,291.4 L247.6,287.8 L248.2,284.2 L249.0,280.7 L250.0,277.1 L251.3,273.6 L252.7,270.0 L254.4,266.4 L256.3,262.9 L258.5,259.3 L260.8,255.7 L263.5,252.2 L266.4,248.6 L269.7,245.1 L273.3,241.5 L277.3,237.9 L281.9,234.4 L288.0,230.8 L288.0,230.8 L294.1,234.4 L298.7,237.9 L302.7,241.5 L306.3,245.1 L309.6,248.6 L312.5,252.2 L315.2,255.7 L317.5,259.3 L319.7,262.9 L321.6,266.4 L323.3,270.0 L324.7,273.6 L326.0,277.1 L327.0,280.7 L327.8,284.2 L328.4,287.8 L328.8,291.4 L329.0,294.9 L329.0,298.5 L328.9,302.1 L328.8,305.6 L328.6,309.2 L328.4,312.7 L328.1,316.3 L327.8,319.9 L327.4,323.4 L326.9,327.0 L326.4,330.6 L325.8,334.1 L325.1,337.7 L324.4,341.2 L323.6,344.8 L322.7,348.4 L321.7,351.9 L320.7,355.5 L319.6,359.1 L318.3,362.6 L317.0,366.2 L315.6,369.7 L314.0,373.3 L312.3,376.9 L310.4,380.4 L308.3,384.0 L305.9,387.6 L303.3,391.1 L300.1,394.7 L296.1,398.2 L288.0,401.8Z" clip-path="url(#c12)" fill="none" stroke="#0c3a28" stroke-width="15" stroke-opacity="0.35" stroke-linejoin="round"/>
<path d="M288.0,401.8 L279.9,398.2 L275.9,394.7 L272.7,391.1 L270.1,387.6 L267.7,384.0 L265.6,380.4 L263.7,376.9 L262.0,373.3 L260.4,369.7 L259.0,366.2 L257.7,362.6 L256.4,359.1 L255.3,355.5 L254.3,351.9 L253.3,348.4 L252.4,344.8 L251.6,341.2 L250.9,337.7 L250.2,334.1 L249.6,330.6 L249.1,327.0 L248.6,323.4 L248.2,319.9 L247.9,316.3 L247.6,312.7 L247.4,309.2 L247.2,305.6 L247.1,302.1 L247.0,298.5 L247.0,294.9 L247.2,291.4 L247.6,287.8 L248.2,284.2 L249.0,280.7 L250.0,277.1 L251.3,273.6 L252.7,270.0 L254.4,266.4 L256.3,262.9 L258.5,259.3 L260.8,255.7 L263.5,252.2 L266.4,248.6 L269.7,245.1 L273.3,241.5 L277.3,237.9 L281.9,234.4 L288.0,230.8 L288.0,230.8 L294.1,234.4 L298.7,237.9 L302.7,241.5 L306.3,245.1 L309.6,248.6 L312.5,252.2 L315.2,255.7 L317.5,259.3 L319.7,262.9 L321.6,266.4 L323.3,270.0 L324.7,273.6 L326.0,277.1 L327.0,280.7 L327.8,284.2 L328.4,287.8 L328.8,291.4 L329.0,294.9 L329.0,298.5 L328.9,302.1 L328.8,305.6 L328.6,309.2 L328.4,312.7 L328.1,316.3 L327.8,319.9 L327.4,323.4 L326.9,327.0 L326.4,330.6 L325.8,334.1 L325.1,337.7 L324.4,341.2 L323.6,344.8 L322.7,348.4 L321.7,351.9 L320.7,355.5 L319.6,359.1 L318.3,362.6 L317.0,366.2 L315.6,369.7 L314.0,373.3 L312.3,376.9 L310.4,380.4 L308.3,384.0 L305.9,387.6 L303.3,391.1 L300.1,394.7 L296.1,398.2 L288.0,401.8Z" fill="none" stroke="#257c5b" stroke-width="8" stroke-linejoin="round"/>
<path d="M288.0,401.8 L279.9,398.2 L275.9,394.7 L272.7,391.1 L270.1,387.6 L267.7,384.0 L265.6,380.4 L263.7,376.9 L262.0,373.3 L260.4,369.7 L259.0,366.2 L257.7,362.6 L256.4,359.1 L255.3,355.5 L254.3,351.9 L253.3,348.4 L252.4,344.8 L251.6,341.2 L250.9,337.7 L250.2,334.1 L249.6,330.6 L249.1,327.0 L248.6,323.4 L248.2,319.9 L247.9,316.3 L247.6,312.7 L247.4,309.2 L247.2,305.6 L247.1,302.1 L247.0,298.5 L247.0,294.9 L247.2,291.4 L247.6,287.8 L248.2,284.2 L249.0,280.7 L250.0,277.1 L251.3,273.6 L252.7,270.0 L254.4,266.4 L256.3,262.9 L258.5,259.3 L260.8,255.7 L263.5,252.2 L266.4,248.6 L269.7,245.1 L273.3,241.5 L277.3,237.9 L281.9,234.4 L288.0,230.8 L288.0,230.8 L294.1,234.4 L298.7,237.9 L302.7,241.5 L306.3,245.1 L309.6,248.6 L312.5,252.2 L315.2,255.7 L317.5,259.3 L319.7,262.9 L321.6,266.4 L323.3,270.0 L324.7,273.6 L326.0,277.1 L327.0,280.7 L327.8,284.2 L328.4,287.8 L328.8,291.4 L329.0,294.9 L329.0,298.5 L328.9,302.1 L328.8,305.6 L328.6,309.2 L328.4,312.7 L328.1,316.3 L327.8,319.9 L327.4,323.4 L326.9,327.0 L326.4,330.6 L325.8,334.1 L325.1,337.7 L324.4,341.2 L323.6,344.8 L322.7,348.4 L321.7,351.9 L320.7,355.5 L319.6,359.1 L318.3,362.6 L317.0,366.2 L315.6,369.7 L314.0,373.3 L312.3,376.9 L310.4,380.4 L308.3,384.0 L305.9,387.6 L303.3,391.1 L300.1,394.7 L296.1,398.2 L288.0,401.8Z" fill="none" stroke="#42a07c" stroke-width="2" stroke-linejoin="round" opacity="0.55"/>
<path d="M302.1,407.7 L299.0,399.4 L298.6,394.1 L298.9,389.3 L299.5,384.9 L300.4,380.7 L301.4,376.7 L302.6,372.9 L303.9,369.1 L305.3,365.5 L306.8,362.0 L308.4,358.5 L310.1,355.1 L311.8,351.8 L313.6,348.5 L315.4,345.3 L317.3,342.2 L319.2,339.1 L321.2,336.1 L323.3,333.1 L325.4,330.2 L327.5,327.3 L329.7,324.4 L332.0,321.6 L334.2,318.8 L336.5,316.1 L338.9,313.4 L341.3,310.8 L343.7,308.2 L346.2,305.6 L348.7,303.1 L351.4,300.7 L354.2,298.5 L357.1,296.4 L360.2,294.4 L363.5,292.6 L366.9,291.0 L370.4,289.5 L374.1,288.2 L378.0,287.0 L382.0,286.0 L386.2,285.2 L390.6,284.5 L395.2,284.1 L400.0,283.9 L405.1,283.9 L410.5,284.2 L416.2,285.0 L423.1,286.7 L423.1,286.7 L424.8,293.6 L425.6,299.3 L425.9,304.7 L425.9,309.8 L425.7,314.6 L425.3,319.2 L424.6,323.6 L423.8,327.8 L422.8,331.8 L421.6,335.7 L420.3,339.4 L418.8,342.9 L417.2,346.3 L415.4,349.6 L413.4,352.7 L411.3,355.6 L409.1,358.4 L406.7,361.1 L404.2,363.6 L401.6,366.1 L399.0,368.5 L396.4,370.9 L393.7,373.3 L391.0,375.6 L388.2,377.8 L385.4,380.1 L382.5,382.3 L379.6,384.4 L376.7,386.5 L373.7,388.6 L370.7,390.6 L367.6,392.5 L364.5,394.4 L361.3,396.2 L358.0,398.0 L354.7,399.7 L351.3,401.4 L347.8,403.0 L344.3,404.5 L340.7,405.9 L336.9,407.2 L333.1,408.4 L329.1,409.4 L324.9,410.3 L320.5,410.9 L315.7,411.2 L310.4,410.8 L302.1,407.7Z" fill="none" stroke="#0f3f2c" stroke-width="10.5" stroke-linejoin="round"/>
<path d="M302.1,407.7 L299.0,399.4 L298.6,394.1 L298.9,389.3 L299.5,384.9 L300.4,380.7 L301.4,376.7 L302.6,372.9 L303.9,369.1 L305.3,365.5 L306.8,362.0 L308.4,358.5 L310.1,355.1 L311.8,351.8 L313.6,348.5 L315.4,345.3 L317.3,342.2 L319.2,339.1 L321.2,336.1 L323.3,333.1 L325.4,330.2 L327.5,327.3 L329.7,324.4 L332.0,321.6 L334.2,318.8 L336.5,316.1 L338.9,313.4 L341.3,310.8 L343.7,308.2 L346.2,305.6 L348.7,303.1 L351.4,300.7 L354.2,298.5 L357.1,296.4 L360.2,294.4 L363.5,292.6 L366.9,291.0 L370.4,289.5 L374.1,288.2 L378.0,287.0 L382.0,286.0 L386.2,285.2 L390.6,284.5 L395.2,284.1 L400.0,283.9 L405.1,283.9 L410.5,284.2 L416.2,285.0 L423.1,286.7 L423.1,286.7 L424.8,293.6 L425.6,299.3 L425.9,304.7 L425.9,309.8 L425.7,314.6 L425.3,319.2 L424.6,323.6 L423.8,327.8 L422.8,331.8 L421.6,335.7 L420.3,339.4 L418.8,342.9 L417.2,346.3 L415.4,349.6 L413.4,352.7 L411.3,355.6 L409.1,358.4 L406.7,361.1 L404.2,363.6 L401.6,366.1 L399.0,368.5 L396.4,370.9 L393.7,373.3 L391.0,375.6 L388.2,377.8 L385.4,380.1 L382.5,382.3 L379.6,384.4 L376.7,386.5 L373.7,388.6 L370.7,390.6 L367.6,392.5 L364.5,394.4 L361.3,396.2 L358.0,398.0 L354.7,399.7 L351.3,401.4 L347.8,403.0 L344.3,404.5 L340.7,405.9 L336.9,407.2 L333.1,408.4 L329.1,409.4 L324.9,410.3 L320.5,410.9 L315.7,411.2 L310.4,410.8 L302.1,407.7Z" fill="#216c4f"/>
<path d="M302.1,407.7 L299.3,389.7 L302.1,377.4 L306.1,366.3 L310.9,356.0 L316.4,346.3 L322.3,337.1 L328.6,328.4 L335.4,320.0 L342.5,311.9 L349.9,304.3 L358.3,297.5 L367.9,292.0 L378.9,287.9 L391.3,285.2 L405.5,284.3 L423.1,286.7 L423.1,286.7 M302.1,407.7 L300.2,390.6 L303.3,378.6 L307.7,367.8 L312.7,357.8 L318.3,348.3 L324.4,339.2 L330.8,330.6 L337.6,322.2 L344.8,314.2 L352.2,306.6 L360.5,299.8 L370.0,294.1 L380.7,289.7 L392.7,286.6 L406.3,285.1 L423.1,286.7 L423.1,286.7 M302.1,407.7 L301.1,391.5 L304.6,379.9 L309.2,369.4 L314.5,359.6 L320.3,350.2 L326.5,341.3 L333.0,332.8 L339.9,324.5 L347.1,316.6 L354.5,308.9 L362.8,302.0 L372.1,296.2 L382.5,291.5 L394.1,288.0 L407.2,286.0 L423.1,286.7 L423.1,286.7 M302.1,407.7 L301.9,392.3 L305.9,381.2 L310.8,371.0 L316.3,361.4 L322.3,352.2 L328.6,343.4 L335.2,335.0 L342.2,326.8 L349.4,318.9 L356.8,311.2 L365.0,304.3 L374.1,298.3 L384.3,293.3 L395.5,289.4 L408.0,286.8 L423.1,286.7 L423.1,286.7 M302.1,407.7 L302.8,393.2 L307.1,382.4 L312.3,372.5 L318.1,363.1 L324.2,354.2 L330.7,345.5 L337.4,337.2 L344.4,329.0 L351.7,321.2 L359.2,313.5 L367.3,306.5 L376.2,300.3 L386.0,295.1 L396.9,290.8 L408.8,287.6 L423.1,286.7 L423.1,286.7 M302.1,407.7 L303.7,394.1 L308.4,383.7 L313.9,374.1 L319.9,364.9 L326.2,356.1 L332.8,347.6 L339.6,339.4 L346.7,331.3 L354.0,323.5 L361.5,315.9 L369.5,308.8 L378.3,302.4 L387.8,296.9 L398.2,292.2 L409.7,288.5 L423.1,286.7 L423.1,286.7 M302.1,407.7 L304.5,394.9 L309.7,384.9 L315.5,375.6 L321.7,366.7 L328.2,358.1 L334.9,349.7 L341.8,341.6 L349.0,333.6 L356.3,325.8 L363.8,318.2 L371.8,311.0 L380.4,304.5 L389.6,298.7 L399.6,293.5 L410.5,289.3 L423.1,286.7 L423.1,286.7 M302.1,407.7 L305.4,395.8 L310.9,386.2 L317.0,377.2 L323.4,368.5 L330.1,360.1 L337.0,351.8 L344.0,343.8 L351.3,335.9 L358.6,328.1 L366.1,320.5 L374.0,313.3 L382.4,306.6 L391.4,300.5 L401.0,294.9 L411.3,290.1 L423.1,286.7 L423.1,286.7 M302.1,407.7 L306.2,396.6 L312.2,387.5 L318.6,378.7 L325.2,370.3 L332.1,362.0 L339.1,353.9 L346.2,346.0 L353.5,338.1 L360.9,330.4 L368.4,322.8 L376.3,315.5 L384.5,308.7 L393.2,302.2 L402.4,296.3 L412.2,291.0 L423.1,286.7 L423.1,286.7 M302.1,407.7 L307.1,397.5 L313.5,388.7 L320.1,380.3 L327.0,372.1 L334.0,364.0 L341.2,356.0 L348.4,348.2 L355.8,340.4 L363.2,332.7 L370.8,325.1 L378.5,317.8 L386.6,310.7 L395.0,304.0 L403.8,297.7 L413.0,291.8 L423.1,286.7 L423.1,286.7 M302.1,407.7 L308.0,398.4 L314.7,390.0 L321.7,381.9 L328.8,373.9 L336.0,365.9 L343.3,358.1 L350.6,350.4 L358.1,342.7 L365.5,335.0 L373.1,327.4 L380.8,320.0 L388.7,312.8 L396.8,305.8 L405.2,299.1 L413.8,292.6 L423.1,286.7 L423.1,286.7 M302.1,407.7 L308.8,399.2 L316.0,391.3 L323.3,383.4 L330.6,375.6 L338.0,367.9 L345.4,360.2 L352.8,352.6 L360.3,344.9 L367.8,337.3 L375.4,329.8 L383.0,322.3 L390.8,314.9 L398.6,307.6 L406.6,300.5 L414.7,293.5 L423.1,286.7 L423.1,286.7 M302.1,407.7 L309.7,400.1 L317.3,392.5 L324.8,385.0 L332.4,377.4 L339.9,369.9 L347.5,362.3 L355.0,354.8 L362.6,347.2 L370.2,339.6 L377.7,332.1 L385.3,324.5 L392.8,317.0 L400.4,309.4 L407.9,301.9 L415.5,294.3 L423.1,286.7 L423.1,286.7 M302.1,407.7 L310.6,401.0 L318.5,393.8 L326.4,386.5 L334.2,379.2 L341.9,371.8 L349.6,364.4 L357.2,357.0 L364.9,349.5 L372.5,342.0 L380.0,334.4 L387.5,326.8 L394.9,319.0 L402.2,311.2 L409.3,303.2 L416.3,295.1 L423.1,286.7 L423.1,286.7 M302.1,407.7 L311.4,401.8 L319.8,395.1 L327.9,388.1 L335.9,381.0 L343.9,373.8 L351.7,366.5 L359.4,359.2 L367.1,351.7 L374.8,344.3 L382.4,336.7 L389.8,329.0 L397.0,321.1 L404.0,313.0 L410.7,304.6 L417.2,296.0 L423.1,286.7 L423.1,286.7 M302.1,407.7 L312.3,402.7 L321.1,396.3 L329.5,389.7 L337.7,382.8 L345.8,375.8 L353.8,368.6 L361.6,361.4 L369.4,354.0 L377.1,346.6 L384.7,339.0 L392.0,331.3 L399.1,323.2 L405.8,314.8 L412.1,306.0 L418.0,296.8 L423.1,286.7 L423.1,286.7 M302.1,407.7 L313.2,403.6 L322.3,397.6 L331.1,391.2 L339.5,384.6 L347.8,377.7 L355.9,370.7 L363.8,363.6 L371.7,356.3 L379.4,348.9 L387.0,341.4 L394.3,333.5 L401.1,325.3 L407.6,316.6 L413.5,307.4 L418.8,297.6 L423.1,286.7 L423.1,286.7 M302.1,407.7 L314.0,404.4 L323.6,398.9 L332.6,392.8 L341.3,386.4 L349.7,379.7 L358.0,372.8 L366.0,365.8 L373.9,358.5 L381.7,351.2 L389.3,343.7 L396.5,335.8 L403.2,327.4 L409.3,318.4 L414.9,308.8 L419.7,298.5 L423.1,286.7 L423.1,286.7 M302.1,407.7 L314.9,405.3 L324.9,400.1 L334.2,394.3 L343.1,388.1 L351.7,381.6 L360.1,374.9 L368.2,368.0 L376.2,360.8 L384.0,353.5 L391.6,346.0 L398.8,338.0 L405.3,329.4 L411.1,320.2 L416.3,310.2 L420.5,299.3 L423.1,286.7 L423.1,286.7 M302.1,407.7 L315.7,406.1 L326.1,401.4 L335.7,395.9 L344.9,389.9 L353.7,383.6 L362.2,377.0 L370.4,370.2 L378.5,363.1 L386.3,355.8 L393.9,348.3 L401.0,340.3 L407.4,331.5 L412.9,322.0 L417.6,311.6 L421.3,300.1 L423.1,286.7 L423.1,286.7 M302.1,407.7 L316.6,407.0 L327.4,402.7 L337.3,397.5 L346.7,391.7 L355.6,385.6 L364.3,379.1 L372.6,372.4 L380.8,365.4 L388.6,358.1 L396.3,350.6 L403.3,342.5 L409.5,333.6 L414.7,323.8 L419.0,312.9 L422.2,301.0 L423.1,286.7 L423.1,286.7 M302.1,407.7 L317.5,407.9 L328.6,403.9 L338.8,399.0 L348.4,393.5 L357.6,387.5 L366.4,381.2 L374.8,374.6 L383.0,367.6 L390.9,360.4 L398.6,353.0 L405.5,344.8 L411.5,335.7 L416.5,325.5 L420.4,314.3 L423.0,301.8 L423.1,286.7 L423.1,286.7 M302.1,407.7 L318.3,408.7 L329.9,405.2 L340.4,400.6 L350.2,395.3 L359.6,389.5 L368.5,383.3 L377.0,376.8 L385.3,369.9 L393.2,362.7 L400.9,355.3 L407.8,347.0 L413.6,337.7 L418.3,327.3 L421.8,315.7 L423.8,302.6 L423.1,286.7 L423.1,286.7 M302.1,407.7 L319.2,409.6 L331.2,406.5 L342.0,402.1 L352.0,397.1 L361.5,391.5 L370.6,385.4 L379.2,379.0 L387.6,372.2 L395.6,365.0 L403.2,357.6 L410.0,349.3 L415.7,339.8 L420.1,329.1 L423.2,317.1 L424.7,303.5 L423.1,286.7 L423.1,286.7 M302.1,407.7 L320.1,410.5 L332.4,407.7 L343.5,403.7 L353.8,398.9 L363.5,393.4 L372.7,387.5 L381.4,381.2 L389.8,374.4 L397.9,367.3 L405.5,359.9 L412.3,351.5 L417.8,341.9 L421.9,330.9 L424.6,318.5 L425.5,304.3 L423.1,286.7 L423.1,286.7" clip-path="url(#c13)" fill="none" stroke="#4aa686" stroke-width="0.7" stroke-opacity="0.8"/>
<path d="M302.1,407.7 L299.0,399.4 L298.6,394.1 L298.9,389.3 L299.5,384.9 L300.4,380.7 L301.4,376.7 L302.6,372.9 L303.9,369.1 L305.3,365.5 L306.8,362.0 L308.4,358.5 L310.1,355.1 L311.8,351.8 L313.6,348.5 L315.4,345.3 L317.3,342.2 L319.2,339.1 L321.2,336.1 L323.3,333.1 L325.4,330.2 L327.5,327.3 L329.7,324.4 L332.0,321.6 L334.2,318.8 L336.5,316.1 L338.9,313.4 L341.3,310.8 L343.7,308.2 L346.2,305.6 L348.7,303.1 L351.4,300.7 L354.2,298.5 L357.1,296.4 L360.2,294.4 L363.5,292.6 L366.9,291.0 L370.4,289.5 L374.1,288.2 L378.0,287.0 L382.0,286.0 L386.2,285.2 L390.6,284.5 L395.2,284.1 L400.0,283.9 L405.1,283.9 L410.5,284.2 L416.2,285.0 L423.1,286.7 L423.1,286.7 L424.8,293.6 L425.6,299.3 L425.9,304.7 L425.9,309.8 L425.7,314.6 L425.3,319.2 L424.6,323.6 L423.8,327.8 L422.8,331.8 L421.6,335.7 L420.3,339.4 L418.8,342.9 L417.2,346.3 L415.4,349.6 L413.4,352.7 L411.3,355.6 L409.1,358.4 L406.7,361.1 L404.2,363.6 L401.6,366.1 L399.0,368.5 L396.4,370.9 L393.7,373.3 L391.0,375.6 L388.2,377.8 L385.4,380.1 L382.5,382.3 L379.6,384.4 L376.7,386.5 L373.7,388.6 L370.7,390.6 L367.6,392.5 L364.5,394.4 L361.3,396.2 L358.0,398.0 L354.7,399.7 L351.3,401.4 L347.8,403.0 L344.3,404.5 L340.7,405.9 L336.9,407.2 L333.1,408.4 L329.1,409.4 L324.9,410.3 L320.5,410.9 L315.7,411.2 L310.4,410.8 L302.1,407.7Z" clip-path="url(#c13)" fill="none" stroke="#0c3a28" stroke-width="15" stroke-opacity="0.35" stroke-linejoin="round"/>
<path d="M302.1,407.7 L299.0,399.4 L298.6,394.1 L298.9,389.3 L299.5,384.9 L300.4,380.7 L301.4,376.7 L302.6,372.9 L303.9,369.1 L305.3,365.5 L306.8,362.0 L308.4,358.5 L310.1,355.1 L311.8,351.8 L313.6,348.5 L315.4,345.3 L317.3,342.2 L319.2,339.1 L321.2,336.1 L323.3,333.1 L325.4,330.2 L327.5,327.3 L329.7,324.4 L332.0,321.6 L334.2,318.8 L336.5,316.1 L338.9,313.4 L341.3,310.8 L343.7,308.2 L346.2,305.6 L348.7,303.1 L351.4,300.7 L354.2,298.5 L357.1,296.4 L360.2,294.4 L363.5,292.6 L366.9,291.0 L370.4,289.5 L374.1,288.2 L378.0,287.0 L382.0,286.0 L386.2,285.2 L390.6,284.5 L395.2,284.1 L400.0,283.9 L405.1,283.9 L410.5,284.2 L416.2,285.0 L423.1,286.7 L423.1,286.7 L424.8,293.6 L425.6,299.3 L425.9,304.7 L425.9,309.8 L425.7,314.6 L425.3,319.2 L424.6,323.6 L423.8,327.8 L422.8,331.8 L421.6,335.7 L420.3,339.4 L418.8,342.9 L417.2,346.3 L415.4,349.6 L413.4,352.7 L411.3,355.6 L409.1,358.4 L406.7,361.1 L404.2,363.6 L401.6,366.1 L399.0,368.5 L396.4,370.9 L393.7,373.3 L391.0,375.6 L388.2,377.8 L385.4,380.1 L382.5,382.3 L379.6,384.4 L376.7,386.5 L373.7,388.6 L370.7,390.6 L367.6,392.5 L364.5,394.4 L361.3,396.2 L358.0,398.0 L354.7,399.7 L351.3,401.4 L347.8,403.0 L344.3,404.5 L340.7,405.9 L336.9,407.2 L333.1,408.4 L329.1,409.4 L324.9,410.3 L320.5,410.9 L315.7,411.2 L310.4,410.8 L302.1,407.7Z" fill="none" stroke="#257c5b" stroke-width="8" stroke-linejoin="round"/>
<path d="M302.1,407.7 L299.0,399.4 L298.6,394.1 L298.9,389.3 L299.5,384.9 L300.4,380.7 L301.4,376.7 L302.6,372.9 L303.9,369.1 L305.3,365.5 L306.8,362.0 L308.4,358.5 L310.1,355.1 L311.8,351.8 L313.6,348.5 L315.4,345.3 L317.3,342.2 L319.2,339.1 L321.2,336.1 L323.3,333.1 L325.4,330.2 L327.5,327.3 L329.7,324.4 L332.0,321.6 L334.2,318.8 L336.5,316.1 L338.9,313.4 L341.3,310.8 L343.7,308.2 L346.2,305.6 L348.7,303.1 L351.4,300.7 L354.2,298.5 L357.1,296.4 L360.2,294.4 L363.5,292.6 L366.9,291.0 L370.4,289.5 L374.1,288.2 L378.0,287.0 L382.0,286.0 L386.2,285.2 L390.6,284.5 L395.2,284.1 L400.0,283.9 L405.1,283.9 L410.5,284.2 L416.2,285.0 L423.1,286.7 L423.1,286.7 L424.8,293.6 L425.6,299.3 L425.9,304.7 L425.9,309.8 L425.7,314.6 L425.3,319.2 L424.6,323.6 L423.8,327.8 L422.8,331.8 L421.6,335.7 L420.3,339.4 L418.8,342.9 L417.2,346.3 L415.4,349.6 L413.4,352.7 L411.3,355.6 L409.1,358.4 L406.7,361.1 L404.2,363.6 L401.6,366.1 L399.0,368.5 L396.4,370.9 L393.7,373.3 L391.0,375.6 L388.2,377.8 L385.4,380.1 L382.5,382.3 L379.6,384.4 L376.7,386.5 L373.7,388.6 L370.7,390.6 L367.6,392.5 L364.5,394.4 L361.3,396.2 L358.0,398.0 L354.7,399.7 L351.3,401.4 L347.8,403.0 L344.3,404.5 L340.7,405.9 L336.9,407.2 L333.1,408.4 L329.1,409.4 L324.9,410.3 L320.5,410.9 L315.7,411.2 L310.4,410.8 L302.1,407.7Z" fill="none" stroke="#42a07c" stroke-width="2" stroke-linejoin="round" opacity="0.55"/>
<path d="M308.0,421.8 L311.6,413.7 L315.1,409.7 L318.7,406.5 L322.2,403.9 L325.8,401.5 L329.4,399.4 L332.9,397.5 L336.5,395.8 L340.1,394.2 L343.6,392.8 L347.2,391.5 L350.8,390.2 L354.3,389.1 L357.9,388.1 L361.4,387.1 L365.0,386.2 L368.6,385.4 L372.1,384.7 L375.7,384.0 L379.2,383.4 L382.8,382.9 L386.4,382.4 L389.9,382.0 L393.5,381.7 L397.1,381.4 L400.6,381.2 L404.2,381.0 L407.8,380.9 L411.3,380.8 L414.9,380.8 L418.4,381.0 L422.0,381.4 L425.6,382.0 L429.1,382.8 L432.7,383.8 L436.2,385.1 L439.8,386.5 L443.4,388.2 L446.9,390.1 L450.5,392.3 L454.1,394.6 L457.6,397.3 L461.2,400.2 L464.8,403.5 L468.3,407.1 L471.9,411.1 L475.4,415.7 L479.0,421.8 L479.0,421.8 L475.4,427.9 L471.9,432.5 L468.3,436.5 L464.8,440.1 L461.2,443.4 L457.6,446.3 L454.1,449.0 L450.5,451.3 L446.9,453.5 L443.4,455.4 L439.8,457.1 L436.2,458.5 L432.7,459.8 L429.1,460.8 L425.6,461.6 L422.0,462.2 L418.4,462.6 L414.9,462.8 L411.3,462.8 L407.8,462.7 L404.2,462.6 L400.6,462.4 L397.1,462.2 L393.5,461.9 L389.9,461.6 L386.4,461.2 L382.8,460.7 L379.2,460.2 L375.7,459.6 L372.1,458.9 L368.6,458.2 L365.0,457.4 L361.4,456.5 L357.9,455.5 L354.3,454.5 L350.8,453.4 L347.2,452.1 L343.6,450.8 L340.1,449.4 L336.5,447.8 L332.9,446.1 L329.4,444.2 L325.8,442.1 L322.2,439.7 L318.7,437.1 L315.1,433.9 L311.6,429.9 L308.0,421.8Z" fill="none" stroke="#0f3f2c" stroke-width="10.5" stroke-linejoin="round"/>
<path d="M308.0,421.8 L311.6,413.7 L315.1,409.7 L318.7,406.5 L322.2,403.9 L325.8,401.5 L329.4,399.4 L332.9,397.5 L336.5,395.8 L340.1,394.2 L343.6,392.8 L347.2,391.5 L350.8,390.2 L354.3,389.1 L357.9,388.1 L361.4,387.1 L365.0,386.2 L368.6,385.4 L372.1,384.7 L375.7,384.0 L379.2,383.4 L382.8,382.9 L386.4,382.4 L389.9,382.0 L393.5,381.7 L397.1,381.4 L400.6,381.2 L404.2,381.0 L407.8,380.9 L411.3,380.8 L414.9,380.8 L418.4,381.0 L422.0,381.4 L425.6,382.0 L429.1,382.8 L432.7,383.8 L436.2,385.1 L439.8,386.5 L443.4,388.2 L446.9,390.1 L450.5,392.3 L454.1,394.6 L457.6,397.3 L461.2,400.2 L464.8,403.5 L468.3,407.1 L471.9,411.1 L475.4,415.7 L479.0,421.8 L479.0,421.8 L475.4,427.9 L471.9,432.5 L468.3,436.5 L464.8,440.1 L461.2,443.4 L457.6,446.3 L454.1,449.0 L450.5,451.3 L446.9,453.5 L443.4,455.4 L439.8,457.1 L436.2,458.5 L432.7,459.8 L429.1,460.8 L425.6,461.6 L422.0,462.2 L418.4,462.6 L414.9,462.8 L411.3,462.8 L407.8,462.7 L404.2,462.6 L400.6,462.4 L397.1,462.2 L393.5,461.9 L389.9,461.6 L386.4,461.2 L382.8,460.7 L379.2,460.2 L375.7,459.6 L372.1,458.9 L368.6,458.2 L365.0,457.4 L361.4,456.5 L357.9,455.5 L354.3,454.5 L350.8,453.4 L347.2,452.1 L343.6,450.8 L340.1,449.4 L336.5,447.8 L332.9,446.1 L329.4,444.2 L325.8,442.1 L322.2,439.7 L318.7,437.1 L315.1,433.9 L311.6,429.9 L308.0,421.8Z" fill="#216c4f"/>
<path d="M308.0,421.8 L318.7,407.2 L329.4,400.3 L340.1,395.3 L350.8,391.5 L361.4,388.5 L372.1,386.2 L382.8,384.5 L393.5,383.3 L404.2,382.6 L414.9,382.5 L425.6,383.6 L436.2,386.5 L446.9,391.4 L457.6,398.3 L468.3,407.7 L479.0,421.8 L479.0,421.8 M308.0,421.8 L318.7,408.4 L329.4,402.1 L340.1,397.5 L350.8,394.0 L361.4,391.3 L372.1,389.1 L382.8,387.6 L393.5,386.5 L404.2,385.9 L414.9,385.7 L425.6,386.8 L436.2,389.5 L446.9,393.9 L457.6,400.2 L468.3,408.9 L479.0,421.8 L479.0,421.8 M308.0,421.8 L318.7,409.6 L329.4,403.9 L340.1,399.8 L350.8,396.5 L361.4,394.0 L372.1,392.1 L382.8,390.7 L393.5,389.7 L404.2,389.2 L414.9,389.0 L425.6,390.0 L436.2,392.4 L446.9,396.4 L457.6,402.2 L468.3,410.0 L479.0,421.8 L479.0,421.8 M308.0,421.8 L318.7,410.8 L329.4,405.7 L340.1,402.0 L350.8,399.1 L361.4,396.8 L372.1,395.1 L382.8,393.8 L393.5,392.9 L404.2,392.4 L414.9,392.3 L425.6,393.1 L436.2,395.4 L446.9,399.0 L457.6,404.2 L468.3,411.2 L479.0,421.8 L479.0,421.8 M308.0,421.8 L318.7,412.0 L329.4,407.5 L340.1,404.2 L350.8,401.6 L361.4,399.6 L372.1,398.1 L382.8,396.9 L393.5,396.1 L404.2,395.7 L414.9,395.6 L425.6,396.3 L436.2,398.3 L446.9,401.5 L457.6,406.1 L468.3,412.4 L479.0,421.8 L479.0,421.8 M308.0,421.8 L318.7,413.3 L329.4,409.3 L340.1,406.4 L350.8,404.1 L361.4,402.4 L372.1,401.0 L382.8,400.0 L393.5,399.3 L404.2,398.9 L414.9,398.8 L425.6,399.5 L436.2,401.2 L446.9,404.1 L457.6,408.1 L468.3,413.6 L479.0,421.8 L479.0,421.8 M308.0,421.8 L318.7,414.5 L329.4,411.1 L340.1,408.6 L350.8,406.6 L361.4,405.1 L372.1,404.0 L382.8,403.1 L393.5,402.5 L404.2,402.2 L414.9,402.1 L425.6,402.7 L436.2,404.2 L446.9,406.6 L457.6,410.0 L468.3,414.7 L479.0,421.8 L479.0,421.8 M308.0,421.8 L318.7,415.7 L329.4,412.8 L340.1,410.8 L350.8,409.2 L361.4,407.9 L372.1,407.0 L382.8,406.2 L393.5,405.8 L404.2,405.5 L414.9,405.4 L425.6,405.9 L436.2,407.1 L446.9,409.1 L457.6,412.0 L468.3,415.9 L479.0,421.8 L479.0,421.8 M308.0,421.8 L318.7,416.9 L329.4,414.6 L340.1,413.0 L350.8,411.7 L361.4,410.7 L372.1,409.9 L382.8,409.4 L393.5,409.0 L404.2,408.7 L414.9,408.7 L425.6,409.1 L436.2,410.0 L446.9,411.7 L457.6,414.0 L468.3,417.1 L479.0,421.8 L479.0,421.8 M308.0,421.8 L318.7,418.1 L329.4,416.4 L340.1,415.2 L350.8,414.2 L361.4,413.5 L372.1,412.9 L382.8,412.5 L393.5,412.2 L404.2,412.0 L414.9,412.0 L425.6,412.2 L436.2,413.0 L446.9,414.2 L457.6,415.9 L468.3,418.3 L479.0,421.8 L479.0,421.8 M308.0,421.8 L318.7,419.4 L329.4,418.2 L340.1,417.4 L350.8,416.7 L361.4,416.2 L372.1,415.9 L382.8,415.6 L393.5,415.4 L404.2,415.3 L414.9,415.2 L425.6,415.4 L436.2,415.9 L446.9,416.7 L457.6,417.9 L468.3,419.4 L479.0,421.8 L479.0,421.8 M308.0,421.8 L318.7,420.6 L329.4,420.0 L340.1,419.6 L350.8,419.3 L361.4,419.0 L372.1,418.8 L382.8,418.7 L393.5,418.6 L404.2,418.5 L414.9,418.5 L425.6,418.6 L436.2,418.9 L446.9,419.3 L457.6,419.8 L468.3,420.6 L479.0,421.8 L479.0,421.8 M308.0,421.8 L318.7,421.8 L329.4,421.8 L340.1,421.8 L350.8,421.8 L361.4,421.8 L372.1,421.8 L382.8,421.8 L393.5,421.8 L404.2,421.8 L414.9,421.8 L425.6,421.8 L436.2,421.8 L446.9,421.8 L457.6,421.8 L468.3,421.8 L479.0,421.8 L479.0,421.8 M308.0,421.8 L318.7,423.0 L329.4,423.6 L340.1,424.0 L350.8,424.3 L361.4,424.6 L372.1,424.8 L382.8,424.9 L393.5,425.0 L404.2,425.1 L414.9,425.1 L425.6,425.0 L436.2,424.7 L446.9,424.3 L457.6,423.8 L468.3,423.0 L479.0,421.8 L479.0,421.8 M308.0,421.8 L318.7,424.2 L329.4,425.4 L340.1,426.2 L350.8,426.9 L361.4,427.4 L372.1,427.7 L382.8,428.0 L393.5,428.2 L404.2,428.3 L414.9,428.4 L425.6,428.2 L436.2,427.7 L446.9,426.9 L457.6,425.7 L468.3,424.2 L479.0,421.8 L479.0,421.8 M308.0,421.8 L318.7,425.5 L329.4,427.2 L340.1,428.4 L350.8,429.4 L361.4,430.1 L372.1,430.7 L382.8,431.1 L393.5,431.4 L404.2,431.6 L414.9,431.6 L425.6,431.4 L436.2,430.6 L446.9,429.4 L457.6,427.7 L468.3,425.3 L479.0,421.8 L479.0,421.8 M308.0,421.8 L318.7,426.7 L329.4,429.0 L340.1,430.6 L350.8,431.9 L361.4,432.9 L372.1,433.7 L382.8,434.2 L393.5,434.6 L404.2,434.9 L414.9,434.9 L425.6,434.5 L436.2,433.6 L446.9,431.9 L457.6,429.6 L468.3,426.5 L479.0,421.8 L479.0,421.8 M308.0,421.8 L318.7,427.9 L329.4,430.8 L340.1,432.8 L350.8,434.4 L361.4,435.7 L372.1,436.6 L382.8,437.4 L393.5,437.8 L404.2,438.1 L414.9,438.2 L425.6,437.7 L436.2,436.5 L446.9,434.5 L457.6,431.6 L468.3,427.7 L479.0,421.8 L479.0,421.8 M308.0,421.8 L318.7,429.1 L329.4,432.5 L340.1,435.0 L350.8,437.0 L361.4,438.5 L372.1,439.6 L382.8,440.5 L393.5,441.1 L404.2,441.4 L414.9,441.5 L425.6,440.9 L436.2,439.4 L446.9,437.0 L457.6,433.6 L468.3,428.9 L479.0,421.8 L479.0,421.8 M308.0,421.8 L318.7,430.3 L329.4,434.3 L340.1,437.2 L350.8,439.5 L361.4,441.2 L372.1,442.6 L382.8,443.6 L393.5,444.3 L404.2,444.7 L414.9,444.8 L425.6,444.1 L436.2,442.4 L446.9,439.5 L457.6,435.5 L468.3,430.0 L479.0,421.8 L479.0,421.8 M308.0,421.8 L318.7,431.6 L329.4,436.1 L340.1,439.4 L350.8,442.0 L361.4,444.0 L372.1,445.5 L382.8,446.7 L393.5,447.5 L404.2,447.9 L414.9,448.0 L425.6,447.3 L436.2,445.3 L446.9,442.1 L457.6,437.5 L468.3,431.2 L479.0,421.8 L479.0,421.8 M308.0,421.8 L318.7,432.8 L329.4,437.9 L340.1,441.6 L350.8,444.5 L361.4,446.8 L372.1,448.5 L382.8,449.8 L393.5,450.7 L404.2,451.2 L414.9,451.3 L425.6,450.5 L436.2,448.2 L446.9,444.6 L457.6,439.4 L468.3,432.4 L479.0,421.8 L479.0,421.8 M308.0,421.8 L318.7,434.0 L329.4,439.7 L340.1,443.8 L350.8,447.1 L361.4,449.6 L372.1,451.5 L382.8,452.9 L393.5,453.9 L404.2,454.4 L414.9,454.6 L425.6,453.6 L436.2,451.2 L446.9,447.2 L457.6,441.4 L468.3,433.6 L479.0,421.8 L479.0,421.8 M308.0,421.8 L318.7,435.2 L329.4,441.5 L340.1,446.1 L350.8,449.6 L361.4,452.3 L372.1,454.5 L382.8,456.0 L393.5,457.1 L404.2,457.7 L414.9,457.9 L425.6,456.8 L436.2,454.1 L446.9,449.7 L457.6,443.4 L468.3,434.7 L479.0,421.8 L479.0,421.8 M308.0,421.8 L318.7,436.4 L329.4,443.3 L340.1,448.3 L350.8,452.1 L361.4,455.1 L372.1,457.4 L382.8,459.1 L393.5,460.3 L404.2,461.0 L414.9,461.1 L425.6,460.0 L436.2,457.1 L446.9,452.2 L457.6,445.3 L468.3,435.9 L479.0,421.8 L479.0,421.8" clip-path="url(#c14)" fill="none" stroke="#4aa686" stroke-width="0.7" stroke-opacity="0.8"/>
<path d="M308.0,421.8 L311.6,413.7 L315.1,409.7 L318.7,406.5 L322.2,403.9 L325.8,401.5 L329.4,399.4 L332.9,397.5 L336.5,395.8 L340.1,394.2 L343.6,392.8 L347.2,391.5 L350.8,390.2 L354.3,389.1 L357.9,388.1 L361.4,387.1 L365.0,386.2 L368.6,385.4 L372.1,384.7 L375.7,384.0 L379.2,383.4 L382.8,382.9 L386.4,382.4 L389.9,382.0 L393.5,381.7 L397.1,381.4 L400.6,381.2 L404.2,381.0 L407.8,380.9 L411.3,380.8 L414.9,380.8 L418.4,381.0 L422.0,381.4 L425.6,382.0 L429.1,382.8 L432.7,383.8 L436.2,385.1 L439.8,386.5 L443.4,388.2 L446.9,390.1 L450.5,392.3 L454.1,394.6 L457.6,397.3 L461.2,400.2 L464.8,403.5 L468.3,407.1 L471.9,411.1 L475.4,415.7 L479.0,421.8 L479.0,421.8 L475.4,427.9 L471.9,432.5 L468.3,436.5 L464.8,440.1 L461.2,443.4 L457.6,446.3 L454.1,449.0 L450.5,451.3 L446.9,453.5 L443.4,455.4 L439.8,457.1 L436.2,458.5 L432.7,459.8 L429.1,460.8 L425.6,461.6 L422.0,462.2 L418.4,462.6 L414.9,462.8 L411.3,462.8 L407.8,462.7 L404.2,462.6 L400.6,462.4 L397.1,462.2 L393.5,461.9 L389.9,461.6 L386.4,461.2 L382.8,460.7 L379.2,460.2 L375.7,459.6 L372.1,458.9 L368.6,458.2 L365.0,457.4 L361.4,456.5 L357.9,455.5 L354.3,454.5 L350.8,453.4 L347.2,452.1 L343.6,450.8 L340.1,449.4 L336.5,447.8 L332.9,446.1 L329.4,444.2 L325.8,442.1 L322.2,439.7 L318.7,437.1 L315.1,433.9 L311.6,429.9 L308.0,421.8Z" clip-path="url(#c14)" fill="none" stroke="#0c3a28" stroke-width="15" stroke-opacity="0.35" stroke-linejoin="round"/>
<path d="M308.0,421.8 L311.6,413.7 L315.1,409.7 L318.7,406.5 L322.2,403.9 L325.8,401.5 L329.4,399.4 L332.9,397.5 L336.5,395.8 L340.1,394.2 L343.6,392.8 L347.2,391.5 L350.8,390.2 L354.3,389.1 L357.9,388.1 L361.4,387.1 L365.0,386.2 L368.6,385.4 L372.1,384.7 L375.7,384.0 L379.2,383.4 L382.8,382.9 L386.4,382.4 L389.9,382.0 L393.5,381.7 L397.1,381.4 L400.6,381.2 L404.2,381.0 L407.8,380.9 L411.3,380.8 L414.9,380.8 L418.4,381.0 L422.0,381.4 L425.6,382.0 L429.1,382.8 L432.7,383.8 L436.2,385.1 L439.8,386.5 L443.4,388.2 L446.9,390.1 L450.5,392.3 L454.1,394.6 L457.6,397.3 L461.2,400.2 L464.8,403.5 L468.3,407.1 L471.9,411.1 L475.4,415.7 L479.0,421.8 L479.0,421.8 L475.4,427.9 L471.9,432.5 L468.3,436.5 L464.8,440.1 L461.2,443.4 L457.6,446.3 L454.1,449.0 L450.5,451.3 L446.9,453.5 L443.4,455.4 L439.8,457.1 L436.2,458.5 L432.7,459.8 L429.1,460.8 L425.6,461.6 L422.0,462.2 L418.4,462.6 L414.9,462.8 L411.3,462.8 L407.8,462.7 L404.2,462.6 L400.6,462.4 L397.1,462.2 L393.5,461.9 L389.9,461.6 L386.4,461.2 L382.8,460.7 L379.2,460.2 L375.7,459.6 L372.1,458.9 L368.6,458.2 L365.0,457.4 L361.4,456.5 L357.9,455.5 L354.3,454.5 L350.8,453.4 L347.2,452.1 L343.6,450.8 L340.1,449.4 L336.5,447.8 L332.9,446.1 L329.4,444.2 L325.8,442.1 L322.2,439.7 L318.7,437.1 L315.1,433.9 L311.6,429.9 L308.0,421.8Z" fill="none" stroke="#257c5b" stroke-width="8" stroke-linejoin="round"/>
<path d="M308.0,421.8 L311.6,413.7 L315.1,409.7 L318.7,406.5 L322.2,403.9 L325.8,401.5 L329.4,399.4 L332.9,397.5 L336.5,395.8 L340.1,394.2 L343.6,392.8 L347.2,391.5 L350.8,390.2 L354.3,389.1 L357.9,388.1 L361.4,387.1 L365.0,386.2 L368.6,385.4 L372.1,384.7 L375.7,384.0 L379.2,383.4 L382.8,382.9 L386.4,382.4 L389.9,382.0 L393.5,381.7 L397.1,381.4 L400.6,381.2 L404.2,381.0 L407.8,380.9 L411.3,380.8 L414.9,380.8 L418.4,381.0 L422.0,381.4 L425.6,382.0 L429.1,382.8 L432.7,383.8 L436.2,385.1 L439.8,386.5 L443.4,388.2 L446.9,390.1 L450.5,392.3 L454.1,394.6 L457.6,397.3 L461.2,400.2 L464.8,403.5 L468.3,407.1 L471.9,411.1 L475.4,415.7 L479.0,421.8 L479.0,421.8 L475.4,427.9 L471.9,432.5 L468.3,436.5 L464.8,440.1 L461.2,443.4 L457.6,446.3 L454.1,449.0 L450.5,451.3 L446.9,453.5 L443.4,455.4 L439.8,457.1 L436.2,458.5 L432.7,459.8 L429.1,460.8 L425.6,461.6 L422.0,462.2 L418.4,462.6 L414.9,462.8 L411.3,462.8 L407.8,462.7 L404.2,462.6 L400.6,462.4 L397.1,462.2 L393.5,461.9 L389.9,461.6 L386.4,461.2 L382.8,460.7 L379.2,460.2 L375.7,459.6 L372.1,458.9 L368.6,458.2 L365.0,457.4 L361.4,456.5 L357.9,455.5 L354.3,454.5 L350.8,453.4 L347.2,452.1 L343.6,450.8 L340.1,449.4 L336.5,447.8 L332.9,446.1 L329.4,444.2 L325.8,442.1 L322.2,439.7 L318.7,437.1 L315.1,433.9 L311.6,429.9 L308.0,421.8Z" fill="none" stroke="#42a07c" stroke-width="2" stroke-linejoin="round" opacity="0.55"/>
<path d="M302.1,435.9 L310.4,432.8 L315.7,432.4 L320.5,432.7 L324.9,433.3 L329.1,434.2 L333.1,435.2 L336.9,436.4 L340.7,437.7 L344.3,439.1 L347.8,440.6 L351.3,442.2 L354.7,443.9 L358.0,445.6 L361.3,447.4 L364.5,449.2 L367.6,451.1 L370.7,453.0 L373.7,455.0 L376.7,457.1 L379.6,459.2 L382.5,461.3 L385.4,463.5 L388.2,465.8 L391.0,468.0 L393.7,470.3 L396.4,472.7 L399.0,475.1 L401.6,477.5 L404.2,480.0 L406.7,482.5 L409.1,485.2 L411.3,488.0 L413.4,490.9 L415.4,494.0 L417.2,497.3 L418.8,500.7 L420.3,504.2 L421.6,507.9 L422.8,511.8 L423.8,515.8 L424.6,520.0 L425.3,524.4 L425.7,529.0 L425.9,533.8 L425.9,538.9 L425.6,544.3 L424.8,550.0 L423.1,556.9 L423.1,556.9 L416.2,558.6 L410.5,559.4 L405.1,559.7 L400.0,559.7 L395.2,559.5 L390.6,559.1 L386.2,558.4 L382.0,557.6 L378.0,556.6 L374.1,555.4 L370.4,554.1 L366.9,552.6 L363.5,551.0 L360.2,549.2 L357.1,547.2 L354.2,545.1 L351.4,542.9 L348.7,540.5 L346.2,538.0 L343.7,535.4 L341.3,532.8 L338.9,530.2 L336.5,527.5 L334.2,524.8 L332.0,522.0 L329.7,519.2 L327.5,516.3 L325.4,513.4 L323.3,510.5 L321.2,507.5 L319.2,504.5 L317.3,501.4 L315.4,498.3 L313.6,495.1 L311.8,491.8 L310.1,488.5 L308.4,485.1 L306.8,481.6 L305.3,478.1 L303.9,474.5 L302.6,470.7 L301.4,466.9 L300.4,462.9 L299.5,458.7 L298.9,454.3 L298.6,449.5 L299.0,444.2 L302.1,435.9Z" fill="none" stroke="#0f3f2c" stroke-width="10.5" stroke-linejoin="round"/>
<path d="M302.1,435.9 L310.4,432.8 L315.7,432.4 L320.5,432.7 L324.9,433.3 L329.1,434.2 L333.1,435.2 L336.9,436.4 L340.7,437.7 L344.3,439.1 L347.8,440.6 L351.3,442.2 L354.7,443.9 L358.0,445.6 L361.3,447.4 L364.5,449.2 L367.6,451.1 L370.7,453.0 L373.7,455.0 L376.7,457.1 L379.6,459.2 L382.5,461.3 L385.4,463.5 L388.2,465.8 L391.0,468.0 L393.7,470.3 L396.4,472.7 L399.0,475.1 L401.6,477.5 L404.2,480.0 L406.7,482.5 L409.1,485.2 L411.3,488.0 L413.4,490.9 L415.4,494.0 L417.2,497.3 L418.8,500.7 L420.3,504.2 L421.6,507.9 L422.8,511.8 L423.8,515.8 L424.6,520.0 L425.3,524.4 L425.7,529.0 L425.9,533.8 L425.9,538.9 L425.6,544.3 L424.8,550.0 L423.1,556.9 L423.1,556.9 L416.2,558.6 L410.5,559.4 L405.1,559.7 L400.0,559.7 L395.2,559.5 L390.6,559.1 L386.2,558.4 L382.0,557.6 L378.0,556.6 L374.1,555.4 L370.4,554.1 L366.9,552.6 L363.5,551.0 L360.2,549.2 L357.1,547.2 L354.2,545.1 L351.4,542.9 L348.7,540.5 L346.2,538.0 L343.7,535.4 L341.3,532.8 L338.9,530.2 L336.5,527.5 L334.2,524.8 L332.0,522.0 L329.7,519.2 L327.5,516.3 L325.4,513.4 L323.3,510.5 L321.2,507.5 L319.2,504.5 L317.3,501.4 L315.4,498.3 L313.6,495.1 L311.8,491.8 L310.1,488.5 L308.4,485.1 L306.8,481.6 L305.3,478.1 L303.9,474.5 L302.6,470.7 L301.4,466.9 L300.4,462.9 L299.5,458.7 L298.9,454.3 L298.6,449.5 L299.0,444.2 L302.1,435.9Z" fill="#216c4f"/>
<path d="M302.1,435.9 L320.1,433.1 L332.4,435.9 L343.5,439.9 L353.8,444.7 L363.5,450.2 L372.7,456.1 L381.4,462.4 L389.8,469.2 L397.9,476.3 L405.5,483.7 L412.3,492.1 L417.8,501.7 L421.9,512.7 L424.6,525.1 L425.5,539.3 L423.1,556.9 L423.1,556.9 M302.1,435.9 L319.2,434.0 L331.2,437.1 L342.0,441.5 L352.0,446.5 L361.5,452.1 L370.6,458.2 L379.2,464.6 L387.6,471.4 L395.6,478.6 L403.2,486.0 L410.0,494.3 L415.7,503.8 L420.1,514.5 L423.2,526.5 L424.7,540.1 L423.1,556.9 L423.1,556.9 M302.1,435.9 L318.3,434.9 L329.9,438.4 L340.4,443.0 L350.2,448.3 L359.6,454.1 L368.5,460.3 L377.0,466.8 L385.3,473.7 L393.2,480.9 L400.9,488.3 L407.8,496.6 L413.6,505.9 L418.3,516.3 L421.8,527.9 L423.8,541.0 L423.1,556.9 L423.1,556.9 M302.1,435.9 L317.5,435.7 L328.6,439.7 L338.8,444.6 L348.4,450.1 L357.6,456.1 L366.4,462.4 L374.8,469.0 L383.0,476.0 L390.9,483.2 L398.6,490.6 L405.5,498.8 L411.5,507.9 L416.5,518.1 L420.4,529.3 L423.0,541.8 L423.1,556.9 L423.1,556.9 M302.1,435.9 L316.6,436.6 L327.4,440.9 L337.3,446.1 L346.7,451.9 L355.6,458.0 L364.3,464.5 L372.6,471.2 L380.8,478.2 L388.6,485.5 L396.3,493.0 L403.3,501.1 L409.5,510.0 L414.7,519.8 L419.0,530.7 L422.2,542.6 L423.1,556.9 L423.1,556.9 M302.1,435.9 L315.7,437.5 L326.1,442.2 L335.7,447.7 L344.9,453.7 L353.7,460.0 L362.2,466.6 L370.4,473.4 L378.5,480.5 L386.3,487.8 L393.9,495.3 L401.0,503.3 L407.4,512.1 L412.9,521.6 L417.6,532.0 L421.3,543.5 L423.1,556.9 L423.1,556.9 M302.1,435.9 L314.9,438.3 L324.9,443.5 L334.2,449.3 L343.1,455.5 L351.7,462.0 L360.1,468.7 L368.2,475.6 L376.2,482.8 L384.0,490.1 L391.6,497.6 L398.8,505.6 L405.3,514.2 L411.1,523.4 L416.3,533.4 L420.5,544.3 L423.1,556.9 L423.1,556.9 M302.1,435.9 L314.0,439.2 L323.6,444.7 L332.6,450.8 L341.3,457.2 L349.7,463.9 L358.0,470.8 L366.0,477.8 L373.9,485.1 L381.7,492.4 L389.3,499.9 L396.5,507.8 L403.2,516.2 L409.3,525.2 L414.9,534.8 L419.7,545.1 L423.1,556.9 L423.1,556.9 M302.1,435.9 L313.2,440.0 L322.3,446.0 L331.1,452.4 L339.5,459.0 L347.8,465.9 L355.9,472.9 L363.8,480.0 L371.7,487.3 L379.4,494.7 L387.0,502.2 L394.3,510.1 L401.1,518.3 L407.6,527.0 L413.5,536.2 L418.8,546.0 L423.1,556.9 L423.1,556.9 M302.1,435.9 L312.3,440.9 L321.1,447.3 L329.5,453.9 L337.7,460.8 L345.8,467.8 L353.8,475.0 L361.6,482.2 L369.4,489.6 L377.1,497.0 L384.7,504.6 L392.0,512.3 L399.1,520.4 L405.8,528.8 L412.1,537.6 L418.0,546.8 L423.1,556.9 L423.1,556.9 M302.1,435.9 L311.4,441.8 L319.8,448.5 L327.9,455.5 L335.9,462.6 L343.9,469.8 L351.7,477.1 L359.4,484.4 L367.1,491.9 L374.8,499.3 L382.4,506.9 L389.8,514.6 L397.0,522.5 L404.0,530.6 L410.7,539.0 L417.2,547.6 L423.1,556.9 L423.1,556.9 M302.1,435.9 L310.6,442.6 L318.5,449.8 L326.4,457.1 L334.2,464.4 L341.9,471.8 L349.6,479.2 L357.2,486.6 L364.9,494.1 L372.5,501.6 L380.0,509.2 L387.5,516.8 L394.9,524.6 L402.2,532.4 L409.3,540.4 L416.3,548.5 L423.1,556.9 L423.1,556.9 M302.1,435.9 L309.7,443.5 L317.3,451.1 L324.8,458.6 L332.4,466.2 L339.9,473.7 L347.5,481.3 L355.0,488.8 L362.6,496.4 L370.2,504.0 L377.7,511.5 L385.3,519.1 L392.8,526.6 L400.4,534.2 L407.9,541.7 L415.5,549.3 L423.1,556.9 L423.1,556.9 M302.1,435.9 L308.8,444.4 L316.0,452.3 L323.3,460.2 L330.6,468.0 L338.0,475.7 L345.4,483.4 L352.8,491.0 L360.3,498.7 L367.8,506.3 L375.4,513.8 L383.0,521.3 L390.8,528.7 L398.6,536.0 L406.6,543.1 L414.7,550.1 L423.1,556.9 L423.1,556.9 M302.1,435.9 L308.0,445.2 L314.7,453.6 L321.7,461.7 L328.8,469.7 L336.0,477.7 L343.3,485.5 L350.6,493.2 L358.1,500.9 L365.5,508.6 L373.1,516.2 L380.8,523.6 L388.7,530.8 L396.8,537.8 L405.2,544.5 L413.8,551.0 L423.1,556.9 L423.1,556.9 M302.1,435.9 L307.1,446.1 L313.5,454.9 L320.1,463.3 L327.0,471.5 L334.0,479.6 L341.2,487.6 L348.4,495.4 L355.8,503.2 L363.2,510.9 L370.8,518.5 L378.5,525.8 L386.6,532.9 L395.0,539.6 L403.8,545.9 L413.0,551.8 L423.1,556.9 L423.1,556.9 M302.1,435.9 L306.2,447.0 L312.2,456.1 L318.6,464.9 L325.2,473.3 L332.1,481.6 L339.1,489.7 L346.2,497.6 L353.5,505.5 L360.9,513.2 L368.4,520.8 L376.3,528.1 L384.5,534.9 L393.2,541.4 L402.4,547.3 L412.2,552.6 L423.1,556.9 L423.1,556.9 M302.1,435.9 L305.4,447.8 L310.9,457.4 L317.0,466.4 L323.4,475.1 L330.1,483.5 L337.0,491.8 L344.0,499.8 L351.3,507.7 L358.6,515.5 L366.1,523.1 L374.0,530.3 L382.4,537.0 L391.4,543.1 L401.0,548.7 L411.3,553.5 L423.1,556.9 L423.1,556.9 M302.1,435.9 L304.5,448.7 L309.7,458.7 L315.5,468.0 L321.7,476.9 L328.2,485.5 L334.9,493.9 L341.8,502.0 L349.0,510.0 L356.3,517.8 L363.8,525.4 L371.8,532.6 L380.4,539.1 L389.6,544.9 L399.6,550.1 L410.5,554.3 L423.1,556.9 L423.1,556.9 M302.1,435.9 L303.7,449.5 L308.4,459.9 L313.9,469.5 L319.9,478.7 L326.2,487.5 L332.8,496.0 L339.6,504.2 L346.7,512.3 L354.0,520.1 L361.5,527.7 L369.5,534.8 L378.3,541.2 L387.8,546.7 L398.2,551.4 L409.7,555.1 L423.1,556.9 L423.1,556.9 M302.1,435.9 L302.8,450.4 L307.1,461.2 L312.3,471.1 L318.1,480.5 L324.2,489.4 L330.7,498.1 L337.4,506.4 L344.4,514.6 L351.7,522.4 L359.2,530.1 L367.3,537.1 L376.2,543.3 L386.0,548.5 L396.9,552.8 L408.8,556.0 L423.1,556.9 L423.1,556.9 M302.1,435.9 L301.9,451.3 L305.9,462.4 L310.8,472.6 L316.3,482.2 L322.3,491.4 L328.6,500.2 L335.2,508.6 L342.2,516.8 L349.4,524.7 L356.8,532.4 L365.0,539.3 L374.1,545.3 L384.3,550.3 L395.5,554.2 L408.0,556.8 L423.1,556.9 L423.1,556.9 M302.1,435.9 L301.1,452.1 L304.6,463.7 L309.2,474.2 L314.5,484.0 L320.3,493.4 L326.5,502.3 L333.0,510.8 L339.9,519.1 L347.1,527.0 L354.5,534.7 L362.8,541.6 L372.1,547.4 L382.5,552.1 L394.1,555.6 L407.2,557.6 L423.1,556.9 L423.1,556.9 M302.1,435.9 L300.2,453.0 L303.3,465.0 L307.7,475.8 L312.7,485.8 L318.3,495.3 L324.4,504.4 L330.8,513.0 L337.6,521.4 L344.8,529.4 L352.2,537.0 L360.5,543.8 L370.0,549.5 L380.7,553.9 L392.7,557.0 L406.3,558.5 L423.1,556.9 L423.1,556.9 M302.1,435.9 L299.3,453.9 L302.1,466.2 L306.1,477.3 L310.9,487.6 L316.4,497.3 L322.3,506.5 L328.6,515.2 L335.4,523.6 L342.5,531.7 L349.9,539.3 L358.3,546.1 L367.9,551.6 L378.9,555.7 L391.3,558.4 L405.5,559.3 L423.1,556.9 L423.1,556.9" clip-path="url(#c15)" fill="none" stroke="#4aa686" stroke-width="0.7" stroke-opacity="0.8"/>
<path d="M302.1,435.9 L310.4,432.8 L315.7,432.4 L320.5,432.7 L324.9,433.3 L329.1,434.2 L333.1,435.2 L336.9,436.4 L340.7,437.7 L344.3,439.1 L347.8,440.6 L351.3,442.2 L354.7,443.9 L358.0,445.6 L361.3,447.4 L364.5,449.2 L367.6,451.1 L370.7,453.0 L373.7,455.0 L376.7,457.1 L379.6,459.2 L382.5,461.3 L385.4,463.5 L388.2,465.8 L391.0,468.0 L393.7,470.3 L396.4,472.7 L399.0,475.1 L401.6,477.5 L404.2,480.0 L406.7,482.5 L409.1,485.2 L411.3,488.0 L413.4,490.9 L415.4,494.0 L417.2,497.3 L418.8,500.7 L420.3,504.2 L421.6,507.9 L422.8,511.8 L423.8,515.8 L424.6,520.0 L425.3,524.4 L425.7,529.0 L425.9,533.8 L425.9,538.9 L425.6,544.3 L424.8,550.0 L423.1,556.9 L423.1,556.9 L416.2,558.6 L410.5,559.4 L405.1,559.7 L400.0,559.7 L395.2,559.5 L390.6,559.1 L386.2,558.4 L382.0,557.6 L378.0,556.6 L374.1,555.4 L370.4,554.1 L366.9,552.6 L363.5,551.0 L360.2,549.2 L357.1,547.2 L354.2,545.1 L351.4,542.9 L348.7,540.5 L346.2,538.0 L343.7,535.4 L341.3,532.8 L338.9,530.2 L336.5,527.5 L334.2,524.8 L332.0,522.0 L329.7,519.2 L327.5,516.3 L325.4,513.4 L323.3,510.5 L321.2,507.5 L319.2,504.5 L317.3,501.4 L315.4,498.3 L313.6,495.1 L311.8,491.8 L310.1,488.5 L308.4,485.1 L306.8,481.6 L305.3,478.1 L303.9,474.5 L302.6,470.7 L301.4,466.9 L300.4,462.9 L299.5,458.7 L298.9,454.3 L298.6,449.5 L299.0,444.2 L302.1,435.9Z" clip-path="url(#c15)" fill="none" stroke="#0c3a28" stroke-width="15" stroke-opacity="0.35" stroke-linejoin="round"/>
<path d="M302.1,435.9 L310.4,432.8 L315.7,432.4 L320.5,432.7 L324.9,433.3 L329.1,434.2 L333.1,435.2 L336.9,436.4 L340.7,437.7 L344.3,439.1 L347.8,440.6 L351.3,442.2 L354.7,443.9 L358.0,445.6 L361.3,447.4 L364.5,449.2 L367.6,451.1 L370.7,453.0 L373.7,455.0 L376.7,457.1 L379.6,459.2 L382.5,461.3 L385.4,463.5 L388.2,465.8 L391.0,468.0 L393.7,470.3 L396.4,472.7 L399.0,475.1 L401.6,477.5 L404.2,480.0 L406.7,482.5 L409.1,485.2 L411.3,488.0 L413.4,490.9 L415.4,494.0 L417.2,497.3 L418.8,500.7 L420.3,504.2 L421.6,507.9 L422.8,511.8 L423.8,515.8 L424.6,520.0 L425.3,524.4 L425.7,529.0 L425.9,533.8 L425.9,538.9 L425.6,544.3 L424.8,550.0 L423.1,556.9 L423.1,556.9 L416.2,558.6 L410.5,559.4 L405.1,559.7 L400.0,559.7 L395.2,559.5 L390.6,559.1 L386.2,558.4 L382.0,557.6 L378.0,556.6 L374.1,555.4 L370.4,554.1 L366.9,552.6 L363.5,551.0 L360.2,549.2 L357.1,547.2 L354.2,545.1 L351.4,542.9 L348.7,540.5 L346.2,538.0 L343.7,535.4 L341.3,532.8 L338.9,530.2 L336.5,527.5 L334.2,524.8 L332.0,522.0 L329.7,519.2 L327.5,516.3 L325.4,513.4 L323.3,510.5 L321.2,507.5 L319.2,504.5 L317.3,501.4 L315.4,498.3 L313.6,495.1 L311.8,491.8 L310.1,488.5 L308.4,485.1 L306.8,481.6 L305.3,478.1 L303.9,474.5 L302.6,470.7 L301.4,466.9 L300.4,462.9 L299.5,458.7 L298.9,454.3 L298.6,449.5 L299.0,444.2 L302.1,435.9Z" fill="none" stroke="#257c5b" stroke-width="8" stroke-linejoin="round"/>
<path d="M302.1,435.9 L310.4,432.8 L315.7,432.4 L320.5,432.7 L324.9,433.3 L329.1,434.2 L333.1,435.2 L336.9,436.4 L340.7,437.7 L344.3,439.1 L347.8,440.6 L351.3,442.2 L354.7,443.9 L358.0,445.6 L361.3,447.4 L364.5,449.2 L367.6,451.1 L370.7,453.0 L373.7,455.0 L376.7,457.1 L379.6,459.2 L382.5,461.3 L385.4,463.5 L388.2,465.8 L391.0,468.0 L393.7,470.3 L396.4,472.7 L399.0,475.1 L401.6,477.5 L404.2,480.0 L406.7,482.5 L409.1,485.2 L411.3,488.0 L413.4,490.9 L415.4,494.0 L417.2,497.3 L418.8,500.7 L420.3,504.2 L421.6,507.9 L422.8,511.8 L423.8,515.8 L424.6,520.0 L425.3,524.4 L425.7,529.0 L425.9,533.8 L425.9,538.9 L425.6,544.3 L424.8,550.0 L423.1,556.9 L423.1,556.9 L416.2,558.6 L410.5,559.4 L405.1,559.7 L400.0,559.7 L395.2,559.5 L390.6,559.1 L386.2,558.4 L382.0,557.6 L378.0,556.6 L374.1,555.4 L370.4,554.1 L366.9,552.6 L363.5,551.0 L360.2,549.2 L357.1,547.2 L354.2,545.1 L351.4,542.9 L348.7,540.5 L346.2,538.0 L343.7,535.4 L341.3,532.8 L338.9,530.2 L336.5,527.5 L334.2,524.8 L332.0,522.0 L329.7,519.2 L327.5,516.3 L325.4,513.4 L323.3,510.5 L321.2,507.5 L319.2,504.5 L317.3,501.4 L315.4,498.3 L313.6,495.1 L311.8,491.8 L310.1,488.5 L308.4,485.1 L306.8,481.6 L305.3,478.1 L303.9,474.5 L302.6,470.7 L301.4,466.9 L300.4,462.9 L299.5,458.7 L298.9,454.3 L298.6,449.5 L299.0,444.2 L302.1,435.9Z" fill="none" stroke="#42a07c" stroke-width="2" stroke-linejoin="round" opacity="0.55"/>
<path d="M288.0,441.8 L296.1,445.4 L300.1,448.9 L303.3,452.5 L305.9,456.1 L308.3,459.6 L310.4,463.2 L312.3,466.7 L314.0,470.3 L315.6,473.9 L317.0,477.4 L318.3,481.0 L319.6,484.6 L320.7,488.1 L321.7,491.7 L322.7,495.2 L323.6,498.8 L324.4,502.4 L325.1,505.9 L325.8,509.5 L326.4,513.0 L326.9,516.6 L327.4,520.2 L327.8,523.7 L328.1,527.3 L328.4,530.9 L328.6,534.4 L328.8,538.0 L328.9,541.5 L329.0,545.1 L329.0,548.7 L328.8,552.2 L328.4,555.8 L327.8,559.4 L327.0,562.9 L326.0,566.5 L324.7,570.0 L323.3,573.6 L321.6,577.2 L319.7,580.7 L317.5,584.3 L315.2,587.9 L312.5,591.4 L309.6,595.0 L306.3,598.5 L302.7,602.1 L298.7,605.7 L294.1,609.2 L288.0,612.8 L288.0,612.8 L281.9,609.2 L277.3,605.7 L273.3,602.1 L269.7,598.5 L266.4,595.0 L263.5,591.4 L260.8,587.9 L258.5,584.3 L256.3,580.7 L254.4,577.2 L252.7,573.6 L251.3,570.0 L250.0,566.5 L249.0,562.9 L248.2,559.4 L247.6,555.8 L247.2,552.2 L247.0,548.7 L247.0,545.1 L247.1,541.5 L247.2,538.0 L247.4,534.4 L247.6,530.9 L247.9,527.3 L248.2,523.7 L248.6,520.2 L249.1,516.6 L249.6,513.0 L250.2,509.5 L250.9,505.9 L251.6,502.4 L252.4,498.8 L253.3,495.2 L254.3,491.7 L255.3,488.1 L256.4,484.6 L257.7,481.0 L259.0,477.4 L260.4,473.9 L262.0,470.3 L263.7,466.7 L265.6,463.2 L267.7,459.6 L270.1,456.1 L272.7,452.5 L275.9,448.9 L279.9,445.4 L288.0,441.8Z" fill="none" stroke="#0f3f2c" stroke-width="10.5" stroke-linejoin="round"/>
<path d="M288.0,441.8 L296.1,445.4 L300.1,448.9 L303.3,452.5 L305.9,456.1 L308.3,459.6 L310.4,463.2 L312.3,466.7 L314.0,470.3 L315.6,473.9 L317.0,477.4 L318.3,481.0 L319.6,484.6 L320.7,488.1 L321.7,491.7 L322.7,495.2 L323.6,498.8 L324.4,502.4 L325.1,505.9 L325.8,509.5 L326.4,513.0 L326.9,516.6 L327.4,520.2 L327.8,523.7 L328.1,527.3 L328.4,530.9 L328.6,534.4 L328.8,538.0 L328.9,541.5 L329.0,545.1 L329.0,548.7 L328.8,552.2 L328.4,555.8 L327.8,559.4 L327.0,562.9 L326.0,566.5 L324.7,570.0 L323.3,573.6 L321.6,577.2 L319.7,580.7 L317.5,584.3 L315.2,587.9 L312.5,591.4 L309.6,595.0 L306.3,598.5 L302.7,602.1 L298.7,605.7 L294.1,609.2 L288.0,612.8 L288.0,612.8 L281.9,609.2 L277.3,605.7 L273.3,602.1 L269.7,598.5 L266.4,595.0 L263.5,591.4 L260.8,587.9 L258.5,584.3 L256.3,580.7 L254.4,577.2 L252.7,573.6 L251.3,570.0 L250.0,566.5 L249.0,562.9 L248.2,559.4 L247.6,555.8 L247.2,552.2 L247.0,548.7 L247.0,545.1 L247.1,541.5 L247.2,538.0 L247.4,534.4 L247.6,530.9 L247.9,527.3 L248.2,523.7 L248.6,520.2 L249.1,516.6 L249.6,513.0 L250.2,509.5 L250.9,505.9 L251.6,502.4 L252.4,498.8 L253.3,495.2 L254.3,491.7 L255.3,488.1 L256.4,484.6 L257.7,481.0 L259.0,477.4 L260.4,473.9 L262.0,470.3 L263.7,466.7 L265.6,463.2 L267.7,459.6 L270.1,456.1 L272.7,452.5 L275.9,448.9 L279.9,445.4 L288.0,441.8Z" fill="#216c4f"/>
<path d="M288.0,441.8 L302.6,452.5 L309.5,463.2 L314.5,473.9 L318.3,484.6 L321.3,495.2 L323.6,505.9 L325.3,516.6 L326.5,527.3 L327.2,538.0 L327.3,548.7 L326.2,559.4 L323.3,570.0 L318.4,580.7 L311.5,591.4 L302.1,602.1 L288.0,612.8 L288.0,612.8 M288.0,441.8 L301.4,452.5 L307.7,463.2 L312.3,473.9 L315.8,484.6 L318.5,495.2 L320.7,505.9 L322.2,516.6 L323.3,527.3 L323.9,538.0 L324.1,548.7 L323.0,559.4 L320.3,570.0 L315.9,580.7 L309.6,591.4 L300.9,602.1 L288.0,612.8 L288.0,612.8 M288.0,441.8 L300.2,452.5 L305.9,463.2 L310.0,473.9 L313.3,484.6 L315.8,495.2 L317.7,505.9 L319.1,516.6 L320.1,527.3 L320.6,538.0 L320.8,548.7 L319.8,559.4 L317.4,570.0 L313.4,580.7 L307.6,591.4 L299.8,602.1 L288.0,612.8 L288.0,612.8 M288.0,441.8 L299.0,452.5 L304.1,463.2 L307.8,473.9 L310.7,484.6 L313.0,495.2 L314.7,505.9 L316.0,516.6 L316.9,527.3 L317.4,538.0 L317.5,548.7 L316.7,559.4 L314.4,570.0 L310.8,580.7 L305.6,591.4 L298.6,602.1 L288.0,612.8 L288.0,612.8 M288.0,441.8 L297.8,452.5 L302.3,463.2 L305.6,473.9 L308.2,484.6 L310.2,495.2 L311.7,505.9 L312.9,516.6 L313.7,527.3 L314.1,538.0 L314.2,548.7 L313.5,559.4 L311.5,570.0 L308.3,580.7 L303.7,591.4 L297.4,602.1 L288.0,612.8 L288.0,612.8 M288.0,441.8 L296.5,452.5 L300.5,463.2 L303.4,473.9 L305.7,484.6 L307.4,495.2 L308.8,505.9 L309.8,516.6 L310.5,527.3 L310.9,538.0 L311.0,548.7 L310.3,559.4 L308.6,570.0 L305.7,580.7 L301.7,591.4 L296.2,602.1 L288.0,612.8 L288.0,612.8 M288.0,441.8 L295.3,452.5 L298.7,463.2 L301.2,473.9 L303.2,484.6 L304.7,495.2 L305.8,505.9 L306.7,516.6 L307.3,527.3 L307.6,538.0 L307.7,548.7 L307.1,559.4 L305.6,570.0 L303.2,580.7 L299.8,591.4 L295.1,602.1 L288.0,612.8 L288.0,612.8 M288.0,441.8 L294.1,452.5 L297.0,463.2 L299.0,473.9 L300.6,484.6 L301.9,495.2 L302.8,505.9 L303.6,516.6 L304.0,527.3 L304.3,538.0 L304.4,548.7 L303.9,559.4 L302.7,570.0 L300.7,580.7 L297.8,591.4 L293.9,602.1 L288.0,612.8 L288.0,612.8 M288.0,441.8 L292.9,452.5 L295.2,463.2 L296.8,473.9 L298.1,484.6 L299.1,495.2 L299.9,505.9 L300.4,516.6 L300.8,527.3 L301.1,538.0 L301.1,548.7 L300.7,559.4 L299.8,570.0 L298.1,580.7 L295.8,591.4 L292.7,602.1 L288.0,612.8 L288.0,612.8 M288.0,441.8 L291.7,452.5 L293.4,463.2 L294.6,473.9 L295.6,484.6 L296.3,495.2 L296.9,505.9 L297.3,516.6 L297.6,527.3 L297.8,538.0 L297.8,548.7 L297.6,559.4 L296.8,570.0 L295.6,580.7 L293.9,591.4 L291.5,602.1 L288.0,612.8 L288.0,612.8 M288.0,441.8 L290.4,452.5 L291.6,463.2 L292.4,473.9 L293.1,484.6 L293.6,495.2 L293.9,505.9 L294.2,516.6 L294.4,527.3 L294.5,538.0 L294.6,548.7 L294.4,559.4 L293.9,570.0 L293.1,580.7 L291.9,591.4 L290.4,602.1 L288.0,612.8 L288.0,612.8 M288.0,441.8 L289.2,452.5 L289.8,463.2 L290.2,473.9 L290.5,484.6 L290.8,495.2 L291.0,505.9 L291.1,516.6 L291.2,527.3 L291.3,538.0 L291.3,548.7 L291.2,559.4 L290.9,570.0 L290.5,580.7 L290.0,591.4 L289.2,602.1 L288.0,612.8 L288.0,612.8 M288.0,441.8 L288.0,452.5 L288.0,463.2 L288.0,473.9 L288.0,484.6 L288.0,495.2 L288.0,505.9 L288.0,516.6 L288.0,527.3 L288.0,538.0 L288.0,548.7 L288.0,559.4 L288.0,570.0 L288.0,580.7 L288.0,591.4 L288.0,602.1 L288.0,612.8 L288.0,612.8 M288.0,441.8 L286.8,452.5 L286.2,463.2 L285.8,473.9 L285.5,484.6 L285.2,495.2 L285.0,505.9 L284.9,516.6 L284.8,527.3 L284.7,538.0 L284.7,548.7 L284.8,559.4 L285.1,570.0 L285.5,580.7 L286.0,591.4 L286.8,602.1 L288.0,612.8 L288.0,612.8 M288.0,441.8 L285.6,452.5 L284.4,463.2 L283.6,473.9 L282.9,484.6 L282.4,495.2 L282.1,505.9 L281.8,516.6 L281.6,527.3 L281.5,538.0 L281.4,548.7 L281.6,559.4 L282.1,570.0 L282.9,580.7 L284.1,591.4 L285.6,602.1 L288.0,612.8 L288.0,612.8 M288.0,441.8 L284.3,452.5 L282.6,463.2 L281.4,473.9 L280.4,484.6 L279.7,495.2 L279.1,505.9 L278.7,516.6 L278.4,527.3 L278.2,538.0 L278.2,548.7 L278.4,559.4 L279.2,570.0 L280.4,580.7 L282.1,591.4 L284.5,602.1 L288.0,612.8 L288.0,612.8 M288.0,441.8 L283.1,452.5 L280.8,463.2 L279.2,473.9 L277.9,484.6 L276.9,495.2 L276.1,505.9 L275.6,516.6 L275.2,527.3 L274.9,538.0 L274.9,548.7 L275.3,559.4 L276.2,570.0 L277.9,580.7 L280.2,591.4 L283.3,602.1 L288.0,612.8 L288.0,612.8 M288.0,441.8 L281.9,452.5 L279.0,463.2 L277.0,473.9 L275.4,484.6 L274.1,495.2 L273.2,505.9 L272.4,516.6 L272.0,527.3 L271.7,538.0 L271.6,548.7 L272.1,559.4 L273.3,570.0 L275.3,580.7 L278.2,591.4 L282.1,602.1 L288.0,612.8 L288.0,612.8 M288.0,441.8 L280.7,452.5 L277.3,463.2 L274.8,473.9 L272.8,484.6 L271.3,495.2 L270.2,505.9 L269.3,516.6 L268.7,527.3 L268.4,538.0 L268.3,548.7 L268.9,559.4 L270.4,570.0 L272.8,580.7 L276.2,591.4 L280.9,602.1 L288.0,612.8 L288.0,612.8 M288.0,441.8 L279.5,452.5 L275.5,463.2 L272.6,473.9 L270.3,484.6 L268.6,495.2 L267.2,505.9 L266.2,516.6 L265.5,527.3 L265.1,538.0 L265.0,548.7 L265.7,559.4 L267.4,570.0 L270.3,580.7 L274.3,591.4 L279.8,602.1 L288.0,612.8 L288.0,612.8 M288.0,441.8 L278.2,452.5 L273.7,463.2 L270.4,473.9 L267.8,484.6 L265.8,495.2 L264.3,505.9 L263.1,516.6 L262.3,527.3 L261.9,538.0 L261.8,548.7 L262.5,559.4 L264.5,570.0 L267.7,580.7 L272.3,591.4 L278.6,602.1 L288.0,612.8 L288.0,612.8 M288.0,441.8 L277.0,452.5 L271.9,463.2 L268.2,473.9 L265.3,484.6 L263.0,495.2 L261.3,505.9 L260.0,516.6 L259.1,527.3 L258.6,538.0 L258.5,548.7 L259.3,559.4 L261.6,570.0 L265.2,580.7 L270.4,591.4 L277.4,602.1 L288.0,612.8 L288.0,612.8 M288.0,441.8 L275.8,452.5 L270.1,463.2 L266.0,473.9 L262.7,484.6 L260.2,495.2 L258.3,505.9 L256.9,516.6 L255.9,527.3 L255.4,538.0 L255.2,548.7 L256.2,559.4 L258.6,570.0 L262.6,580.7 L268.4,591.4 L276.2,602.1 L288.0,612.8 L288.0,612.8 M288.0,441.8 L274.6,452.5 L268.3,463.2 L263.7,473.9 L260.2,484.6 L257.5,495.2 L255.3,505.9 L253.8,516.6 L252.7,527.3 L252.1,538.0 L251.9,548.7 L253.0,559.4 L255.7,570.0 L260.1,580.7 L266.4,591.4 L275.1,602.1 L288.0,612.8 L288.0,612.8 M288.0,441.8 L273.4,452.5 L266.5,463.2 L261.5,473.9 L257.7,484.6 L254.7,495.2 L252.4,505.9 L250.7,516.6 L249.5,527.3 L248.8,538.0 L248.7,548.7 L249.8,559.4 L252.7,570.0 L257.6,580.7 L264.5,591.4 L273.9,602.1 L288.0,612.8 L288.0,612.8" clip-path="url(#c16)" fill="none" stroke="#4aa686" stroke-width="0.7" stroke-opacity="0.8"/>
<path d="M288.0,441.8 L296.1,445.4 L300.1,448.9 L303.3,452.5 L305.9,456.1 L308.3,459.6 L310.4,463.2 L312.3,466.7 L314.0,470.3 L315.6,473.9 L317.0,477.4 L318.3,481.0 L319.6,484.6 L320.7,488.1 L321.7,491.7 L322.7,495.2 L323.6,498.8 L324.4,502.4 L325.1,505.9 L325.8,509.5 L326.4,513.0 L326.9,516.6 L327.4,520.2 L327.8,523.7 L328.1,527.3 L328.4,530.9 L328.6,534.4 L328.8,538.0 L328.9,541.5 L329.0,545.1 L329.0,548.7 L328.8,552.2 L328.4,555.8 L327.8,559.4 L327.0,562.9 L326.0,566.5 L324.7,570.0 L323.3,573.6 L321.6,577.2 L319.7,580.7 L317.5,584.3 L315.2,587.9 L312.5,591.4 L309.6,595.0 L306.3,598.5 L302.7,602.1 L298.7,605.7 L294.1,609.2 L288.0,612.8 L288.0,612.8 L281.9,609.2 L277.3,605.7 L273.3,602.1 L269.7,598.5 L266.4,595.0 L263.5,591.4 L260.8,587.9 L258.5,584.3 L256.3,580.7 L254.4,577.2 L252.7,573.6 L251.3,570.0 L250.0,566.5 L249.0,562.9 L248.2,559.4 L247.6,555.8 L247.2,552.2 L247.0,548.7 L247.0,545.1 L247.1,541.5 L247.2,538.0 L247.4,534.4 L247.6,530.9 L247.9,527.3 L248.2,523.7 L248.6,520.2 L249.1,516.6 L249.6,513.0 L250.2,509.5 L250.9,505.9 L251.6,502.4 L252.4,498.8 L253.3,495.2 L254.3,491.7 L255.3,488.1 L256.4,484.6 L257.7,481.0 L259.0,477.4 L260.4,473.9 L262.0,470.3 L263.7,466.7 L265.6,463.2 L267.7,459.6 L270.1,456.1 L272.7,452.5 L275.9,448.9 L279.9,445.4 L288.0,441.8Z" clip-path="url(#c16)" fill="none" stroke="#0c3a28" stroke-width="15" stroke-opacity="0.35" stroke-linejoin="round"/>
<path d="M288.0,441.8 L296.1,445.4 L300.1,448.9 L303.3,452.5 L305.9,456.1 L308.3,459.6 L310.4,463.2 L312.3,466.7 L314.0,470.3 L315.6,473.9 L317.0,477.4 L318.3,481.0 L319.6,484.6 L320.7,488.1 L321.7,491.7 L322.7,495.2 L323.6,498.8 L324.4,502.4 L325.1,505.9 L325.8,509.5 L326.4,513.0 L326.9,516.6 L327.4,520.2 L327.8,523.7 L328.1,527.3 L328.4,530.9 L328.6,534.4 L328.8,538.0 L328.9,541.5 L329.0,545.1 L329.0,548.7 L328.8,552.2 L328.4,555.8 L327.8,559.4 L327.0,562.9 L326.0,566.5 L324.7,570.0 L323.3,573.6 L321.6,577.2 L319.7,580.7 L317.5,584.3 L315.2,587.9 L312.5,591.4 L309.6,595.0 L306.3,598.5 L302.7,602.1 L298.7,605.7 L294.1,609.2 L288.0,612.8 L288.0,612.8 L281.9,609.2 L277.3,605.7 L273.3,602.1 L269.7,598.5 L266.4,595.0 L263.5,591.4 L260.8,587.9 L258.5,584.3 L256.3,580.7 L254.4,577.2 L252.7,573.6 L251.3,570.0 L250.0,566.5 L249.0,562.9 L248.2,559.4 L247.6,555.8 L247.2,552.2 L247.0,548.7 L247.0,545.1 L247.1,541.5 L247.2,538.0 L247.4,534.4 L247.6,530.9 L247.9,527.3 L248.2,523.7 L248.6,520.2 L249.1,516.6 L249.6,513.0 L250.2,509.5 L250.9,505.9 L251.6,502.4 L252.4,498.8 L253.3,495.2 L254.3,491.7 L255.3,488.1 L256.4,484.6 L257.7,481.0 L259.0,477.4 L260.4,473.9 L262.0,470.3 L263.7,466.7 L265.6,463.2 L267.7,459.6 L270.1,456.1 L272.7,452.5 L275.9,448.9 L279.9,445.4 L288.0,441.8Z" fill="none" stroke="#257c5b" stroke-width="8" stroke-linejoin="round"/>
<path d="M288.0,441.8 L296.1,445.4 L300.1,448.9 L303.3,452.5 L305.9,456.1 L308.3,459.6 L310.4,463.2 L312.3,466.7 L314.0,470.3 L315.6,473.9 L317.0,477.4 L318.3,481.0 L319.6,484.6 L320.7,488.1 L321.7,491.7 L322.7,495.2 L323.6,498.8 L324.4,502.4 L325.1,505.9 L325.8,509.5 L326.4,513.0 L326.9,516.6 L327.4,520.2 L327.8,523.7 L328.1,527.3 L328.4,530.9 L328.6,534.4 L328.8,538.0 L328.9,541.5 L329.0,545.1 L329.0,548.7 L328.8,552.2 L328.4,555.8 L327.8,559.4 L327.0,562.9 L326.0,566.5 L324.7,570.0 L323.3,573.6 L321.6,577.2 L319.7,580.7 L317.5,584.3 L315.2,587.9 L312.5,591.4 L309.6,595.0 L306.3,598.5 L302.7,602.1 L298.7,605.7 L294.1,609.2 L288.0,612.8 L288.0,612.8 L281.9,609.2 L277.3,605.7 L273.3,602.1 L269.7,598.5 L266.4,595.0 L263.5,591.4 L260.8,587.9 L258.5,584.3 L256.3,580.7 L254.4,577.2 L252.7,573.6 L251.3,570.0 L250.0,566.5 L249.0,562.9 L248.2,559.4 L247.6,555.8 L247.2,552.2 L247.0,548.7 L247.0,545.1 L247.1,541.5 L247.2,538.0 L247.4,534.4 L247.6,530.9 L247.9,527.3 L248.2,523.7 L248.6,520.2 L249.1,516.6 L249.6,513.0 L250.2,509.5 L250.9,505.9 L251.6,502.4 L252.4,498.8 L253.3,495.2 L254.3,491.7 L255.3,488.1 L256.4,484.6 L257.7,481.0 L259.0,477.4 L260.4,473.9 L262.0,470.3 L263.7,466.7 L265.6,463.2 L267.7,459.6 L270.1,456.1 L272.7,452.5 L275.9,448.9 L279.9,445.4 L288.0,441.8Z" fill="none" stroke="#42a07c" stroke-width="2" stroke-linejoin="round" opacity="0.55"/>
<path d="M273.9,435.9 L277.0,444.2 L277.4,449.5 L277.1,454.3 L276.5,458.7 L275.6,462.9 L274.6,466.9 L273.4,470.7 L272.1,474.5 L270.7,478.1 L269.2,481.6 L267.6,485.1 L265.9,488.5 L264.2,491.8 L262.4,495.1 L260.6,498.3 L258.7,501.4 L256.8,504.5 L254.8,507.5 L252.7,510.5 L250.6,513.4 L248.5,516.3 L246.3,519.2 L244.0,522.0 L241.8,524.8 L239.5,527.5 L237.1,530.2 L234.7,532.8 L232.3,535.4 L229.8,538.0 L227.3,540.5 L224.6,542.9 L221.8,545.1 L218.9,547.2 L215.8,549.2 L212.5,551.0 L209.1,552.6 L205.6,554.1 L201.9,555.4 L198.0,556.6 L194.0,557.6 L189.8,558.4 L185.4,559.1 L180.8,559.5 L176.0,559.7 L170.9,559.7 L165.5,559.4 L159.8,558.6 L152.9,556.9 L152.9,556.9 L151.2,550.0 L150.4,544.3 L150.1,538.9 L150.1,533.8 L150.3,529.0 L150.7,524.4 L151.4,520.0 L152.2,515.8 L153.2,511.8 L154.4,507.9 L155.7,504.2 L157.2,500.7 L158.8,497.3 L160.6,494.0 L162.6,490.9 L164.7,488.0 L166.9,485.2 L169.3,482.5 L171.8,480.0 L174.4,477.5 L177.0,475.1 L179.6,472.7 L182.3,470.3 L185.0,468.0 L187.8,465.8 L190.6,463.5 L193.5,461.3 L196.4,459.2 L199.3,457.1 L202.3,455.0 L205.3,453.0 L208.4,451.1 L211.5,449.2 L214.7,447.4 L218.0,445.6 L221.3,443.9 L224.7,442.2 L228.2,440.6 L231.7,439.1 L235.3,437.7 L239.1,436.4 L242.9,435.2 L246.9,434.2 L251.1,433.3 L255.5,432.7 L260.3,432.4 L265.6,432.8 L273.9,435.9Z" fill="none" stroke="#0f3f2c" stroke-width="10.5" stroke-linejoin="round"/>
<path d="M273.9,435.9 L277.0,444.2 L277.4,449.5 L277.1,454.3 L276.5,458.7 L275.6,462.9 L274.6,466.9 L273.4,470.7 L272.1,474.5 L270.7,478.1 L269.2,481.6 L267.6,485.1 L265.9,488.5 L264.2,491.8 L262.4,495.1 L260.6,498.3 L258.7,501.4 L256.8,504.5 L254.8,507.5 L252.7,510.5 L250.6,513.4 L248.5,516.3 L246.3,519.2 L244.0,522.0 L241.8,524.8 L239.5,527.5 L237.1,530.2 L234.7,532.8 L232.3,535.4 L229.8,538.0 L227.3,540.5 L224.6,542.9 L221.8,545.1 L218.9,547.2 L215.8,549.2 L212.5,551.0 L209.1,552.6 L205.6,554.1 L201.9,555.4 L198.0,556.6 L194.0,557.6 L189.8,558.4 L185.4,559.1 L180.8,559.5 L176.0,559.7 L170.9,559.7 L165.5,559.4 L159.8,558.6 L152.9,556.9 L152.9,556.9 L151.2,550.0 L150.4,544.3 L150.1,538.9 L150.1,533.8 L150.3,529.0 L150.7,524.4 L151.4,520.0 L152.2,515.8 L153.2,511.8 L154.4,507.9 L155.7,504.2 L157.2,500.7 L158.8,497.3 L160.6,494.0 L162.6,490.9 L164.7,488.0 L166.9,485.2 L169.3,482.5 L171.8,480.0 L174.4,477.5 L177.0,475.1 L179.6,472.7 L182.3,470.3 L185.0,468.0 L187.8,465.8 L190.6,463.5 L193.5,461.3 L196.4,459.2 L199.3,457.1 L202.3,455.0 L205.3,453.0 L208.4,451.1 L211.5,449.2 L214.7,447.4 L218.0,445.6 L221.3,443.9 L224.7,442.2 L228.2,440.6 L231.7,439.1 L235.3,437.7 L239.1,436.4 L242.9,435.2 L246.9,434.2 L251.1,433.3 L255.5,432.7 L260.3,432.4 L265.6,432.8 L273.9,435.9Z" fill="#216c4f"/>
<path d="M273.9,435.9 L276.7,453.9 L273.9,466.2 L269.9,477.3 L265.1,487.6 L259.6,497.3 L253.7,506.5 L247.4,515.2 L240.6,523.6 L233.5,531.7 L226.1,539.3 L217.7,546.1 L208.1,551.6 L197.1,555.7 L184.7,558.4 L170.5,559.3 L152.9,556.9 L152.9,556.9 M273.9,435.9 L275.8,453.0 L272.7,465.0 L268.3,475.8 L263.3,485.8 L257.7,495.3 L251.6,504.4 L245.2,513.0 L238.4,521.4 L231.2,529.4 L223.8,537.0 L215.5,543.8 L206.0,549.5 L195.3,553.9 L183.3,557.0 L169.7,558.5 L152.9,556.9 L152.9,556.9 M273.9,435.9 L274.9,452.1 L271.4,463.7 L266.8,474.2 L261.5,484.0 L255.7,493.4 L249.5,502.3 L243.0,510.8 L236.1,519.1 L228.9,527.0 L221.5,534.7 L213.2,541.6 L203.9,547.4 L193.5,552.1 L181.9,555.6 L168.8,557.6 L152.9,556.9 L152.9,556.9 M273.9,435.9 L274.1,451.3 L270.1,462.4 L265.2,472.6 L259.7,482.2 L253.7,491.4 L247.4,500.2 L240.8,508.6 L233.8,516.8 L226.6,524.7 L219.2,532.4 L211.0,539.3 L201.9,545.3 L191.7,550.3 L180.5,554.2 L168.0,556.8 L152.9,556.9 L152.9,556.9 M273.9,435.9 L273.2,450.4 L268.9,461.2 L263.7,471.1 L257.9,480.5 L251.8,489.4 L245.3,498.1 L238.6,506.4 L231.6,514.6 L224.3,522.4 L216.8,530.1 L208.7,537.1 L199.8,543.3 L190.0,548.5 L179.1,552.8 L167.2,556.0 L152.9,556.9 L152.9,556.9 M273.9,435.9 L272.3,449.5 L267.6,459.9 L262.1,469.5 L256.1,478.7 L249.8,487.5 L243.2,496.0 L236.4,504.2 L229.3,512.3 L222.0,520.1 L214.5,527.7 L206.5,534.8 L197.7,541.2 L188.2,546.7 L177.8,551.4 L166.3,555.1 L152.9,556.9 L152.9,556.9 M273.9,435.9 L271.5,448.7 L266.3,458.7 L260.5,468.0 L254.3,476.9 L247.8,485.5 L241.1,493.9 L234.2,502.0 L227.0,510.0 L219.7,517.8 L212.2,525.4 L204.2,532.6 L195.6,539.1 L186.4,544.9 L176.4,550.1 L165.5,554.3 L152.9,556.9 L152.9,556.9 M273.9,435.9 L270.6,447.8 L265.1,457.4 L259.0,466.4 L252.6,475.1 L245.9,483.5 L239.0,491.8 L232.0,499.8 L224.7,507.7 L217.4,515.5 L209.9,523.1 L202.0,530.3 L193.6,537.0 L184.6,543.1 L175.0,548.7 L164.7,553.5 L152.9,556.9 L152.9,556.9 M273.9,435.9 L269.8,447.0 L263.8,456.1 L257.4,464.9 L250.8,473.3 L243.9,481.6 L236.9,489.7 L229.8,497.6 L222.5,505.5 L215.1,513.2 L207.6,520.8 L199.7,528.1 L191.5,534.9 L182.8,541.4 L173.6,547.3 L163.8,552.6 L152.9,556.9 L152.9,556.9 M273.9,435.9 L268.9,446.1 L262.5,454.9 L255.9,463.3 L249.0,471.5 L242.0,479.6 L234.8,487.6 L227.6,495.4 L220.2,503.2 L212.8,510.9 L205.2,518.5 L197.5,525.8 L189.4,532.9 L181.0,539.6 L172.2,545.9 L163.0,551.8 L152.9,556.9 L152.9,556.9 M273.9,435.9 L268.0,445.2 L261.3,453.6 L254.3,461.7 L247.2,469.7 L240.0,477.7 L232.7,485.5 L225.4,493.2 L217.9,500.9 L210.5,508.6 L202.9,516.2 L195.2,523.6 L187.3,530.8 L179.2,537.8 L170.8,544.5 L162.2,551.0 L152.9,556.9 L152.9,556.9 M273.9,435.9 L267.2,444.4 L260.0,452.3 L252.7,460.2 L245.4,468.0 L238.0,475.7 L230.6,483.4 L223.2,491.0 L215.7,498.7 L208.2,506.3 L200.6,513.8 L193.0,521.3 L185.2,528.7 L177.4,536.0 L169.4,543.1 L161.3,550.1 L152.9,556.9 L152.9,556.9 M273.9,435.9 L266.3,443.5 L258.7,451.1 L251.2,458.6 L243.6,466.2 L236.1,473.7 L228.5,481.3 L221.0,488.8 L213.4,496.4 L205.8,504.0 L198.3,511.5 L190.7,519.1 L183.2,526.6 L175.6,534.2 L168.1,541.7 L160.5,549.3 L152.9,556.9 L152.9,556.9 M273.9,435.9 L265.4,442.6 L257.5,449.8 L249.6,457.1 L241.8,464.4 L234.1,471.8 L226.4,479.2 L218.8,486.6 L211.1,494.1 L203.5,501.6 L196.0,509.2 L188.5,516.8 L181.1,524.6 L173.8,532.4 L166.7,540.4 L159.7,548.5 L152.9,556.9 L152.9,556.9 M273.9,435.9 L264.6,441.8 L256.2,448.5 L248.1,455.5 L240.1,462.6 L232.1,469.8 L224.3,477.1 L216.6,484.4 L208.9,491.9 L201.2,499.3 L193.6,506.9 L186.2,514.6 L179.0,522.5 L172.0,530.6 L165.3,539.0 L158.8,547.6 L152.9,556.9 L152.9,556.9 M273.9,435.9 L263.7,440.9 L254.9,447.3 L246.5,453.9 L238.3,460.8 L230.2,467.8 L222.2,475.0 L214.4,482.2 L206.6,489.6 L198.9,497.0 L191.3,504.6 L184.0,512.3 L176.9,520.4 L170.2,528.8 L163.9,537.6 L158.0,546.8 L152.9,556.9 L152.9,556.9 M273.9,435.9 L262.8,440.0 L253.7,446.0 L244.9,452.4 L236.5,459.0 L228.2,465.9 L220.1,472.9 L212.2,480.0 L204.3,487.3 L196.6,494.7 L189.0,502.2 L181.7,510.1 L174.9,518.3 L168.4,527.0 L162.5,536.2 L157.2,546.0 L152.9,556.9 L152.9,556.9 M273.9,435.9 L262.0,439.2 L252.4,444.7 L243.4,450.8 L234.7,457.2 L226.3,463.9 L218.0,470.8 L210.0,477.8 L202.1,485.1 L194.3,492.4 L186.7,499.9 L179.5,507.8 L172.8,516.2 L166.7,525.2 L161.1,534.8 L156.3,545.1 L152.9,556.9 L152.9,556.9 M273.9,435.9 L261.1,438.3 L251.1,443.5 L241.8,449.3 L232.9,455.5 L224.3,462.0 L215.9,468.7 L207.8,475.6 L199.8,482.8 L192.0,490.1 L184.4,497.6 L177.2,505.6 L170.7,514.2 L164.9,523.4 L159.7,533.4 L155.5,544.3 L152.9,556.9 L152.9,556.9 M273.9,435.9 L260.3,437.5 L249.9,442.2 L240.3,447.7 L231.1,453.7 L222.3,460.0 L213.8,466.6 L205.6,473.4 L197.5,480.5 L189.7,487.8 L182.1,495.3 L175.0,503.3 L168.6,512.1 L163.1,521.6 L158.4,532.0 L154.7,543.5 L152.9,556.9 L152.9,556.9 M273.9,435.9 L259.4,436.6 L248.6,440.9 L238.7,446.1 L229.3,451.9 L220.4,458.0 L211.7,464.5 L203.4,471.2 L195.2,478.2 L187.4,485.5 L179.7,493.0 L172.7,501.1 L166.5,510.0 L161.3,519.8 L157.0,530.7 L153.8,542.6 L152.9,556.9 L152.9,556.9 M273.9,435.9 L258.5,435.7 L247.4,439.7 L237.2,444.6 L227.6,450.1 L218.4,456.1 L209.6,462.4 L201.2,469.0 L193.0,476.0 L185.1,483.2 L177.4,490.6 L170.5,498.8 L164.5,507.9 L159.5,518.1 L155.6,529.3 L153.0,541.8 L152.9,556.9 L152.9,556.9 M273.9,435.9 L257.7,434.9 L246.1,438.4 L235.6,443.0 L225.8,448.3 L216.4,454.1 L207.5,460.3 L199.0,466.8 L190.7,473.7 L182.8,480.9 L175.1,488.3 L168.2,496.6 L162.4,505.9 L157.7,516.3 L154.2,527.9 L152.2,541.0 L152.9,556.9 L152.9,556.9 M273.9,435.9 L256.8,434.0 L244.8,437.1 L234.0,441.5 L224.0,446.5 L214.5,452.1 L205.4,458.2 L196.8,464.6 L188.4,471.4 L180.4,478.6 L172.8,486.0 L166.0,494.3 L160.3,503.8 L155.9,514.5 L152.8,526.5 L151.3,540.1 L152.9,556.9 L152.9,556.9 M273.9,435.9 L255.9,433.1 L243.6,435.9 L232.5,439.9 L222.2,444.7 L212.5,450.2 L203.3,456.1 L194.6,462.4 L186.2,469.2 L178.1,476.3 L170.5,483.7 L163.7,492.1 L158.2,501.7 L154.1,512.7 L151.4,525.1 L150.5,539.3 L152.9,556.9 L152.9,556.9" clip-path="url(#c17)" fill="none" stroke="#4aa686" stroke-width="0.7" stroke-opacity="0.8"/>
<path d="M273.9,435.9 L277.0,444.2 L277.4,449.5 L277.1,454.3 L276.5,458.7 L275.6,462.9 L274.6,466.9 L273.4,470.7 L272.1,474.5 L270.7,478.1 L269.2,481.6 L267.6,485.1 L265.9,488.5 L264.2,491.8 L262.4,495.1 L260.6,498.3 L258.7,501.4 L256.8,504.5 L254.8,507.5 L252.7,510.5 L250.6,513.4 L248.5,516.3 L246.3,519.2 L244.0,522.0 L241.8,524.8 L239.5,527.5 L237.1,530.2 L234.7,532.8 L232.3,535.4 L229.8,538.0 L227.3,540.5 L224.6,542.9 L221.8,545.1 L218.9,547.2 L215.8,549.2 L212.5,551.0 L209.1,552.6 L205.6,554.1 L201.9,555.4 L198.0,556.6 L194.0,557.6 L189.8,558.4 L185.4,559.1 L180.8,559.5 L176.0,559.7 L170.9,559.7 L165.5,559.4 L159.8,558.6 L152.9,556.9 L152.9,556.9 L151.2,550.0 L150.4,544.3 L150.1,538.9 L150.1,533.8 L150.3,529.0 L150.7,524.4 L151.4,520.0 L152.2,515.8 L153.2,511.8 L154.4,507.9 L155.7,504.2 L157.2,500.7 L158.8,497.3 L160.6,494.0 L162.6,490.9 L164.7,488.0 L166.9,485.2 L169.3,482.5 L171.8,480.0 L174.4,477.5 L177.0,475.1 L179.6,472.7 L182.3,470.3 L185.0,468.0 L187.8,465.8 L190.6,463.5 L193.5,461.3 L196.4,459.2 L199.3,457.1 L202.3,455.0 L205.3,453.0 L208.4,451.1 L211.5,449.2 L214.7,447.4 L218.0,445.6 L221.3,443.9 L224.7,442.2 L228.2,440.6 L231.7,439.1 L235.3,437.7 L239.1,436.4 L242.9,435.2 L246.9,434.2 L251.1,433.3 L255.5,432.7 L260.3,432.4 L265.6,432.8 L273.9,435.9Z" clip-path="url(#c17)" fill="none" stroke="#0c3a28" stroke-width="15" stroke-opacity="0.35" stroke-linejoin="round"/>
<path d="M273.9,435.9 L277.0,444.2 L277.4,449.5 L277.1,454.3 L276.5,458.7 L275.6,462.9 L274.6,466.9 L273.4,470.7 L272.1,474.5 L270.7,478.1 L269.2,481.6 L267.6,485.1 L265.9,488.5 L264.2,491.8 L262.4,495.1 L260.6,498.3 L258.7,501.4 L256.8,504.5 L254.8,507.5 L252.7,510.5 L250.6,513.4 L248.5,516.3 L246.3,519.2 L244.0,522.0 L241.8,524.8 L239.5,527.5 L237.1,530.2 L234.7,532.8 L232.3,535.4 L229.8,538.0 L227.3,540.5 L224.6,542.9 L221.8,545.1 L218.9,547.2 L215.8,549.2 L212.5,551.0 L209.1,552.6 L205.6,554.1 L201.9,555.4 L198.0,556.6 L194.0,557.6 L189.8,558.4 L185.4,559.1 L180.8,559.5 L176.0,559.7 L170.9,559.7 L165.5,559.4 L159.8,558.6 L152.9,556.9 L152.9,556.9 L151.2,550.0 L150.4,544.3 L150.1,538.9 L150.1,533.8 L150.3,529.0 L150.7,524.4 L151.4,520.0 L152.2,515.8 L153.2,511.8 L154.4,507.9 L155.7,504.2 L157.2,500.7 L158.8,497.3 L160.6,494.0 L162.6,490.9 L164.7,488.0 L166.9,485.2 L169.3,482.5 L171.8,480.0 L174.4,477.5 L177.0,475.1 L179.6,472.7 L182.3,470.3 L185.0,468.0 L187.8,465.8 L190.6,463.5 L193.5,461.3 L196.4,459.2 L199.3,457.1 L202.3,455.0 L205.3,453.0 L208.4,451.1 L211.5,449.2 L214.7,447.4 L218.0,445.6 L221.3,443.9 L224.7,442.2 L228.2,440.6 L231.7,439.1 L235.3,437.7 L239.1,436.4 L242.9,435.2 L246.9,434.2 L251.1,433.3 L255.5,432.7 L260.3,432.4 L265.6,432.8 L273.9,435.9Z" fill="none" stroke="#257c5b" stroke-width="8" stroke-linejoin="round"/>
<path d="M273.9,435.9 L277.0,444.2 L277.4,449.5 L277.1,454.3 L276.5,458.7 L275.6,462.9 L274.6,466.9 L273.4,470.7 L272.1,474.5 L270.7,478.1 L269.2,481.6 L267.6,485.1 L265.9,488.5 L264.2,491.8 L262.4,495.1 L260.6,498.3 L258.7,501.4 L256.8,504.5 L254.8,507.5 L252.7,510.5 L250.6,513.4 L248.5,516.3 L246.3,519.2 L244.0,522.0 L241.8,524.8 L239.5,527.5 L237.1,530.2 L234.7,532.8 L232.3,535.4 L229.8,538.0 L227.3,540.5 L224.6,542.9 L221.8,545.1 L218.9,547.2 L215.8,549.2 L212.5,551.0 L209.1,552.6 L205.6,554.1 L201.9,555.4 L198.0,556.6 L194.0,557.6 L189.8,558.4 L185.4,559.1 L180.8,559.5 L176.0,559.7 L170.9,559.7 L165.5,559.4 L159.8,558.6 L152.9,556.9 L152.9,556.9 L151.2,550.0 L150.4,544.3 L150.1,538.9 L150.1,533.8 L150.3,529.0 L150.7,524.4 L151.4,520.0 L152.2,515.8 L153.2,511.8 L154.4,507.9 L155.7,504.2 L157.2,500.7 L158.8,497.3 L160.6,494.0 L162.6,490.9 L164.7,488.0 L166.9,485.2 L169.3,482.5 L171.8,480.0 L174.4,477.5 L177.0,475.1 L179.6,472.7 L182.3,470.3 L185.0,468.0 L187.8,465.8 L190.6,463.5 L193.5,461.3 L196.4,459.2 L199.3,457.1 L202.3,455.0 L205.3,453.0 L208.4,451.1 L211.5,449.2 L214.7,447.4 L218.0,445.6 L221.3,443.9 L224.7,442.2 L228.2,440.6 L231.7,439.1 L235.3,437.7 L239.1,436.4 L242.9,435.2 L246.9,434.2 L251.1,433.3 L255.5,432.7 L260.3,432.4 L265.6,432.8 L273.9,435.9Z" fill="none" stroke="#42a07c" stroke-width="2" stroke-linejoin="round" opacity="0.55"/>
<path d="M268.0,421.8 L264.4,429.9 L260.9,433.9 L257.3,437.1 L253.8,439.7 L250.2,442.1 L246.6,444.2 L243.1,446.1 L239.5,447.8 L235.9,449.4 L232.4,450.8 L228.8,452.1 L225.2,453.4 L221.7,454.5 L218.1,455.5 L214.6,456.5 L211.0,457.4 L207.4,458.2 L203.9,458.9 L200.3,459.6 L196.8,460.2 L193.2,460.7 L189.6,461.2 L186.1,461.6 L182.5,461.9 L178.9,462.2 L175.4,462.4 L171.8,462.6 L168.2,462.7 L164.7,462.8 L161.1,462.8 L157.6,462.6 L154.0,462.2 L150.4,461.6 L146.9,460.8 L143.3,459.8 L139.8,458.5 L136.2,457.1 L132.6,455.4 L129.1,453.5 L125.5,451.3 L121.9,449.0 L118.4,446.3 L114.8,443.4 L111.2,440.1 L107.7,436.5 L104.1,432.5 L100.6,427.9 L97.0,421.8 L97.0,421.8 L100.6,415.7 L104.1,411.1 L107.7,407.1 L111.2,403.5 L114.8,400.2 L118.4,397.3 L121.9,394.6 L125.5,392.3 L129.1,390.1 L132.6,388.2 L136.2,386.5 L139.8,385.1 L143.3,383.8 L146.9,382.8 L150.4,382.0 L154.0,381.4 L157.6,381.0 L161.1,380.8 L164.7,380.8 L168.2,380.9 L171.8,381.0 L175.4,381.2 L178.9,381.4 L182.5,381.7 L186.1,382.0 L189.6,382.4 L193.2,382.9 L196.8,383.4 L200.3,384.0 L203.9,384.7 L207.4,385.4 L211.0,386.2 L214.6,387.1 L218.1,388.1 L221.7,389.1 L225.2,390.2 L228.8,391.5 L232.4,392.8 L235.9,394.2 L239.5,395.8 L243.1,397.5 L246.6,399.4 L250.2,401.5 L253.8,403.9 L257.3,406.5 L260.9,409.7 L264.4,413.7 L268.0,421.8Z" fill="none" stroke="#0f3f2c" stroke-width="10.5" stroke-linejoin="round"/>
<path d="M268.0,421.8 L264.4,429.9 L260.9,433.9 L257.3,437.1 L253.8,439.7 L250.2,442.1 L246.6,444.2 L243.1,446.1 L239.5,447.8 L235.9,449.4 L232.4,450.8 L228.8,452.1 L225.2,453.4 L221.7,454.5 L218.1,455.5 L214.6,456.5 L211.0,457.4 L207.4,458.2 L203.9,458.9 L200.3,459.6 L196.8,460.2 L193.2,460.7 L189.6,461.2 L186.1,461.6 L182.5,461.9 L178.9,462.2 L175.4,462.4 L171.8,462.6 L168.2,462.7 L164.7,462.8 L161.1,462.8 L157.6,462.6 L154.0,462.2 L150.4,461.6 L146.9,460.8 L143.3,459.8 L139.8,458.5 L136.2,457.1 L132.6,455.4 L129.1,453.5 L125.5,451.3 L121.9,449.0 L118.4,446.3 L114.8,443.4 L111.2,440.1 L107.7,436.5 L104.1,432.5 L100.6,427.9 L97.0,421.8 L97.0,421.8 L100.6,415.7 L104.1,411.1 L107.7,407.1 L111.2,403.5 L114.8,400.2 L118.4,397.3 L121.9,394.6 L125.5,392.3 L129.1,390.1 L132.6,388.2 L136.2,386.5 L139.8,385.1 L143.3,383.8 L146.9,382.8 L150.4,382.0 L154.0,381.4 L157.6,381.0 L161.1,380.8 L164.7,380.8 L168.2,380.9 L171.8,381.0 L175.4,381.2 L178.9,381.4 L182.5,381.7 L186.1,382.0 L189.6,382.4 L193.2,382.9 L196.8,383.4 L200.3,384.0 L203.9,384.7 L207.4,385.4 L211.0,386.2 L214.6,387.1 L218.1,388.1 L221.7,389.1 L225.2,390.2 L228.8,391.5 L232.4,392.8 L235.9,394.2 L239.5,395.8 L243.1,397.5 L246.6,399.4 L250.2,401.5 L253.8,403.9 L257.3,406.5 L260.9,409.7 L264.4,413.7 L268.0,421.8Z" fill="#216c4f"/>
<path d="M268.0,421.8 L257.3,436.4 L246.6,443.3 L235.9,448.3 L225.2,452.1 L214.6,455.1 L203.9,457.4 L193.2,459.1 L182.5,460.3 L171.8,461.0 L161.1,461.1 L150.4,460.0 L139.8,457.1 L129.1,452.2 L118.4,445.3 L107.7,435.9 L97.0,421.8 L97.0,421.8 M268.0,421.8 L257.3,435.2 L246.6,441.5 L235.9,446.1 L225.2,449.6 L214.6,452.3 L203.9,454.5 L193.2,456.0 L182.5,457.1 L171.8,457.7 L161.1,457.9 L150.4,456.8 L139.8,454.1 L129.1,449.7 L118.4,443.4 L107.7,434.7 L97.0,421.8 L97.0,421.8 M268.0,421.8 L257.3,434.0 L246.6,439.7 L235.9,443.8 L225.2,447.1 L214.6,449.6 L203.9,451.5 L193.2,452.9 L182.5,453.9 L171.8,454.4 L161.1,454.6 L150.4,453.6 L139.8,451.2 L129.1,447.2 L118.4,441.4 L107.7,433.6 L97.0,421.8 L97.0,421.8 M268.0,421.8 L257.3,432.8 L246.6,437.9 L235.9,441.6 L225.2,444.5 L214.6,446.8 L203.9,448.5 L193.2,449.8 L182.5,450.7 L171.8,451.2 L161.1,451.3 L150.4,450.5 L139.8,448.2 L129.1,444.6 L118.4,439.4 L107.7,432.4 L97.0,421.8 L97.0,421.8 M268.0,421.8 L257.3,431.6 L246.6,436.1 L235.9,439.4 L225.2,442.0 L214.6,444.0 L203.9,445.5 L193.2,446.7 L182.5,447.5 L171.8,447.9 L161.1,448.0 L150.4,447.3 L139.8,445.3 L129.1,442.1 L118.4,437.5 L107.7,431.2 L97.0,421.8 L97.0,421.8 M268.0,421.8 L257.3,430.3 L246.6,434.3 L235.9,437.2 L225.2,439.5 L214.6,441.2 L203.9,442.6 L193.2,443.6 L182.5,444.3 L171.8,444.7 L161.1,444.8 L150.4,444.1 L139.8,442.4 L129.1,439.5 L118.4,435.5 L107.7,430.0 L97.0,421.8 L97.0,421.8 M268.0,421.8 L257.3,429.1 L246.6,432.5 L235.9,435.0 L225.2,437.0 L214.6,438.5 L203.9,439.6 L193.2,440.5 L182.5,441.1 L171.8,441.4 L161.1,441.5 L150.4,440.9 L139.8,439.4 L129.1,437.0 L118.4,433.6 L107.7,428.9 L97.0,421.8 L97.0,421.8 M268.0,421.8 L257.3,427.9 L246.6,430.8 L235.9,432.8 L225.2,434.4 L214.6,435.7 L203.9,436.6 L193.2,437.4 L182.5,437.8 L171.8,438.1 L161.1,438.2 L150.4,437.7 L139.8,436.5 L129.1,434.5 L118.4,431.6 L107.7,427.7 L97.0,421.8 L97.0,421.8 M268.0,421.8 L257.3,426.7 L246.6,429.0 L235.9,430.6 L225.2,431.9 L214.6,432.9 L203.9,433.7 L193.2,434.2 L182.5,434.6 L171.8,434.9 L161.1,434.9 L150.4,434.5 L139.8,433.6 L129.1,431.9 L118.4,429.6 L107.7,426.5 L97.0,421.8 L97.0,421.8 M268.0,421.8 L257.3,425.5 L246.6,427.2 L235.9,428.4 L225.2,429.4 L214.6,430.1 L203.9,430.7 L193.2,431.1 L182.5,431.4 L171.8,431.6 L161.1,431.6 L150.4,431.4 L139.8,430.6 L129.1,429.4 L118.4,427.7 L107.7,425.3 L97.0,421.8 L97.0,421.8 M268.0,421.8 L257.3,424.2 L246.6,425.4 L235.9,426.2 L225.2,426.9 L214.6,427.4 L203.9,427.7 L193.2,428.0 L182.5,428.2 L171.8,428.3 L161.1,428.4 L150.4,428.2 L139.8,427.7 L129.1,426.9 L118.4,425.7 L107.7,424.2 L97.0,421.8 L97.0,421.8 M268.0,421.8 L257.3,423.0 L246.6,423.6 L235.9,424.0 L225.2,424.3 L214.6,424.6 L203.9,424.8 L193.2,424.9 L182.5,425.0 L171.8,425.1 L161.1,425.1 L150.4,425.0 L139.8,424.7 L129.1,424.3 L118.4,423.8 L107.7,423.0 L97.0,421.8 L97.0,421.8 M268.0,421.8 L257.3,421.8 L246.6,421.8 L235.9,421.8 L225.2,421.8 L214.6,421.8 L203.9,421.8 L193.2,421.8 L182.5,421.8 L171.8,421.8 L161.1,421.8 L150.4,421.8 L139.8,421.8 L129.1,421.8 L118.4,421.8 L107.7,421.8 L97.0,421.8 L97.0,421.8 M268.0,421.8 L257.3,420.6 L246.6,420.0 L235.9,419.6 L225.2,419.3 L214.6,419.0 L203.9,418.8 L193.2,418.7 L182.5,418.6 L171.8,418.5 L161.1,418.5 L150.4,418.6 L139.8,418.9 L129.1,419.3 L118.4,419.8 L107.7,420.6 L97.0,421.8 L97.0,421.8 M268.0,421.8 L257.3,419.4 L246.6,418.2 L235.9,417.4 L225.2,416.7 L214.6,416.2 L203.9,415.9 L193.2,415.6 L182.5,415.4 L171.8,415.3 L161.1,415.2 L150.4,415.4 L139.8,415.9 L129.1,416.7 L118.4,417.9 L107.7,419.4 L97.0,421.8 L97.0,421.8 M268.0,421.8 L257.3,418.1 L246.6,416.4 L235.9,415.2 L225.2,414.2 L214.6,413.5 L203.9,412.9 L193.2,412.5 L182.5,412.2 L171.8,412.0 L161.1,412.0 L150.4,412.2 L139.8,413.0 L129.1,414.2 L118.4,415.9 L107.7,418.3 L97.0,421.8 L97.0,421.8 M268.0,421.8 L257.3,416.9 L246.6,414.6 L235.9,413.0 L225.2,411.7 L214.6,410.7 L203.9,409.9 L193.2,409.4 L182.5,409.0 L171.8,408.7 L161.1,408.7 L150.4,409.1 L139.8,410.0 L129.1,411.7 L118.4,414.0 L107.7,417.1 L97.0,421.8 L97.0,421.8 M268.0,421.8 L257.3,415.7 L246.6,412.8 L235.9,410.8 L225.2,409.2 L214.6,407.9 L203.9,407.0 L193.2,406.2 L182.5,405.8 L171.8,405.5 L161.1,405.4 L150.4,405.9 L139.8,407.1 L129.1,409.1 L118.4,412.0 L107.7,415.9 L97.0,421.8 L97.0,421.8 M268.0,421.8 L257.3,414.5 L246.6,411.1 L235.9,408.6 L225.2,406.6 L214.6,405.1 L203.9,404.0 L193.2,403.1 L182.5,402.5 L171.8,402.2 L161.1,402.1 L150.4,402.7 L139.8,404.2 L129.1,406.6 L118.4,410.0 L107.7,414.7 L97.0,421.8 L97.0,421.8 M268.0,421.8 L257.3,413.3 L246.6,409.3 L235.9,406.4 L225.2,404.1 L214.6,402.4 L203.9,401.0 L193.2,400.0 L182.5,399.3 L171.8,398.9 L161.1,398.8 L150.4,399.5 L139.8,401.2 L129.1,404.1 L118.4,408.1 L107.7,413.6 L97.0,421.8 L97.0,421.8 M268.0,421.8 L257.3,412.0 L246.6,407.5 L235.9,404.2 L225.2,401.6 L214.6,399.6 L203.9,398.1 L193.2,396.9 L182.5,396.1 L171.8,395.7 L161.1,395.6 L150.4,396.3 L139.8,398.3 L129.1,401.5 L118.4,406.1 L107.7,412.4 L97.0,421.8 L97.0,421.8 M268.0,421.8 L257.3,410.8 L246.6,405.7 L235.9,402.0 L225.2,399.1 L214.6,396.8 L203.9,395.1 L193.2,393.8 L182.5,392.9 L171.8,392.4 L161.1,392.3 L150.4,393.1 L139.8,395.4 L129.1,399.0 L118.4,404.2 L107.7,411.2 L97.0,421.8 L97.0,421.8 M268.0,421.8 L257.3,409.6 L246.6,403.9 L235.9,399.8 L225.2,396.5 L214.6,394.0 L203.9,392.1 L193.2,390.7 L182.5,389.7 L171.8,389.2 L161.1,389.0 L150.4,390.0 L139.8,392.4 L129.1,396.4 L118.4,402.2 L107.7,410.0 L97.0,421.8 L97.0,421.8 M268.0,421.8 L257.3,408.4 L246.6,402.1 L235.9,397.5 L225.2,394.0 L214.6,391.3 L203.9,389.1 L193.2,387.6 L182.5,386.5 L171.8,385.9 L161.1,385.7 L150.4,386.8 L139.8,389.5 L129.1,393.9 L118.4,400.2 L107.7,408.9 L97.0,421.8 L97.0,421.8 M268.0,421.8 L257.3,407.2 L246.6,400.3 L235.9,395.3 L225.2,391.5 L214.6,388.5 L203.9,386.2 L193.2,384.5 L182.5,383.3 L171.8,382.6 L161.1,382.5 L150.4,383.6 L139.8,386.5 L129.1,391.4 L118.4,398.3 L107.7,407.7 L97.0,421.8 L97.0,421.8" clip-path="url(#c18)" fill="none" stroke="#4aa686" stroke-width="0.7" stroke-opacity="0.8"/>
<path d="M268.0,421.8 L264.4,429.9 L260.9,433.9 L257.3,437.1 L253.8,439.7 L250.2,442.1 L246.6,444.2 L243.1,446.1 L239.5,447.8 L235.9,449.4 L232.4,450.8 L228.8,452.1 L225.2,453.4 L221.7,454.5 L218.1,455.5 L214.6,456.5 L211.0,457.4 L207.4,458.2 L203.9,458.9 L200.3,459.6 L196.8,460.2 L193.2,460.7 L189.6,461.2 L186.1,461.6 L182.5,461.9 L178.9,462.2 L175.4,462.4 L171.8,462.6 L168.2,462.7 L164.7,462.8 L161.1,462.8 L157.6,462.6 L154.0,462.2 L150.4,461.6 L146.9,460.8 L143.3,459.8 L139.8,458.5 L136.2,457.1 L132.6,455.4 L129.1,453.5 L125.5,451.3 L121.9,449.0 L118.4,446.3 L114.8,443.4 L111.2,440.1 L107.7,436.5 L104.1,432.5 L100.6,427.9 L97.0,421.8 L97.0,421.8 L100.6,415.7 L104.1,411.1 L107.7,407.1 L111.2,403.5 L114.8,400.2 L118.4,397.3 L121.9,394.6 L125.5,392.3 L129.1,390.1 L132.6,388.2 L136.2,386.5 L139.8,385.1 L143.3,383.8 L146.9,382.8 L150.4,382.0 L154.0,381.4 L157.6,381.0 L161.1,380.8 L164.7,380.8 L168.2,380.9 L171.8,381.0 L175.4,381.2 L178.9,381.4 L182.5,381.7 L186.1,382.0 L189.6,382.4 L193.2,382.9 L196.8,383.4 L200.3,384.0 L203.9,384.7 L207.4,385.4 L211.0,386.2 L214.6,387.1 L218.1,388.1 L221.7,389.1 L225.2,390.2 L228.8,391.5 L232.4,392.8 L235.9,394.2 L239.5,395.8 L243.1,397.5 L246.6,399.4 L250.2,401.5 L253.8,403.9 L257.3,406.5 L260.9,409.7 L264.4,413.7 L268.0,421.8Z" clip-path="url(#c18)" fill="none" stroke="#0c3a28" stroke-width="15" stroke-opacity="0.35" stroke-linejoin="round"/>
<path d="M268.0,421.8 L264.4,429.9 L260.9,433.9 L257.3,437.1 L253.8,439.7 L250.2,442.1 L246.6,444.2 L243.1,446.1 L239.5,447.8 L235.9,449.4 L232.4,450.8 L228.8,452.1 L225.2,453.4 L221.7,454.5 L218.1,455.5 L214.6,456.5 L211.0,457.4 L207.4,458.2 L203.9,458.9 L200.3,459.6 L196.8,460.2 L193.2,460.7 L189.6,461.2 L186.1,461.6 L182.5,461.9 L178.9,462.2 L175.4,462.4 L171.8,462.6 L168.2,462.7 L164.7,462.8 L161.1,462.8 L157.6,462.6 L154.0,462.2 L150.4,461.6 L146.9,460.8 L143.3,459.8 L139.8,458.5 L136.2,457.1 L132.6,455.4 L129.1,453.5 L125.5,451.3 L121.9,449.0 L118.4,446.3 L114.8,443.4 L111.2,440.1 L107.7,436.5 L104.1,432.5 L100.6,427.9 L97.0,421.8 L97.0,421.8 L100.6,415.7 L104.1,411.1 L107.7,407.1 L111.2,403.5 L114.8,400.2 L118.4,397.3 L121.9,394.6 L125.5,392.3 L129.1,390.1 L132.6,388.2 L136.2,386.5 L139.8,385.1 L143.3,383.8 L146.9,382.8 L150.4,382.0 L154.0,381.4 L157.6,381.0 L161.1,380.8 L164.7,380.8 L168.2,380.9 L171.8,381.0 L175.4,381.2 L178.9,381.4 L182.5,381.7 L186.1,382.0 L189.6,382.4 L193.2,382.9 L196.8,383.4 L200.3,384.0 L203.9,384.7 L207.4,385.4 L211.0,386.2 L214.6,387.1 L218.1,388.1 L221.7,389.1 L225.2,390.2 L228.8,391.5 L232.4,392.8 L235.9,394.2 L239.5,395.8 L243.1,397.5 L246.6,399.4 L250.2,401.5 L253.8,403.9 L257.3,406.5 L260.9,409.7 L264.4,413.7 L268.0,421.8Z" fill="none" stroke="#257c5b" stroke-width="8" stroke-linejoin="round"/>
<path d="M268.0,421.8 L264.4,429.9 L260.9,433.9 L257.3,437.1 L253.8,439.7 L250.2,442.1 L246.6,444.2 L243.1,446.1 L239.5,447.8 L235.9,449.4 L232.4,450.8 L228.8,452.1 L225.2,453.4 L221.7,454.5 L218.1,455.5 L214.6,456.5 L211.0,457.4 L207.4,458.2 L203.9,458.9 L200.3,459.6 L196.8,460.2 L193.2,460.7 L189.6,461.2 L186.1,461.6 L182.5,461.9 L178.9,462.2 L175.4,462.4 L171.8,462.6 L168.2,462.7 L164.7,462.8 L161.1,462.8 L157.6,462.6 L154.0,462.2 L150.4,461.6 L146.9,460.8 L143.3,459.8 L139.8,458.5 L136.2,457.1 L132.6,455.4 L129.1,453.5 L125.5,451.3 L121.9,449.0 L118.4,446.3 L114.8,443.4 L111.2,440.1 L107.7,436.5 L104.1,432.5 L100.6,427.9 L97.0,421.8 L97.0,421.8 L100.6,415.7 L104.1,411.1 L107.7,407.1 L111.2,403.5 L114.8,400.2 L118.4,397.3 L121.9,394.6 L125.5,392.3 L129.1,390.1 L132.6,388.2 L136.2,386.5 L139.8,385.1 L143.3,383.8 L146.9,382.8 L150.4,382.0 L154.0,381.4 L157.6,381.0 L161.1,380.8 L164.7,380.8 L168.2,380.9 L171.8,381.0 L175.4,381.2 L178.9,381.4 L182.5,381.7 L186.1,382.0 L189.6,382.4 L193.2,382.9 L196.8,383.4 L200.3,384.0 L203.9,384.7 L207.4,385.4 L211.0,386.2 L214.6,387.1 L218.1,388.1 L221.7,389.1 L225.2,390.2 L228.8,391.5 L232.4,392.8 L235.9,394.2 L239.5,395.8 L243.1,397.5 L246.6,399.4 L250.2,401.5 L253.8,403.9 L257.3,406.5 L260.9,409.7 L264.4,413.7 L268.0,421.8Z" fill="none" stroke="#42a07c" stroke-width="2" stroke-linejoin="round" opacity="0.55"/>
<path d="M273.9,407.7 L265.6,410.8 L260.3,411.2 L255.5,410.9 L251.1,410.3 L246.9,409.4 L242.9,408.4 L239.1,407.2 L235.3,405.9 L231.7,404.5 L228.2,403.0 L224.7,401.4 L221.3,399.7 L218.0,398.0 L214.7,396.2 L211.5,394.4 L208.4,392.5 L205.3,390.6 L202.3,388.6 L199.3,386.5 L196.4,384.4 L193.5,382.3 L190.6,380.1 L187.8,377.8 L185.0,375.6 L182.3,373.3 L179.6,370.9 L177.0,368.5 L174.4,366.1 L171.8,363.6 L169.3,361.1 L166.9,358.4 L164.7,355.6 L162.6,352.7 L160.6,349.6 L158.8,346.3 L157.2,342.9 L155.7,339.4 L154.4,335.7 L153.2,331.8 L152.2,327.8 L151.4,323.6 L150.7,319.2 L150.3,314.6 L150.1,309.8 L150.1,304.7 L150.4,299.3 L151.2,293.6 L152.9,286.7 L152.9,286.7 L159.8,285.0 L165.5,284.2 L170.9,283.9 L176.0,283.9 L180.8,284.1 L185.4,284.5 L189.8,285.2 L194.0,286.0 L198.0,287.0 L201.9,288.2 L205.6,289.5 L209.1,291.0 L212.5,292.6 L215.8,294.4 L218.9,296.4 L221.8,298.5 L224.6,300.7 L227.3,303.1 L229.8,305.6 L232.3,308.2 L234.7,310.8 L237.1,313.4 L239.5,316.1 L241.8,318.8 L244.0,321.6 L246.3,324.4 L248.5,327.3 L250.6,330.2 L252.7,333.1 L254.8,336.1 L256.8,339.1 L258.7,342.2 L260.6,345.3 L262.4,348.5 L264.2,351.8 L265.9,355.1 L267.6,358.5 L269.2,362.0 L270.7,365.5 L272.1,369.1 L273.4,372.9 L274.6,376.7 L275.6,380.7 L276.5,384.9 L277.1,389.3 L277.4,394.1 L277.0,399.4 L273.9,407.7Z" fill="none" stroke="#0f3f2c" stroke-width="10.5" stroke-linejoin="round"/>
<path d="M273.9,407.7 L265.6,410.8 L260.3,411.2 L255.5,410.9 L251.1,410.3 L246.9,409.4 L242.9,408.4 L239.1,407.2 L235.3,405.9 L231.7,404.5 L228.2,403.0 L224.7,401.4 L221.3,399.7 L218.0,398.0 L214.7,396.2 L211.5,394.4 L208.4,392.5 L205.3,390.6 L202.3,388.6 L199.3,386.5 L196.4,384.4 L193.5,382.3 L190.6,380.1 L187.8,377.8 L185.0,375.6 L182.3,373.3 L179.6,370.9 L177.0,368.5 L174.4,366.1 L171.8,363.6 L169.3,361.1 L166.9,358.4 L164.7,355.6 L162.6,352.7 L160.6,349.6 L158.8,346.3 L157.2,342.9 L155.7,339.4 L154.4,335.7 L153.2,331.8 L152.2,327.8 L151.4,323.6 L150.7,319.2 L150.3,314.6 L150.1,309.8 L150.1,304.7 L150.4,299.3 L151.2,293.6 L152.9,286.7 L152.9,286.7 L159.8,285.0 L165.5,284.2 L170.9,283.9 L176.0,283.9 L180.8,284.1 L185.4,284.5 L189.8,285.2 L194.0,286.0 L198.0,287.0 L201.9,288.2 L205.6,289.5 L209.1,291.0 L212.5,292.6 L215.8,294.4 L218.9,296.4 L221.8,298.5 L224.6,300.7 L227.3,303.1 L229.8,305.6 L232.3,308.2 L234.7,310.8 L237.1,313.4 L239.5,316.1 L241.8,318.8 L244.0,321.6 L246.3,324.4 L248.5,327.3 L250.6,330.2 L252.7,333.1 L254.8,336.1 L256.8,339.1 L258.7,342.2 L260.6,345.3 L262.4,348.5 L264.2,351.8 L265.9,355.1 L267.6,358.5 L269.2,362.0 L270.7,365.5 L272.1,369.1 L273.4,372.9 L274.6,376.7 L275.6,380.7 L276.5,384.9 L277.1,389.3 L277.4,394.1 L277.0,399.4 L273.9,407.7Z" fill="#216c4f"/>
<path d="M273.9,407.7 L255.9,410.5 L243.6,407.7 L232.5,403.7 L222.2,398.9 L212.5,393.4 L203.3,387.5 L194.6,381.2 L186.2,374.4 L178.1,367.3 L170.5,359.9 L163.7,351.5 L158.2,341.9 L154.1,330.9 L151.4,318.5 L150.5,304.3 L152.9,286.7 L152.9,286.7 M273.9,407.7 L256.8,409.6 L244.8,406.5 L234.0,402.1 L224.0,397.1 L214.5,391.5 L205.4,385.4 L196.8,379.0 L188.4,372.2 L180.4,365.0 L172.8,357.6 L166.0,349.3 L160.3,339.8 L155.9,329.1 L152.8,317.1 L151.3,303.5 L152.9,286.7 L152.9,286.7 M273.9,407.7 L257.7,408.7 L246.1,405.2 L235.6,400.6 L225.8,395.3 L216.4,389.5 L207.5,383.3 L199.0,376.8 L190.7,369.9 L182.8,362.7 L175.1,355.3 L168.2,347.0 L162.4,337.7 L157.7,327.3 L154.2,315.7 L152.2,302.6 L152.9,286.7 L152.9,286.7 M273.9,407.7 L258.5,407.9 L247.4,403.9 L237.2,399.0 L227.6,393.5 L218.4,387.5 L209.6,381.2 L201.2,374.6 L193.0,367.6 L185.1,360.4 L177.4,353.0 L170.5,344.8 L164.5,335.7 L159.5,325.5 L155.6,314.3 L153.0,301.8 L152.9,286.7 L152.9,286.7 M273.9,407.7 L259.4,407.0 L248.6,402.7 L238.7,397.5 L229.3,391.7 L220.4,385.6 L211.7,379.1 L203.4,372.4 L195.2,365.4 L187.4,358.1 L179.7,350.6 L172.7,342.5 L166.5,333.6 L161.3,323.8 L157.0,312.9 L153.8,301.0 L152.9,286.7 L152.9,286.7 M273.9,407.7 L260.3,406.1 L249.9,401.4 L240.3,395.9 L231.1,389.9 L222.3,383.6 L213.8,377.0 L205.6,370.2 L197.5,363.1 L189.7,355.8 L182.1,348.3 L175.0,340.3 L168.6,331.5 L163.1,322.0 L158.4,311.6 L154.7,300.1 L152.9,286.7 L152.9,286.7 M273.9,407.7 L261.1,405.3 L251.1,400.1 L241.8,394.3 L232.9,388.1 L224.3,381.6 L215.9,374.9 L207.8,368.0 L199.8,360.8 L192.0,353.5 L184.4,346.0 L177.2,338.0 L170.7,329.4 L164.9,320.2 L159.7,310.2 L155.5,299.3 L152.9,286.7 L152.9,286.7 M273.9,407.7 L262.0,404.4 L252.4,398.9 L243.4,392.8 L234.7,386.4 L226.3,379.7 L218.0,372.8 L210.0,365.8 L202.1,358.5 L194.3,351.2 L186.7,343.7 L179.5,335.8 L172.8,327.4 L166.7,318.4 L161.1,308.8 L156.3,298.5 L152.9,286.7 L152.9,286.7 M273.9,407.7 L262.8,403.6 L253.7,397.6 L244.9,391.2 L236.5,384.6 L228.2,377.7 L220.1,370.7 L212.2,363.6 L204.3,356.3 L196.6,348.9 L189.0,341.4 L181.7,333.5 L174.9,325.3 L168.4,316.6 L162.5,307.4 L157.2,297.6 L152.9,286.7 L152.9,286.7 M273.9,407.7 L263.7,402.7 L254.9,396.3 L246.5,389.7 L238.3,382.8 L230.2,375.8 L222.2,368.6 L214.4,361.4 L206.6,354.0 L198.9,346.6 L191.3,339.0 L184.0,331.3 L176.9,323.2 L170.2,314.8 L163.9,306.0 L158.0,296.8 L152.9,286.7 L152.9,286.7 M273.9,407.7 L264.6,401.8 L256.2,395.1 L248.1,388.1 L240.1,381.0 L232.1,373.8 L224.3,366.5 L216.6,359.2 L208.9,351.7 L201.2,344.3 L193.6,336.7 L186.2,329.0 L179.0,321.1 L172.0,313.0 L165.3,304.6 L158.8,296.0 L152.9,286.7 L152.9,286.7 M273.9,407.7 L265.4,401.0 L257.5,393.8 L249.6,386.5 L241.8,379.2 L234.1,371.8 L226.4,364.4 L218.8,357.0 L211.1,349.5 L203.5,342.0 L196.0,334.4 L188.5,326.8 L181.1,319.0 L173.8,311.2 L166.7,303.2 L159.7,295.1 L152.9,286.7 L152.9,286.7 M273.9,407.7 L266.3,400.1 L258.7,392.5 L251.2,385.0 L243.6,377.4 L236.1,369.9 L228.5,362.3 L221.0,354.8 L213.4,347.2 L205.8,339.6 L198.3,332.1 L190.7,324.5 L183.2,317.0 L175.6,309.4 L168.1,301.9 L160.5,294.3 L152.9,286.7 L152.9,286.7 M273.9,407.7 L267.2,399.2 L260.0,391.3 L252.7,383.4 L245.4,375.6 L238.0,367.9 L230.6,360.2 L223.2,352.6 L215.7,344.9 L208.2,337.3 L200.6,329.8 L193.0,322.3 L185.2,314.9 L177.4,307.6 L169.4,300.5 L161.3,293.5 L152.9,286.7 L152.9,286.7 M273.9,407.7 L268.0,398.4 L261.3,390.0 L254.3,381.9 L247.2,373.9 L240.0,365.9 L232.7,358.1 L225.4,350.4 L217.9,342.7 L210.5,335.0 L202.9,327.4 L195.2,320.0 L187.3,312.8 L179.2,305.8 L170.8,299.1 L162.2,292.6 L152.9,286.7 L152.9,286.7 M273.9,407.7 L268.9,397.5 L262.5,388.7 L255.9,380.3 L249.0,372.1 L242.0,364.0 L234.8,356.0 L227.6,348.2 L220.2,340.4 L212.8,332.7 L205.2,325.1 L197.5,317.8 L189.4,310.7 L181.0,304.0 L172.2,297.7 L163.0,291.8 L152.9,286.7 L152.9,286.7 M273.9,407.7 L269.8,396.6 L263.8,387.5 L257.4,378.7 L250.8,370.3 L243.9,362.0 L236.9,353.9 L229.8,346.0 L222.5,338.1 L215.1,330.4 L207.6,322.8 L199.7,315.5 L191.5,308.7 L182.8,302.2 L173.6,296.3 L163.8,291.0 L152.9,286.7 L152.9,286.7 M273.9,407.7 L270.6,395.8 L265.1,386.2 L259.0,377.2 L252.6,368.5 L245.9,360.1 L239.0,351.8 L232.0,343.8 L224.7,335.9 L217.4,328.1 L209.9,320.5 L202.0,313.3 L193.6,306.6 L184.6,300.5 L175.0,294.9 L164.7,290.1 L152.9,286.7 L152.9,286.7 M273.9,407.7 L271.5,394.9 L266.3,384.9 L260.5,375.6 L254.3,366.7 L247.8,358.1 L241.1,349.7 L234.2,341.6 L227.0,333.6 L219.7,325.8 L212.2,318.2 L204.2,311.0 L195.6,304.5 L186.4,298.7 L176.4,293.5 L165.5,289.3 L152.9,286.7 L152.9,286.7 M273.9,407.7 L272.3,394.1 L267.6,383.7 L262.1,374.1 L256.1,364.9 L249.8,356.1 L243.2,347.6 L236.4,339.4 L229.3,331.3 L222.0,323.5 L214.5,315.9 L206.5,308.8 L197.7,302.4 L188.2,296.9 L177.8,292.2 L166.3,288.5 L152.9,286.7 L152.9,286.7 M273.9,407.7 L273.2,393.2 L268.9,382.4 L263.7,372.5 L257.9,363.1 L251.8,354.2 L245.3,345.5 L238.6,337.2 L231.6,329.0 L224.3,321.2 L216.8,313.5 L208.7,306.5 L199.8,300.3 L190.0,295.1 L179.1,290.8 L167.2,287.6 L152.9,286.7 L152.9,286.7 M273.9,407.7 L274.1,392.3 L270.1,381.2 L265.2,371.0 L259.7,361.4 L253.7,352.2 L247.4,343.4 L240.8,335.0 L233.8,326.8 L226.6,318.9 L219.2,311.2 L211.0,304.3 L201.9,298.3 L191.7,293.3 L180.5,289.4 L168.0,286.8 L152.9,286.7 L152.9,286.7 M273.9,407.7 L274.9,391.5 L271.4,379.9 L266.8,369.4 L261.5,359.6 L255.7,350.2 L249.5,341.3 L243.0,332.8 L236.1,324.5 L228.9,316.6 L221.5,308.9 L213.2,302.0 L203.9,296.2 L193.5,291.5 L181.9,288.0 L168.8,286.0 L152.9,286.7 L152.9,286.7 M273.9,407.7 L275.8,390.6 L272.7,378.6 L268.3,367.8 L263.3,357.8 L257.7,348.3 L251.6,339.2 L245.2,330.6 L238.4,322.2 L231.2,314.2 L223.8,306.6 L215.5,299.8 L206.0,294.1 L195.3,289.7 L183.3,286.6 L169.7,285.1 L152.9,286.7 L152.9,286.7 M273.9,407.7 L276.7,389.7 L273.9,377.4 L269.9,366.3 L265.1,356.0 L259.6,346.3 L253.7,337.1 L247.4,328.4 L240.6,320.0 L233.5,311.9 L226.1,304.3 L217.7,297.5 L208.1,292.0 L197.1,287.9 L184.7,285.2 L170.5,284.3 L152.9,286.7 L152.9,286.7" clip-path="url(#c19)" fill="none" stroke="#4aa686" stroke-width="0.7" stroke-opacity="0.8"/>
<path d="M273.9,407.7 L265.6,410.8 L260.3,411.2 L255.5,410.9 L251.1,410.3 L246.9,409.4 L242.9,408.4 L239.1,407.2 L235.3,405.9 L231.7,404.5 L228.2,403.0 L224.7,401.4 L221.3,399.7 L218.0,398.0 L214.7,396.2 L211.5,394.4 L208.4,392.5 L205.3,390.6 L202.3,388.6 L199.3,386.5 L196.4,384.4 L193.5,382.3 L190.6,380.1 L187.8,377.8 L185.0,375.6 L182.3,373.3 L179.6,370.9 L177.0,368.5 L174.4,366.1 L171.8,363.6 L169.3,361.1 L166.9,358.4 L164.7,355.6 L162.6,352.7 L160.6,349.6 L158.8,346.3 L157.2,342.9 L155.7,339.4 L154.4,335.7 L153.2,331.8 L152.2,327.8 L151.4,323.6 L150.7,319.2 L150.3,314.6 L150.1,309.8 L150.1,304.7 L150.4,299.3 L151.2,293.6 L152.9,286.7 L152.9,286.7 L159.8,285.0 L165.5,284.2 L170.9,283.9 L176.0,283.9 L180.8,284.1 L185.4,284.5 L189.8,285.2 L194.0,286.0 L198.0,287.0 L201.9,288.2 L205.6,289.5 L209.1,291.0 L212.5,292.6 L215.8,294.4 L218.9,296.4 L221.8,298.5 L224.6,300.7 L227.3,303.1 L229.8,305.6 L232.3,308.2 L234.7,310.8 L237.1,313.4 L239.5,316.1 L241.8,318.8 L244.0,321.6 L246.3,324.4 L248.5,327.3 L250.6,330.2 L252.7,333.1 L254.8,336.1 L256.8,339.1 L258.7,342.2 L260.6,345.3 L262.4,348.5 L264.2,351.8 L265.9,355.1 L267.6,358.5 L269.2,362.0 L270.7,365.5 L272.1,369.1 L273.4,372.9 L274.6,376.7 L275.6,380.7 L276.5,384.9 L277.1,389.3 L277.4,394.1 L277.0,399.4 L273.9,407.7Z" clip-path="url(#c19)" fill="none" stroke="#0c3a28" stroke-width="15" stroke-opacity="0.35" stroke-linejoin="round"/>
<path d="M273.9,407.7 L265.6,410.8 L260.3,411.2 L255.5,410.9 L251.1,410.3 L246.9,409.4 L242.9,408.4 L239.1,407.2 L235.3,405.9 L231.7,404.5 L228.2,403.0 L224.7,401.4 L221.3,399.7 L218.0,398.0 L214.7,396.2 L211.5,394.4 L208.4,392.5 L205.3,390.6 L202.3,388.6 L199.3,386.5 L196.4,384.4 L193.5,382.3 L190.6,380.1 L187.8,377.8 L185.0,375.6 L182.3,373.3 L179.6,370.9 L177.0,368.5 L174.4,366.1 L171.8,363.6 L169.3,361.1 L166.9,358.4 L164.7,355.6 L162.6,352.7 L160.6,349.6 L158.8,346.3 L157.2,342.9 L155.7,339.4 L154.4,335.7 L153.2,331.8 L152.2,327.8 L151.4,323.6 L150.7,319.2 L150.3,314.6 L150.1,309.8 L150.1,304.7 L150.4,299.3 L151.2,293.6 L152.9,286.7 L152.9,286.7 L159.8,285.0 L165.5,284.2 L170.9,283.9 L176.0,283.9 L180.8,284.1 L185.4,284.5 L189.8,285.2 L194.0,286.0 L198.0,287.0 L201.9,288.2 L205.6,289.5 L209.1,291.0 L212.5,292.6 L215.8,294.4 L218.9,296.4 L221.8,298.5 L224.6,300.7 L227.3,303.1 L229.8,305.6 L232.3,308.2 L234.7,310.8 L237.1,313.4 L239.5,316.1 L241.8,318.8 L244.0,321.6 L246.3,324.4 L248.5,327.3 L250.6,330.2 L252.7,333.1 L254.8,336.1 L256.8,339.1 L258.7,342.2 L260.6,345.3 L262.4,348.5 L264.2,351.8 L265.9,355.1 L267.6,358.5 L269.2,362.0 L270.7,365.5 L272.1,369.1 L273.4,372.9 L274.6,376.7 L275.6,380.7 L276.5,384.9 L277.1,389.3 L277.4,394.1 L277.0,399.4 L273.9,407.7Z" fill="none" stroke="#257c5b" stroke-width="8" stroke-linejoin="round"/>
<path d="M273.9,407.7 L265.6,410.8 L260.3,411.2 L255.5,410.9 L251.1,410.3 L246.9,409.4 L242.9,408.4 L239.1,407.2 L235.3,405.9 L231.7,404.5 L228.2,403.0 L224.7,401.4 L221.3,399.7 L218.0,398.0 L214.7,396.2 L211.5,394.4 L208.4,392.5 L205.3,390.6 L202.3,388.6 L199.3,386.5 L196.4,384.4 L193.5,382.3 L190.6,380.1 L187.8,377.8 L185.0,375.6 L182.3,373.3 L179.6,370.9 L177.0,368.5 L174.4,366.1 L171.8,363.6 L169.3,361.1 L166.9,358.4 L164.7,355.6 L162.6,352.7 L160.6,349.6 L158.8,346.3 L157.2,342.9 L155.7,339.4 L154.4,335.7 L153.2,331.8 L152.2,327.8 L151.4,323.6 L150.7,319.2 L150.3,314.6 L150.1,309.8 L150.1,304.7 L150.4,299.3 L151.2,293.6 L152.9,286.7 L152.9,286.7 L159.8,285.0 L165.5,284.2 L170.9,283.9 L176.0,283.9 L180.8,284.1 L185.4,284.5 L189.8,285.2 L194.0,286.0 L198.0,287.0 L201.9,288.2 L205.6,289.5 L209.1,291.0 L212.5,292.6 L215.8,294.4 L218.9,296.4 L221.8,298.5 L224.6,300.7 L227.3,303.1 L229.8,305.6 L232.3,308.2 L234.7,310.8 L237.1,313.4 L239.5,316.1 L241.8,318.8 L244.0,321.6 L246.3,324.4 L248.5,327.3 L250.6,330.2 L252.7,333.1 L254.8,336.1 L256.8,339.1 L258.7,342.2 L260.6,345.3 L262.4,348.5 L264.2,351.8 L265.9,355.1 L267.6,358.5 L269.2,362.0 L270.7,365.5 L272.1,369.1 L273.4,372.9 L274.6,376.7 L275.6,380.7 L276.5,384.9 L277.1,389.3 L277.4,394.1 L277.0,399.4 L273.9,407.7Z" fill="none" stroke="#42a07c" stroke-width="2" stroke-linejoin="round" opacity="0.55"/>
<g filter="url(#blur)" opacity="0.45"><path d="M288.0,421.8 L281.1,419.6 L276.2,417.3 L272.0,415.1 L268.2,412.8 L264.8,410.6 L261.6,408.3 L258.7,406.1 L256.0,403.8 L253.6,401.6 L251.3,399.3 L249.2,397.1 L247.3,394.8 L245.5,392.6 L243.9,390.3 L242.5,388.1 L241.2,385.8 L240.0,383.6 L239.0,381.3 L238.2,379.1 L237.5,376.8 L236.9,374.6 L236.5,372.3 L236.2,370.1 L236.0,367.8 L236.0,365.6 L236.1,363.3 L236.3,361.1 L236.6,358.8 L237.0,356.6 L237.5,354.3 L238.2,352.1 L238.9,349.8 L239.8,347.6 L240.8,345.3 L241.9,343.1 L243.2,340.8 L244.6,338.6 L246.2,336.3 L248.0,334.1 L249.9,331.8 L252.1,329.6 L254.6,327.3 L257.4,325.1 L260.6,322.8 L264.3,320.6 L268.8,318.3 L274.7,316.1 L288.0,313.8 L288.0,313.8 L301.3,316.1 L307.2,318.3 L311.7,320.6 L315.4,322.8 L318.6,325.1 L321.4,327.3 L323.9,329.6 L326.1,331.8 L328.0,334.1 L329.8,336.3 L331.4,338.6 L332.8,340.8 L334.1,343.1 L335.2,345.3 L336.2,347.6 L337.1,349.8 L337.8,352.1 L338.5,354.3 L339.0,356.6 L339.4,358.8 L339.7,361.1 L339.9,363.3 L340.0,365.6 L340.0,367.8 L339.8,370.1 L339.5,372.3 L339.1,374.6 L338.5,376.8 L337.8,379.1 L337.0,381.3 L336.0,383.6 L334.8,385.8 L333.5,388.1 L332.1,390.3 L330.5,392.6 L328.7,394.8 L326.8,397.1 L324.7,399.3 L322.4,401.6 L320.0,403.8 L317.3,406.1 L314.4,408.3 L311.2,410.6 L307.8,412.8 L304.0,415.1 L299.8,417.3 L294.9,419.6 L288.0,421.8Z" fill="#000" stroke="#000" stroke-width="12"/><path d="M288.0,421.8 L293.4,417.0 L297.8,413.9 L301.8,411.3 L305.7,409.2 L309.3,407.3 L312.9,405.7 L316.3,404.3 L319.6,403.1 L322.8,402.1 L325.8,401.2 L328.8,400.6 L331.8,400.0 L334.6,399.6 L337.3,399.4 L340.0,399.2 L342.6,399.2 L345.1,399.4 L347.6,399.6 L349.9,400.0 L352.2,400.5 L354.5,401.2 L356.6,401.9 L358.7,402.8 L360.8,403.8 L362.7,404.9 L364.6,406.1 L366.5,407.4 L368.3,408.8 L370.0,410.3 L371.7,411.8 L373.3,413.5 L374.9,415.3 L376.4,417.2 L377.9,419.2 L379.2,421.3 L380.6,423.5 L381.8,425.8 L382.9,428.3 L384.0,431.0 L385.0,433.8 L385.8,436.9 L386.5,440.1 L387.1,443.6 L387.5,447.5 L387.6,451.9 L387.2,456.9 L386.2,463.2 L381.5,475.8 L381.5,475.8 L372.9,486.2 L368.0,490.2 L363.8,493.0 L360.0,495.1 L356.5,496.7 L353.1,498.0 L350.0,499.0 L346.9,499.8 L344.0,500.4 L341.1,500.8 L338.4,501.0 L335.7,501.1 L333.2,501.1 L330.6,500.9 L328.2,500.7 L325.8,500.3 L323.5,499.8 L321.2,499.3 L319.0,498.6 L316.9,497.8 L314.8,497.0 L312.7,496.0 L310.7,495.0 L308.8,493.8 L306.9,492.6 L305.1,491.2 L303.4,489.7 L301.7,488.1 L300.1,486.3 L298.6,484.5 L297.1,482.5 L295.8,480.4 L294.5,478.1 L293.2,475.7 L292.1,473.2 L291.0,470.6 L290.0,467.8 L289.1,464.9 L288.3,461.7 L287.6,458.5 L287.0,455.0 L286.5,451.4 L286.1,447.5 L285.9,443.4 L285.9,439.0 L286.0,434.2 L286.5,428.9 L288.0,421.8Z" fill="#000" stroke="#000" stroke-width="12"/><path d="M288.0,421.8 L289.5,428.9 L290.0,434.2 L290.1,439.0 L290.1,443.4 L289.9,447.5 L289.5,451.4 L289.0,455.0 L288.4,458.5 L287.7,461.7 L286.9,464.9 L286.0,467.8 L285.0,470.6 L283.9,473.2 L282.8,475.7 L281.5,478.1 L280.2,480.4 L278.9,482.5 L277.4,484.5 L275.9,486.3 L274.3,488.1 L272.6,489.7 L270.9,491.2 L269.1,492.6 L267.2,493.8 L265.3,495.0 L263.3,496.0 L261.2,497.0 L259.1,497.8 L257.0,498.6 L254.8,499.3 L252.5,499.8 L250.2,500.3 L247.8,500.7 L245.4,500.9 L242.8,501.1 L240.3,501.1 L237.6,501.0 L234.9,500.8 L232.0,500.4 L229.1,499.8 L226.0,499.0 L222.9,498.0 L219.5,496.7 L216.0,495.1 L212.2,493.0 L208.0,490.2 L203.1,486.2 L194.5,475.8 L194.5,475.8 L189.8,463.2 L188.8,456.9 L188.4,451.9 L188.5,447.5 L188.9,443.6 L189.5,440.1 L190.2,436.9 L191.0,433.8 L192.0,431.0 L193.1,428.3 L194.2,425.8 L195.4,423.5 L196.8,421.3 L198.1,419.2 L199.6,417.2 L201.1,415.3 L202.7,413.5 L204.3,411.8 L206.0,410.3 L207.7,408.8 L209.5,407.4 L211.4,406.1 L213.3,404.9 L215.2,403.8 L217.3,402.8 L219.4,401.9 L221.5,401.2 L223.8,400.5 L226.1,400.0 L228.4,399.6 L230.9,399.4 L233.4,399.2 L236.0,399.2 L238.7,399.4 L241.4,399.6 L244.2,400.0 L247.2,400.6 L250.2,401.2 L253.2,402.1 L256.4,403.1 L259.7,404.3 L263.1,405.7 L266.7,407.3 L270.3,409.2 L274.2,411.3 L278.2,413.9 L282.6,417.0 L288.0,421.8Z" fill="#000" stroke="#000" stroke-width="12"/></g>
<path d="M288.0,421.8 L281.1,419.6 L276.2,417.3 L272.0,415.1 L268.2,412.8 L264.8,410.6 L261.6,408.3 L258.7,406.1 L256.0,403.8 L253.6,401.6 L251.3,399.3 L249.2,397.1 L247.3,394.8 L245.5,392.6 L243.9,390.3 L242.5,388.1 L241.2,385.8 L240.0,383.6 L239.0,381.3 L238.2,379.1 L237.5,376.8 L236.9,374.6 L236.5,372.3 L236.2,370.1 L236.0,367.8 L236.0,365.6 L236.1,363.3 L236.3,361.1 L236.6,358.8 L237.0,356.6 L237.5,354.3 L238.2,352.1 L238.9,349.8 L239.8,347.6 L240.8,345.3 L241.9,343.1 L243.2,340.8 L244.6,338.6 L246.2,336.3 L248.0,334.1 L249.9,331.8 L252.1,329.6 L254.6,327.3 L257.4,325.1 L260.6,322.8 L264.3,320.6 L268.8,318.3 L274.7,316.1 L288.0,313.8 L288.0,313.8 L301.3,316.1 L307.2,318.3 L311.7,320.6 L315.4,322.8 L318.6,325.1 L321.4,327.3 L323.9,329.6 L326.1,331.8 L328.0,334.1 L329.8,336.3 L331.4,338.6 L332.8,340.8 L334.1,343.1 L335.2,345.3 L336.2,347.6 L337.1,349.8 L337.8,352.1 L338.5,354.3 L339.0,356.6 L339.4,358.8 L339.7,361.1 L339.9,363.3 L340.0,365.6 L340.0,367.8 L339.8,370.1 L339.5,372.3 L339.1,374.6 L338.5,376.8 L337.8,379.1 L337.0,381.3 L336.0,383.6 L334.8,385.8 L333.5,388.1 L332.1,390.3 L330.5,392.6 L328.7,394.8 L326.8,397.1 L324.7,399.3 L322.4,401.6 L320.0,403.8 L317.3,406.1 L314.4,408.3 L311.2,410.6 L307.8,412.8 L304.0,415.1 L299.8,417.3 L294.9,419.6 L288.0,421.8Z" fill="none" stroke="#0f3f2c" stroke-width="10.5" stroke-linejoin="round"/>
<path d="M288.0,421.8 L281.1,419.6 L276.2,417.3 L272.0,415.1 L268.2,412.8 L264.8,410.6 L261.6,408.3 L258.7,406.1 L256.0,403.8 L253.6,401.6 L251.3,399.3 L249.2,397.1 L247.3,394.8 L245.5,392.6 L243.9,390.3 L242.5,388.1 L241.2,385.8 L240.0,383.6 L239.0,381.3 L238.2,379.1 L237.5,376.8 L236.9,374.6 L236.5,372.3 L236.2,370.1 L236.0,367.8 L236.0,365.6 L236.1,363.3 L236.3,361.1 L236.6,358.8 L237.0,356.6 L237.5,354.3 L238.2,352.1 L238.9,349.8 L239.8,347.6 L240.8,345.3 L241.9,343.1 L243.2,340.8 L244.6,338.6 L246.2,336.3 L248.0,334.1 L249.9,331.8 L252.1,329.6 L254.6,327.3 L257.4,325.1 L260.6,322.8 L264.3,320.6 L268.8,318.3 L274.7,316.1 L288.0,313.8 L288.0,313.8 L301.3,316.1 L307.2,318.3 L311.7,320.6 L315.4,322.8 L318.6,325.1 L321.4,327.3 L323.9,329.6 L326.1,331.8 L328.0,334.1 L329.8,336.3 L331.4,338.6 L332.8,340.8 L334.1,343.1 L335.2,345.3 L336.2,347.6 L337.1,349.8 L337.8,352.1 L338.5,354.3 L339.0,356.6 L339.4,358.8 L339.7,361.1 L339.9,363.3 L340.0,365.6 L340.0,367.8 L339.8,370.1 L339.5,372.3 L339.1,374.6 L338.5,376.8 L337.8,379.1 L337.0,381.3 L336.0,383.6 L334.8,385.8 L333.5,388.1 L332.1,390.3 L330.5,392.6 L328.7,394.8 L326.8,397.1 L324.7,399.3 L322.4,401.6 L320.0,403.8 L317.3,406.1 L314.4,408.3 L311.2,410.6 L307.8,412.8 L304.0,415.1 L299.8,417.3 L294.9,419.6 L288.0,421.8Z" fill="#1b6047"/>
<path d="M288.0,421.8 L272.5,415.1 L262.4,408.3 L254.6,401.6 L248.5,394.8 L243.8,388.1 L240.5,381.3 L238.5,374.6 L237.6,367.8 L237.9,361.1 L239.1,354.3 L241.2,347.6 L244.5,340.8 L249.2,334.1 L255.6,327.3 L265.0,320.6 L288.0,313.8 L288.0,313.8 M288.0,421.8 L273.5,415.1 L264.0,408.3 L256.7,401.6 L251.0,394.8 L246.6,388.1 L243.5,381.3 L241.5,374.6 L240.8,367.8 L241.0,361.1 L242.1,354.3 L244.2,347.6 L247.3,340.8 L251.6,334.1 L257.6,327.3 L266.4,320.6 L288.0,313.8 L288.0,313.8 M288.0,421.8 L274.4,415.1 L265.6,408.3 L258.8,401.6 L253.4,394.8 L249.4,388.1 L246.5,381.3 L244.6,374.6 L243.9,367.8 L244.1,361.1 L245.2,354.3 L247.1,347.6 L250.0,340.8 L254.0,334.1 L259.7,327.3 L267.9,320.6 L288.0,313.8 L288.0,313.8 M288.0,421.8 L275.4,415.1 L267.2,408.3 L260.9,401.6 L255.9,394.8 L252.1,388.1 L249.4,381.3 L247.7,374.6 L247.1,367.8 L247.3,361.1 L248.2,354.3 L250.0,347.6 L252.7,340.8 L256.5,334.1 L261.7,327.3 L269.3,320.6 L288.0,313.8 L288.0,313.8 M288.0,421.8 L276.4,415.1 L268.8,408.3 L263.0,401.6 L258.4,394.8 L254.9,388.1 L252.4,381.3 L250.8,374.6 L250.2,367.8 L250.4,361.1 L251.3,354.3 L252.9,347.6 L255.4,340.8 L258.9,334.1 L263.7,327.3 L270.7,320.6 L288.0,313.8 L288.0,313.8 M288.0,421.8 L277.3,415.1 L270.4,408.3 L265.0,401.6 L260.8,394.8 L257.6,388.1 L255.4,381.3 L253.9,374.6 L253.4,367.8 L253.5,361.1 L254.4,354.3 L255.9,347.6 L258.1,340.8 L261.3,334.1 L265.7,327.3 L272.2,320.6 L288.0,313.8 L288.0,313.8 M288.0,421.8 L278.3,415.1 L272.0,408.3 L267.1,401.6 L263.3,394.8 L260.4,388.1 L258.3,381.3 L257.0,374.6 L256.5,367.8 L256.7,361.1 L257.4,354.3 L258.8,347.6 L260.8,340.8 L263.7,334.1 L267.8,327.3 L273.6,320.6 L288.0,313.8 L288.0,313.8 M288.0,421.8 L279.3,415.1 L273.6,408.3 L269.2,401.6 L265.8,394.8 L263.2,388.1 L261.3,381.3 L260.1,374.6 L259.7,367.8 L259.8,361.1 L260.5,354.3 L261.7,347.6 L263.6,340.8 L266.2,334.1 L269.8,327.3 L275.1,320.6 L288.0,313.8 L288.0,313.8 M288.0,421.8 L280.3,415.1 L275.2,408.3 L271.3,401.6 L268.2,394.8 L265.9,388.1 L264.3,381.3 L263.2,374.6 L262.8,367.8 L262.9,361.1 L263.5,354.3 L264.6,347.6 L266.3,340.8 L268.6,334.1 L271.8,327.3 L276.5,320.6 L288.0,313.8 L288.0,313.8 M288.0,421.8 L281.2,415.1 L276.8,408.3 L273.4,401.6 L270.7,394.8 L268.7,388.1 L267.2,381.3 L266.3,374.6 L266.0,367.8 L266.1,361.1 L266.6,354.3 L267.5,347.6 L269.0,340.8 L271.0,334.1 L273.8,327.3 L277.9,320.6 L288.0,313.8 L288.0,313.8 M288.0,421.8 L282.2,415.1 L278.4,408.3 L275.5,401.6 L273.2,394.8 L271.4,388.1 L270.2,381.3 L269.4,374.6 L269.1,367.8 L269.2,361.1 L269.6,354.3 L270.5,347.6 L271.7,340.8 L273.4,334.1 L275.9,327.3 L279.4,320.6 L288.0,313.8 L288.0,313.8 M288.0,421.8 L283.2,415.1 L280.0,408.3 L277.6,401.6 L275.7,394.8 L274.2,388.1 L273.2,381.3 L272.5,374.6 L272.3,367.8 L272.3,361.1 L272.7,354.3 L273.4,347.6 L274.4,340.8 L275.9,334.1 L277.9,327.3 L280.8,320.6 L288.0,313.8 L288.0,313.8 M288.0,421.8 L284.1,415.1 L281.6,408.3 L279.7,401.6 L278.1,394.8 L277.0,388.1 L276.1,381.3 L275.6,374.6 L275.4,367.8 L275.5,361.1 L275.8,354.3 L276.3,347.6 L277.1,340.8 L278.3,334.1 L279.9,327.3 L282.2,320.6 L288.0,313.8 L288.0,313.8 M288.0,421.8 L285.1,415.1 L283.2,408.3 L281.7,401.6 L280.6,394.8 L279.7,388.1 L279.1,381.3 L278.7,374.6 L278.6,367.8 L278.6,361.1 L278.8,354.3 L279.2,347.6 L279.9,340.8 L280.7,334.1 L281.9,327.3 L283.7,320.6 L288.0,313.8 L288.0,313.8 M288.0,421.8 L286.1,415.1 L284.8,408.3 L283.8,401.6 L283.1,394.8 L282.5,388.1 L282.1,381.3 L281.8,374.6 L281.7,367.8 L281.7,361.1 L281.9,354.3 L282.2,347.6 L282.6,340.8 L283.1,334.1 L284.0,327.3 L285.1,320.6 L288.0,313.8 L288.0,313.8 M288.0,421.8 L287.0,415.1 L286.4,408.3 L285.9,401.6 L285.5,394.8 L285.2,388.1 L285.0,381.3 L284.9,374.6 L284.9,367.8 L284.9,361.1 L284.9,354.3 L285.1,347.6 L285.3,340.8 L285.6,334.1 L286.0,327.3 L286.6,320.6 L288.0,313.8 L288.0,313.8 M288.0,421.8 L288.0,415.1 L288.0,408.3 L288.0,401.6 L288.0,394.8 L288.0,388.1 L288.0,381.3 L288.0,374.6 L288.0,367.8 L288.0,361.1 L288.0,354.3 L288.0,347.6 L288.0,340.8 L288.0,334.1 L288.0,327.3 L288.0,320.6 L288.0,313.8 L288.0,313.8 M288.0,421.8 L289.0,415.1 L289.6,408.3 L290.1,401.6 L290.5,394.8 L290.8,388.1 L291.0,381.3 L291.1,374.6 L291.1,367.8 L291.1,361.1 L291.1,354.3 L290.9,347.6 L290.7,340.8 L290.4,334.1 L290.0,327.3 L289.4,320.6 L288.0,313.8 L288.0,313.8 M288.0,421.8 L289.9,415.1 L291.2,408.3 L292.2,401.6 L292.9,394.8 L293.5,388.1 L293.9,381.3 L294.2,374.6 L294.3,367.8 L294.3,361.1 L294.1,354.3 L293.8,347.6 L293.4,340.8 L292.9,334.1 L292.0,327.3 L290.9,320.6 L288.0,313.8 L288.0,313.8 M288.0,421.8 L290.9,415.1 L292.8,408.3 L294.3,401.6 L295.4,394.8 L296.3,388.1 L296.9,381.3 L297.3,374.6 L297.4,367.8 L297.4,361.1 L297.2,354.3 L296.8,347.6 L296.1,340.8 L295.3,334.1 L294.1,327.3 L292.3,320.6 L288.0,313.8 L288.0,313.8 M288.0,421.8 L291.9,415.1 L294.4,408.3 L296.3,401.6 L297.9,394.8 L299.0,388.1 L299.9,381.3 L300.4,374.6 L300.6,367.8 L300.5,361.1 L300.2,354.3 L299.7,347.6 L298.9,340.8 L297.7,334.1 L296.1,327.3 L293.8,320.6 L288.0,313.8 L288.0,313.8 M288.0,421.8 L292.8,415.1 L296.0,408.3 L298.4,401.6 L300.3,394.8 L301.8,388.1 L302.8,381.3 L303.5,374.6 L303.7,367.8 L303.7,361.1 L303.3,354.3 L302.6,347.6 L301.6,340.8 L300.1,334.1 L298.1,327.3 L295.2,320.6 L288.0,313.8 L288.0,313.8 M288.0,421.8 L293.8,415.1 L297.6,408.3 L300.5,401.6 L302.8,394.8 L304.6,388.1 L305.8,381.3 L306.6,374.6 L306.9,367.8 L306.8,361.1 L306.4,354.3 L305.5,347.6 L304.3,340.8 L302.6,334.1 L300.1,327.3 L296.6,320.6 L288.0,313.8 L288.0,313.8 M288.0,421.8 L294.8,415.1 L299.2,408.3 L302.6,401.6 L305.3,394.8 L307.3,388.1 L308.8,381.3 L309.7,374.6 L310.0,367.8 L309.9,361.1 L309.4,354.3 L308.5,347.6 L307.0,340.8 L305.0,334.1 L302.2,327.3 L298.1,320.6 L288.0,313.8 L288.0,313.8 M288.0,421.8 L295.7,415.1 L300.8,408.3 L304.7,401.6 L307.8,394.8 L310.1,388.1 L311.7,381.3 L312.8,374.6 L313.2,367.8 L313.1,361.1 L312.5,354.3 L311.4,347.6 L309.7,340.8 L307.4,334.1 L304.2,327.3 L299.5,320.6 L288.0,313.8 L288.0,313.8 M288.0,421.8 L296.7,415.1 L302.4,408.3 L306.8,401.6 L310.2,394.8 L312.8,388.1 L314.7,381.3 L315.9,374.6 L316.3,367.8 L316.2,361.1 L315.5,354.3 L314.3,347.6 L312.4,340.8 L309.8,334.1 L306.2,327.3 L300.9,320.6 L288.0,313.8 L288.0,313.8 M288.0,421.8 L297.7,415.1 L304.0,408.3 L308.9,401.6 L312.7,394.8 L315.6,388.1 L317.7,381.3 L319.0,374.6 L319.5,367.8 L319.3,361.1 L318.6,354.3 L317.2,347.6 L315.2,340.8 L312.3,334.1 L308.2,327.3 L302.4,320.6 L288.0,313.8 L288.0,313.8 M288.0,421.8 L298.7,415.1 L305.6,408.3 L311.0,401.6 L315.2,394.8 L318.4,388.1 L320.6,381.3 L322.1,374.6 L322.6,367.8 L322.5,361.1 L321.6,354.3 L320.1,347.6 L317.9,340.8 L314.7,334.1 L310.3,327.3 L303.8,320.6 L288.0,313.8 L288.0,313.8 M288.0,421.8 L299.6,415.1 L307.2,408.3 L313.0,401.6 L317.6,394.8 L321.1,388.1 L323.6,381.3 L325.2,374.6 L325.8,367.8 L325.6,361.1 L324.7,354.3 L323.1,347.6 L320.6,340.8 L317.1,334.1 L312.3,327.3 L305.3,320.6 L288.0,313.8 L288.0,313.8 M288.0,421.8 L300.6,415.1 L308.8,408.3 L315.1,401.6 L320.1,394.8 L323.9,388.1 L326.6,381.3 L328.3,374.6 L328.9,367.8 L328.7,361.1 L327.8,354.3 L326.0,347.6 L323.3,340.8 L319.5,334.1 L314.3,327.3 L306.7,320.6 L288.0,313.8 L288.0,313.8 M288.0,421.8 L301.6,415.1 L310.4,408.3 L317.2,401.6 L322.6,394.8 L326.6,388.1 L329.5,381.3 L331.4,374.6 L332.1,367.8 L331.9,361.1 L330.8,354.3 L328.9,347.6 L326.0,340.8 L322.0,334.1 L316.3,327.3 L308.1,320.6 L288.0,313.8 L288.0,313.8 M288.0,421.8 L302.5,415.1 L312.0,408.3 L319.3,401.6 L325.0,394.8 L329.4,388.1 L332.5,381.3 L334.5,374.6 L335.2,367.8 L335.0,361.1 L333.9,354.3 L331.8,347.6 L328.7,340.8 L324.4,334.1 L318.4,327.3 L309.6,320.6 L288.0,313.8 L288.0,313.8 M288.0,421.8 L303.5,415.1 L313.6,408.3 L321.4,401.6 L327.5,394.8 L332.2,388.1 L335.5,381.3 L337.5,374.6 L338.4,367.8 L338.1,361.1 L336.9,354.3 L334.8,347.6 L331.5,340.8 L326.8,334.1 L320.4,327.3 L311.0,320.6 L288.0,313.8 L288.0,313.8" clip-path="url(#c20)" fill="none" stroke="#45a080" stroke-width="0.7" stroke-opacity="0.8"/>
<path d="M288.0,421.8 L281.1,419.6 L276.2,417.3 L272.0,415.1 L268.2,412.8 L264.8,410.6 L261.6,408.3 L258.7,406.1 L256.0,403.8 L253.6,401.6 L251.3,399.3 L249.2,397.1 L247.3,394.8 L245.5,392.6 L243.9,390.3 L242.5,388.1 L241.2,385.8 L240.0,383.6 L239.0,381.3 L238.2,379.1 L237.5,376.8 L236.9,374.6 L236.5,372.3 L236.2,370.1 L236.0,367.8 L236.0,365.6 L236.1,363.3 L236.3,361.1 L236.6,358.8 L237.0,356.6 L237.5,354.3 L238.2,352.1 L238.9,349.8 L239.8,347.6 L240.8,345.3 L241.9,343.1 L243.2,340.8 L244.6,338.6 L246.2,336.3 L248.0,334.1 L249.9,331.8 L252.1,329.6 L254.6,327.3 L257.4,325.1 L260.6,322.8 L264.3,320.6 L268.8,318.3 L274.7,316.1 L288.0,313.8 L288.0,313.8 L301.3,316.1 L307.2,318.3 L311.7,320.6 L315.4,322.8 L318.6,325.1 L321.4,327.3 L323.9,329.6 L326.1,331.8 L328.0,334.1 L329.8,336.3 L331.4,338.6 L332.8,340.8 L334.1,343.1 L335.2,345.3 L336.2,347.6 L337.1,349.8 L337.8,352.1 L338.5,354.3 L339.0,356.6 L339.4,358.8 L339.7,361.1 L339.9,363.3 L340.0,365.6 L340.0,367.8 L339.8,370.1 L339.5,372.3 L339.1,374.6 L338.5,376.8 L337.8,379.1 L337.0,381.3 L336.0,383.6 L334.8,385.8 L333.5,388.1 L332.1,390.3 L330.5,392.6 L328.7,394.8 L326.8,397.1 L324.7,399.3 L322.4,401.6 L320.0,403.8 L317.3,406.1 L314.4,408.3 L311.2,410.6 L307.8,412.8 L304.0,415.1 L299.8,417.3 L294.9,419.6 L288.0,421.8Z" clip-path="url(#c20)" fill="none" stroke="#0c3a28" stroke-width="15" stroke-opacity="0.35" stroke-linejoin="round"/>
<path d="M288.0,421.8 L281.1,419.6 L276.2,417.3 L272.0,415.1 L268.2,412.8 L264.8,410.6 L261.6,408.3 L258.7,406.1 L256.0,403.8 L253.6,401.6 L251.3,399.3 L249.2,397.1 L247.3,394.8 L245.5,392.6 L243.9,390.3 L242.5,388.1 L241.2,385.8 L240.0,383.6 L239.0,381.3 L238.2,379.1 L237.5,376.8 L236.9,374.6 L236.5,372.3 L236.2,370.1 L236.0,367.8 L236.0,365.6 L236.1,363.3 L236.3,361.1 L236.6,358.8 L237.0,356.6 L237.5,354.3 L238.2,352.1 L238.9,349.8 L239.8,347.6 L240.8,345.3 L241.9,343.1 L243.2,340.8 L244.6,338.6 L246.2,336.3 L248.0,334.1 L249.9,331.8 L252.1,329.6 L254.6,327.3 L257.4,325.1 L260.6,322.8 L264.3,320.6 L268.8,318.3 L274.7,316.1 L288.0,313.8 L288.0,313.8 L301.3,316.1 L307.2,318.3 L311.7,320.6 L315.4,322.8 L318.6,325.1 L321.4,327.3 L323.9,329.6 L326.1,331.8 L328.0,334.1 L329.8,336.3 L331.4,338.6 L332.8,340.8 L334.1,343.1 L335.2,345.3 L336.2,347.6 L337.1,349.8 L337.8,352.1 L338.5,354.3 L339.0,356.6 L339.4,358.8 L339.7,361.1 L339.9,363.3 L340.0,365.6 L340.0,367.8 L339.8,370.1 L339.5,372.3 L339.1,374.6 L338.5,376.8 L337.8,379.1 L337.0,381.3 L336.0,383.6 L334.8,385.8 L333.5,388.1 L332.1,390.3 L330.5,392.6 L328.7,394.8 L326.8,397.1 L324.7,399.3 L322.4,401.6 L320.0,403.8 L317.3,406.1 L314.4,408.3 L311.2,410.6 L307.8,412.8 L304.0,415.1 L299.8,417.3 L294.9,419.6 L288.0,421.8Z" fill="none" stroke="#237856" stroke-width="8" stroke-linejoin="round"/>
<path d="M288.0,421.8 L281.1,419.6 L276.2,417.3 L272.0,415.1 L268.2,412.8 L264.8,410.6 L261.6,408.3 L258.7,406.1 L256.0,403.8 L253.6,401.6 L251.3,399.3 L249.2,397.1 L247.3,394.8 L245.5,392.6 L243.9,390.3 L242.5,388.1 L241.2,385.8 L240.0,383.6 L239.0,381.3 L238.2,379.1 L237.5,376.8 L236.9,374.6 L236.5,372.3 L236.2,370.1 L236.0,367.8 L236.0,365.6 L236.1,363.3 L236.3,361.1 L236.6,358.8 L237.0,356.6 L237.5,354.3 L238.2,352.1 L238.9,349.8 L239.8,347.6 L240.8,345.3 L241.9,343.1 L243.2,340.8 L244.6,338.6 L246.2,336.3 L248.0,334.1 L249.9,331.8 L252.1,329.6 L254.6,327.3 L257.4,325.1 L260.6,322.8 L264.3,320.6 L268.8,318.3 L274.7,316.1 L288.0,313.8 L288.0,313.8 L301.3,316.1 L307.2,318.3 L311.7,320.6 L315.4,322.8 L318.6,325.1 L321.4,327.3 L323.9,329.6 L326.1,331.8 L328.0,334.1 L329.8,336.3 L331.4,338.6 L332.8,340.8 L334.1,343.1 L335.2,345.3 L336.2,347.6 L337.1,349.8 L337.8,352.1 L338.5,354.3 L339.0,356.6 L339.4,358.8 L339.7,361.1 L339.9,363.3 L340.0,365.6 L340.0,367.8 L339.8,370.1 L339.5,372.3 L339.1,374.6 L338.5,376.8 L337.8,379.1 L337.0,381.3 L336.0,383.6 L334.8,385.8 L333.5,388.1 L332.1,390.3 L330.5,392.6 L328.7,394.8 L326.8,397.1 L324.7,399.3 L322.4,401.6 L320.0,403.8 L317.3,406.1 L314.4,408.3 L311.2,410.6 L307.8,412.8 L304.0,415.1 L299.8,417.3 L294.9,419.6 L288.0,421.8Z" fill="none" stroke="#3e9a76" stroke-width="2" stroke-linejoin="round" opacity="0.55"/>
<path d="M288.0,421.8 L293.4,417.0 L297.8,413.9 L301.8,411.3 L305.7,409.2 L309.3,407.3 L312.9,405.7 L316.3,404.3 L319.6,403.1 L322.8,402.1 L325.8,401.2 L328.8,400.6 L331.8,400.0 L334.6,399.6 L337.3,399.4 L340.0,399.2 L342.6,399.2 L345.1,399.4 L347.6,399.6 L349.9,400.0 L352.2,400.5 L354.5,401.2 L356.6,401.9 L358.7,402.8 L360.8,403.8 L362.7,404.9 L364.6,406.1 L366.5,407.4 L368.3,408.8 L370.0,410.3 L371.7,411.8 L373.3,413.5 L374.9,415.3 L376.4,417.2 L377.9,419.2 L379.2,421.3 L380.6,423.5 L381.8,425.8 L382.9,428.3 L384.0,431.0 L385.0,433.8 L385.8,436.9 L386.5,440.1 L387.1,443.6 L387.5,447.5 L387.6,451.9 L387.2,456.9 L386.2,463.2 L381.5,475.8 L381.5,475.8 L372.9,486.2 L368.0,490.2 L363.8,493.0 L360.0,495.1 L356.5,496.7 L353.1,498.0 L350.0,499.0 L346.9,499.8 L344.0,500.4 L341.1,500.8 L338.4,501.0 L335.7,501.1 L333.2,501.1 L330.6,500.9 L328.2,500.7 L325.8,500.3 L323.5,499.8 L321.2,499.3 L319.0,498.6 L316.9,497.8 L314.8,497.0 L312.7,496.0 L310.7,495.0 L308.8,493.8 L306.9,492.6 L305.1,491.2 L303.4,489.7 L301.7,488.1 L300.1,486.3 L298.6,484.5 L297.1,482.5 L295.8,480.4 L294.5,478.1 L293.2,475.7 L292.1,473.2 L291.0,470.6 L290.0,467.8 L289.1,464.9 L288.3,461.7 L287.6,458.5 L287.0,455.0 L286.5,451.4 L286.1,447.5 L285.9,443.4 L285.9,439.0 L286.0,434.2 L286.5,428.9 L288.0,421.8Z" fill="none" stroke="#0f3f2c" stroke-width="10.5" stroke-linejoin="round"/>
<path d="M288.0,421.8 L293.4,417.0 L297.8,413.9 L301.8,411.3 L305.7,409.2 L309.3,407.3 L312.9,405.7 L316.3,404.3 L319.6,403.1 L322.8,402.1 L325.8,401.2 L328.8,400.6 L331.8,400.0 L334.6,399.6 L337.3,399.4 L340.0,399.2 L342.6,399.2 L345.1,399.4 L347.6,399.6 L349.9,400.0 L352.2,400.5 L354.5,401.2 L356.6,401.9 L358.7,402.8 L360.8,403.8 L362.7,404.9 L364.6,406.1 L366.5,407.4 L368.3,408.8 L370.0,410.3 L371.7,411.8 L373.3,413.5 L374.9,415.3 L376.4,417.2 L377.9,419.2 L379.2,421.3 L380.6,423.5 L381.8,425.8 L382.9,428.3 L384.0,431.0 L385.0,433.8 L385.8,436.9 L386.5,440.1 L387.1,443.6 L387.5,447.5 L387.6,451.9 L387.2,456.9 L386.2,463.2 L381.5,475.8 L381.5,475.8 L372.9,486.2 L368.0,490.2 L363.8,493.0 L360.0,495.1 L356.5,496.7 L353.1,498.0 L350.0,499.0 L346.9,499.8 L344.0,500.4 L341.1,500.8 L338.4,501.0 L335.7,501.1 L333.2,501.1 L330.6,500.9 L328.2,500.7 L325.8,500.3 L323.5,499.8 L321.2,499.3 L319.0,498.6 L316.9,497.8 L314.8,497.0 L312.7,496.0 L310.7,495.0 L308.8,493.8 L306.9,492.6 L305.1,491.2 L303.4,489.7 L301.7,488.1 L300.1,486.3 L298.6,484.5 L297.1,482.5 L295.8,480.4 L294.5,478.1 L293.2,475.7 L292.1,473.2 L291.0,470.6 L290.0,467.8 L289.1,464.9 L288.3,461.7 L287.6,458.5 L287.0,455.0 L286.5,451.4 L286.1,447.5 L285.9,443.4 L285.9,439.0 L286.0,434.2 L286.5,428.9 L288.0,421.8Z" fill="#1b6047"/>
<path d="M288.0,421.8 L301.6,411.8 L312.5,406.4 L322.2,403.0 L331.1,401.1 L339.3,400.4 L346.8,400.9 L353.7,402.5 L360.0,405.2 L365.7,408.8 L370.9,413.2 L375.7,418.4 L379.9,424.7 L383.4,432.1 L386.0,441.0 L387.2,452.5 L381.5,475.8 L381.5,475.8 M288.0,421.8 L301.1,412.6 L311.7,407.8 L321.2,404.8 L329.9,403.2 L337.9,402.8 L345.3,403.5 L352.1,405.2 L358.4,407.9 L364.1,411.5 L369.4,415.8 L374.2,421.0 L378.5,427.0 L382.2,434.2 L385.0,442.7 L386.5,453.7 L381.5,475.8 L381.5,475.8 M288.0,421.8 L300.6,413.4 L310.9,409.2 L320.1,406.6 L328.7,405.4 L336.5,405.2 L343.8,406.1 L350.6,407.9 L356.8,410.6 L362.5,414.2 L367.9,418.5 L372.8,423.5 L377.2,429.4 L381.0,436.3 L384.0,444.5 L385.8,455.0 L381.5,475.8 L381.5,475.8 M288.0,421.8 L300.1,414.3 L310.1,410.6 L319.1,408.4 L327.4,407.5 L335.2,407.6 L342.4,408.6 L349.0,410.6 L355.2,413.3 L361.0,416.9 L366.3,421.1 L371.3,426.0 L375.8,431.7 L379.8,438.4 L383.0,446.3 L385.0,456.2 L381.5,475.8 L381.5,475.8 M288.0,421.8 L299.7,415.1 L309.3,411.9 L318.1,410.2 L326.2,409.6 L333.8,410.0 L340.9,411.2 L347.5,413.2 L353.7,416.1 L359.4,419.6 L364.8,423.8 L369.8,428.6 L374.4,434.1 L378.6,440.5 L382.0,448.0 L384.3,457.5 L381.5,475.8 L381.5,475.8 M288.0,421.8 L299.2,415.9 L308.5,413.3 L317.0,412.0 L325.0,411.8 L332.4,412.4 L339.4,413.8 L346.0,415.9 L352.1,418.8 L357.8,422.3 L363.3,426.4 L368.4,431.1 L373.1,436.4 L377.3,442.6 L381.0,449.8 L383.6,458.7 L381.5,475.8 L381.5,475.8 M288.0,421.8 L298.7,416.8 L307.7,414.7 L316.0,413.8 L323.7,413.9 L331.0,414.8 L337.9,416.3 L344.4,418.6 L350.5,421.5 L356.3,425.0 L361.8,429.1 L366.9,433.6 L371.7,438.8 L376.1,444.7 L380.0,451.5 L382.9,460.0 L381.5,475.8 L381.5,475.8 M288.0,421.8 L298.2,417.6 L306.9,416.1 L314.9,415.7 L322.5,416.1 L329.6,417.2 L336.4,418.9 L342.9,421.3 L348.9,424.2 L354.7,427.8 L360.2,431.7 L365.5,436.1 L370.4,441.1 L374.9,446.8 L379.0,453.3 L382.2,461.2 L381.5,475.8 L381.5,475.8 M288.0,421.8 L297.7,418.5 L306.1,417.5 L313.9,417.5 L321.3,418.2 L328.3,419.6 L334.9,421.5 L341.3,424.0 L347.4,427.0 L353.1,430.5 L358.7,434.4 L364.0,438.7 L369.0,443.5 L373.7,448.9 L377.9,455.0 L381.4,462.5 L381.5,475.8 L381.5,475.8 M288.0,421.8 L297.2,419.3 L305.3,418.9 L312.8,419.3 L320.0,420.3 L326.9,421.9 L333.5,424.1 L339.8,426.7 L345.8,429.7 L351.6,433.2 L357.2,437.0 L362.5,441.2 L367.7,445.8 L372.5,451.0 L376.9,456.8 L380.7,463.7 L381.5,475.8 L381.5,475.8 M288.0,421.8 L296.8,420.1 L304.5,420.2 L311.8,421.1 L318.8,422.5 L325.5,424.3 L332.0,426.6 L338.2,429.3 L344.2,432.4 L350.0,435.9 L355.6,439.7 L361.1,443.7 L366.3,448.2 L371.3,453.1 L375.9,458.5 L380.0,465.0 L381.5,475.8 L381.5,475.8 M288.0,421.8 L296.3,421.0 L303.7,421.6 L310.8,422.9 L317.6,424.6 L324.1,426.7 L330.5,429.2 L336.7,432.0 L342.6,435.2 L348.4,438.6 L354.1,442.3 L359.6,446.3 L364.9,450.5 L370.1,455.2 L374.9,460.3 L379.3,466.2 L381.5,475.8 L381.5,475.8 M288.0,421.8 L295.8,421.8 L302.9,423.0 L309.7,424.7 L316.3,426.7 L322.7,429.1 L329.0,431.8 L335.1,434.7 L341.1,437.9 L346.9,441.3 L352.6,445.0 L358.1,448.8 L363.6,452.9 L368.8,457.3 L373.9,462.0 L378.6,467.4 L381.5,475.8 L381.5,475.8 M288.0,421.8 L295.3,422.7 L302.1,424.4 L308.7,426.5 L315.1,428.9 L321.4,431.5 L327.5,434.3 L333.6,437.4 L339.5,440.6 L345.3,444.0 L351.0,447.6 L356.7,451.3 L362.2,455.2 L367.6,459.4 L372.9,463.8 L377.8,468.7 L381.5,475.8 L381.5,475.8 M288.0,421.8 L294.8,423.5 L301.3,425.8 L307.6,428.3 L313.9,431.0 L320.0,433.9 L326.0,436.9 L332.0,440.1 L337.9,443.3 L343.7,446.7 L349.5,450.3 L355.2,453.9 L360.9,457.6 L366.4,461.5 L371.9,465.5 L377.1,469.9 L381.5,475.8 L381.5,475.8 M288.0,421.8 L294.3,424.3 L300.5,427.2 L306.6,430.1 L312.6,433.2 L318.6,436.3 L324.6,439.5 L330.5,442.7 L336.3,446.1 L342.2,449.5 L348.0,452.9 L353.8,456.4 L359.5,459.9 L365.2,463.6 L370.9,467.3 L376.4,471.2 L381.5,475.8 L381.5,475.8 M288.0,421.8 L293.8,425.2 L299.7,428.6 L305.5,431.9 L311.4,435.3 L317.2,438.7 L323.1,442.1 L328.9,445.4 L334.8,448.8 L340.6,452.2 L346.5,455.6 L352.3,458.9 L358.1,462.3 L364.0,465.7 L369.8,469.1 L375.7,472.4 L381.5,475.8 L381.5,475.8 M288.0,421.8 L293.4,426.0 L298.9,429.9 L304.5,433.7 L310.1,437.4 L315.8,441.1 L321.6,444.6 L327.4,448.1 L333.2,451.5 L339.0,454.9 L344.9,458.2 L350.8,461.5 L356.8,464.7 L362.8,467.8 L368.8,470.8 L375.0,473.7 L381.5,475.8 L381.5,475.8 M288.0,421.8 L292.9,426.9 L298.1,431.3 L303.4,435.5 L308.9,439.6 L314.5,443.5 L320.1,447.2 L325.8,450.8 L331.6,454.3 L337.5,457.6 L343.4,460.8 L349.4,464.0 L355.4,467.0 L361.6,469.9 L367.8,472.6 L374.2,474.9 L381.5,475.8 L381.5,475.8 M288.0,421.8 L292.4,427.7 L297.3,432.7 L302.4,437.3 L307.7,441.7 L313.1,445.8 L318.6,449.8 L324.3,453.5 L330.0,457.0 L335.9,460.3 L341.9,463.5 L347.9,466.5 L354.1,469.4 L360.4,472.0 L366.8,474.3 L373.5,476.2 L381.5,475.8 L381.5,475.8 M288.0,421.8 L291.9,428.5 L296.5,434.1 L301.4,439.2 L306.4,443.9 L311.7,448.2 L317.1,452.3 L322.7,456.2 L328.5,459.7 L334.3,463.0 L340.3,466.1 L346.5,469.0 L352.7,471.7 L359.1,474.1 L365.8,476.1 L372.8,477.4 L381.5,475.8 L381.5,475.8 M288.0,421.8 L291.4,429.4 L295.7,435.5 L300.3,441.0 L305.2,446.0 L310.3,450.6 L315.7,454.9 L321.2,458.8 L326.9,462.4 L332.8,465.7 L338.8,468.8 L345.0,471.6 L351.4,474.1 L357.9,476.2 L364.8,477.8 L372.1,478.7 L381.5,475.8 L381.5,475.8 M288.0,421.8 L290.9,430.2 L294.9,436.9 L299.3,442.8 L304.0,448.1 L308.9,453.0 L314.2,457.5 L319.6,461.5 L325.3,465.2 L331.2,468.5 L337.3,471.4 L343.5,474.1 L350.0,476.4 L356.7,478.3 L363.8,479.6 L371.4,479.9 L381.5,475.8 L381.5,475.8 M288.0,421.8 L290.5,431.0 L294.1,438.2 L298.2,444.6 L302.7,450.3 L307.6,455.4 L312.7,460.0 L318.1,464.2 L323.7,467.9 L329.6,471.2 L335.8,474.1 L342.1,476.6 L348.6,478.8 L355.5,480.4 L362.8,481.3 L370.7,481.1 L381.5,475.8 L381.5,475.8 M288.0,421.8 L290.0,431.9 L293.3,439.6 L297.2,446.4 L301.5,452.4 L306.2,457.8 L311.2,462.6 L316.5,466.9 L322.2,470.6 L328.1,473.9 L334.2,476.7 L340.6,479.2 L347.3,481.1 L354.3,482.5 L361.7,483.1 L369.9,482.4 L381.5,475.8 L381.5,475.8 M288.0,421.8 L289.5,432.7 L292.5,441.0 L296.1,448.2 L300.3,454.5 L304.8,460.2 L309.7,465.2 L315.0,469.6 L320.6,473.4 L326.5,476.6 L332.7,479.4 L339.2,481.7 L345.9,483.5 L353.1,484.6 L360.7,484.8 L369.2,483.6 L381.5,475.8 L381.5,475.8 M288.0,421.8 L289.0,433.6 L291.7,442.4 L295.1,450.0 L299.0,456.7 L303.4,462.6 L308.2,467.8 L313.4,472.2 L319.0,476.1 L324.9,479.3 L331.2,482.0 L337.7,484.2 L344.6,485.8 L351.9,486.7 L359.7,486.6 L368.5,484.9 L381.5,475.8 L381.5,475.8 M288.0,421.8 L288.5,434.4 L290.9,443.8 L294.1,451.8 L297.8,458.8 L302.0,465.0 L306.8,470.3 L311.9,474.9 L317.4,478.8 L323.4,482.0 L329.6,484.7 L336.2,486.8 L343.2,488.2 L350.6,488.8 L358.7,488.3 L367.8,486.1 L381.5,475.8 L381.5,475.8 M288.0,421.8 L288.0,435.2 L290.1,445.2 L293.0,453.6 L296.6,461.0 L300.7,467.4 L305.3,472.9 L310.3,477.6 L315.9,481.5 L321.8,484.7 L328.1,487.3 L334.8,489.3 L341.9,490.5 L349.4,490.9 L357.7,490.1 L367.1,487.4 L381.5,475.8 L381.5,475.8 M288.0,421.8 L287.5,436.1 L289.3,446.5 L292.0,455.4 L295.3,463.1 L299.3,469.8 L303.8,475.5 L308.8,480.3 L314.3,484.3 L320.2,487.5 L326.6,490.0 L333.3,491.8 L340.5,492.9 L348.2,493.0 L356.7,491.8 L366.3,488.6 L381.5,475.8 L381.5,475.8 M288.0,421.8 L287.1,436.9 L288.5,447.9 L290.9,457.2 L294.1,465.2 L297.9,472.1 L302.3,478.0 L307.2,483.0 L312.7,487.0 L318.7,490.2 L325.0,492.6 L331.8,494.4 L339.1,495.2 L347.0,495.1 L355.7,493.6 L365.6,489.9 L381.5,475.8 L381.5,475.8 M288.0,421.8 L286.6,437.8 L287.7,449.3 L289.9,459.0 L292.9,467.4 L296.5,474.5 L300.8,480.6 L305.7,485.7 L311.1,489.7 L317.1,492.9 L323.5,495.3 L330.4,496.9 L337.8,497.6 L345.8,497.2 L354.7,495.4 L364.9,491.1 L381.5,475.8 L381.5,475.8 M288.0,421.8 L286.1,438.6 L286.9,450.7 L288.8,460.8 L291.6,469.5 L295.1,476.9 L299.3,483.2 L304.1,488.3 L309.6,492.4 L315.5,495.6 L322.0,497.9 L328.9,499.4 L336.4,499.9 L344.6,499.3 L353.6,497.1 L364.2,492.4 L381.5,475.8 L381.5,475.8" clip-path="url(#c21)" fill="none" stroke="#45a080" stroke-width="0.7" stroke-opacity="0.8"/>
<path d="M288.0,421.8 L293.4,417.0 L297.8,413.9 L301.8,411.3 L305.7,409.2 L309.3,407.3 L312.9,405.7 L316.3,404.3 L319.6,403.1 L322.8,402.1 L325.8,401.2 L328.8,400.6 L331.8,400.0 L334.6,399.6 L337.3,399.4 L340.0,399.2 L342.6,399.2 L345.1,399.4 L347.6,399.6 L349.9,400.0 L352.2,400.5 L354.5,401.2 L356.6,401.9 L358.7,402.8 L360.8,403.8 L362.7,404.9 L364.6,406.1 L366.5,407.4 L368.3,408.8 L370.0,410.3 L371.7,411.8 L373.3,413.5 L374.9,415.3 L376.4,417.2 L377.9,419.2 L379.2,421.3 L380.6,423.5 L381.8,425.8 L382.9,428.3 L384.0,431.0 L385.0,433.8 L385.8,436.9 L386.5,440.1 L387.1,443.6 L387.5,447.5 L387.6,451.9 L387.2,456.9 L386.2,463.2 L381.5,475.8 L381.5,475.8 L372.9,486.2 L368.0,490.2 L363.8,493.0 L360.0,495.1 L356.5,496.7 L353.1,498.0 L350.0,499.0 L346.9,499.8 L344.0,500.4 L341.1,500.8 L338.4,501.0 L335.7,501.1 L333.2,501.1 L330.6,500.9 L328.2,500.7 L325.8,500.3 L323.5,499.8 L321.2,499.3 L319.0,498.6 L316.9,497.8 L314.8,497.0 L312.7,496.0 L310.7,495.0 L308.8,493.8 L306.9,492.6 L305.1,491.2 L303.4,489.7 L301.7,488.1 L300.1,486.3 L298.6,484.5 L297.1,482.5 L295.8,480.4 L294.5,478.1 L293.2,475.7 L292.1,473.2 L291.0,470.6 L290.0,467.8 L289.1,464.9 L288.3,461.7 L287.6,458.5 L287.0,455.0 L286.5,451.4 L286.1,447.5 L285.9,443.4 L285.9,439.0 L286.0,434.2 L286.5,428.9 L288.0,421.8Z" clip-path="url(#c21)" fill="none" stroke="#0c3a28" stroke-width="15" stroke-opacity="0.35" stroke-linejoin="round"/>
<path d="M288.0,421.8 L293.4,417.0 L297.8,413.9 L301.8,411.3 L305.7,409.2 L309.3,407.3 L312.9,405.7 L316.3,404.3 L319.6,403.1 L322.8,402.1 L325.8,401.2 L328.8,400.6 L331.8,400.0 L334.6,399.6 L337.3,399.4 L340.0,399.2 L342.6,399.2 L345.1,399.4 L347.6,399.6 L349.9,400.0 L352.2,400.5 L354.5,401.2 L356.6,401.9 L358.7,402.8 L360.8,403.8 L362.7,404.9 L364.6,406.1 L366.5,407.4 L368.3,408.8 L370.0,410.3 L371.7,411.8 L373.3,413.5 L374.9,415.3 L376.4,417.2 L377.9,419.2 L379.2,421.3 L380.6,423.5 L381.8,425.8 L382.9,428.3 L384.0,431.0 L385.0,433.8 L385.8,436.9 L386.5,440.1 L387.1,443.6 L387.5,447.5 L387.6,451.9 L387.2,456.9 L386.2,463.2 L381.5,475.8 L381.5,475.8 L372.9,486.2 L368.0,490.2 L363.8,493.0 L360.0,495.1 L356.5,496.7 L353.1,498.0 L350.0,499.0 L346.9,499.8 L344.0,500.4 L341.1,500.8 L338.4,501.0 L335.7,501.1 L333.2,501.1 L330.6,500.9 L328.2,500.7 L325.8,500.3 L323.5,499.8 L321.2,499.3 L319.0,498.6 L316.9,497.8 L314.8,497.0 L312.7,496.0 L310.7,495.0 L308.8,493.8 L306.9,492.6 L305.1,491.2 L303.4,489.7 L301.7,488.1 L300.1,486.3 L298.6,484.5 L297.1,482.5 L295.8,480.4 L294.5,478.1 L293.2,475.7 L292.1,473.2 L291.0,470.6 L290.0,467.8 L289.1,464.9 L288.3,461.7 L287.6,458.5 L287.0,455.0 L286.5,451.4 L286.1,447.5 L285.9,443.4 L285.9,439.0 L286.0,434.2 L286.5,428.9 L288.0,421.8Z" fill="none" stroke="#237856" stroke-width="8" stroke-linejoin="round"/>
<path d="M288.0,421.8 L293.4,417.0 L297.8,413.9 L301.8,411.3 L305.7,409.2 L309.3,407.3 L312.9,405.7 L316.3,404.3 L319.6,403.1 L322.8,402.1 L325.8,401.2 L328.8,400.6 L331.8,400.0 L334.6,399.6 L337.3,399.4 L340.0,399.2 L342.6,399.2 L345.1,399.4 L347.6,399.6 L349.9,400.0 L352.2,400.5 L354.5,401.2 L356.6,401.9 L358.7,402.8 L360.8,403.8 L362.7,404.9 L364.6,406.1 L366.5,407.4 L368.3,408.8 L370.0,410.3 L371.7,411.8 L373.3,413.5 L374.9,415.3 L376.4,417.2 L377.9,419.2 L379.2,421.3 L380.6,423.5 L381.8,425.8 L382.9,428.3 L384.0,431.0 L385.0,433.8 L385.8,436.9 L386.5,440.1 L387.1,443.6 L387.5,447.5 L387.6,451.9 L387.2,456.9 L386.2,463.2 L381.5,475.8 L381.5,475.8 L372.9,486.2 L368.0,490.2 L363.8,493.0 L360.0,495.1 L356.5,496.7 L353.1,498.0 L350.0,499.0 L346.9,499.8 L344.0,500.4 L341.1,500.8 L338.4,501.0 L335.7,501.1 L333.2,501.1 L330.6,500.9 L328.2,500.7 L325.8,500.3 L323.5,499.8 L321.2,499.3 L319.0,498.6 L316.9,497.8 L314.8,497.0 L312.7,496.0 L310.7,495.0 L308.8,493.8 L306.9,492.6 L305.1,491.2 L303.4,489.7 L301.7,488.1 L300.1,486.3 L298.6,484.5 L297.1,482.5 L295.8,480.4 L294.5,478.1 L293.2,475.7 L292.1,473.2 L291.0,470.6 L290.0,467.8 L289.1,464.9 L288.3,461.7 L287.6,458.5 L287.0,455.0 L286.5,451.4 L286.1,447.5 L285.9,443.4 L285.9,439.0 L286.0,434.2 L286.5,428.9 L288.0,421.8Z" fill="none" stroke="#3e9a76" stroke-width="2" stroke-linejoin="round" opacity="0.55"/>
<path d="M288.0,421.8 L289.5,428.9 L290.0,434.2 L290.1,439.0 L290.1,443.4 L289.9,447.5 L289.5,451.4 L289.0,455.0 L288.4,458.5 L287.7,461.7 L286.9,464.9 L286.0,467.8 L285.0,470.6 L283.9,473.2 L282.8,475.7 L281.5,478.1 L280.2,480.4 L278.9,482.5 L277.4,484.5 L275.9,486.3 L274.3,488.1 L272.6,489.7 L270.9,491.2 L269.1,492.6 L267.2,493.8 L265.3,495.0 L263.3,496.0 L261.2,497.0 L259.1,497.8 L257.0,498.6 L254.8,499.3 L252.5,499.8 L250.2,500.3 L247.8,500.7 L245.4,500.9 L242.8,501.1 L240.3,501.1 L237.6,501.0 L234.9,500.8 L232.0,500.4 L229.1,499.8 L226.0,499.0 L222.9,498.0 L219.5,496.7 L216.0,495.1 L212.2,493.0 L208.0,490.2 L203.1,486.2 L194.5,475.8 L194.5,475.8 L189.8,463.2 L188.8,456.9 L188.4,451.9 L188.5,447.5 L188.9,443.6 L189.5,440.1 L190.2,436.9 L191.0,433.8 L192.0,431.0 L193.1,428.3 L194.2,425.8 L195.4,423.5 L196.8,421.3 L198.1,419.2 L199.6,417.2 L201.1,415.3 L202.7,413.5 L204.3,411.8 L206.0,410.3 L207.7,408.8 L209.5,407.4 L211.4,406.1 L213.3,404.9 L215.2,403.8 L217.3,402.8 L219.4,401.9 L221.5,401.2 L223.8,400.5 L226.1,400.0 L228.4,399.6 L230.9,399.4 L233.4,399.2 L236.0,399.2 L238.7,399.4 L241.4,399.6 L244.2,400.0 L247.2,400.6 L250.2,401.2 L253.2,402.1 L256.4,403.1 L259.7,404.3 L263.1,405.7 L266.7,407.3 L270.3,409.2 L274.2,411.3 L278.2,413.9 L282.6,417.0 L288.0,421.8Z" fill="none" stroke="#0f3f2c" stroke-width="10.5" stroke-linejoin="round"/>
<path d="M288.0,421.8 L289.5,428.9 L290.0,434.2 L290.1,439.0 L290.1,443.4 L289.9,447.5 L289.5,451.4 L289.0,455.0 L288.4,458.5 L287.7,461.7 L286.9,464.9 L286.0,467.8 L285.0,470.6 L283.9,473.2 L282.8,475.7 L281.5,478.1 L280.2,480.4 L278.9,482.5 L277.4,484.5 L275.9,486.3 L274.3,488.1 L272.6,489.7 L270.9,491.2 L269.1,492.6 L267.2,493.8 L265.3,495.0 L263.3,496.0 L261.2,497.0 L259.1,497.8 L257.0,498.6 L254.8,499.3 L252.5,499.8 L250.2,500.3 L247.8,500.7 L245.4,500.9 L242.8,501.1 L240.3,501.1 L237.6,501.0 L234.9,500.8 L232.0,500.4 L229.1,499.8 L226.0,499.0 L222.9,498.0 L219.5,496.7 L216.0,495.1 L212.2,493.0 L208.0,490.2 L203.1,486.2 L194.5,475.8 L194.5,475.8 L189.8,463.2 L188.8,456.9 L188.4,451.9 L188.5,447.5 L188.9,443.6 L189.5,440.1 L190.2,436.9 L191.0,433.8 L192.0,431.0 L193.1,428.3 L194.2,425.8 L195.4,423.5 L196.8,421.3 L198.1,419.2 L199.6,417.2 L201.1,415.3 L202.7,413.5 L204.3,411.8 L206.0,410.3 L207.7,408.8 L209.5,407.4 L211.4,406.1 L213.3,404.9 L215.2,403.8 L217.3,402.8 L219.4,401.9 L221.5,401.2 L223.8,400.5 L226.1,400.0 L228.4,399.6 L230.9,399.4 L233.4,399.2 L236.0,399.2 L238.7,399.4 L241.4,399.6 L244.2,400.0 L247.2,400.6 L250.2,401.2 L253.2,402.1 L256.4,403.1 L259.7,404.3 L263.1,405.7 L266.7,407.3 L270.3,409.2 L274.2,411.3 L278.2,413.9 L282.6,417.0 L288.0,421.8Z" fill="#1b6047"/>
<path d="M288.0,421.8 L289.9,438.6 L289.1,450.7 L287.2,460.8 L284.4,469.5 L280.9,476.9 L276.7,483.2 L271.9,488.3 L266.4,492.4 L260.5,495.6 L254.0,497.9 L247.1,499.4 L239.6,499.9 L231.4,499.3 L222.4,497.1 L211.8,492.4 L194.5,475.8 L194.5,475.8 M288.0,421.8 L289.4,437.8 L288.3,449.3 L286.1,459.0 L283.1,467.4 L279.5,474.5 L275.2,480.6 L270.3,485.7 L264.9,489.7 L258.9,492.9 L252.5,495.3 L245.6,496.9 L238.2,497.6 L230.2,497.2 L221.3,495.4 L211.1,491.1 L194.5,475.8 L194.5,475.8 M288.0,421.8 L288.9,436.9 L287.5,447.9 L285.1,457.2 L281.9,465.2 L278.1,472.1 L273.7,478.0 L268.8,483.0 L263.3,487.0 L257.3,490.2 L251.0,492.6 L244.2,494.4 L236.9,495.2 L229.0,495.1 L220.3,493.6 L210.4,489.9 L194.5,475.8 L194.5,475.8 M288.0,421.8 L288.5,436.1 L286.7,446.5 L284.0,455.4 L280.7,463.1 L276.7,469.8 L272.2,475.5 L267.2,480.3 L261.7,484.3 L255.8,487.5 L249.4,490.0 L242.7,491.8 L235.5,492.9 L227.8,493.0 L219.3,491.8 L209.7,488.6 L194.5,475.8 L194.5,475.8 M288.0,421.8 L288.0,435.2 L285.9,445.2 L283.0,453.6 L279.4,461.0 L275.3,467.4 L270.7,472.9 L265.7,477.6 L260.1,481.5 L254.2,484.7 L247.9,487.3 L241.2,489.3 L234.1,490.5 L226.6,490.9 L218.3,490.1 L208.9,487.4 L194.5,475.8 L194.5,475.8 M288.0,421.8 L287.5,434.4 L285.1,443.8 L281.9,451.8 L278.2,458.8 L274.0,465.0 L269.2,470.3 L264.1,474.9 L258.6,478.8 L252.6,482.0 L246.4,484.7 L239.8,486.8 L232.8,488.2 L225.4,488.8 L217.3,488.3 L208.2,486.1 L194.5,475.8 L194.5,475.8 M288.0,421.8 L287.0,433.6 L284.3,442.4 L280.9,450.0 L277.0,456.7 L272.6,462.6 L267.8,467.8 L262.6,472.2 L257.0,476.1 L251.1,479.3 L244.8,482.0 L238.3,484.2 L231.4,485.8 L224.1,486.7 L216.3,486.6 L207.5,484.9 L194.5,475.8 L194.5,475.8 M288.0,421.8 L286.5,432.7 L283.5,441.0 L279.9,448.2 L275.7,454.5 L271.2,460.2 L266.3,465.2 L261.0,469.6 L255.4,473.4 L249.5,476.6 L243.3,479.4 L236.8,481.7 L230.1,483.5 L222.9,484.6 L215.3,484.8 L206.8,483.6 L194.5,475.8 L194.5,475.8 M288.0,421.8 L286.0,431.9 L282.7,439.6 L278.8,446.4 L274.5,452.4 L269.8,457.8 L264.8,462.6 L259.5,466.9 L253.8,470.6 L247.9,473.9 L241.8,476.7 L235.4,479.2 L228.7,481.1 L221.7,482.5 L214.3,483.1 L206.1,482.4 L194.5,475.8 L194.5,475.8 M288.0,421.8 L285.5,431.0 L281.9,438.2 L277.8,444.6 L273.3,450.3 L268.4,455.4 L263.3,460.0 L257.9,464.2 L252.3,467.9 L246.4,471.2 L240.2,474.1 L233.9,476.6 L227.4,478.8 L220.5,480.4 L213.2,481.3 L205.3,481.1 L194.5,475.8 L194.5,475.8 M288.0,421.8 L285.1,430.2 L281.1,436.9 L276.7,442.8 L272.0,448.1 L267.1,453.0 L261.8,457.5 L256.4,461.5 L250.7,465.2 L244.8,468.5 L238.7,471.4 L232.5,474.1 L226.0,476.4 L219.3,478.3 L212.2,479.6 L204.6,479.9 L194.5,475.8 L194.5,475.8 M288.0,421.8 L284.6,429.4 L280.3,435.5 L275.7,441.0 L270.8,446.0 L265.7,450.6 L260.3,454.9 L254.8,458.8 L249.1,462.4 L243.2,465.7 L237.2,468.8 L231.0,471.6 L224.6,474.1 L218.1,476.2 L211.2,477.8 L203.9,478.7 L194.5,475.8 L194.5,475.8 M288.0,421.8 L284.1,428.5 L279.5,434.1 L274.6,439.2 L269.6,443.9 L264.3,448.2 L258.9,452.3 L253.3,456.2 L247.5,459.7 L241.7,463.0 L235.7,466.1 L229.5,469.0 L223.3,471.7 L216.9,474.1 L210.2,476.1 L203.2,477.4 L194.5,475.8 L194.5,475.8 M288.0,421.8 L283.6,427.7 L278.7,432.7 L273.6,437.3 L268.3,441.7 L262.9,445.8 L257.4,449.8 L251.7,453.5 L246.0,457.0 L240.1,460.3 L234.1,463.5 L228.1,466.5 L221.9,469.4 L215.6,472.0 L209.2,474.3 L202.5,476.2 L194.5,475.8 L194.5,475.8 M288.0,421.8 L283.1,426.9 L277.9,431.3 L272.6,435.5 L267.1,439.6 L261.5,443.5 L255.9,447.2 L250.2,450.8 L244.4,454.3 L238.5,457.6 L232.6,460.8 L226.6,464.0 L220.6,467.0 L214.4,469.9 L208.2,472.6 L201.8,474.9 L194.5,475.8 L194.5,475.8 M288.0,421.8 L282.6,426.0 L277.1,429.9 L271.5,433.7 L265.9,437.4 L260.2,441.1 L254.4,444.6 L248.6,448.1 L242.8,451.5 L237.0,454.9 L231.1,458.2 L225.2,461.5 L219.2,464.7 L213.2,467.8 L207.2,470.8 L201.0,473.7 L194.5,475.8 L194.5,475.8 M288.0,421.8 L282.2,425.2 L276.3,428.6 L270.5,431.9 L264.6,435.3 L258.8,438.7 L252.9,442.1 L247.1,445.4 L241.2,448.8 L235.4,452.2 L229.5,455.6 L223.7,458.9 L217.9,462.3 L212.0,465.7 L206.2,469.1 L200.3,472.4 L194.5,475.8 L194.5,475.8 M288.0,421.8 L281.7,424.3 L275.5,427.2 L269.4,430.1 L263.4,433.2 L257.4,436.3 L251.4,439.5 L245.5,442.7 L239.7,446.1 L233.8,449.5 L228.0,452.9 L222.2,456.4 L216.5,459.9 L210.8,463.6 L205.1,467.3 L199.6,471.2 L194.5,475.8 L194.5,475.8 M288.0,421.8 L281.2,423.5 L274.7,425.8 L268.4,428.3 L262.1,431.0 L256.0,433.9 L250.0,436.9 L244.0,440.1 L238.1,443.3 L232.3,446.7 L226.5,450.3 L220.8,453.9 L215.1,457.6 L209.6,461.5 L204.1,465.5 L198.9,469.9 L194.5,475.8 L194.5,475.8 M288.0,421.8 L280.7,422.7 L273.9,424.4 L267.3,426.5 L260.9,428.9 L254.6,431.5 L248.5,434.3 L242.4,437.4 L236.5,440.6 L230.7,444.0 L225.0,447.6 L219.3,451.3 L213.8,455.2 L208.4,459.4 L203.1,463.8 L198.2,468.7 L194.5,475.8 L194.5,475.8 M288.0,421.8 L280.2,421.8 L273.1,423.0 L266.3,424.7 L259.7,426.7 L253.3,429.1 L247.0,431.8 L240.9,434.7 L234.9,437.9 L229.1,441.3 L223.4,445.0 L217.9,448.8 L212.4,452.9 L207.2,457.3 L202.1,462.0 L197.4,467.4 L194.5,475.8 L194.5,475.8 M288.0,421.8 L279.7,421.0 L272.3,421.6 L265.2,422.9 L258.4,424.6 L251.9,426.7 L245.5,429.2 L239.3,432.0 L233.4,435.2 L227.6,438.6 L221.9,442.3 L216.4,446.3 L211.1,450.5 L205.9,455.2 L201.1,460.3 L196.7,466.2 L194.5,475.8 L194.5,475.8 M288.0,421.8 L279.2,420.1 L271.5,420.2 L264.2,421.1 L257.2,422.5 L250.5,424.3 L244.0,426.6 L237.8,429.3 L231.8,432.4 L226.0,435.9 L220.4,439.7 L214.9,443.7 L209.7,448.2 L204.7,453.1 L200.1,458.5 L196.0,465.0 L194.5,475.8 L194.5,475.8 M288.0,421.8 L278.8,419.3 L270.7,418.9 L263.2,419.3 L256.0,420.3 L249.1,421.9 L242.5,424.1 L236.2,426.7 L230.2,429.7 L224.4,433.2 L218.8,437.0 L213.5,441.2 L208.3,445.8 L203.5,451.0 L199.1,456.8 L195.3,463.7 L194.5,475.8 L194.5,475.8 M288.0,421.8 L278.3,418.5 L269.9,417.5 L262.1,417.5 L254.7,418.2 L247.7,419.6 L241.1,421.5 L234.7,424.0 L228.6,427.0 L222.9,430.5 L217.3,434.4 L212.0,438.7 L207.0,443.5 L202.3,448.9 L198.1,455.0 L194.6,462.5 L194.5,475.8 L194.5,475.8 M288.0,421.8 L277.8,417.6 L269.1,416.1 L261.1,415.7 L253.5,416.1 L246.4,417.2 L239.6,418.9 L233.1,421.3 L227.1,424.2 L221.3,427.8 L215.8,431.7 L210.5,436.1 L205.6,441.1 L201.1,446.8 L197.0,453.3 L193.8,461.2 L194.5,475.8 L194.5,475.8 M288.0,421.8 L277.3,416.8 L268.3,414.7 L260.0,413.8 L252.3,413.9 L245.0,414.8 L238.1,416.3 L231.6,418.6 L225.5,421.5 L219.7,425.0 L214.2,429.1 L209.1,433.6 L204.3,438.8 L199.9,444.7 L196.0,451.5 L193.1,460.0 L194.5,475.8 L194.5,475.8 M288.0,421.8 L276.8,415.9 L267.5,413.3 L259.0,412.0 L251.0,411.8 L243.6,412.4 L236.6,413.8 L230.0,415.9 L223.9,418.8 L218.2,422.3 L212.7,426.4 L207.6,431.1 L202.9,436.4 L198.7,442.6 L195.0,449.8 L192.4,458.7 L194.5,475.8 L194.5,475.8 M288.0,421.8 L276.3,415.1 L266.7,411.9 L257.9,410.2 L249.8,409.6 L242.2,410.0 L235.1,411.2 L228.5,413.2 L222.3,416.1 L216.6,419.6 L211.2,423.8 L206.2,428.6 L201.6,434.1 L197.4,440.5 L194.0,448.0 L191.7,457.5 L194.5,475.8 L194.5,475.8 M288.0,421.8 L275.9,414.3 L265.9,410.6 L256.9,408.4 L248.6,407.5 L240.8,407.6 L233.6,408.6 L227.0,410.6 L220.8,413.3 L215.0,416.9 L209.7,421.1 L204.7,426.0 L200.2,431.7 L196.2,438.4 L193.0,446.3 L191.0,456.2 L194.5,475.8 L194.5,475.8 M288.0,421.8 L275.4,413.4 L265.1,409.2 L255.9,406.6 L247.3,405.4 L239.5,405.2 L232.2,406.1 L225.4,407.9 L219.2,410.6 L213.5,414.2 L208.1,418.5 L203.2,423.5 L198.8,429.4 L195.0,436.3 L192.0,444.5 L190.2,455.0 L194.5,475.8 L194.5,475.8 M288.0,421.8 L274.9,412.6 L264.3,407.8 L254.8,404.8 L246.1,403.2 L238.1,402.8 L230.7,403.5 L223.9,405.2 L217.6,407.9 L211.9,411.5 L206.6,415.8 L201.8,421.0 L197.5,427.0 L193.8,434.2 L191.0,442.7 L189.5,453.7 L194.5,475.8 L194.5,475.8 M288.0,421.8 L274.4,411.8 L263.5,406.4 L253.8,403.0 L244.9,401.1 L236.7,400.4 L229.2,400.9 L222.3,402.5 L216.0,405.2 L210.3,408.8 L205.1,413.2 L200.3,418.4 L196.1,424.7 L192.6,432.1 L190.0,441.0 L188.8,452.5 L194.5,475.8 L194.5,475.8" clip-path="url(#c22)" fill="none" stroke="#45a080" stroke-width="0.7" stroke-opacity="0.8"/>
<path d="M288.0,421.8 L289.5,428.9 L290.0,434.2 L290.1,439.0 L290.1,443.4 L289.9,447.5 L289.5,451.4 L289.0,455.0 L288.4,458.5 L287.7,461.7 L286.9,464.9 L286.0,467.8 L285.0,470.6 L283.9,473.2 L282.8,475.7 L281.5,478.1 L280.2,480.4 L278.9,482.5 L277.4,484.5 L275.9,486.3 L274.3,488.1 L272.6,489.7 L270.9,491.2 L269.1,492.6 L267.2,493.8 L265.3,495.0 L263.3,496.0 L261.2,497.0 L259.1,497.8 L257.0,498.6 L254.8,499.3 L252.5,499.8 L250.2,500.3 L247.8,500.7 L245.4,500.9 L242.8,501.1 L240.3,501.1 L237.6,501.0 L234.9,500.8 L232.0,500.4 L229.1,499.8 L226.0,499.0 L222.9,498.0 L219.5,496.7 L216.0,495.1 L212.2,493.0 L208.0,490.2 L203.1,486.2 L194.5,475.8 L194.5,475.8 L189.8,463.2 L188.8,456.9 L188.4,451.9 L188.5,447.5 L188.9,443.6 L189.5,440.1 L190.2,436.9 L191.0,433.8 L192.0,431.0 L193.1,428.3 L194.2,425.8 L195.4,423.5 L196.8,421.3 L198.1,419.2 L199.6,417.2 L201.1,415.3 L202.7,413.5 L204.3,411.8 L206.0,410.3 L207.7,408.8 L209.5,407.4 L211.4,406.1 L213.3,404.9 L215.2,403.8 L217.3,402.8 L219.4,401.9 L221.5,401.2 L223.8,400.5 L226.1,400.0 L228.4,399.6 L230.9,399.4 L233.4,399.2 L236.0,399.2 L238.7,399.4 L241.4,399.6 L244.2,400.0 L247.2,400.6 L250.2,401.2 L253.2,402.1 L256.4,403.1 L259.7,404.3 L263.1,405.7 L266.7,407.3 L270.3,409.2 L274.2,411.3 L278.2,413.9 L282.6,417.0 L288.0,421.8Z" clip-path="url(#c22)" fill="none" stroke="#0c3a28" stroke-width="15" stroke-opacity="0.35" stroke-linejoin="round"/>
<path d="M288.0,421.8 L289.5,428.9 L290.0,434.2 L290.1,439.0 L290.1,443.4 L289.9,447.5 L289.5,451.4 L289.0,455.0 L288.4,458.5 L287.7,461.7 L286.9,464.9 L286.0,467.8 L285.0,470.6 L283.9,473.2 L282.8,475.7 L281.5,478.1 L280.2,480.4 L278.9,482.5 L277.4,484.5 L275.9,486.3 L274.3,488.1 L272.6,489.7 L270.9,491.2 L269.1,492.6 L267.2,493.8 L265.3,495.0 L263.3,496.0 L261.2,497.0 L259.1,497.8 L257.0,498.6 L254.8,499.3 L252.5,499.8 L250.2,500.3 L247.8,500.7 L245.4,500.9 L242.8,501.1 L240.3,501.1 L237.6,501.0 L234.9,500.8 L232.0,500.4 L229.1,499.8 L226.0,499.0 L222.9,498.0 L219.5,496.7 L216.0,495.1 L212.2,493.0 L208.0,490.2 L203.1,486.2 L194.5,475.8 L194.5,475.8 L189.8,463.2 L188.8,456.9 L188.4,451.9 L188.5,447.5 L188.9,443.6 L189.5,440.1 L190.2,436.9 L191.0,433.8 L192.0,431.0 L193.1,428.3 L194.2,425.8 L195.4,423.5 L196.8,421.3 L198.1,419.2 L199.6,417.2 L201.1,415.3 L202.7,413.5 L204.3,411.8 L206.0,410.3 L207.7,408.8 L209.5,407.4 L211.4,406.1 L213.3,404.9 L215.2,403.8 L217.3,402.8 L219.4,401.9 L221.5,401.2 L223.8,400.5 L226.1,400.0 L228.4,399.6 L230.9,399.4 L233.4,399.2 L236.0,399.2 L238.7,399.4 L241.4,399.6 L244.2,400.0 L247.2,400.6 L250.2,401.2 L253.2,402.1 L256.4,403.1 L259.7,404.3 L263.1,405.7 L266.7,407.3 L270.3,409.2 L274.2,411.3 L278.2,413.9 L282.6,417.0 L288.0,421.8Z" fill="none" stroke="#237856" stroke-width="8" stroke-linejoin="round"/>
<path d="M288.0,421.8 L289.5,428.9 L290.0,434.2 L290.1,439.0 L290.1,443.4 L289.9,447.5 L289.5,451.4 L289.0,455.0 L288.4,458.5 L287.7,461.7 L286.9,464.9 L286.0,467.8 L285.0,470.6 L283.9,473.2 L282.8,475.7 L281.5,478.1 L280.2,480.4 L278.9,482.5 L277.4,484.5 L275.9,486.3 L274.3,488.1 L272.6,489.7 L270.9,491.2 L269.1,492.6 L267.2,493.8 L265.3,495.0 L263.3,496.0 L261.2,497.0 L259.1,497.8 L257.0,498.6 L254.8,499.3 L252.5,499.8 L250.2,500.3 L247.8,500.7 L245.4,500.9 L242.8,501.1 L240.3,501.1 L237.6,501.0 L234.9,500.8 L232.0,500.4 L229.1,499.8 L226.0,499.0 L222.9,498.0 L219.5,496.7 L216.0,495.1 L212.2,493.0 L208.0,490.2 L203.1,486.2 L194.5,475.8 L194.5,475.8 L189.8,463.2 L188.8,456.9 L188.4,451.9 L188.5,447.5 L188.9,443.6 L189.5,440.1 L190.2,436.9 L191.0,433.8 L192.0,431.0 L193.1,428.3 L194.2,425.8 L195.4,423.5 L196.8,421.3 L198.1,419.2 L199.6,417.2 L201.1,415.3 L202.7,413.5 L204.3,411.8 L206.0,410.3 L207.7,408.8 L209.5,407.4 L211.4,406.1 L213.3,404.9 L215.2,403.8 L217.3,402.8 L219.4,401.9 L221.5,401.2 L223.8,400.5 L226.1,400.0 L228.4,399.6 L230.9,399.4 L233.4,399.2 L236.0,399.2 L238.7,399.4 L241.4,399.6 L244.2,400.0 L247.2,400.6 L250.2,401.2 L253.2,402.1 L256.4,403.1 L259.7,404.3 L263.1,405.7 L266.7,407.3 L270.3,409.2 L274.2,411.3 L278.2,413.9 L282.6,417.0 L288.0,421.8Z" fill="none" stroke="#3e9a76" stroke-width="2" stroke-linejoin="round" opacity="0.55"/>
<circle cx="288.0" cy="421.8" r="58.5" fill="#0e3a29"/>
<circle cx="288.0" cy="421.8" r="57" fill="url(#dome)"/>
<circle cx="288.0" cy="421.8" r="57" fill="url(#domeR)"/>
<ellipse cx="286.0" cy="401.8" rx="6" ry="18" fill="url(#spec)" opacity="0.6"/>
<ellipse cx="310.0" cy="435.8" rx="16" ry="9" fill="url(#spec)" opacity="0.6" transform="rotate(30 310.0 435.8)"/>
<rect x="275.5" y="64" width="25" height="84" rx="12.5" fill="url(#bail)"/>
<rect x="276" y="104" width="24" height="10" fill="#3a9070" opacity="0.35"/>
</svg>
<div class="dome"></div>
<div class="dlg">
 <div class="tb"><div class="ico"><svg width="25" height="25" viewBox="0 0 25 25"><ellipse cx="11.6" cy="17.8" rx="11" ry="4.8" fill="#1c5cf0" stroke="#7fb0ff" stroke-width="1"/><path d="M13.5 2 L6.9 20 M13.5 2 L23 18" stroke="#a8c8ff" stroke-width="1.1" fill="none"/><path d="M10.5 5 L12.5 12 M13.5 2 L8 12" stroke="#2040c0" stroke-width="1.4" fill="none"/><path d="M0.5 4.2 L9 4.2" stroke="#a8dcff" stroke-width="1.8"/></svg></div>
 <div class="tab"><span class="ttl">METAL WEIGHTS</span></div><div class="tbr"></div>
 <div class="cls"><svg width="14" height="14" viewBox="0 0 14 14"><path d="M3.5 3.5 L10.5 10.5 M10.5 3.5 L3.5 10.5" stroke="#d83a3a" stroke-width="1"/></svg></div></div>
 <div class="lib">Library: Fifth Ave - (Slow)-Metal</div>
 <div class="tg" style="left:206px;top:34.3px;width:36px;height:16.5px"><span class="tgt">GV</span><div class="teal" style="left:21px"></div></div>
 <div class="tg" style="left:246.2px;top:34.3px;width:44.8px;height:16.5px"><span class="tgt">User</span><div class="teal" style="left:29.3px"></div></div>
 <div class="tbl">
  <div class="hdr"><span class="h0">Metal</span><span class="h1">Grams</span><span class="h2">DWT</span><span class="h3">SPG</span><i class="sep"></i></div>
  <div class="row" style="top:24.10px"><span class="c0">Yellow Gold:9KY</span><span class="c1">3.26</span><span class="c2">2.10</span><span class="c3">11.08</span><i class="sep"></i></div>
<div class="row" style="top:40.10px"><span class="c0">Yellow Gold:10KY</span><span class="c1">3.37</span><span class="c2">2.17</span><span class="c3">11.45</span><i class="sep"></i></div>
<div class="row" style="top:56.10px"><span class="c0">Yellow Gold:14KY</span><span class="c1">3.79</span><span class="c2">2.44</span><span class="c3">12.88</span><i class="sep"></i></div>
<div class="row" style="top:72.10px"><span class="c0">Yellow Gold:18KY</span><span class="c1">4.54</span><span class="c2">2.92</span><span class="c3">15.41</span><i class="sep"></i></div>
<div class="row" style="top:88.10px"><span class="c0">Yellow Gold:18KY R...</span><span class="c1">4.54</span><span class="c2">2.92</span><span class="c3">15.41</span><i class="sep"></i></div>
<div class="row" style="top:104.10px"><span class="c0">Yellow Gold:22KY</span><span class="c1">5.27</span><span class="c2">3.39</span><span class="c3">17.89</span><i class="sep"></i></div>
<div class="row" style="top:120.10px"><span class="c0">White Gold:9K PdW</span><span class="c1">3.71</span><span class="c2">2.38</span><span class="c3">12.59</span><i class="sep"></i></div>
<div class="row" style="top:136.10px"><span class="c0">White Gold:10KX1</span><span class="c1">3.29</span><span class="c2">2.12</span><span class="c3">11.18</span><i class="sep"></i></div>
<div class="row" style="top:152.10px"><span class="c0">White Gold:10KW</span><span class="c1">3.24</span><span class="c2">2.08</span><span class="c3">10.99</span><i class="sep"></i></div>
<div class="row" style="top:168.10px"><span class="c0">White Gold:14KX1</span><span class="c1">3.71</span><span class="c2">2.39</span><span class="c3">12.61</span><i class="sep"></i></div>
<div class="row" style="top:184.10px"><span class="c0">White Gold:14K PdW</span><span class="c1">4.23</span><span class="c2">2.72</span><span class="c3">14.37</span><i class="sep"></i></div>
  <div class="vsb"></div><div class="hsb"></div>
 </div>
 <div class="uom">Use Object Materials<div class="gbtn"><svg width="13" height="13" viewBox="0 0 13 13"><circle cx="6.6" cy="6.6" r="3.6" fill="none" stroke="#b8b8b8" stroke-width="1"/></svg></div></div>
 <div class="msg">Highlight the item you want to find the weight<br>for then press calculate.</div>
 <div class="calc">Calculate<div class="gplay"><svg width="14" height="13" viewBox="0 0 14 13"><path d="M5 2.5 L10 6.5 L5 10.5Z" fill="#fff"/></svg></div></div>
</div>
</body></html>
